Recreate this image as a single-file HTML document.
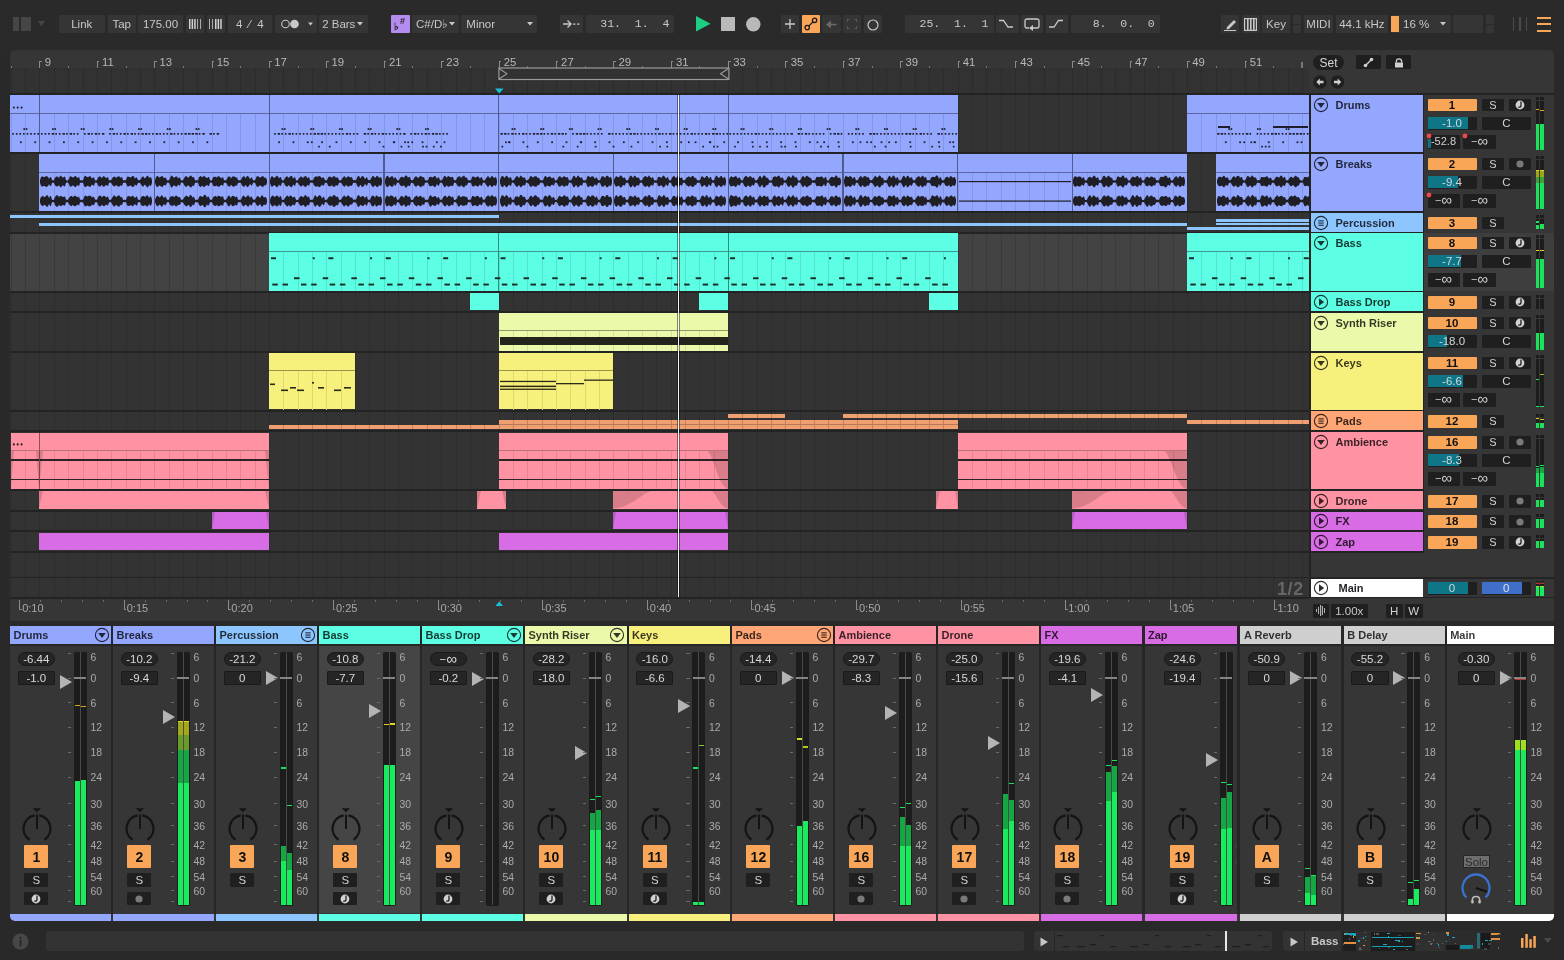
<!DOCTYPE html>
<html><head><meta charset="utf-8"><style>
html,body{margin:0;padding:0;}
body{width:1564px;height:960px;overflow:hidden;background:#292929;position:relative;font-family:"Liberation Sans", sans-serif;}
div,svg{position:absolute;box-sizing:border-box;}
.t{position:absolute;}
</style></head><body><div style="left:0;top:0;width:1564px;height:960px;overflow:hidden;will-change:transform;">
<div style="left:0px;top:0px;width:1564px;height:50px;background:#2a2a2a;"></div>
<div style="left:13px;top:17px;width:5.5px;height:14px;background:#464646;"></div>
<div style="left:20.8px;top:17px;width:10.5px;height:14px;background:#464646;"></div>
<svg style="left:38.2px;top:21.4px;" width="7" height="5.5" viewBox="0 0 7 5.5"><path d="M0 0 L6.8 0 L3.4 5.4 Z" fill="#464646"/></svg>
<div style="left:58.5px;top:15px;width:46.5px;height:18px;background:#353535;border-radius:1px;font-family:'Liberation Sans', sans-serif;font-size:11.5px;color:#c8c8c8;font-weight:normal;line-height:18px;text-align:center;white-space:nowrap;overflow:hidden;">Link</div>
<div style="left:107.7px;top:15px;width:28.1px;height:18px;background:#353535;border-radius:1px;font-family:'Liberation Sans', sans-serif;font-size:11.5px;color:#c8c8c8;font-weight:normal;line-height:18px;text-align:center;white-space:nowrap;overflow:hidden;">Tap</div>
<div style="left:138px;top:15px;width:45px;height:18px;background:#353535;border-radius:1px;font-family:'Liberation Sans', sans-serif;font-size:11.5px;color:#c8c8c8;font-weight:normal;line-height:18px;text-align:center;white-space:nowrap;overflow:hidden;">175.00</div>
<div style="left:186px;top:15px;width:18px;height:18px;background:#353535;border-radius:1px;font-family:'Liberation Sans', sans-serif;font-size:11.5px;color:#c8c8c8;font-weight:normal;line-height:18px;text-align:center;white-space:nowrap;overflow:hidden;"></div>
<svg style="left:189px;top:19px;" width="13" height="10" viewBox="0 0 13 10"><rect x="0" y="0" width="1.5" height="10" fill="#d0d0d0"/><rect x="2.6" y="0" width="1.5" height="10" fill="#d0d0d0"/><rect x="5.2" y="0" width="1.5" height="10" fill="#d0d0d0"/><rect x="8" y="0" width="1" height="10" fill="#aaa"/><rect x="11" y="0" width="1" height="10" fill="#aaa"/></svg>
<div style="left:206.5px;top:15px;width:18.3px;height:18px;background:#353535;border-radius:1px;font-family:'Liberation Sans', sans-serif;font-size:11.5px;color:#c8c8c8;font-weight:normal;line-height:18px;text-align:center;white-space:nowrap;overflow:hidden;"></div>
<svg style="left:209px;top:19px;" width="13" height="10" viewBox="0 0 13 10"><rect x="0" y="0" width="1" height="10" fill="#aaa"/><rect x="3" y="0" width="1" height="10" fill="#aaa"/><rect x="6" y="0" width="1.5" height="10" fill="#d0d0d0"/><rect x="8.6" y="0" width="1.5" height="10" fill="#d0d0d0"/><rect x="11.2" y="0" width="1.5" height="10" fill="#d0d0d0"/></svg>
<div style="left:227.6px;top:15px;width:44.4px;height:18px;background:#353535;border-radius:1px;font-family:'Liberation Sans', sans-serif;font-size:11.5px;color:#c8c8c8;font-weight:normal;line-height:18px;text-align:center;white-space:nowrap;overflow:hidden;">4&nbsp;&nbsp;&#8260;&nbsp;&nbsp;4</div>
<div style="left:275px;top:15px;width:41.7px;height:18px;background:#353535;border-radius:1px;font-family:'Liberation Sans', sans-serif;font-size:11.5px;color:#c8c8c8;font-weight:normal;line-height:18px;text-align:center;white-space:nowrap;overflow:hidden;"></div>
<svg style="left:281px;top:19px;" width="35" height="10" viewBox="0 0 35 10"><circle cx="4.5" cy="5" r="3.8" fill="none" stroke="#c8c8c8" stroke-width="1.1"/><circle cx="13.5" cy="5" r="4.3" fill="#c8c8c8"/><path d="M27 3.5 L32 3.5 L29.5 6.5 Z" fill="#c8c8c8"/></svg>
<div style="left:319.3px;top:15px;width:48.5px;height:18px;background:#353535;border-radius:1px;font-family:'Liberation Sans', sans-serif;font-size:11.5px;color:#c8c8c8;font-weight:normal;line-height:18px;text-align:center;white-space:nowrap;overflow:hidden;">2 Bars&nbsp;&nbsp;&nbsp;</div>
<svg style="left:357px;top:21.5px;" width="6" height="4" viewBox="0 0 6 4"><path d="M0 0 L6 0 L3 3.5 Z" fill="#c8c8c8"/></svg>
<div style="left:391px;top:15px;width:18.6px;height:18px;background:#b48cf0;border-radius:1px;font-family:'Liberation Sans', sans-serif;font-size:11.5px;color:#c8c8c8;font-weight:normal;line-height:18px;text-align:center;white-space:nowrap;overflow:hidden;"></div>
<div class="t" style="left:393.5px;top:22px;font-size:10px;color:#222;font-weight:bold;font-family:'Liberation Sans', sans-serif;line-height:1;white-space:nowrap;">&#9837;</div>
<div class="t" style="left:400px;top:16.5px;font-size:9px;color:#222;font-weight:bold;font-family:'Liberation Sans', sans-serif;line-height:1;white-space:nowrap;">#</div>
<div style="left:411.7px;top:15px;width:47.3px;height:18px;background:#353535;border-radius:1px;font-family:'Liberation Sans', sans-serif;font-size:11.5px;color:#c8c8c8;font-weight:normal;line-height:18px;text-align:center;white-space:nowrap;overflow:hidden;">C#/D&#9837;&nbsp;&nbsp;</div>
<svg style="left:449px;top:21.5px;" width="6" height="4" viewBox="0 0 6 4"><path d="M0 0 L6 0 L3 3.5 Z" fill="#c8c8c8"/></svg>
<div style="left:461.3px;top:15px;width:76.1px;height:18px;background:#353535;border-radius:1px;font-family:'Liberation Sans', sans-serif;font-size:11.5px;color:#c8c8c8;font-weight:normal;line-height:18px;text-align:left;white-space:nowrap;overflow:hidden;box-sizing:border-box;padding:0 5px;">Minor</div>
<svg style="left:527px;top:21.5px;" width="6" height="4" viewBox="0 0 6 4"><path d="M0 0 L6 0 L3 3.5 Z" fill="#c8c8c8"/></svg>
<div style="left:560.4px;top:15px;width:22.2px;height:18px;background:#353535;border-radius:1px;font-family:'Liberation Sans', sans-serif;font-size:11.5px;color:#c8c8c8;font-weight:normal;line-height:18px;text-align:center;white-space:nowrap;overflow:hidden;"></div>
<svg style="left:563px;top:19px;" width="17" height="10" viewBox="0 0 17 10"><path d="M0 5 L8 5 M4.5 1.5 L8 5 L4.5 8.5" stroke="#c8c8c8" stroke-width="1.4" fill="none"/><rect x="10" y="4.5" width="2.5" height="1.2" fill="#c8c8c8"/><rect x="14" y="4.5" width="2.5" height="1.2" fill="#c8c8c8"/></svg>
<div style="left:585.9px;top:15px;width:88.4px;height:18px;background:#353535;border-radius:1px;font-family:'Liberation Mono', monospace;font-size:11.5px;color:#c8c8c8;font-weight:normal;line-height:18px;text-align:right;white-space:nowrap;overflow:hidden;box-sizing:border-box;padding:0 5px;">31.&nbsp;&nbsp;1.&nbsp;&nbsp;4</div>
<svg style="left:696px;top:16.3px;" width="15" height="16" viewBox="0 0 15 16"><path d="M0 0 L14.5 7.8 L0 15.6 Z" fill="#1fcc84"/></svg>
<div style="left:721px;top:17px;width:14.2px;height:14.3px;background:#b9b9b9;"></div>
<svg style="left:746px;top:17px;" width="15" height="15" viewBox="0 0 15 15"><circle cx="7.3" cy="7.3" r="7.2" fill="#b9b9b9"/></svg>
<div style="left:781px;top:15px;width:18px;height:18px;background:#353535;border-radius:1px;font-family:'Liberation Sans', sans-serif;font-size:11.5px;color:#c8c8c8;font-weight:normal;line-height:18px;text-align:center;white-space:nowrap;overflow:hidden;"></div>
<svg style="left:785px;top:19px;" width="10" height="10" viewBox="0 0 10 10"><path d="M5 0 V10 M0 5 H10" stroke="#c8c8c8" stroke-width="1.3"/></svg>
<div style="left:801.5px;top:15px;width:18.5px;height:18px;background:#f9a658;border-radius:1px;font-family:'Liberation Sans', sans-serif;font-size:11.5px;color:#c8c8c8;font-weight:normal;line-height:18px;text-align:center;white-space:nowrap;overflow:hidden;"></div>
<svg style="left:804px;top:17px;" width="14" height="14" viewBox="0 0 14 14"><circle cx="3.2" cy="10.6" r="2.2" fill="none" stroke="#1a1a1a" stroke-width="1.3"/><circle cx="10.6" cy="3.3" r="2.2" fill="none" stroke="#1a1a1a" stroke-width="1.3"/><path d="M4.7 9.1 L9.1 4.8" stroke="#1a1a1a" stroke-width="1.3"/></svg>
<div style="left:822px;top:15px;width:18.6px;height:18px;background:#353535;border-radius:1px;font-family:'Liberation Sans', sans-serif;font-size:11.5px;color:#c8c8c8;font-weight:normal;line-height:18px;text-align:center;white-space:nowrap;overflow:hidden;"></div>
<svg style="left:826px;top:20px;" width="11" height="9" viewBox="0 0 11 9"><path d="M0 4.5 L5 0.5 V8.5 Z" fill="#6a6a6a"/><rect x="4" y="3.8" width="6.5" height="1.5" fill="#6a6a6a"/></svg>
<div style="left:842.8px;top:15px;width:18.1px;height:18px;background:#353535;border-radius:1px;font-family:'Liberation Sans', sans-serif;font-size:11.5px;color:#c8c8c8;font-weight:normal;line-height:18px;text-align:center;white-space:nowrap;overflow:hidden;"></div>
<svg style="left:847px;top:19px;" width="10" height="10" viewBox="0 0 10 10"><path d="M0 3 V0 H3 M7 0 H10 V3 M10 7 V10 H7 M3 10 H0 V7" stroke="#6a6a6a" stroke-width="1.2" fill="none"/></svg>
<div style="left:863.5px;top:15px;width:18.5px;height:18px;background:#353535;border-radius:1px;font-family:'Liberation Sans', sans-serif;font-size:11.5px;color:#c8c8c8;font-weight:normal;line-height:18px;text-align:center;white-space:nowrap;overflow:hidden;"></div>
<svg style="left:866.5px;top:18.5px;" width="12" height="12" viewBox="0 0 12 12"><circle cx="6" cy="6" r="5" fill="none" stroke="#c8c8c8" stroke-width="1.2"/></svg>
<div style="left:905px;top:15px;width:88.5px;height:18px;background:#353535;border-radius:1px;font-family:'Liberation Mono', monospace;font-size:11.5px;color:#c8c8c8;font-weight:normal;line-height:18px;text-align:right;white-space:nowrap;overflow:hidden;box-sizing:border-box;padding:0 5px;">25.&nbsp;&nbsp;1.&nbsp;&nbsp;1</div>
<div style="left:995.9px;top:15px;width:22.8px;height:18px;background:#353535;border-radius:1px;font-family:'Liberation Sans', sans-serif;font-size:11.5px;color:#c8c8c8;font-weight:normal;line-height:18px;text-align:center;white-space:nowrap;overflow:hidden;"></div>
<svg style="left:999px;top:19px;" width="16" height="10" viewBox="0 0 16 10"><path d="M0 1.5 H4.5 L9 8 H14" stroke="#c8c8c8" stroke-width="1.3" fill="none"/></svg>
<div style="left:1020.9px;top:15px;width:22.6px;height:18px;background:#353535;border-radius:1px;font-family:'Liberation Sans', sans-serif;font-size:11.5px;color:#c8c8c8;font-weight:normal;line-height:18px;text-align:center;white-space:nowrap;overflow:hidden;"></div>
<svg style="left:1024px;top:17.5px;" width="17" height="14" viewBox="0 0 17 14"><path d="M9 10 H13 Q15 10 15 8 V3 Q15 1 13 1 H3 Q1 1 1 3 V8 Q1 10 3 10 H5" stroke="#c8c8c8" stroke-width="1.3" fill="none"/><path d="M5 7 L9 10 L5 13 Z" fill="#c8c8c8" transform="translate(14 0) scale(-1 1)"/></svg>
<div style="left:1045.9px;top:15px;width:22.6px;height:18px;background:#353535;border-radius:1px;font-family:'Liberation Sans', sans-serif;font-size:11.5px;color:#c8c8c8;font-weight:normal;line-height:18px;text-align:center;white-space:nowrap;overflow:hidden;"></div>
<svg style="left:1049px;top:19px;" width="16" height="10" viewBox="0 0 16 10"><path d="M0 8 H5 L9.5 1.5 H14" stroke="#c8c8c8" stroke-width="1.3" fill="none"/></svg>
<div style="left:1070.9px;top:15px;width:88.9px;height:18px;background:#353535;border-radius:1px;font-family:'Liberation Mono', monospace;font-size:11.5px;color:#c8c8c8;font-weight:normal;line-height:18px;text-align:right;white-space:nowrap;overflow:hidden;box-sizing:border-box;padding:0 5px;">8.&nbsp;&nbsp;0.&nbsp;&nbsp;0</div>
<div style="left:1221.3px;top:15px;width:17.7px;height:18px;background:#353535;border-radius:1px;font-family:'Liberation Sans', sans-serif;font-size:11.5px;color:#c8c8c8;font-weight:normal;line-height:18px;text-align:center;white-space:nowrap;overflow:hidden;"></div>
<svg style="left:1223px;top:17px;" width="14" height="14" viewBox="0 0 14 14"><path d="M4 10 L11 3 L13 5 L6 12 L3.5 12.5 Z" fill="#c8c8c8"/><rect x="1" y="13" width="12" height="1.2" fill="#c8c8c8"/></svg>
<div style="left:1241.7px;top:15px;width:18.1px;height:18px;background:#353535;border-radius:1px;font-family:'Liberation Sans', sans-serif;font-size:11.5px;color:#c8c8c8;font-weight:normal;line-height:18px;text-align:center;white-space:nowrap;overflow:hidden;"></div>
<svg style="left:1244px;top:17.5px;" width="13" height="13" viewBox="0 0 13 13"><rect x="0.6" y="0.6" width="11.8" height="11.8" fill="none" stroke="#c8c8c8" stroke-width="1.2"/><rect x="3" y="1" width="1.6" height="11" fill="#c8c8c8"/><rect x="6" y="1" width="1.6" height="11" fill="#c8c8c8"/><rect x="9" y="1" width="1.6" height="11" fill="#c8c8c8"/></svg>
<div style="left:1262px;top:15px;width:28px;height:18px;background:#353535;border-radius:1px;font-family:'Liberation Sans', sans-serif;font-size:11.5px;color:#c8c8c8;font-weight:normal;line-height:18px;text-align:center;white-space:nowrap;overflow:hidden;">Key</div>
<div style="left:1292.6px;top:15px;width:8.4px;height:8.7px;background:#353535;border-radius:1px;font-family:'Liberation Sans', sans-serif;font-size:11.5px;color:#c8c8c8;font-weight:normal;line-height:8.7px;text-align:center;white-space:nowrap;overflow:hidden;"></div>
<div style="left:1292.6px;top:24.5px;width:8.4px;height:8.5px;background:#353535;border-radius:1px;font-family:'Liberation Sans', sans-serif;font-size:11.5px;color:#c8c8c8;font-weight:normal;line-height:8.5px;text-align:center;white-space:nowrap;overflow:hidden;"></div>
<div style="left:1303.5px;top:15px;width:29.9px;height:18px;background:#353535;border-radius:1px;font-family:'Liberation Sans', sans-serif;font-size:11.5px;color:#c8c8c8;font-weight:normal;line-height:18px;text-align:center;white-space:nowrap;overflow:hidden;">MIDI</div>
<div style="left:1336px;top:15px;width:51.7px;height:18px;background:#353535;border-radius:1px;font-family:'Liberation Sans', sans-serif;font-size:11.5px;color:#c8c8c8;font-weight:normal;line-height:18px;text-align:center;white-space:nowrap;overflow:hidden;">44.1 kHz</div>
<div style="left:1391px;top:15px;width:59.6px;height:18px;background:#353535;border-radius:1px;font-family:'Liberation Sans', sans-serif;font-size:11.5px;color:#c8c8c8;font-weight:normal;line-height:18px;text-align:left;white-space:nowrap;overflow:hidden;box-sizing:border-box;padding:0 12px;">16 %</div>
<div style="left:1391px;top:16px;width:8px;height:16.4px;background:#f9a658;"></div>
<svg style="left:1440px;top:21.5px;" width="6" height="4" viewBox="0 0 6 4"><path d="M0 0 L6 0 L3 3.5 Z" fill="#c8c8c8"/></svg>
<div style="left:1453.3px;top:15px;width:30.1px;height:18px;background:#353535;border-radius:1px;font-family:'Liberation Sans', sans-serif;font-size:11.5px;color:#c8c8c8;font-weight:normal;line-height:18px;text-align:center;white-space:nowrap;overflow:hidden;"></div>
<div style="left:1485.7px;top:15px;width:8.3px;height:8.7px;background:#353535;border-radius:1px;font-family:'Liberation Sans', sans-serif;font-size:11.5px;color:#c8c8c8;font-weight:normal;line-height:8.7px;text-align:center;white-space:nowrap;overflow:hidden;"></div>
<div style="left:1485.7px;top:24.5px;width:8.3px;height:8.5px;background:#353535;border-radius:1px;font-family:'Liberation Sans', sans-serif;font-size:11.5px;color:#c8c8c8;font-weight:normal;line-height:8.5px;text-align:center;white-space:nowrap;overflow:hidden;"></div>
<div style="left:1512.7px;top:17px;width:1.3px;height:14px;background:#4a4a4a;"></div>
<div style="left:1519.3px;top:17px;width:1.3px;height:14px;background:#4a4a4a;"></div>
<div style="left:1525.8px;top:17px;width:1.3px;height:14px;background:#4a4a4a;"></div>
<div style="left:1537px;top:16.8px;width:13.6px;height:2px;background:#f9a658;"></div>
<div style="left:1537px;top:23.3px;width:13.6px;height:2px;background:#f9a658;"></div>
<div style="left:1537px;top:29.8px;width:13.6px;height:2px;background:#f9a658;"></div>
<div style="left:10px;top:50px;width:1544px;height:571px;background:#363636;border-radius:5px 5px 0 0;"></div>
<div style="left:10px;top:68px;width:1299px;height:25px;background:#323232;"></div>
<div style="left:10px;top:95px;width:1299px;height:503px;background:#333333;"></div>
<div style="left:10px;top:93px;width:1544px;height:2px;background:#232323;"></div>
<div style="left:1309px;top:95px;width:2px;height:503px;background:#232323;"></div>
<div style="left:10.79px;top:68px;width:1px;height:25px;background:#2b2b2b;"></div>
<div style="left:10.79px;top:95px;width:1px;height:503px;background:#2d2d2d;"></div>
<div style="left:25.13px;top:68px;width:1px;height:25px;background:#2b2b2b;"></div>
<div style="left:25.13px;top:95px;width:1px;height:503px;background:#2d2d2d;"></div>
<div style="left:39.48px;top:68px;width:1px;height:25px;background:#2b2b2b;"></div>
<div style="left:39.48px;top:95px;width:1px;height:503px;background:#2d2d2d;"></div>
<div style="left:53.83px;top:68px;width:1px;height:25px;background:#2b2b2b;"></div>
<div style="left:53.83px;top:95px;width:1px;height:503px;background:#2d2d2d;"></div>
<div style="left:68.17px;top:68px;width:1px;height:25px;background:#2b2b2b;"></div>
<div style="left:68.17px;top:95px;width:1px;height:503px;background:#2d2d2d;"></div>
<div style="left:82.52px;top:68px;width:1px;height:25px;background:#2b2b2b;"></div>
<div style="left:82.52px;top:95px;width:1px;height:503px;background:#2d2d2d;"></div>
<div style="left:96.86px;top:68px;width:1px;height:25px;background:#2b2b2b;"></div>
<div style="left:96.86px;top:95px;width:1px;height:503px;background:#2d2d2d;"></div>
<div style="left:111.21px;top:68px;width:1px;height:25px;background:#2b2b2b;"></div>
<div style="left:111.21px;top:95px;width:1px;height:503px;background:#2d2d2d;"></div>
<div style="left:125.55px;top:68px;width:1px;height:25px;background:#2b2b2b;"></div>
<div style="left:125.55px;top:95px;width:1px;height:503px;background:#2d2d2d;"></div>
<div style="left:139.9px;top:68px;width:1px;height:25px;background:#2b2b2b;"></div>
<div style="left:139.9px;top:95px;width:1px;height:503px;background:#2d2d2d;"></div>
<div style="left:154.25px;top:68px;width:1px;height:25px;background:#2b2b2b;"></div>
<div style="left:154.25px;top:95px;width:1px;height:503px;background:#2d2d2d;"></div>
<div style="left:168.59px;top:68px;width:1px;height:25px;background:#2b2b2b;"></div>
<div style="left:168.59px;top:95px;width:1px;height:503px;background:#2d2d2d;"></div>
<div style="left:182.94px;top:68px;width:1px;height:25px;background:#2b2b2b;"></div>
<div style="left:182.94px;top:95px;width:1px;height:503px;background:#2d2d2d;"></div>
<div style="left:197.28px;top:68px;width:1px;height:25px;background:#2b2b2b;"></div>
<div style="left:197.28px;top:95px;width:1px;height:503px;background:#2d2d2d;"></div>
<div style="left:211.63px;top:68px;width:1px;height:25px;background:#2b2b2b;"></div>
<div style="left:211.63px;top:95px;width:1px;height:503px;background:#2d2d2d;"></div>
<div style="left:225.97px;top:68px;width:1px;height:25px;background:#2b2b2b;"></div>
<div style="left:225.97px;top:95px;width:1px;height:503px;background:#2d2d2d;"></div>
<div style="left:240.32px;top:68px;width:1px;height:25px;background:#2b2b2b;"></div>
<div style="left:240.32px;top:95px;width:1px;height:503px;background:#2d2d2d;"></div>
<div style="left:254.66px;top:68px;width:1px;height:25px;background:#2b2b2b;"></div>
<div style="left:254.66px;top:95px;width:1px;height:503px;background:#2d2d2d;"></div>
<div style="left:269.01px;top:68px;width:1px;height:25px;background:#2b2b2b;"></div>
<div style="left:269.01px;top:95px;width:1px;height:503px;background:#2d2d2d;"></div>
<div style="left:283.36px;top:68px;width:1px;height:25px;background:#2b2b2b;"></div>
<div style="left:283.36px;top:95px;width:1px;height:503px;background:#2d2d2d;"></div>
<div style="left:297.7px;top:68px;width:1px;height:25px;background:#2b2b2b;"></div>
<div style="left:297.7px;top:95px;width:1px;height:503px;background:#2d2d2d;"></div>
<div style="left:312.05px;top:68px;width:1px;height:25px;background:#2b2b2b;"></div>
<div style="left:312.05px;top:95px;width:1px;height:503px;background:#2d2d2d;"></div>
<div style="left:326.39px;top:68px;width:1px;height:25px;background:#2b2b2b;"></div>
<div style="left:326.39px;top:95px;width:1px;height:503px;background:#2d2d2d;"></div>
<div style="left:340.74px;top:68px;width:1px;height:25px;background:#2b2b2b;"></div>
<div style="left:340.74px;top:95px;width:1px;height:503px;background:#2d2d2d;"></div>
<div style="left:355.08px;top:68px;width:1px;height:25px;background:#2b2b2b;"></div>
<div style="left:355.08px;top:95px;width:1px;height:503px;background:#2d2d2d;"></div>
<div style="left:369.43px;top:68px;width:1px;height:25px;background:#2b2b2b;"></div>
<div style="left:369.43px;top:95px;width:1px;height:503px;background:#2d2d2d;"></div>
<div style="left:383.78px;top:68px;width:1px;height:25px;background:#2b2b2b;"></div>
<div style="left:383.78px;top:95px;width:1px;height:503px;background:#2d2d2d;"></div>
<div style="left:398.12px;top:68px;width:1px;height:25px;background:#2b2b2b;"></div>
<div style="left:398.12px;top:95px;width:1px;height:503px;background:#2d2d2d;"></div>
<div style="left:412.47px;top:68px;width:1px;height:25px;background:#2b2b2b;"></div>
<div style="left:412.47px;top:95px;width:1px;height:503px;background:#2d2d2d;"></div>
<div style="left:426.81px;top:68px;width:1px;height:25px;background:#2b2b2b;"></div>
<div style="left:426.81px;top:95px;width:1px;height:503px;background:#2d2d2d;"></div>
<div style="left:441.16px;top:68px;width:1px;height:25px;background:#2b2b2b;"></div>
<div style="left:441.16px;top:95px;width:1px;height:503px;background:#2d2d2d;"></div>
<div style="left:455.5px;top:68px;width:1px;height:25px;background:#2b2b2b;"></div>
<div style="left:455.5px;top:95px;width:1px;height:503px;background:#2d2d2d;"></div>
<div style="left:469.85px;top:68px;width:1px;height:25px;background:#2b2b2b;"></div>
<div style="left:469.85px;top:95px;width:1px;height:503px;background:#2d2d2d;"></div>
<div style="left:484.2px;top:68px;width:1px;height:25px;background:#2b2b2b;"></div>
<div style="left:484.2px;top:95px;width:1px;height:503px;background:#2d2d2d;"></div>
<div style="left:498.54px;top:68px;width:1px;height:25px;background:#2b2b2b;"></div>
<div style="left:498.54px;top:95px;width:1px;height:503px;background:#2d2d2d;"></div>
<div style="left:512.89px;top:68px;width:1px;height:25px;background:#2b2b2b;"></div>
<div style="left:512.89px;top:95px;width:1px;height:503px;background:#2d2d2d;"></div>
<div style="left:527.23px;top:68px;width:1px;height:25px;background:#2b2b2b;"></div>
<div style="left:527.23px;top:95px;width:1px;height:503px;background:#2d2d2d;"></div>
<div style="left:541.58px;top:68px;width:1px;height:25px;background:#2b2b2b;"></div>
<div style="left:541.58px;top:95px;width:1px;height:503px;background:#2d2d2d;"></div>
<div style="left:555.92px;top:68px;width:1px;height:25px;background:#2b2b2b;"></div>
<div style="left:555.92px;top:95px;width:1px;height:503px;background:#2d2d2d;"></div>
<div style="left:570.27px;top:68px;width:1px;height:25px;background:#2b2b2b;"></div>
<div style="left:570.27px;top:95px;width:1px;height:503px;background:#2d2d2d;"></div>
<div style="left:584.61px;top:68px;width:1px;height:25px;background:#2b2b2b;"></div>
<div style="left:584.61px;top:95px;width:1px;height:503px;background:#2d2d2d;"></div>
<div style="left:598.96px;top:68px;width:1px;height:25px;background:#2b2b2b;"></div>
<div style="left:598.96px;top:95px;width:1px;height:503px;background:#2d2d2d;"></div>
<div style="left:613.31px;top:68px;width:1px;height:25px;background:#2b2b2b;"></div>
<div style="left:613.31px;top:95px;width:1px;height:503px;background:#2d2d2d;"></div>
<div style="left:627.65px;top:68px;width:1px;height:25px;background:#2b2b2b;"></div>
<div style="left:627.65px;top:95px;width:1px;height:503px;background:#2d2d2d;"></div>
<div style="left:642px;top:68px;width:1px;height:25px;background:#2b2b2b;"></div>
<div style="left:642px;top:95px;width:1px;height:503px;background:#2d2d2d;"></div>
<div style="left:656.34px;top:68px;width:1px;height:25px;background:#2b2b2b;"></div>
<div style="left:656.34px;top:95px;width:1px;height:503px;background:#2d2d2d;"></div>
<div style="left:670.69px;top:68px;width:1px;height:25px;background:#2b2b2b;"></div>
<div style="left:670.69px;top:95px;width:1px;height:503px;background:#2d2d2d;"></div>
<div style="left:685.03px;top:68px;width:1px;height:25px;background:#2b2b2b;"></div>
<div style="left:685.03px;top:95px;width:1px;height:503px;background:#2d2d2d;"></div>
<div style="left:699.38px;top:68px;width:1px;height:25px;background:#2b2b2b;"></div>
<div style="left:699.38px;top:95px;width:1px;height:503px;background:#2d2d2d;"></div>
<div style="left:713.73px;top:68px;width:1px;height:25px;background:#2b2b2b;"></div>
<div style="left:713.73px;top:95px;width:1px;height:503px;background:#2d2d2d;"></div>
<div style="left:728.07px;top:68px;width:1px;height:25px;background:#2b2b2b;"></div>
<div style="left:728.07px;top:95px;width:1px;height:503px;background:#2d2d2d;"></div>
<div style="left:742.42px;top:68px;width:1px;height:25px;background:#2b2b2b;"></div>
<div style="left:742.42px;top:95px;width:1px;height:503px;background:#2d2d2d;"></div>
<div style="left:756.76px;top:68px;width:1px;height:25px;background:#2b2b2b;"></div>
<div style="left:756.76px;top:95px;width:1px;height:503px;background:#2d2d2d;"></div>
<div style="left:771.11px;top:68px;width:1px;height:25px;background:#2b2b2b;"></div>
<div style="left:771.11px;top:95px;width:1px;height:503px;background:#2d2d2d;"></div>
<div style="left:785.45px;top:68px;width:1px;height:25px;background:#2b2b2b;"></div>
<div style="left:785.45px;top:95px;width:1px;height:503px;background:#2d2d2d;"></div>
<div style="left:799.8px;top:68px;width:1px;height:25px;background:#2b2b2b;"></div>
<div style="left:799.8px;top:95px;width:1px;height:503px;background:#2d2d2d;"></div>
<div style="left:814.15px;top:68px;width:1px;height:25px;background:#2b2b2b;"></div>
<div style="left:814.15px;top:95px;width:1px;height:503px;background:#2d2d2d;"></div>
<div style="left:828.49px;top:68px;width:1px;height:25px;background:#2b2b2b;"></div>
<div style="left:828.49px;top:95px;width:1px;height:503px;background:#2d2d2d;"></div>
<div style="left:842.84px;top:68px;width:1px;height:25px;background:#2b2b2b;"></div>
<div style="left:842.84px;top:95px;width:1px;height:503px;background:#2d2d2d;"></div>
<div style="left:857.18px;top:68px;width:1px;height:25px;background:#2b2b2b;"></div>
<div style="left:857.18px;top:95px;width:1px;height:503px;background:#2d2d2d;"></div>
<div style="left:871.53px;top:68px;width:1px;height:25px;background:#2b2b2b;"></div>
<div style="left:871.53px;top:95px;width:1px;height:503px;background:#2d2d2d;"></div>
<div style="left:885.87px;top:68px;width:1px;height:25px;background:#2b2b2b;"></div>
<div style="left:885.87px;top:95px;width:1px;height:503px;background:#2d2d2d;"></div>
<div style="left:900.22px;top:68px;width:1px;height:25px;background:#2b2b2b;"></div>
<div style="left:900.22px;top:95px;width:1px;height:503px;background:#2d2d2d;"></div>
<div style="left:914.56px;top:68px;width:1px;height:25px;background:#2b2b2b;"></div>
<div style="left:914.56px;top:95px;width:1px;height:503px;background:#2d2d2d;"></div>
<div style="left:928.91px;top:68px;width:1px;height:25px;background:#2b2b2b;"></div>
<div style="left:928.91px;top:95px;width:1px;height:503px;background:#2d2d2d;"></div>
<div style="left:943.26px;top:68px;width:1px;height:25px;background:#2b2b2b;"></div>
<div style="left:943.26px;top:95px;width:1px;height:503px;background:#2d2d2d;"></div>
<div style="left:957.6px;top:68px;width:1px;height:25px;background:#2b2b2b;"></div>
<div style="left:957.6px;top:95px;width:1px;height:503px;background:#2d2d2d;"></div>
<div style="left:971.95px;top:68px;width:1px;height:25px;background:#2b2b2b;"></div>
<div style="left:971.95px;top:95px;width:1px;height:503px;background:#2d2d2d;"></div>
<div style="left:986.29px;top:68px;width:1px;height:25px;background:#2b2b2b;"></div>
<div style="left:986.29px;top:95px;width:1px;height:503px;background:#2d2d2d;"></div>
<div style="left:1000.64px;top:68px;width:1px;height:25px;background:#2b2b2b;"></div>
<div style="left:1000.64px;top:95px;width:1px;height:503px;background:#2d2d2d;"></div>
<div style="left:1014.98px;top:68px;width:1px;height:25px;background:#2b2b2b;"></div>
<div style="left:1014.98px;top:95px;width:1px;height:503px;background:#2d2d2d;"></div>
<div style="left:1029.33px;top:68px;width:1px;height:25px;background:#2b2b2b;"></div>
<div style="left:1029.33px;top:95px;width:1px;height:503px;background:#2d2d2d;"></div>
<div style="left:1043.68px;top:68px;width:1px;height:25px;background:#2b2b2b;"></div>
<div style="left:1043.68px;top:95px;width:1px;height:503px;background:#2d2d2d;"></div>
<div style="left:1058.02px;top:68px;width:1px;height:25px;background:#2b2b2b;"></div>
<div style="left:1058.02px;top:95px;width:1px;height:503px;background:#2d2d2d;"></div>
<div style="left:1072.37px;top:68px;width:1px;height:25px;background:#2b2b2b;"></div>
<div style="left:1072.37px;top:95px;width:1px;height:503px;background:#2d2d2d;"></div>
<div style="left:1086.71px;top:68px;width:1px;height:25px;background:#2b2b2b;"></div>
<div style="left:1086.71px;top:95px;width:1px;height:503px;background:#2d2d2d;"></div>
<div style="left:1101.06px;top:68px;width:1px;height:25px;background:#2b2b2b;"></div>
<div style="left:1101.06px;top:95px;width:1px;height:503px;background:#2d2d2d;"></div>
<div style="left:1115.4px;top:68px;width:1px;height:25px;background:#2b2b2b;"></div>
<div style="left:1115.4px;top:95px;width:1px;height:503px;background:#2d2d2d;"></div>
<div style="left:1129.75px;top:68px;width:1px;height:25px;background:#2b2b2b;"></div>
<div style="left:1129.75px;top:95px;width:1px;height:503px;background:#2d2d2d;"></div>
<div style="left:1144.1px;top:68px;width:1px;height:25px;background:#2b2b2b;"></div>
<div style="left:1144.1px;top:95px;width:1px;height:503px;background:#2d2d2d;"></div>
<div style="left:1158.44px;top:68px;width:1px;height:25px;background:#2b2b2b;"></div>
<div style="left:1158.44px;top:95px;width:1px;height:503px;background:#2d2d2d;"></div>
<div style="left:1172.79px;top:68px;width:1px;height:25px;background:#2b2b2b;"></div>
<div style="left:1172.79px;top:95px;width:1px;height:503px;background:#2d2d2d;"></div>
<div style="left:1187.13px;top:68px;width:1px;height:25px;background:#2b2b2b;"></div>
<div style="left:1187.13px;top:95px;width:1px;height:503px;background:#2d2d2d;"></div>
<div style="left:1201.48px;top:68px;width:1px;height:25px;background:#2b2b2b;"></div>
<div style="left:1201.48px;top:95px;width:1px;height:503px;background:#2d2d2d;"></div>
<div style="left:1215.82px;top:68px;width:1px;height:25px;background:#2b2b2b;"></div>
<div style="left:1215.82px;top:95px;width:1px;height:503px;background:#2d2d2d;"></div>
<div style="left:1230.17px;top:68px;width:1px;height:25px;background:#2b2b2b;"></div>
<div style="left:1230.17px;top:95px;width:1px;height:503px;background:#2d2d2d;"></div>
<div style="left:1244.51px;top:68px;width:1px;height:25px;background:#2b2b2b;"></div>
<div style="left:1244.51px;top:95px;width:1px;height:503px;background:#2d2d2d;"></div>
<div style="left:1258.86px;top:68px;width:1px;height:25px;background:#2b2b2b;"></div>
<div style="left:1258.86px;top:95px;width:1px;height:503px;background:#2d2d2d;"></div>
<div style="left:1273.21px;top:68px;width:1px;height:25px;background:#2b2b2b;"></div>
<div style="left:1273.21px;top:95px;width:1px;height:503px;background:#2d2d2d;"></div>
<div style="left:1287.55px;top:68px;width:1px;height:25px;background:#2b2b2b;"></div>
<div style="left:1287.55px;top:95px;width:1px;height:503px;background:#2d2d2d;"></div>
<div style="left:1301.9px;top:68px;width:1px;height:25px;background:#2b2b2b;"></div>
<div style="left:1301.9px;top:95px;width:1px;height:503px;background:#2d2d2d;"></div>
<div style="left:10px;top:233px;width:1299px;height:57.5px;background:#434343;"></div>
<div style="left:10.79px;top:233px;width:1px;height:57.5px;background:#3a3a3a;"></div>
<div style="left:25.13px;top:233px;width:1px;height:57.5px;background:#3a3a3a;"></div>
<div style="left:39.48px;top:233px;width:1px;height:57.5px;background:#3a3a3a;"></div>
<div style="left:53.83px;top:233px;width:1px;height:57.5px;background:#3a3a3a;"></div>
<div style="left:68.17px;top:233px;width:1px;height:57.5px;background:#3a3a3a;"></div>
<div style="left:82.52px;top:233px;width:1px;height:57.5px;background:#3a3a3a;"></div>
<div style="left:96.86px;top:233px;width:1px;height:57.5px;background:#3a3a3a;"></div>
<div style="left:111.21px;top:233px;width:1px;height:57.5px;background:#3a3a3a;"></div>
<div style="left:125.55px;top:233px;width:1px;height:57.5px;background:#3a3a3a;"></div>
<div style="left:139.9px;top:233px;width:1px;height:57.5px;background:#3a3a3a;"></div>
<div style="left:154.25px;top:233px;width:1px;height:57.5px;background:#3a3a3a;"></div>
<div style="left:168.59px;top:233px;width:1px;height:57.5px;background:#3a3a3a;"></div>
<div style="left:182.94px;top:233px;width:1px;height:57.5px;background:#3a3a3a;"></div>
<div style="left:197.28px;top:233px;width:1px;height:57.5px;background:#3a3a3a;"></div>
<div style="left:211.63px;top:233px;width:1px;height:57.5px;background:#3a3a3a;"></div>
<div style="left:225.97px;top:233px;width:1px;height:57.5px;background:#3a3a3a;"></div>
<div style="left:240.32px;top:233px;width:1px;height:57.5px;background:#3a3a3a;"></div>
<div style="left:254.66px;top:233px;width:1px;height:57.5px;background:#3a3a3a;"></div>
<div style="left:269.01px;top:233px;width:1px;height:57.5px;background:#3a3a3a;"></div>
<div style="left:283.36px;top:233px;width:1px;height:57.5px;background:#3a3a3a;"></div>
<div style="left:297.7px;top:233px;width:1px;height:57.5px;background:#3a3a3a;"></div>
<div style="left:312.05px;top:233px;width:1px;height:57.5px;background:#3a3a3a;"></div>
<div style="left:326.39px;top:233px;width:1px;height:57.5px;background:#3a3a3a;"></div>
<div style="left:340.74px;top:233px;width:1px;height:57.5px;background:#3a3a3a;"></div>
<div style="left:355.08px;top:233px;width:1px;height:57.5px;background:#3a3a3a;"></div>
<div style="left:369.43px;top:233px;width:1px;height:57.5px;background:#3a3a3a;"></div>
<div style="left:383.78px;top:233px;width:1px;height:57.5px;background:#3a3a3a;"></div>
<div style="left:398.12px;top:233px;width:1px;height:57.5px;background:#3a3a3a;"></div>
<div style="left:412.47px;top:233px;width:1px;height:57.5px;background:#3a3a3a;"></div>
<div style="left:426.81px;top:233px;width:1px;height:57.5px;background:#3a3a3a;"></div>
<div style="left:441.16px;top:233px;width:1px;height:57.5px;background:#3a3a3a;"></div>
<div style="left:455.5px;top:233px;width:1px;height:57.5px;background:#3a3a3a;"></div>
<div style="left:469.85px;top:233px;width:1px;height:57.5px;background:#3a3a3a;"></div>
<div style="left:484.2px;top:233px;width:1px;height:57.5px;background:#3a3a3a;"></div>
<div style="left:498.54px;top:233px;width:1px;height:57.5px;background:#3a3a3a;"></div>
<div style="left:512.89px;top:233px;width:1px;height:57.5px;background:#3a3a3a;"></div>
<div style="left:527.23px;top:233px;width:1px;height:57.5px;background:#3a3a3a;"></div>
<div style="left:541.58px;top:233px;width:1px;height:57.5px;background:#3a3a3a;"></div>
<div style="left:555.92px;top:233px;width:1px;height:57.5px;background:#3a3a3a;"></div>
<div style="left:570.27px;top:233px;width:1px;height:57.5px;background:#3a3a3a;"></div>
<div style="left:584.61px;top:233px;width:1px;height:57.5px;background:#3a3a3a;"></div>
<div style="left:598.96px;top:233px;width:1px;height:57.5px;background:#3a3a3a;"></div>
<div style="left:613.31px;top:233px;width:1px;height:57.5px;background:#3a3a3a;"></div>
<div style="left:627.65px;top:233px;width:1px;height:57.5px;background:#3a3a3a;"></div>
<div style="left:642px;top:233px;width:1px;height:57.5px;background:#3a3a3a;"></div>
<div style="left:656.34px;top:233px;width:1px;height:57.5px;background:#3a3a3a;"></div>
<div style="left:670.69px;top:233px;width:1px;height:57.5px;background:#3a3a3a;"></div>
<div style="left:685.03px;top:233px;width:1px;height:57.5px;background:#3a3a3a;"></div>
<div style="left:699.38px;top:233px;width:1px;height:57.5px;background:#3a3a3a;"></div>
<div style="left:713.73px;top:233px;width:1px;height:57.5px;background:#3a3a3a;"></div>
<div style="left:728.07px;top:233px;width:1px;height:57.5px;background:#3a3a3a;"></div>
<div style="left:742.42px;top:233px;width:1px;height:57.5px;background:#3a3a3a;"></div>
<div style="left:756.76px;top:233px;width:1px;height:57.5px;background:#3a3a3a;"></div>
<div style="left:771.11px;top:233px;width:1px;height:57.5px;background:#3a3a3a;"></div>
<div style="left:785.45px;top:233px;width:1px;height:57.5px;background:#3a3a3a;"></div>
<div style="left:799.8px;top:233px;width:1px;height:57.5px;background:#3a3a3a;"></div>
<div style="left:814.15px;top:233px;width:1px;height:57.5px;background:#3a3a3a;"></div>
<div style="left:828.49px;top:233px;width:1px;height:57.5px;background:#3a3a3a;"></div>
<div style="left:842.84px;top:233px;width:1px;height:57.5px;background:#3a3a3a;"></div>
<div style="left:857.18px;top:233px;width:1px;height:57.5px;background:#3a3a3a;"></div>
<div style="left:871.53px;top:233px;width:1px;height:57.5px;background:#3a3a3a;"></div>
<div style="left:885.87px;top:233px;width:1px;height:57.5px;background:#3a3a3a;"></div>
<div style="left:900.22px;top:233px;width:1px;height:57.5px;background:#3a3a3a;"></div>
<div style="left:914.56px;top:233px;width:1px;height:57.5px;background:#3a3a3a;"></div>
<div style="left:928.91px;top:233px;width:1px;height:57.5px;background:#3a3a3a;"></div>
<div style="left:943.26px;top:233px;width:1px;height:57.5px;background:#3a3a3a;"></div>
<div style="left:957.6px;top:233px;width:1px;height:57.5px;background:#3a3a3a;"></div>
<div style="left:971.95px;top:233px;width:1px;height:57.5px;background:#3a3a3a;"></div>
<div style="left:986.29px;top:233px;width:1px;height:57.5px;background:#3a3a3a;"></div>
<div style="left:1000.64px;top:233px;width:1px;height:57.5px;background:#3a3a3a;"></div>
<div style="left:1014.98px;top:233px;width:1px;height:57.5px;background:#3a3a3a;"></div>
<div style="left:1029.33px;top:233px;width:1px;height:57.5px;background:#3a3a3a;"></div>
<div style="left:1043.68px;top:233px;width:1px;height:57.5px;background:#3a3a3a;"></div>
<div style="left:1058.02px;top:233px;width:1px;height:57.5px;background:#3a3a3a;"></div>
<div style="left:1072.37px;top:233px;width:1px;height:57.5px;background:#3a3a3a;"></div>
<div style="left:1086.71px;top:233px;width:1px;height:57.5px;background:#3a3a3a;"></div>
<div style="left:1101.06px;top:233px;width:1px;height:57.5px;background:#3a3a3a;"></div>
<div style="left:1115.4px;top:233px;width:1px;height:57.5px;background:#3a3a3a;"></div>
<div style="left:1129.75px;top:233px;width:1px;height:57.5px;background:#3a3a3a;"></div>
<div style="left:1144.1px;top:233px;width:1px;height:57.5px;background:#3a3a3a;"></div>
<div style="left:1158.44px;top:233px;width:1px;height:57.5px;background:#3a3a3a;"></div>
<div style="left:1172.79px;top:233px;width:1px;height:57.5px;background:#3a3a3a;"></div>
<div style="left:1187.13px;top:233px;width:1px;height:57.5px;background:#3a3a3a;"></div>
<div style="left:1201.48px;top:233px;width:1px;height:57.5px;background:#3a3a3a;"></div>
<div style="left:1215.82px;top:233px;width:1px;height:57.5px;background:#3a3a3a;"></div>
<div style="left:1230.17px;top:233px;width:1px;height:57.5px;background:#3a3a3a;"></div>
<div style="left:1244.51px;top:233px;width:1px;height:57.5px;background:#3a3a3a;"></div>
<div style="left:1258.86px;top:233px;width:1px;height:57.5px;background:#3a3a3a;"></div>
<div style="left:1273.21px;top:233px;width:1px;height:57.5px;background:#3a3a3a;"></div>
<div style="left:1287.55px;top:233px;width:1px;height:57.5px;background:#3a3a3a;"></div>
<div style="left:1301.9px;top:233px;width:1px;height:57.5px;background:#3a3a3a;"></div>
<div style="left:10px;top:152px;width:1544px;height:2px;background:#232323;"></div>
<div style="left:10px;top:211px;width:1544px;height:2px;background:#232323;"></div>
<div style="left:10px;top:231.5px;width:1544px;height:2px;background:#232323;"></div>
<div style="left:10px;top:290.5px;width:1544px;height:2px;background:#232323;"></div>
<div style="left:10px;top:311.3px;width:1544px;height:2px;background:#232323;"></div>
<div style="left:10px;top:351px;width:1544px;height:2px;background:#232323;"></div>
<div style="left:10px;top:409.5px;width:1544px;height:2px;background:#232323;"></div>
<div style="left:10px;top:430.3px;width:1544px;height:2px;background:#232323;"></div>
<div style="left:10px;top:489px;width:1544px;height:2px;background:#232323;"></div>
<div style="left:10px;top:509.5px;width:1544px;height:2px;background:#232323;"></div>
<div style="left:10px;top:530px;width:1544px;height:2px;background:#232323;"></div>
<div style="left:10px;top:550.8px;width:1544px;height:2px;background:#232323;"></div>
<div style="left:10px;top:550.8px;width:1544px;height:2px;background:#232323;"></div>
<div style="left:10px;top:576.5px;width:1544px;height:1.8px;background:#232323;"></div>
<div style="left:10px;top:597px;width:1299px;height:1.5px;background:#232323;"></div>
<div style="left:10.79px;top:66px;width:1px;height:1.5px;background:#777;"></div>
<div style="left:39.48px;top:60.5px;width:1px;height:7px;background:#8a8a8a;"></div>
<div style="left:39.48px;top:60.5px;width:2.5px;height:1px;background:#8a8a8a;"></div>
<div class="t" style="left:44.68px;top:57px;font-size:11.3px;color:#b8b8b8;font-weight:normal;font-family:'Liberation Sans', sans-serif;line-height:1;white-space:nowrap;">9</div>
<div style="left:68.17px;top:66px;width:1px;height:1.5px;background:#777;"></div>
<div style="left:96.86px;top:60.5px;width:1px;height:7px;background:#8a8a8a;"></div>
<div style="left:96.86px;top:60.5px;width:2.5px;height:1px;background:#8a8a8a;"></div>
<div class="t" style="left:102.06px;top:57px;font-size:11.3px;color:#b8b8b8;font-weight:normal;font-family:'Liberation Sans', sans-serif;line-height:1;white-space:nowrap;">11</div>
<div style="left:125.55px;top:66px;width:1px;height:1.5px;background:#777;"></div>
<div style="left:154.25px;top:60.5px;width:1px;height:7px;background:#8a8a8a;"></div>
<div style="left:154.25px;top:60.5px;width:2.5px;height:1px;background:#8a8a8a;"></div>
<div class="t" style="left:159.45px;top:57px;font-size:11.3px;color:#b8b8b8;font-weight:normal;font-family:'Liberation Sans', sans-serif;line-height:1;white-space:nowrap;">13</div>
<div style="left:182.94px;top:66px;width:1px;height:1.5px;background:#777;"></div>
<div style="left:211.63px;top:60.5px;width:1px;height:7px;background:#8a8a8a;"></div>
<div style="left:211.63px;top:60.5px;width:2.5px;height:1px;background:#8a8a8a;"></div>
<div class="t" style="left:216.83px;top:57px;font-size:11.3px;color:#b8b8b8;font-weight:normal;font-family:'Liberation Sans', sans-serif;line-height:1;white-space:nowrap;">15</div>
<div style="left:240.32px;top:66px;width:1px;height:1.5px;background:#777;"></div>
<div style="left:269.01px;top:60.5px;width:1px;height:7px;background:#8a8a8a;"></div>
<div style="left:269.01px;top:60.5px;width:2.5px;height:1px;background:#8a8a8a;"></div>
<div class="t" style="left:274.21px;top:57px;font-size:11.3px;color:#b8b8b8;font-weight:normal;font-family:'Liberation Sans', sans-serif;line-height:1;white-space:nowrap;">17</div>
<div style="left:297.7px;top:66px;width:1px;height:1.5px;background:#777;"></div>
<div style="left:326.39px;top:60.5px;width:1px;height:7px;background:#8a8a8a;"></div>
<div style="left:326.39px;top:60.5px;width:2.5px;height:1px;background:#8a8a8a;"></div>
<div class="t" style="left:331.59px;top:57px;font-size:11.3px;color:#b8b8b8;font-weight:normal;font-family:'Liberation Sans', sans-serif;line-height:1;white-space:nowrap;">19</div>
<div style="left:355.08px;top:66px;width:1px;height:1.5px;background:#777;"></div>
<div style="left:383.78px;top:60.5px;width:1px;height:7px;background:#8a8a8a;"></div>
<div style="left:383.78px;top:60.5px;width:2.5px;height:1px;background:#8a8a8a;"></div>
<div class="t" style="left:388.98px;top:57px;font-size:11.3px;color:#b8b8b8;font-weight:normal;font-family:'Liberation Sans', sans-serif;line-height:1;white-space:nowrap;">21</div>
<div style="left:412.47px;top:66px;width:1px;height:1.5px;background:#777;"></div>
<div style="left:441.16px;top:60.5px;width:1px;height:7px;background:#8a8a8a;"></div>
<div style="left:441.16px;top:60.5px;width:2.5px;height:1px;background:#8a8a8a;"></div>
<div class="t" style="left:446.36px;top:57px;font-size:11.3px;color:#b8b8b8;font-weight:normal;font-family:'Liberation Sans', sans-serif;line-height:1;white-space:nowrap;">23</div>
<div style="left:469.85px;top:66px;width:1px;height:1.5px;background:#777;"></div>
<div style="left:498.54px;top:60.5px;width:1px;height:7px;background:#8a8a8a;"></div>
<div style="left:498.54px;top:60.5px;width:2.5px;height:1px;background:#8a8a8a;"></div>
<div class="t" style="left:503.74px;top:57px;font-size:11.3px;color:#b8b8b8;font-weight:normal;font-family:'Liberation Sans', sans-serif;line-height:1;white-space:nowrap;">25</div>
<div style="left:527.23px;top:66px;width:1px;height:1.5px;background:#777;"></div>
<div style="left:555.92px;top:60.5px;width:1px;height:7px;background:#8a8a8a;"></div>
<div style="left:555.92px;top:60.5px;width:2.5px;height:1px;background:#8a8a8a;"></div>
<div class="t" style="left:561.12px;top:57px;font-size:11.3px;color:#b8b8b8;font-weight:normal;font-family:'Liberation Sans', sans-serif;line-height:1;white-space:nowrap;">27</div>
<div style="left:584.61px;top:66px;width:1px;height:1.5px;background:#777;"></div>
<div style="left:613.31px;top:60.5px;width:1px;height:7px;background:#8a8a8a;"></div>
<div style="left:613.31px;top:60.5px;width:2.5px;height:1px;background:#8a8a8a;"></div>
<div class="t" style="left:618.51px;top:57px;font-size:11.3px;color:#b8b8b8;font-weight:normal;font-family:'Liberation Sans', sans-serif;line-height:1;white-space:nowrap;">29</div>
<div style="left:642px;top:66px;width:1px;height:1.5px;background:#777;"></div>
<div style="left:670.69px;top:60.5px;width:1px;height:7px;background:#8a8a8a;"></div>
<div style="left:670.69px;top:60.5px;width:2.5px;height:1px;background:#8a8a8a;"></div>
<div class="t" style="left:675.89px;top:57px;font-size:11.3px;color:#b8b8b8;font-weight:normal;font-family:'Liberation Sans', sans-serif;line-height:1;white-space:nowrap;">31</div>
<div style="left:699.38px;top:66px;width:1px;height:1.5px;background:#777;"></div>
<div style="left:728.07px;top:60.5px;width:1px;height:7px;background:#8a8a8a;"></div>
<div style="left:728.07px;top:60.5px;width:2.5px;height:1px;background:#8a8a8a;"></div>
<div class="t" style="left:733.27px;top:57px;font-size:11.3px;color:#b8b8b8;font-weight:normal;font-family:'Liberation Sans', sans-serif;line-height:1;white-space:nowrap;">33</div>
<div style="left:756.76px;top:66px;width:1px;height:1.5px;background:#777;"></div>
<div style="left:785.45px;top:60.5px;width:1px;height:7px;background:#8a8a8a;"></div>
<div style="left:785.45px;top:60.5px;width:2.5px;height:1px;background:#8a8a8a;"></div>
<div class="t" style="left:790.65px;top:57px;font-size:11.3px;color:#b8b8b8;font-weight:normal;font-family:'Liberation Sans', sans-serif;line-height:1;white-space:nowrap;">35</div>
<div style="left:814.15px;top:66px;width:1px;height:1.5px;background:#777;"></div>
<div style="left:842.84px;top:60.5px;width:1px;height:7px;background:#8a8a8a;"></div>
<div style="left:842.84px;top:60.5px;width:2.5px;height:1px;background:#8a8a8a;"></div>
<div class="t" style="left:848.04px;top:57px;font-size:11.3px;color:#b8b8b8;font-weight:normal;font-family:'Liberation Sans', sans-serif;line-height:1;white-space:nowrap;">37</div>
<div style="left:871.53px;top:66px;width:1px;height:1.5px;background:#777;"></div>
<div style="left:900.22px;top:60.5px;width:1px;height:7px;background:#8a8a8a;"></div>
<div style="left:900.22px;top:60.5px;width:2.5px;height:1px;background:#8a8a8a;"></div>
<div class="t" style="left:905.42px;top:57px;font-size:11.3px;color:#b8b8b8;font-weight:normal;font-family:'Liberation Sans', sans-serif;line-height:1;white-space:nowrap;">39</div>
<div style="left:928.91px;top:66px;width:1px;height:1.5px;background:#777;"></div>
<div style="left:957.6px;top:60.5px;width:1px;height:7px;background:#8a8a8a;"></div>
<div style="left:957.6px;top:60.5px;width:2.5px;height:1px;background:#8a8a8a;"></div>
<div class="t" style="left:962.8px;top:57px;font-size:11.3px;color:#b8b8b8;font-weight:normal;font-family:'Liberation Sans', sans-serif;line-height:1;white-space:nowrap;">41</div>
<div style="left:986.29px;top:66px;width:1px;height:1.5px;background:#777;"></div>
<div style="left:1014.98px;top:60.5px;width:1px;height:7px;background:#8a8a8a;"></div>
<div style="left:1014.98px;top:60.5px;width:2.5px;height:1px;background:#8a8a8a;"></div>
<div class="t" style="left:1020.18px;top:57px;font-size:11.3px;color:#b8b8b8;font-weight:normal;font-family:'Liberation Sans', sans-serif;line-height:1;white-space:nowrap;">43</div>
<div style="left:1043.68px;top:66px;width:1px;height:1.5px;background:#777;"></div>
<div style="left:1072.37px;top:60.5px;width:1px;height:7px;background:#8a8a8a;"></div>
<div style="left:1072.37px;top:60.5px;width:2.5px;height:1px;background:#8a8a8a;"></div>
<div class="t" style="left:1077.57px;top:57px;font-size:11.3px;color:#b8b8b8;font-weight:normal;font-family:'Liberation Sans', sans-serif;line-height:1;white-space:nowrap;">45</div>
<div style="left:1101.06px;top:66px;width:1px;height:1.5px;background:#777;"></div>
<div style="left:1129.75px;top:60.5px;width:1px;height:7px;background:#8a8a8a;"></div>
<div style="left:1129.75px;top:60.5px;width:2.5px;height:1px;background:#8a8a8a;"></div>
<div class="t" style="left:1134.95px;top:57px;font-size:11.3px;color:#b8b8b8;font-weight:normal;font-family:'Liberation Sans', sans-serif;line-height:1;white-space:nowrap;">47</div>
<div style="left:1158.44px;top:66px;width:1px;height:1.5px;background:#777;"></div>
<div style="left:1187.13px;top:60.5px;width:1px;height:7px;background:#8a8a8a;"></div>
<div style="left:1187.13px;top:60.5px;width:2.5px;height:1px;background:#8a8a8a;"></div>
<div class="t" style="left:1192.33px;top:57px;font-size:11.3px;color:#b8b8b8;font-weight:normal;font-family:'Liberation Sans', sans-serif;line-height:1;white-space:nowrap;">49</div>
<div style="left:1215.82px;top:66px;width:1px;height:1.5px;background:#777;"></div>
<div style="left:1244.51px;top:60.5px;width:1px;height:7px;background:#8a8a8a;"></div>
<div style="left:1244.51px;top:60.5px;width:2.5px;height:1px;background:#8a8a8a;"></div>
<div class="t" style="left:1249.71px;top:57px;font-size:11.3px;color:#b8b8b8;font-weight:normal;font-family:'Liberation Sans', sans-serif;line-height:1;white-space:nowrap;">51</div>
<div style="left:1273.21px;top:66px;width:1px;height:1.5px;background:#777;"></div>
<div style="left:1301.9px;top:62px;width:1px;height:6px;background:#777;"></div>
<svg style="left:497px;top:67px" width="234" height="14" viewBox="0 0 234 14"><rect x="1.9" y="1" width="230" height="11.5" fill="#323232" stroke="#9a9a9a" stroke-width="1.2"/><path d="M2 1.5 L10 6.8 L2 12" fill="none" stroke="#9a9a9a" stroke-width="1.1"/><path d="M231.5 1.5 L223.5 6.8 L231.5 12" fill="none" stroke="#9a9a9a" stroke-width="1.1"/></svg>
<svg style="left:494.5px;top:88px;" width="9" height="6" viewBox="0 0 9 6"><path d="M0 0.5 H8.5 L4.25 5.5 Z" fill="#19c0d6"/></svg>
<div style="left:10px;top:95px;width:947.6px;height:57px;background:#94a7ff;"></div>
<div style="left:10.79px;top:113px;width:1px;height:39px;background:#8596e5;"></div>
<div style="left:25.13px;top:113px;width:1px;height:39px;background:#8596e5;"></div>
<div style="left:39.48px;top:113px;width:1px;height:39px;background:#8596e5;"></div>
<div style="left:53.83px;top:113px;width:1px;height:39px;background:#8596e5;"></div>
<div style="left:68.17px;top:113px;width:1px;height:39px;background:#8596e5;"></div>
<div style="left:82.52px;top:113px;width:1px;height:39px;background:#8596e5;"></div>
<div style="left:96.86px;top:113px;width:1px;height:39px;background:#8596e5;"></div>
<div style="left:111.21px;top:113px;width:1px;height:39px;background:#8596e5;"></div>
<div style="left:125.55px;top:113px;width:1px;height:39px;background:#8596e5;"></div>
<div style="left:139.9px;top:113px;width:1px;height:39px;background:#8596e5;"></div>
<div style="left:154.25px;top:113px;width:1px;height:39px;background:#8596e5;"></div>
<div style="left:168.59px;top:113px;width:1px;height:39px;background:#8596e5;"></div>
<div style="left:182.94px;top:113px;width:1px;height:39px;background:#8596e5;"></div>
<div style="left:197.28px;top:113px;width:1px;height:39px;background:#8596e5;"></div>
<div style="left:211.63px;top:113px;width:1px;height:39px;background:#8596e5;"></div>
<div style="left:225.97px;top:113px;width:1px;height:39px;background:#8596e5;"></div>
<div style="left:240.32px;top:113px;width:1px;height:39px;background:#8596e5;"></div>
<div style="left:254.66px;top:113px;width:1px;height:39px;background:#8596e5;"></div>
<div style="left:269.01px;top:113px;width:1px;height:39px;background:#8596e5;"></div>
<div style="left:283.36px;top:113px;width:1px;height:39px;background:#8596e5;"></div>
<div style="left:297.7px;top:113px;width:1px;height:39px;background:#8596e5;"></div>
<div style="left:312.05px;top:113px;width:1px;height:39px;background:#8596e5;"></div>
<div style="left:326.39px;top:113px;width:1px;height:39px;background:#8596e5;"></div>
<div style="left:340.74px;top:113px;width:1px;height:39px;background:#8596e5;"></div>
<div style="left:355.08px;top:113px;width:1px;height:39px;background:#8596e5;"></div>
<div style="left:369.43px;top:113px;width:1px;height:39px;background:#8596e5;"></div>
<div style="left:383.78px;top:113px;width:1px;height:39px;background:#8596e5;"></div>
<div style="left:398.12px;top:113px;width:1px;height:39px;background:#8596e5;"></div>
<div style="left:412.47px;top:113px;width:1px;height:39px;background:#8596e5;"></div>
<div style="left:426.81px;top:113px;width:1px;height:39px;background:#8596e5;"></div>
<div style="left:441.16px;top:113px;width:1px;height:39px;background:#8596e5;"></div>
<div style="left:455.5px;top:113px;width:1px;height:39px;background:#8596e5;"></div>
<div style="left:469.85px;top:113px;width:1px;height:39px;background:#8596e5;"></div>
<div style="left:484.2px;top:113px;width:1px;height:39px;background:#8596e5;"></div>
<div style="left:498.54px;top:113px;width:1px;height:39px;background:#8596e5;"></div>
<div style="left:512.89px;top:113px;width:1px;height:39px;background:#8596e5;"></div>
<div style="left:527.23px;top:113px;width:1px;height:39px;background:#8596e5;"></div>
<div style="left:541.58px;top:113px;width:1px;height:39px;background:#8596e5;"></div>
<div style="left:555.92px;top:113px;width:1px;height:39px;background:#8596e5;"></div>
<div style="left:570.27px;top:113px;width:1px;height:39px;background:#8596e5;"></div>
<div style="left:584.61px;top:113px;width:1px;height:39px;background:#8596e5;"></div>
<div style="left:598.96px;top:113px;width:1px;height:39px;background:#8596e5;"></div>
<div style="left:613.31px;top:113px;width:1px;height:39px;background:#8596e5;"></div>
<div style="left:627.65px;top:113px;width:1px;height:39px;background:#8596e5;"></div>
<div style="left:642px;top:113px;width:1px;height:39px;background:#8596e5;"></div>
<div style="left:656.34px;top:113px;width:1px;height:39px;background:#8596e5;"></div>
<div style="left:670.69px;top:113px;width:1px;height:39px;background:#8596e5;"></div>
<div style="left:685.03px;top:113px;width:1px;height:39px;background:#8596e5;"></div>
<div style="left:699.38px;top:113px;width:1px;height:39px;background:#8596e5;"></div>
<div style="left:713.73px;top:113px;width:1px;height:39px;background:#8596e5;"></div>
<div style="left:728.07px;top:113px;width:1px;height:39px;background:#8596e5;"></div>
<div style="left:742.42px;top:113px;width:1px;height:39px;background:#8596e5;"></div>
<div style="left:756.76px;top:113px;width:1px;height:39px;background:#8596e5;"></div>
<div style="left:771.11px;top:113px;width:1px;height:39px;background:#8596e5;"></div>
<div style="left:785.45px;top:113px;width:1px;height:39px;background:#8596e5;"></div>
<div style="left:799.8px;top:113px;width:1px;height:39px;background:#8596e5;"></div>
<div style="left:814.15px;top:113px;width:1px;height:39px;background:#8596e5;"></div>
<div style="left:828.49px;top:113px;width:1px;height:39px;background:#8596e5;"></div>
<div style="left:842.84px;top:113px;width:1px;height:39px;background:#8596e5;"></div>
<div style="left:857.18px;top:113px;width:1px;height:39px;background:#8596e5;"></div>
<div style="left:871.53px;top:113px;width:1px;height:39px;background:#8596e5;"></div>
<div style="left:885.87px;top:113px;width:1px;height:39px;background:#8596e5;"></div>
<div style="left:900.22px;top:113px;width:1px;height:39px;background:#8596e5;"></div>
<div style="left:914.56px;top:113px;width:1px;height:39px;background:#8596e5;"></div>
<div style="left:928.91px;top:113px;width:1px;height:39px;background:#8596e5;"></div>
<div style="left:943.26px;top:113px;width:1px;height:39px;background:#8596e5;"></div>
<div style="left:10px;top:113px;width:947.6px;height:1px;background:#5b679e;"></div>
<div style="left:38.98px;top:95px;width:1.3px;height:57px;background:#515b8c;"></div>
<div style="left:268.51px;top:95px;width:1.3px;height:57px;background:#515b8c;"></div>
<div style="left:498.04px;top:95px;width:1.3px;height:57px;background:#515b8c;"></div>
<div style="left:727.57px;top:95px;width:1.3px;height:57px;background:#515b8c;"></div>
<div style="left:1187.13px;top:95px;width:121.87px;height:57px;background:#94a7ff;"></div>
<div style="left:1201.48px;top:113px;width:1px;height:39px;background:#8596e5;"></div>
<div style="left:1215.82px;top:113px;width:1px;height:39px;background:#8596e5;"></div>
<div style="left:1230.17px;top:113px;width:1px;height:39px;background:#8596e5;"></div>
<div style="left:1244.51px;top:113px;width:1px;height:39px;background:#8596e5;"></div>
<div style="left:1258.86px;top:113px;width:1px;height:39px;background:#8596e5;"></div>
<div style="left:1273.21px;top:113px;width:1px;height:39px;background:#8596e5;"></div>
<div style="left:1287.55px;top:113px;width:1px;height:39px;background:#8596e5;"></div>
<div style="left:1301.9px;top:113px;width:1px;height:39px;background:#8596e5;"></div>
<div style="left:1187.13px;top:113px;width:121.87px;height:1px;background:#5b679e;"></div>
<svg style="left:10px;top:104px;" width="16" height="7" viewBox="0 0 16 7"><g fill="#1e1e28"><circle cx="3.8" cy="3.6" r="1.05"/><circle cx="7.7" cy="3.6" r="1.05"/><circle cx="11.6" cy="3.6" r="1.05"/></g></svg>
<svg style="left:10px;top:0px;" width="210.24" height="155" viewBox="0 0 210.24 155"><g fill="#1e1e2a"><rect x="2.29" y="133" width="1.6" height="1.7"/><rect x="5.88" y="133" width="1.6" height="1.7"/><rect x="9.46" y="133" width="1.6" height="1.7"/><rect x="9.96" y="141.4" width="1.8" height="1.7"/><rect x="13.05" y="133" width="1.6" height="1.7"/><rect x="13.35" y="128.2" width="1.7" height="1.7"/><rect x="15.65" y="128.2" width="1.7" height="1.7"/><rect x="16.63" y="133" width="1.6" height="1.7"/><rect x="20.22" y="133" width="1.6" height="1.7"/><rect x="23.81" y="133" width="1.6" height="1.7"/><rect x="24.31" y="141.4" width="1.8" height="1.7"/><rect x="27.39" y="133" width="1.6" height="1.7"/><rect x="30.98" y="133" width="1.6" height="1.7"/><rect x="34.57" y="133" width="1.6" height="1.7"/><rect x="38.15" y="133" width="1.6" height="1.7"/><rect x="38.65" y="141.4" width="1.8" height="1.7"/><rect x="41.74" y="133" width="2.4" height="1.7"/><rect x="42.04" y="128.2" width="1.7" height="1.7"/><rect x="44.34" y="128.2" width="1.7" height="1.7"/><rect x="45.33" y="133" width="1.6" height="1.7"/><rect x="48.91" y="133" width="1.6" height="1.7"/><rect x="52.5" y="133" width="2.4" height="1.7"/><rect x="53" y="141.4" width="1.8" height="1.7"/><rect x="56.08" y="133" width="1.6" height="1.7"/><rect x="59.67" y="133" width="2.4" height="1.7"/><rect x="63.26" y="133" width="1.6" height="1.7"/><rect x="66.84" y="133" width="1.6" height="1.7"/><rect x="67.34" y="141.4" width="1.8" height="1.7"/><rect x="70.73" y="128.2" width="1.7" height="1.7"/><rect x="73.03" y="128.2" width="1.7" height="1.7"/><rect x="74.02" y="133" width="1.6" height="1.7"/><rect x="77.6" y="133" width="2.4" height="1.7"/><rect x="81.19" y="133" width="1.6" height="1.7"/><rect x="81.69" y="141.4" width="1.8" height="1.7"/><rect x="84.78" y="133" width="2.4" height="1.7"/><rect x="88.36" y="133" width="1.6" height="1.7"/><rect x="91.95" y="133" width="2.4" height="1.7"/><rect x="96.04" y="141.4" width="1.8" height="1.7"/><rect x="99.12" y="133" width="1.6" height="1.7"/><rect x="99.42" y="128.2" width="1.7" height="1.7"/><rect x="101.72" y="128.2" width="1.7" height="1.7"/><rect x="102.71" y="133" width="2.4" height="1.7"/><rect x="106.29" y="133" width="1.6" height="1.7"/><rect x="109.88" y="133" width="1.6" height="1.7"/><rect x="110.38" y="141.4" width="1.8" height="1.7"/><rect x="113.47" y="133" width="2.4" height="1.7"/><rect x="117.05" y="133" width="1.6" height="1.7"/><rect x="120.64" y="133" width="2.4" height="1.7"/><rect x="124.23" y="133" width="1.6" height="1.7"/><rect x="124.73" y="141.4" width="1.8" height="1.7"/><rect x="127.81" y="133" width="1.6" height="1.7"/><rect x="128.11" y="128.2" width="1.7" height="1.7"/><rect x="130.41" y="128.2" width="1.7" height="1.7"/><rect x="131.4" y="133" width="2.4" height="1.7"/><rect x="134.99" y="133" width="2.4" height="1.7"/><rect x="138.57" y="133" width="1.6" height="1.7"/><rect x="139.07" y="141.4" width="1.8" height="1.7"/><rect x="142.16" y="133" width="1.6" height="1.7"/><rect x="145.75" y="133" width="2.4" height="1.7"/><rect x="149.33" y="133" width="1.6" height="1.7"/><rect x="152.92" y="133" width="1.6" height="1.7"/><rect x="153.42" y="141.4" width="1.8" height="1.7"/><rect x="156.5" y="133" width="1.6" height="1.7"/><rect x="156.8" y="128.2" width="1.7" height="1.7"/><rect x="159.1" y="128.2" width="1.7" height="1.7"/><rect x="160.09" y="133" width="2.4" height="1.7"/><rect x="163.68" y="133" width="1.6" height="1.7"/><rect x="167.26" y="133" width="1.6" height="1.7"/><rect x="167.76" y="141.4" width="1.8" height="1.7"/><rect x="170.85" y="133" width="1.6" height="1.7"/><rect x="174.44" y="133" width="2.4" height="1.7"/><rect x="178.02" y="133" width="2.4" height="1.7"/><rect x="181.61" y="133" width="2.4" height="1.7"/><rect x="182.11" y="141.4" width="1.8" height="1.7"/><rect x="185.2" y="133" width="2.4" height="1.7"/><rect x="185.5" y="128.2" width="1.7" height="1.7"/><rect x="187.8" y="128.2" width="1.7" height="1.7"/><rect x="188.78" y="133" width="1.6" height="1.7"/><rect x="192.37" y="133" width="2.4" height="1.7"/><rect x="196.45" y="141.4" width="1.8" height="1.7"/><rect x="199.54" y="133" width="2.4" height="1.7"/><rect x="203.13" y="133" width="1.6" height="1.7"/><rect x="206.71" y="133" width="2.4" height="1.7"/></g></svg>
<svg style="left:269.01px;top:0px;" width="180.76" height="155" viewBox="0 0 180.76 155"><g fill="#1e1e2a"><rect x="5.09" y="133" width="1.6" height="1.7"/><rect x="8.67" y="133" width="2.4" height="1.7"/><rect x="9.17" y="141.4" width="1.8" height="1.7"/><rect x="12.26" y="133" width="1.6" height="1.7"/><rect x="12.56" y="128.2" width="1.7" height="1.7"/><rect x="14.86" y="128.2" width="1.7" height="1.7"/><rect x="15.85" y="133" width="1.6" height="1.7"/><rect x="19.43" y="133" width="2.4" height="1.7"/><rect x="23.02" y="133" width="1.6" height="1.7"/><rect x="23.52" y="141.4" width="1.8" height="1.7"/><rect x="26.6" y="133" width="1.6" height="1.7"/><rect x="30.19" y="133" width="1.6" height="1.7"/><rect x="33.78" y="133" width="1.6" height="1.7"/><rect x="37.36" y="133" width="1.6" height="1.7"/><rect x="37.86" y="141.4" width="1.8" height="1.7"/><rect x="40.95" y="133" width="1.6" height="1.7"/><rect x="41.25" y="128.2" width="1.7" height="1.7"/><rect x="43.55" y="128.2" width="1.7" height="1.7"/><rect x="41.95" y="141.4" width="1.7" height="1.7"/><rect x="44.54" y="133" width="2.4" height="1.7"/><rect x="48.12" y="133" width="2.4" height="1.7"/><rect x="49.12" y="145.8" width="1.7" height="1.7"/><rect x="51.71" y="133" width="2.4" height="1.7"/><rect x="52.21" y="141.4" width="1.8" height="1.7"/><rect x="55.3" y="133" width="1.6" height="1.7"/><rect x="58.88" y="133" width="1.6" height="1.7"/><rect x="59.88" y="145.8" width="1.7" height="1.7"/><rect x="62.47" y="133" width="1.6" height="1.7"/><rect x="66.06" y="133" width="1.6" height="1.7"/><rect x="66.56" y="141.4" width="1.8" height="1.7"/><rect x="69.64" y="133" width="1.6" height="1.7"/><rect x="69.94" y="128.2" width="1.7" height="1.7"/><rect x="72.24" y="128.2" width="1.7" height="1.7"/><rect x="73.23" y="133" width="1.6" height="1.7"/><rect x="76.81" y="133" width="2.4" height="1.7"/><rect x="80.4" y="133" width="1.6" height="1.7"/><rect x="80.9" y="141.4" width="1.8" height="1.7"/><rect x="83.99" y="133" width="1.6" height="1.7"/><rect x="87.57" y="133" width="1.6" height="1.7"/><rect x="94.75" y="133" width="2.4" height="1.7"/><rect x="95.25" y="141.4" width="1.8" height="1.7"/><rect x="98.33" y="133" width="1.6" height="1.7"/><rect x="98.63" y="128.2" width="1.7" height="1.7"/><rect x="100.93" y="128.2" width="1.7" height="1.7"/><rect x="101.92" y="133" width="2.4" height="1.7"/><rect x="105.51" y="133" width="1.6" height="1.7"/><rect x="109.09" y="133" width="1.6" height="1.7"/><rect x="109.59" y="141.4" width="1.8" height="1.7"/><rect x="112.68" y="133" width="2.4" height="1.7"/><rect x="113.68" y="145.8" width="1.7" height="1.7"/><rect x="116.27" y="133" width="1.6" height="1.7"/><rect x="119.85" y="133" width="1.6" height="1.7"/><rect x="123.44" y="133" width="1.6" height="1.7"/><rect x="123.94" y="141.4" width="1.8" height="1.7"/><rect x="124.44" y="141.4" width="1.7" height="1.7"/><rect x="127.02" y="133" width="1.6" height="1.7"/><rect x="127.32" y="128.2" width="1.7" height="1.7"/><rect x="129.62" y="128.2" width="1.7" height="1.7"/><rect x="130.61" y="133" width="1.6" height="1.7"/><rect x="131.61" y="145.8" width="1.7" height="1.7"/><rect x="134.2" y="133" width="2.4" height="1.7"/><rect x="135.2" y="141.4" width="1.7" height="1.7"/><rect x="138.28" y="141.4" width="1.8" height="1.7"/><rect x="138.78" y="145.8" width="1.7" height="1.7"/><rect x="141.37" y="133" width="1.6" height="1.7"/><rect x="142.37" y="141.4" width="1.7" height="1.7"/><rect x="144.96" y="133" width="2.4" height="1.7"/><rect x="148.54" y="133" width="1.6" height="1.7"/><rect x="152.13" y="133" width="1.6" height="1.7"/><rect x="152.63" y="141.4" width="1.8" height="1.7"/><rect x="153.13" y="145.8" width="1.7" height="1.7"/><rect x="155.72" y="133" width="2.4" height="1.7"/><rect x="156.02" y="128.2" width="1.7" height="1.7"/><rect x="158.32" y="128.2" width="1.7" height="1.7"/><rect x="156.72" y="145.8" width="1.7" height="1.7"/><rect x="159.3" y="133" width="1.6" height="1.7"/><rect x="162.89" y="133" width="2.4" height="1.7"/><rect x="163.89" y="145.8" width="1.7" height="1.7"/><rect x="166.47" y="133" width="2.4" height="1.7"/><rect x="166.97" y="141.4" width="1.8" height="1.7"/><rect x="170.06" y="133" width="1.6" height="1.7"/><rect x="171.06" y="145.8" width="1.7" height="1.7"/><rect x="173.65" y="133" width="1.6" height="1.7"/><rect x="174.65" y="141.4" width="1.7" height="1.7"/><rect x="177.23" y="133" width="1.6" height="1.7"/></g></svg>
<svg style="left:498.54px;top:0px;" width="229.53" height="155" viewBox="0 0 229.53 155"><g fill="#1e1e2a"><rect x="1.5" y="133" width="2.4" height="1.7"/><rect x="2.5" y="145.8" width="1.7" height="1.7"/><rect x="5.09" y="133" width="2.4" height="1.7"/><rect x="6.09" y="141.4" width="1.7" height="1.7"/><rect x="8.67" y="133" width="1.6" height="1.7"/><rect x="9.17" y="141.4" width="1.8" height="1.7"/><rect x="9.67" y="141.4" width="1.7" height="1.7"/><rect x="12.26" y="133" width="2.4" height="1.7"/><rect x="12.56" y="128.2" width="1.7" height="1.7"/><rect x="14.86" y="128.2" width="1.7" height="1.7"/><rect x="15.85" y="133" width="1.6" height="1.7"/><rect x="19.43" y="133" width="1.6" height="1.7"/><rect x="23.02" y="133" width="2.4" height="1.7"/><rect x="23.52" y="141.4" width="1.8" height="1.7"/><rect x="26.6" y="133" width="1.6" height="1.7"/><rect x="27.6" y="145.8" width="1.7" height="1.7"/><rect x="30.19" y="133" width="1.6" height="1.7"/><rect x="33.78" y="133" width="2.4" height="1.7"/><rect x="37.36" y="133" width="2.4" height="1.7"/><rect x="37.86" y="141.4" width="1.8" height="1.7"/><rect x="40.95" y="133" width="2.4" height="1.7"/><rect x="41.25" y="128.2" width="1.7" height="1.7"/><rect x="43.55" y="128.2" width="1.7" height="1.7"/><rect x="44.54" y="133" width="1.6" height="1.7"/><rect x="48.12" y="133" width="1.6" height="1.7"/><rect x="51.71" y="133" width="2.4" height="1.7"/><rect x="52.21" y="141.4" width="1.8" height="1.7"/><rect x="55.3" y="133" width="1.6" height="1.7"/><rect x="58.88" y="133" width="2.4" height="1.7"/><rect x="62.47" y="133" width="2.4" height="1.7"/><rect x="63.47" y="145.8" width="1.7" height="1.7"/><rect x="66.06" y="133" width="1.6" height="1.7"/><rect x="66.56" y="141.4" width="1.8" height="1.7"/><rect x="69.94" y="128.2" width="1.7" height="1.7"/><rect x="72.24" y="128.2" width="1.7" height="1.7"/><rect x="73.23" y="133" width="1.6" height="1.7"/><rect x="76.81" y="133" width="2.4" height="1.7"/><rect x="77.81" y="145.8" width="1.7" height="1.7"/><rect x="80.4" y="133" width="2.4" height="1.7"/><rect x="80.9" y="141.4" width="1.8" height="1.7"/><rect x="81.4" y="141.4" width="1.7" height="1.7"/><rect x="83.99" y="133" width="2.4" height="1.7"/><rect x="87.57" y="133" width="1.6" height="1.7"/><rect x="91.16" y="133" width="1.6" height="1.7"/><rect x="94.75" y="133" width="1.6" height="1.7"/><rect x="95.25" y="141.4" width="1.8" height="1.7"/><rect x="95.75" y="145.8" width="1.7" height="1.7"/><rect x="98.33" y="133" width="1.6" height="1.7"/><rect x="98.63" y="128.2" width="1.7" height="1.7"/><rect x="100.93" y="128.2" width="1.7" height="1.7"/><rect x="101.92" y="133" width="1.6" height="1.7"/><rect x="109.09" y="133" width="2.4" height="1.7"/><rect x="109.59" y="141.4" width="1.8" height="1.7"/><rect x="112.68" y="133" width="1.6" height="1.7"/><rect x="113.68" y="145.8" width="1.7" height="1.7"/><rect x="116.27" y="133" width="1.6" height="1.7"/><rect x="119.85" y="133" width="1.6" height="1.7"/><rect x="123.44" y="133" width="1.6" height="1.7"/><rect x="123.94" y="141.4" width="1.8" height="1.7"/><rect x="127.02" y="133" width="1.6" height="1.7"/><rect x="127.32" y="128.2" width="1.7" height="1.7"/><rect x="129.62" y="128.2" width="1.7" height="1.7"/><rect x="130.61" y="133" width="2.4" height="1.7"/><rect x="131.61" y="145.8" width="1.7" height="1.7"/><rect x="134.2" y="133" width="2.4" height="1.7"/><rect x="137.78" y="133" width="1.6" height="1.7"/><rect x="138.28" y="141.4" width="1.8" height="1.7"/><rect x="141.37" y="133" width="1.6" height="1.7"/><rect x="144.96" y="133" width="1.6" height="1.7"/><rect x="148.54" y="133" width="1.6" height="1.7"/><rect x="152.13" y="133" width="1.6" height="1.7"/><rect x="152.63" y="141.4" width="1.8" height="1.7"/><rect x="155.72" y="133" width="1.6" height="1.7"/><rect x="156.02" y="128.2" width="1.7" height="1.7"/><rect x="158.32" y="128.2" width="1.7" height="1.7"/><rect x="159.3" y="133" width="2.4" height="1.7"/><rect x="160.3" y="145.8" width="1.7" height="1.7"/><rect x="162.89" y="133" width="1.6" height="1.7"/><rect x="166.47" y="133" width="1.6" height="1.7"/><rect x="166.97" y="141.4" width="1.8" height="1.7"/><rect x="167.47" y="145.8" width="1.7" height="1.7"/><rect x="170.06" y="133" width="2.4" height="1.7"/><rect x="173.65" y="133" width="1.6" height="1.7"/><rect x="177.23" y="133" width="1.6" height="1.7"/><rect x="180.82" y="133" width="1.6" height="1.7"/><rect x="181.32" y="141.4" width="1.8" height="1.7"/><rect x="184.41" y="133" width="1.6" height="1.7"/><rect x="184.71" y="128.2" width="1.7" height="1.7"/><rect x="187.01" y="128.2" width="1.7" height="1.7"/><rect x="187.99" y="133" width="1.6" height="1.7"/><rect x="188.99" y="141.4" width="1.7" height="1.7"/><rect x="191.58" y="133" width="2.4" height="1.7"/><rect x="195.17" y="133" width="1.6" height="1.7"/><rect x="195.67" y="141.4" width="1.8" height="1.7"/><rect x="198.75" y="133" width="1.6" height="1.7"/><rect x="202.34" y="133" width="1.6" height="1.7"/><rect x="203.34" y="145.8" width="1.7" height="1.7"/><rect x="205.93" y="133" width="2.4" height="1.7"/><rect x="209.51" y="133" width="1.6" height="1.7"/><rect x="210.01" y="141.4" width="1.8" height="1.7"/><rect x="210.51" y="141.4" width="1.7" height="1.7"/><rect x="213.1" y="133" width="2.4" height="1.7"/><rect x="213.4" y="128.2" width="1.7" height="1.7"/><rect x="215.7" y="128.2" width="1.7" height="1.7"/><rect x="214.1" y="145.8" width="1.7" height="1.7"/><rect x="216.68" y="133" width="2.4" height="1.7"/><rect x="217.68" y="145.8" width="1.7" height="1.7"/><rect x="220.27" y="133" width="1.6" height="1.7"/><rect x="223.86" y="133" width="1.6" height="1.7"/><rect x="224.36" y="141.4" width="1.8" height="1.7"/><rect x="227.44" y="133" width="1.6" height="1.7"/></g></svg>
<svg style="left:728.07px;top:0px;" width="229.53" height="155" viewBox="0 0 229.53 155"><g fill="#1e1e2a"><rect x="1.5" y="133" width="1.6" height="1.7"/><rect x="5.09" y="133" width="1.6" height="1.7"/><rect x="6.09" y="145.8" width="1.7" height="1.7"/><rect x="8.67" y="133" width="1.6" height="1.7"/><rect x="9.17" y="141.4" width="1.8" height="1.7"/><rect x="12.26" y="133" width="1.6" height="1.7"/><rect x="12.56" y="128.2" width="1.7" height="1.7"/><rect x="14.86" y="128.2" width="1.7" height="1.7"/><rect x="15.85" y="133" width="1.6" height="1.7"/><rect x="19.43" y="133" width="1.6" height="1.7"/><rect x="23.02" y="133" width="1.6" height="1.7"/><rect x="23.52" y="141.4" width="1.8" height="1.7"/><rect x="24.02" y="145.8" width="1.7" height="1.7"/><rect x="26.6" y="133" width="2.4" height="1.7"/><rect x="30.19" y="133" width="1.6" height="1.7"/><rect x="31.19" y="145.8" width="1.7" height="1.7"/><rect x="33.78" y="133" width="1.6" height="1.7"/><rect x="37.36" y="133" width="1.6" height="1.7"/><rect x="37.86" y="141.4" width="1.8" height="1.7"/><rect x="38.36" y="145.8" width="1.7" height="1.7"/><rect x="40.95" y="133" width="1.6" height="1.7"/><rect x="41.25" y="128.2" width="1.7" height="1.7"/><rect x="43.55" y="128.2" width="1.7" height="1.7"/><rect x="44.54" y="133" width="1.6" height="1.7"/><rect x="48.12" y="133" width="1.6" height="1.7"/><rect x="51.71" y="133" width="1.6" height="1.7"/><rect x="52.21" y="141.4" width="1.8" height="1.7"/><rect x="52.71" y="145.8" width="1.7" height="1.7"/><rect x="55.3" y="133" width="1.6" height="1.7"/><rect x="56.3" y="145.8" width="1.7" height="1.7"/><rect x="58.88" y="133" width="1.6" height="1.7"/><rect x="62.47" y="133" width="2.4" height="1.7"/><rect x="66.56" y="141.4" width="1.8" height="1.7"/><rect x="67.06" y="145.8" width="1.7" height="1.7"/><rect x="69.64" y="133" width="2.4" height="1.7"/><rect x="69.94" y="128.2" width="1.7" height="1.7"/><rect x="72.24" y="128.2" width="1.7" height="1.7"/><rect x="73.23" y="133" width="1.6" height="1.7"/><rect x="76.81" y="133" width="2.4" height="1.7"/><rect x="80.4" y="133" width="1.6" height="1.7"/><rect x="80.9" y="141.4" width="1.8" height="1.7"/><rect x="83.99" y="133" width="1.6" height="1.7"/><rect x="87.57" y="133" width="1.6" height="1.7"/><rect x="88.57" y="141.4" width="1.7" height="1.7"/><rect x="91.16" y="133" width="1.6" height="1.7"/><rect x="92.16" y="145.8" width="1.7" height="1.7"/><rect x="94.75" y="133" width="1.6" height="1.7"/><rect x="95.25" y="141.4" width="1.8" height="1.7"/><rect x="98.63" y="128.2" width="1.7" height="1.7"/><rect x="100.93" y="128.2" width="1.7" height="1.7"/><rect x="99.33" y="145.8" width="1.7" height="1.7"/><rect x="101.92" y="133" width="1.6" height="1.7"/><rect x="105.51" y="133" width="2.4" height="1.7"/><rect x="109.09" y="133" width="2.4" height="1.7"/><rect x="109.59" y="141.4" width="1.8" height="1.7"/><rect x="110.09" y="145.8" width="1.7" height="1.7"/><rect x="112.68" y="133" width="1.6" height="1.7"/><rect x="119.85" y="133" width="1.6" height="1.7"/><rect x="123.44" y="133" width="1.6" height="1.7"/><rect x="123.94" y="141.4" width="1.8" height="1.7"/><rect x="127.02" y="133" width="1.6" height="1.7"/><rect x="127.32" y="128.2" width="1.7" height="1.7"/><rect x="129.62" y="128.2" width="1.7" height="1.7"/><rect x="130.61" y="133" width="1.6" height="1.7"/><rect x="131.61" y="141.4" width="1.7" height="1.7"/><rect x="134.2" y="133" width="1.6" height="1.7"/><rect x="138.28" y="141.4" width="1.8" height="1.7"/><rect x="141.37" y="133" width="2.4" height="1.7"/><rect x="142.37" y="141.4" width="1.7" height="1.7"/><rect x="144.96" y="133" width="2.4" height="1.7"/><rect x="145.96" y="145.8" width="1.7" height="1.7"/><rect x="148.54" y="133" width="1.6" height="1.7"/><rect x="152.13" y="133" width="1.6" height="1.7"/><rect x="152.63" y="141.4" width="1.8" height="1.7"/><rect x="155.72" y="133" width="1.6" height="1.7"/><rect x="156.02" y="128.2" width="1.7" height="1.7"/><rect x="158.32" y="128.2" width="1.7" height="1.7"/><rect x="156.72" y="145.8" width="1.7" height="1.7"/><rect x="159.3" y="133" width="1.6" height="1.7"/><rect x="160.3" y="141.4" width="1.7" height="1.7"/><rect x="162.89" y="133" width="1.6" height="1.7"/><rect x="166.47" y="133" width="1.6" height="1.7"/><rect x="166.97" y="141.4" width="1.8" height="1.7"/><rect x="170.06" y="133" width="1.6" height="1.7"/><rect x="173.65" y="133" width="1.6" height="1.7"/><rect x="177.23" y="133" width="2.4" height="1.7"/><rect x="180.82" y="133" width="2.4" height="1.7"/><rect x="181.32" y="141.4" width="1.8" height="1.7"/><rect x="181.82" y="145.8" width="1.7" height="1.7"/><rect x="184.41" y="133" width="1.6" height="1.7"/><rect x="184.71" y="128.2" width="1.7" height="1.7"/><rect x="187.01" y="128.2" width="1.7" height="1.7"/><rect x="187.99" y="133" width="1.6" height="1.7"/><rect x="191.58" y="133" width="2.4" height="1.7"/><rect x="195.17" y="133" width="1.6" height="1.7"/><rect x="195.67" y="141.4" width="1.8" height="1.7"/><rect x="198.75" y="133" width="1.6" height="1.7"/><rect x="202.34" y="133" width="1.6" height="1.7"/><rect x="203.34" y="145.8" width="1.7" height="1.7"/><rect x="209.51" y="133" width="2.4" height="1.7"/><rect x="210.01" y="141.4" width="1.8" height="1.7"/><rect x="210.51" y="145.8" width="1.7" height="1.7"/><rect x="213.1" y="133" width="1.6" height="1.7"/><rect x="213.4" y="128.2" width="1.7" height="1.7"/><rect x="215.7" y="128.2" width="1.7" height="1.7"/><rect x="216.68" y="133" width="1.6" height="1.7"/><rect x="220.27" y="133" width="1.6" height="1.7"/><rect x="221.27" y="141.4" width="1.7" height="1.7"/><rect x="223.86" y="133" width="1.6" height="1.7"/><rect x="224.36" y="141.4" width="1.8" height="1.7"/><rect x="224.86" y="145.8" width="1.7" height="1.7"/><rect x="227.44" y="133" width="1.6" height="1.7"/></g></svg>
<svg style="left:1215.13px;top:0px;" width="93.87" height="155" viewBox="0 0 93.87 155"><g fill="#1e1e2a"><rect x="2.19" y="133" width="2.4" height="1.7"/><rect x="5.78" y="133" width="2.4" height="1.7"/><rect x="9.36" y="133" width="1.6" height="1.7"/><rect x="9.86" y="141.4" width="1.8" height="1.7"/><rect x="12.95" y="133" width="1.6" height="1.7"/><rect x="13.25" y="128.2" width="1.7" height="1.7"/><rect x="15.55" y="128.2" width="1.7" height="1.7"/><rect x="16.54" y="133" width="1.6" height="1.7"/><rect x="20.12" y="133" width="1.6" height="1.7"/><rect x="23.71" y="133" width="1.6" height="1.7"/><rect x="24.21" y="141.4" width="1.8" height="1.7"/><rect x="27.3" y="133" width="1.6" height="1.7"/><rect x="28.3" y="141.4" width="1.7" height="1.7"/><rect x="30.88" y="133" width="2.4" height="1.7"/><rect x="34.47" y="133" width="1.6" height="1.7"/><rect x="35.47" y="141.4" width="1.7" height="1.7"/><rect x="38.56" y="141.4" width="1.8" height="1.7"/><rect x="39.06" y="141.4" width="1.7" height="1.7"/><rect x="41.64" y="133" width="1.6" height="1.7"/><rect x="41.94" y="128.2" width="1.7" height="1.7"/><rect x="44.24" y="128.2" width="1.7" height="1.7"/><rect x="45.23" y="133" width="1.6" height="1.7"/><rect x="46.23" y="145.8" width="1.7" height="1.7"/><rect x="48.81" y="133" width="1.6" height="1.7"/><rect x="49.81" y="145.8" width="1.7" height="1.7"/><rect x="52.4" y="133" width="1.6" height="1.7"/><rect x="52.9" y="141.4" width="1.8" height="1.7"/><rect x="53.4" y="145.8" width="1.7" height="1.7"/><rect x="55.99" y="133" width="2.4" height="1.7"/><rect x="59.57" y="133" width="2.4" height="1.7"/><rect x="63.16" y="133" width="1.6" height="1.7"/><rect x="66.75" y="133" width="1.6" height="1.7"/><rect x="67.25" y="141.4" width="1.8" height="1.7"/><rect x="70.33" y="133" width="1.6" height="1.7"/><rect x="70.63" y="128.2" width="1.7" height="1.7"/><rect x="72.93" y="128.2" width="1.7" height="1.7"/><rect x="73.92" y="133" width="2.4" height="1.7"/><rect x="77.51" y="133" width="2.4" height="1.7"/><rect x="81.09" y="133" width="2.4" height="1.7"/><rect x="81.59" y="141.4" width="1.8" height="1.7"/><rect x="84.68" y="133" width="2.4" height="1.7"/><rect x="85.68" y="141.4" width="1.7" height="1.7"/><rect x="88.27" y="133" width="1.6" height="1.7"/><rect x="91.85" y="133" width="1.6" height="1.7"/></g></svg>
<div style="left:1218px;top:126px;width:12px;height:1.8px;background:#1e1e2a;"></div>
<div style="left:1273px;top:126px;width:35px;height:1.8px;background:#1e1e2a;"></div>
<div style="left:39.48px;top:154px;width:1147.65px;height:57px;background:#94a7ff;"></div>
<div style="left:53.83px;top:172px;width:1px;height:39px;background:#8596e5;"></div>
<div style="left:68.17px;top:172px;width:1px;height:39px;background:#8596e5;"></div>
<div style="left:82.52px;top:172px;width:1px;height:39px;background:#8596e5;"></div>
<div style="left:96.86px;top:172px;width:1px;height:39px;background:#8596e5;"></div>
<div style="left:111.21px;top:172px;width:1px;height:39px;background:#8596e5;"></div>
<div style="left:125.55px;top:172px;width:1px;height:39px;background:#8596e5;"></div>
<div style="left:139.9px;top:172px;width:1px;height:39px;background:#8596e5;"></div>
<div style="left:154.25px;top:172px;width:1px;height:39px;background:#8596e5;"></div>
<div style="left:168.59px;top:172px;width:1px;height:39px;background:#8596e5;"></div>
<div style="left:182.94px;top:172px;width:1px;height:39px;background:#8596e5;"></div>
<div style="left:197.28px;top:172px;width:1px;height:39px;background:#8596e5;"></div>
<div style="left:211.63px;top:172px;width:1px;height:39px;background:#8596e5;"></div>
<div style="left:225.97px;top:172px;width:1px;height:39px;background:#8596e5;"></div>
<div style="left:240.32px;top:172px;width:1px;height:39px;background:#8596e5;"></div>
<div style="left:254.66px;top:172px;width:1px;height:39px;background:#8596e5;"></div>
<div style="left:269.01px;top:172px;width:1px;height:39px;background:#8596e5;"></div>
<div style="left:283.36px;top:172px;width:1px;height:39px;background:#8596e5;"></div>
<div style="left:297.7px;top:172px;width:1px;height:39px;background:#8596e5;"></div>
<div style="left:312.05px;top:172px;width:1px;height:39px;background:#8596e5;"></div>
<div style="left:326.39px;top:172px;width:1px;height:39px;background:#8596e5;"></div>
<div style="left:340.74px;top:172px;width:1px;height:39px;background:#8596e5;"></div>
<div style="left:355.08px;top:172px;width:1px;height:39px;background:#8596e5;"></div>
<div style="left:369.43px;top:172px;width:1px;height:39px;background:#8596e5;"></div>
<div style="left:383.78px;top:172px;width:1px;height:39px;background:#8596e5;"></div>
<div style="left:398.12px;top:172px;width:1px;height:39px;background:#8596e5;"></div>
<div style="left:412.47px;top:172px;width:1px;height:39px;background:#8596e5;"></div>
<div style="left:426.81px;top:172px;width:1px;height:39px;background:#8596e5;"></div>
<div style="left:441.16px;top:172px;width:1px;height:39px;background:#8596e5;"></div>
<div style="left:455.5px;top:172px;width:1px;height:39px;background:#8596e5;"></div>
<div style="left:469.85px;top:172px;width:1px;height:39px;background:#8596e5;"></div>
<div style="left:484.2px;top:172px;width:1px;height:39px;background:#8596e5;"></div>
<div style="left:498.54px;top:172px;width:1px;height:39px;background:#8596e5;"></div>
<div style="left:512.89px;top:172px;width:1px;height:39px;background:#8596e5;"></div>
<div style="left:527.23px;top:172px;width:1px;height:39px;background:#8596e5;"></div>
<div style="left:541.58px;top:172px;width:1px;height:39px;background:#8596e5;"></div>
<div style="left:555.92px;top:172px;width:1px;height:39px;background:#8596e5;"></div>
<div style="left:570.27px;top:172px;width:1px;height:39px;background:#8596e5;"></div>
<div style="left:584.61px;top:172px;width:1px;height:39px;background:#8596e5;"></div>
<div style="left:598.96px;top:172px;width:1px;height:39px;background:#8596e5;"></div>
<div style="left:613.31px;top:172px;width:1px;height:39px;background:#8596e5;"></div>
<div style="left:627.65px;top:172px;width:1px;height:39px;background:#8596e5;"></div>
<div style="left:642px;top:172px;width:1px;height:39px;background:#8596e5;"></div>
<div style="left:656.34px;top:172px;width:1px;height:39px;background:#8596e5;"></div>
<div style="left:670.69px;top:172px;width:1px;height:39px;background:#8596e5;"></div>
<div style="left:685.03px;top:172px;width:1px;height:39px;background:#8596e5;"></div>
<div style="left:699.38px;top:172px;width:1px;height:39px;background:#8596e5;"></div>
<div style="left:713.73px;top:172px;width:1px;height:39px;background:#8596e5;"></div>
<div style="left:728.07px;top:172px;width:1px;height:39px;background:#8596e5;"></div>
<div style="left:742.42px;top:172px;width:1px;height:39px;background:#8596e5;"></div>
<div style="left:756.76px;top:172px;width:1px;height:39px;background:#8596e5;"></div>
<div style="left:771.11px;top:172px;width:1px;height:39px;background:#8596e5;"></div>
<div style="left:785.45px;top:172px;width:1px;height:39px;background:#8596e5;"></div>
<div style="left:799.8px;top:172px;width:1px;height:39px;background:#8596e5;"></div>
<div style="left:814.15px;top:172px;width:1px;height:39px;background:#8596e5;"></div>
<div style="left:828.49px;top:172px;width:1px;height:39px;background:#8596e5;"></div>
<div style="left:842.84px;top:172px;width:1px;height:39px;background:#8596e5;"></div>
<div style="left:857.18px;top:172px;width:1px;height:39px;background:#8596e5;"></div>
<div style="left:871.53px;top:172px;width:1px;height:39px;background:#8596e5;"></div>
<div style="left:885.87px;top:172px;width:1px;height:39px;background:#8596e5;"></div>
<div style="left:900.22px;top:172px;width:1px;height:39px;background:#8596e5;"></div>
<div style="left:914.56px;top:172px;width:1px;height:39px;background:#8596e5;"></div>
<div style="left:928.91px;top:172px;width:1px;height:39px;background:#8596e5;"></div>
<div style="left:943.26px;top:172px;width:1px;height:39px;background:#8596e5;"></div>
<div style="left:957.6px;top:172px;width:1px;height:39px;background:#8596e5;"></div>
<div style="left:971.95px;top:172px;width:1px;height:39px;background:#8596e5;"></div>
<div style="left:986.29px;top:172px;width:1px;height:39px;background:#8596e5;"></div>
<div style="left:1000.64px;top:172px;width:1px;height:39px;background:#8596e5;"></div>
<div style="left:1014.98px;top:172px;width:1px;height:39px;background:#8596e5;"></div>
<div style="left:1029.33px;top:172px;width:1px;height:39px;background:#8596e5;"></div>
<div style="left:1043.68px;top:172px;width:1px;height:39px;background:#8596e5;"></div>
<div style="left:1058.02px;top:172px;width:1px;height:39px;background:#8596e5;"></div>
<div style="left:1072.37px;top:172px;width:1px;height:39px;background:#8596e5;"></div>
<div style="left:1086.71px;top:172px;width:1px;height:39px;background:#8596e5;"></div>
<div style="left:1101.06px;top:172px;width:1px;height:39px;background:#8596e5;"></div>
<div style="left:1115.4px;top:172px;width:1px;height:39px;background:#8596e5;"></div>
<div style="left:1129.75px;top:172px;width:1px;height:39px;background:#8596e5;"></div>
<div style="left:1144.1px;top:172px;width:1px;height:39px;background:#8596e5;"></div>
<div style="left:1158.44px;top:172px;width:1px;height:39px;background:#8596e5;"></div>
<div style="left:1172.79px;top:172px;width:1px;height:39px;background:#8596e5;"></div>
<div style="left:39.48px;top:172px;width:1147.65px;height:1px;background:#5b679e;"></div>
<div style="left:153.75px;top:154px;width:1.3px;height:57px;background:#515b8c;"></div>
<div style="left:268.51px;top:154px;width:1.3px;height:57px;background:#515b8c;"></div>
<div style="left:383.28px;top:154px;width:1.3px;height:57px;background:#515b8c;"></div>
<div style="left:498.04px;top:154px;width:1.3px;height:57px;background:#515b8c;"></div>
<div style="left:612.81px;top:154px;width:1.3px;height:57px;background:#515b8c;"></div>
<div style="left:727.57px;top:154px;width:1.3px;height:57px;background:#515b8c;"></div>
<div style="left:842.34px;top:154px;width:1.3px;height:57px;background:#515b8c;"></div>
<div style="left:957.1px;top:154px;width:1.3px;height:57px;background:#515b8c;"></div>
<div style="left:1071.87px;top:154px;width:1.3px;height:57px;background:#515b8c;"></div>
<div style="left:1215.82px;top:154px;width:93.18px;height:57px;background:#94a7ff;"></div>
<div style="left:1230.17px;top:172px;width:1px;height:39px;background:#8596e5;"></div>
<div style="left:1244.51px;top:172px;width:1px;height:39px;background:#8596e5;"></div>
<div style="left:1258.86px;top:172px;width:1px;height:39px;background:#8596e5;"></div>
<div style="left:1273.21px;top:172px;width:1px;height:39px;background:#8596e5;"></div>
<div style="left:1287.55px;top:172px;width:1px;height:39px;background:#8596e5;"></div>
<div style="left:1301.9px;top:172px;width:1px;height:39px;background:#8596e5;"></div>
<div style="left:1215.82px;top:172px;width:93.18px;height:1px;background:#5b679e;"></div>
<svg style="left:40.48px;top:170px;" width="112.77" height="40" viewBox="0 0 112.77 40"><path d="M0,9.9 L1,7.36 L2,6.16 L3,6.74 L4,7.05 L5,6.88 L6,5.83 L7,6.46 L8,6.75 L9,8.74 L10,7.45 L11,6.79 L12,10.07 L13,10.41 L14,10.12 L15,7.73 L16,6.68 L17,6.5 L18,6.67 L19,8.04 L20,6.08 L21,5.59 L22,6.91 L23,7.65 L24,6.87 L25,6.44 L26,10.21 L27,10.41 L28,10.43 L29,8.87 L30,6.27 L31,6.47 L32,6.72 L33,7.68 L34,7.02 L35,5.83 L36,6.18 L37,7.79 L38,7.81 L39,6.57 L40,10.37 L41,10.35 L42,10.28 L43,10.41 L44,7.32 L45,5.82 L46,6.05 L47,7.33 L48,6.9 L49,6.63 L50,5.8 L51,6.92 L52,8.62 L53,7.64 L54,6.96 L55,10.39 L56,10.37 L57,10.14 L58,7.43 L59,6.63 L60,6.3 L61,7.2 L62,8.29 L63,6.21 L64,6.37 L65,6.91 L66,7.91 L67,7.85 L68,6.84 L69,10.13 L70,10.15 L71,10.26 L72,8.76 L73,6.97 L74,6.93 L75,6.2 L76,8.17 L77,7.05 L78,6.59 L79,6.14 L80,7.12 L81,8.06 L82,6.55 L83,10.19 L84,10.34 L85,10.24 L86,10.1 L87,7.33 L88,6.16 L89,6.93 L90,7.33 L91,7.42 L92,6.26 L93,6.02 L94,6.59 L95,8.77 L96,7.19 L97,7.66 L98,10.27 L99,10.08 L100,10.28 L101,8.42 L102,7.26 L103,6.11 L104,7.43 L105,8.54 L106,6.98 L107,5.92 L108,5.59 L109,7.82 L110,7.54 L111,7.1 L112,10.25 L112,12.75 L111,15.9 L110,15.46 L109,15.18 L108,17.41 L107,17.08 L106,16.02 L105,14.46 L104,15.57 L103,16.89 L102,15.74 L101,14.58 L100,12.72 L99,12.92 L98,12.73 L97,15.34 L96,15.81 L95,14.23 L94,16.41 L93,16.98 L92,16.74 L91,15.58 L90,15.67 L89,16.07 L88,16.84 L87,15.67 L86,12.9 L85,12.76 L84,12.66 L83,12.81 L82,16.45 L81,14.94 L80,15.88 L79,16.86 L78,16.41 L77,15.95 L76,14.83 L75,16.8 L74,16.07 L73,16.03 L72,14.24 L71,12.74 L70,12.85 L69,12.87 L68,16.16 L67,15.15 L66,15.09 L65,16.09 L64,16.63 L63,16.79 L62,14.71 L61,15.8 L60,16.7 L59,16.37 L58,15.57 L57,12.86 L56,12.63 L55,12.61 L54,16.04 L53,15.36 L52,14.38 L51,16.08 L50,17.2 L49,16.37 L48,16.1 L47,15.67 L46,16.95 L45,17.18 L44,15.68 L43,12.59 L42,12.72 L41,12.65 L40,12.63 L39,16.43 L38,15.19 L37,15.21 L36,16.82 L35,17.17 L34,15.98 L33,15.32 L32,16.28 L31,16.53 L30,16.73 L29,14.13 L28,12.57 L27,12.59 L26,12.79 L25,16.56 L24,16.13 L23,15.35 L22,16.09 L21,17.41 L20,16.92 L19,14.96 L18,16.33 L17,16.5 L16,16.32 L15,15.27 L14,12.88 L13,12.59 L12,12.93 L11,16.21 L10,15.55 L9,14.26 L8,16.25 L7,16.54 L6,17.17 L5,16.12 L4,15.95 L3,16.26 L2,16.84 L1,15.64 L0,13.1 Z" fill="#1e1e24"/><path d="M0,29.42 L1,27.03 L2,26.48 L3,25.57 L4,27.25 L5,27.07 L6,25.73 L7,25.19 L8,25.62 L9,28.13 L10,26.03 L11,26.24 L12,29.84 L13,29.9 L14,29.87 L15,26.98 L16,25.87 L17,25.04 L18,25.78 L19,27.34 L20,25.81 L21,26.05 L22,26.57 L23,27.12 L24,26.74 L25,26.2 L26,29.73 L27,29.69 L28,29.7 L29,27.73 L30,26.87 L31,25.68 L32,26.3 L33,27.25 L34,25.76 L35,25.8 L36,26.23 L37,27.07 L38,27.59 L39,26.17 L40,29.78 L41,29.66 L42,29.82 L43,29.74 L44,27.19 L45,25.58 L46,25.77 L47,26.44 L48,26.29 L49,25.55 L50,26.09 L51,25.65 L52,27.85 L53,26.69 L54,26.8 L55,29.59 L56,29.84 L57,29.84 L58,27.19 L59,25.78 L60,25.39 L61,25.93 L62,27.56 L63,26 L64,25.79 L65,26.27 L66,27.5 L67,27.04 L68,26.22 L69,29.71 L70,29.74 L71,29.79 L72,28.03 L73,26.54 L74,25.23 L75,25.8 L76,27.31 L77,26.48 L78,25.39 L79,25.22 L80,26.16 L81,27.42 L82,26.75 L83,29.68 L84,29.88 L85,29.81 L86,29.92 L87,26.79 L88,26.17 L89,25.93 L90,26.48 L91,26.71 L92,26.32 L93,25.49 L94,26.88 L95,28.05 L96,26.68 L97,26.33 L98,29.83 L99,29.63 L100,29.88 L101,27.07 L102,26.21 L103,26.32 L104,25.78 L105,27.33 L106,26.36 L107,25.22 L108,25.85 L109,27.68 L110,27.08 L111,25.92 L112,29.79 L112,32.21 L111,36.08 L110,34.92 L109,34.32 L108,36.15 L107,36.78 L106,35.64 L105,34.67 L104,36.22 L103,35.68 L102,35.79 L101,34.93 L100,32.12 L99,32.37 L98,32.17 L97,35.67 L96,35.32 L95,33.95 L94,35.12 L93,36.51 L92,35.68 L91,35.29 L90,35.52 L89,36.07 L88,35.83 L87,35.21 L86,32.08 L85,32.19 L84,32.12 L83,32.32 L82,35.25 L81,34.58 L80,35.84 L79,36.78 L78,36.61 L77,35.52 L76,34.69 L75,36.2 L74,36.77 L73,35.46 L72,33.97 L71,32.21 L70,32.26 L69,32.29 L68,35.78 L67,34.96 L66,34.5 L65,35.73 L64,36.21 L63,36 L62,34.44 L61,36.07 L60,36.61 L59,36.22 L58,34.81 L57,32.16 L56,32.16 L55,32.41 L54,35.2 L53,35.31 L52,34.15 L51,36.35 L50,35.91 L49,36.45 L48,35.71 L47,35.56 L46,36.23 L45,36.42 L44,34.81 L43,32.26 L42,32.18 L41,32.34 L40,32.22 L39,35.83 L38,34.41 L37,34.93 L36,35.77 L35,36.2 L34,36.24 L33,34.75 L32,35.7 L31,36.32 L30,35.13 L29,34.27 L28,32.3 L27,32.31 L26,32.27 L25,35.8 L24,35.26 L23,34.88 L22,35.43 L21,35.95 L20,36.19 L19,34.66 L18,36.22 L17,36.96 L16,36.13 L15,35.02 L14,32.13 L13,32.1 L12,32.16 L11,35.76 L10,35.97 L9,33.87 L8,36.38 L7,36.81 L6,36.27 L5,34.93 L4,34.75 L3,36.43 L2,35.52 L1,34.97 L0,32.58 Z" fill="#1e1e24"/></svg>
<svg style="left:155.25px;top:170px;" width="112.77" height="40" viewBox="0 0 112.77 40"><path d="M0,9.96 L1,7.2 L2,5.65 L3,6.35 L4,7.4 L5,7.17 L6,6.56 L7,5.89 L8,6.61 L9,8.35 L10,7.65 L11,7.56 L12,10.4 L13,10.14 L14,10.18 L15,8.32 L16,5.82 L17,5.47 L18,6.7 L19,7.88 L20,6.86 L21,6.63 L22,6.33 L23,8.38 L24,7.79 L25,7.37 L26,10.42 L27,10.26 L28,10.27 L29,8.28 L30,6.83 L31,5.96 L32,6.53 L33,7.91 L34,6.83 L35,6.26 L36,5.31 L37,6.66 L38,7.55 L39,6.75 L40,10.31 L41,10.35 L42,10.32 L43,10.4 L44,6.99 L45,6.44 L46,5.77 L47,7.5 L48,6.78 L49,5.55 L50,6.7 L51,7.14 L52,8.37 L53,7.2 L54,6.71 L55,10.29 L56,10.4 L57,10.2 L58,7.61 L59,6.86 L60,6.8 L61,7.09 L62,7.62 L63,6.01 L64,6.47 L65,6.72 L66,8.28 L67,7.97 L68,6.65 L69,10.36 L70,10.23 L71,10.27 L72,8.89 L73,6.58 L74,6.74 L75,6.3 L76,8.39 L77,6.92 L78,6.37 L79,6.42 L80,6.64 L81,7.64 L82,7.27 L83,10.11 L84,10.35 L85,10.29 L86,10.12 L87,7.19 L88,6.9 L89,5.54 L90,7.66 L91,7.66 L92,5.68 L93,6.17 L94,6.99 L95,9.13 L96,7.69 L97,7.15 L98,10.34 L99,10.21 L100,10.29 L101,7.99 L102,5.91 L103,6.19 L104,6.73 L105,7.8 L106,6.88 L107,6.41 L108,5.71 L109,7.47 L110,7.78 L111,7.42 L112,10.16 L112,12.84 L111,15.58 L110,15.22 L109,15.53 L108,17.29 L107,16.59 L106,16.12 L105,15.2 L104,16.27 L103,16.81 L102,17.09 L101,15.01 L100,12.71 L99,12.79 L98,12.66 L97,15.85 L96,15.31 L95,13.87 L94,16.01 L93,16.83 L92,17.32 L91,15.34 L90,15.34 L89,17.46 L88,16.1 L87,15.81 L86,12.88 L85,12.71 L84,12.65 L83,12.89 L82,15.73 L81,15.36 L80,16.36 L79,16.58 L78,16.63 L77,16.08 L76,14.61 L75,16.7 L74,16.26 L73,16.42 L72,14.11 L71,12.73 L70,12.77 L69,12.64 L68,16.35 L67,15.03 L66,14.72 L65,16.28 L64,16.53 L63,16.99 L62,15.38 L61,15.91 L60,16.2 L59,16.14 L58,15.39 L57,12.8 L56,12.6 L55,12.71 L54,16.29 L53,15.8 L52,14.63 L51,15.86 L50,16.3 L49,17.45 L48,16.22 L47,15.5 L46,17.23 L45,16.56 L44,16.01 L43,12.6 L42,12.68 L41,12.65 L40,12.69 L39,16.25 L38,15.45 L37,16.34 L36,17.69 L35,16.74 L34,16.17 L33,15.09 L32,16.47 L31,17.04 L30,16.17 L29,14.72 L28,12.73 L27,12.74 L26,12.58 L25,15.63 L24,15.21 L23,14.62 L22,16.67 L21,16.37 L20,16.14 L19,15.12 L18,16.3 L17,17.53 L16,17.18 L15,14.68 L14,12.82 L13,12.86 L12,12.6 L11,15.44 L10,15.35 L9,14.65 L8,16.39 L7,17.11 L6,16.44 L5,15.83 L4,15.6 L3,16.65 L2,17.35 L1,15.8 L0,13.04 Z" fill="#1e1e24"/><path d="M0,29.65 L1,27.24 L2,25.94 L3,25.53 L4,27.33 L5,27.24 L6,25.98 L7,25 L8,26.76 L9,27.9 L10,26.44 L11,27.26 L12,29.74 L13,29.77 L14,29.78 L15,26.82 L16,26.59 L17,26.41 L18,25.82 L19,27.6 L20,26.3 L21,25.62 L22,26.07 L23,26.96 L24,27.27 L25,26.9 L26,29.72 L27,29.73 L28,29.59 L29,27.78 L30,26.55 L31,26.12 L32,25.55 L33,27.09 L34,26.91 L35,25.03 L36,25.01 L37,26.58 L38,27.69 L39,26.13 L40,29.67 L41,29.86 L42,29.7 L43,29.85 L44,27.36 L45,26.04 L46,26.03 L47,26.99 L48,26.65 L49,25.06 L50,24.67 L51,25.6 L52,27.81 L53,26.3 L54,27.02 L55,29.86 L56,29.7 L57,29.73 L58,27.21 L59,26.61 L60,26.14 L61,25.81 L62,27.47 L63,25.6 L64,26 L65,25.99 L66,26.94 L67,26.79 L68,25.9 L69,29.86 L70,29.76 L71,29.64 L72,28.18 L73,26.01 L74,25.58 L75,26.55 L76,27.9 L77,25.66 L78,26.02 L79,26.04 L80,26.92 L81,27.23 L82,26.07 L83,29.76 L84,29.75 L85,29.65 L86,29.83 L87,27.01 L88,25.64 L89,25.57 L90,27.37 L91,27.33 L92,26.16 L93,25.03 L94,25.94 L95,27.93 L96,26.35 L97,27.05 L98,29.65 L99,29.58 L100,29.8 L101,27.94 L102,26.23 L103,26 L104,26.76 L105,28.08 L106,26.46 L107,24.76 L108,26.48 L109,27.19 L110,27.33 L111,26.91 L112,29.63 L112,32.37 L111,35.09 L110,34.67 L109,34.81 L108,35.52 L107,37.24 L106,35.54 L105,33.92 L104,35.24 L103,36 L102,35.77 L101,34.06 L100,32.2 L99,32.42 L98,32.35 L97,34.95 L96,35.65 L95,34.07 L94,36.06 L93,36.97 L92,35.84 L91,34.67 L90,34.63 L89,36.43 L88,36.36 L87,34.99 L86,32.17 L85,32.35 L84,32.25 L83,32.24 L82,35.93 L81,34.77 L80,35.08 L79,35.96 L78,35.98 L77,36.34 L76,34.1 L75,35.45 L74,36.42 L73,35.99 L72,33.82 L71,32.36 L70,32.24 L69,32.14 L68,36.1 L67,35.21 L66,35.06 L65,36.01 L64,36 L63,36.4 L62,34.53 L61,36.19 L60,35.86 L59,35.39 L58,34.79 L57,32.27 L56,32.3 L55,32.14 L54,34.98 L53,35.7 L52,34.19 L51,36.4 L50,37.33 L49,36.94 L48,35.35 L47,35.01 L46,35.97 L45,35.96 L44,34.64 L43,32.15 L42,32.3 L41,32.14 L40,32.33 L39,35.87 L38,34.31 L37,35.42 L36,36.99 L35,36.97 L34,35.09 L33,34.91 L32,36.45 L31,35.88 L30,35.45 L29,34.22 L28,32.41 L27,32.27 L26,32.28 L25,35.1 L24,34.73 L23,35.04 L22,35.93 L21,36.38 L20,35.7 L19,34.4 L18,36.18 L17,35.59 L16,35.41 L15,35.18 L14,32.22 L13,32.23 L12,32.26 L11,34.74 L10,35.56 L9,34.1 L8,35.24 L7,37 L6,36.02 L5,34.76 L4,34.67 L3,36.47 L2,36.06 L1,34.76 L0,32.35 Z" fill="#1e1e24"/></svg>
<svg style="left:270.01px;top:170px;" width="112.77" height="40" viewBox="0 0 112.77 40"><path d="M0,9.95 L1,7.08 L2,6.03 L3,6.83 L4,7.98 L5,7.42 L6,6.42 L7,5.42 L8,6.53 L9,8.51 L10,7.07 L11,7.13 L12,10.38 L13,10.27 L14,10.37 L15,7.42 L16,7.14 L17,5.69 L18,7.46 L19,7.81 L20,6.6 L21,6 L22,5.87 L23,8.42 L24,7.95 L25,6.51 L26,10.25 L27,10.39 L28,10.07 L29,8.19 L30,7.37 L31,6.29 L32,7.05 L33,8.26 L34,6.61 L35,6.44 L36,5.77 L37,7.81 L38,8.24 L39,6.61 L40,10.28 L41,10.28 L42,10.21 L43,10.26 L44,7.45 L45,6.99 L46,5.95 L47,6.81 L48,6.75 L49,5.83 L50,6.13 L51,6.93 L52,8.55 L53,6.95 L54,7.75 L55,10.34 L56,10.3 L57,10.24 L58,7.57 L59,6.53 L60,6.89 L61,6.44 L62,8.14 L63,6.36 L64,6.3 L65,6.45 L66,7.98 L67,7.15 L68,7.54 L69,10.23 L70,10.36 L71,10.18 L72,9.01 L73,7.18 L74,6.42 L75,6.31 L76,8.45 L77,6.87 L78,6.38 L79,6.4 L80,7.25 L81,7.48 L82,7.04 L83,10.09 L84,10.37 L85,10.1 L86,10.3 L87,7.72 L88,5.94 L89,5.66 L90,7.91 L91,7.65 L92,5.69 L93,6.15 L94,7.06 L95,9.18 L96,7.75 L97,7.11 L98,10.08 L99,10.07 L100,10.25 L101,8.43 L102,6.81 L103,5.73 L104,6.39 L105,8.02 L106,6.81 L107,5.81 L108,6.35 L109,7.67 L110,7.77 L111,6.45 L112,10.11 L112,12.89 L111,16.55 L110,15.23 L109,15.33 L108,16.65 L107,17.19 L106,16.19 L105,14.98 L104,16.61 L103,17.27 L102,16.19 L101,14.57 L100,12.75 L99,12.93 L98,12.92 L97,15.89 L96,15.25 L95,13.82 L94,15.94 L93,16.85 L92,17.31 L91,15.35 L90,15.09 L89,17.34 L88,17.06 L87,15.28 L86,12.7 L85,12.9 L84,12.63 L83,12.91 L82,15.96 L81,15.52 L80,15.75 L79,16.6 L78,16.62 L77,16.13 L76,14.55 L75,16.69 L74,16.58 L73,15.82 L72,13.99 L71,12.82 L70,12.64 L69,12.77 L68,15.46 L67,15.85 L66,15.02 L65,16.55 L64,16.7 L63,16.64 L62,14.86 L61,16.56 L60,16.11 L59,16.47 L58,15.43 L57,12.76 L56,12.7 L55,12.66 L54,15.25 L53,16.05 L52,14.45 L51,16.07 L50,16.87 L49,17.17 L48,16.25 L47,16.19 L46,17.05 L45,16.01 L44,15.55 L43,12.74 L42,12.79 L41,12.72 L40,12.72 L39,16.39 L38,14.76 L37,15.19 L36,17.23 L35,16.56 L34,16.39 L33,14.74 L32,15.95 L31,16.71 L30,15.63 L29,14.81 L28,12.93 L27,12.61 L26,12.75 L25,16.49 L24,15.05 L23,14.58 L22,17.13 L21,17 L20,16.4 L19,15.19 L18,15.54 L17,17.31 L16,15.86 L15,15.58 L14,12.63 L13,12.73 L12,12.62 L11,15.87 L10,15.93 L9,14.49 L8,16.47 L7,17.58 L6,16.58 L5,15.58 L4,15.02 L3,16.17 L2,16.97 L1,15.92 L0,13.05 Z" fill="#1e1e24"/><path d="M0,29.62 L1,27.12 L2,26.07 L3,25.21 L4,26.92 L5,26.51 L6,26.19 L7,25.4 L8,25.82 L9,28.08 L10,26.09 L11,26.37 L12,29.79 L13,29.93 L14,29.66 L15,27.73 L16,26.71 L17,25.32 L18,25.95 L19,27.16 L20,25.19 L21,25.83 L22,26.49 L23,27.81 L24,26.38 L25,27.03 L26,29.87 L27,29.92 L28,29.91 L29,28.45 L30,26.55 L31,26.19 L32,26.3 L33,27.15 L34,26.72 L35,24.9 L36,25.21 L37,26.68 L38,27.32 L39,26.17 L40,29.72 L41,29.85 L42,29.81 L43,29.84 L44,26.93 L45,25.07 L46,25.9 L47,27.37 L48,26.85 L49,25.1 L50,25.49 L51,25.97 L52,28.53 L53,27.2 L54,26.59 L55,29.91 L56,29.82 L57,29.79 L58,27.71 L59,26.69 L60,26.42 L61,25.77 L62,27.39 L63,25.23 L64,25.36 L65,25.18 L66,26.99 L67,26.83 L68,26.5 L69,29.75 L70,29.85 L71,29.79 L72,27.95 L73,26.79 L74,25.15 L75,25.99 L76,27.4 L77,25.88 L78,25.18 L79,26.12 L80,27.03 L81,27.95 L82,27.12 L83,29.59 L84,29.72 L85,29.58 L86,29.65 L87,27.07 L88,25.11 L89,25.14 L90,26.87 L91,27.36 L92,25.88 L93,25.93 L94,26.39 L95,28.62 L96,26.42 L97,26.17 L98,29.85 L99,29.65 L100,29.72 L101,27.46 L102,25.48 L103,25.85 L104,25.9 L105,28.09 L106,25.24 L107,25.86 L108,26.55 L109,26.91 L110,26.74 L111,26.3 L112,29.65 L112,32.35 L111,35.7 L110,35.26 L109,35.09 L108,35.45 L107,36.14 L106,36.76 L105,33.91 L104,36.1 L103,36.15 L102,36.52 L101,34.54 L100,32.28 L99,32.35 L98,32.15 L97,35.83 L96,35.58 L95,33.38 L94,35.61 L93,36.07 L92,36.12 L91,34.64 L90,35.13 L89,36.86 L88,36.89 L87,34.93 L86,32.35 L85,32.42 L84,32.28 L83,32.41 L82,34.88 L81,34.05 L80,34.97 L79,35.88 L78,36.82 L77,36.12 L76,34.6 L75,36.01 L74,36.85 L73,35.21 L72,34.05 L71,32.21 L70,32.15 L69,32.25 L68,35.5 L67,35.17 L66,35.01 L65,36.82 L64,36.64 L63,36.77 L62,34.61 L61,36.23 L60,35.58 L59,35.31 L58,34.29 L57,32.21 L56,32.18 L55,32.09 L54,35.41 L53,34.8 L52,33.47 L51,36.03 L50,36.51 L49,36.9 L48,35.15 L47,34.63 L46,36.1 L45,36.93 L44,35.07 L43,32.16 L42,32.19 L41,32.15 L40,32.28 L39,35.83 L38,34.68 L37,35.32 L36,36.79 L35,37.1 L34,35.28 L33,34.85 L32,35.7 L31,35.81 L30,35.45 L29,33.55 L28,32.09 L27,32.08 L26,32.13 L25,34.97 L24,35.62 L23,34.19 L22,35.51 L21,36.17 L20,36.81 L19,34.84 L18,36.05 L17,36.68 L16,35.29 L15,34.27 L14,32.34 L13,32.07 L12,32.21 L11,35.63 L10,35.91 L9,33.92 L8,36.18 L7,36.6 L6,35.81 L5,35.49 L4,35.08 L3,36.79 L2,35.93 L1,34.88 L0,32.38 Z" fill="#1e1e24"/></svg>
<svg style="left:384.78px;top:170px;" width="112.77" height="40" viewBox="0 0 112.77 40"><path d="M0,10.04 L1,7.05 L2,6 L3,5.78 L4,7.78 L5,7.6 L6,6.61 L7,6.35 L8,6.47 L9,8.9 L10,7.1 L11,7.67 L12,10.32 L13,10.27 L14,10.13 L15,7.73 L16,7.2 L17,6.52 L18,7.36 L19,7.63 L20,5.9 L21,5.35 L22,5.89 L23,7.68 L24,6.91 L25,6.66 L26,10.34 L27,10.12 L28,10.25 L29,8.35 L30,6.77 L31,6.28 L32,6.72 L33,8.14 L34,7.02 L35,6.52 L36,5.58 L37,6.9 L38,7.4 L39,6.77 L40,10.23 L41,10.16 L42,10.38 L43,10.19 L44,7.38 L45,6.77 L46,6.73 L47,7.34 L48,7.62 L49,6.15 L50,5.74 L51,6.89 L52,9 L53,7.17 L54,7.61 L55,10.34 L56,10.36 L57,10.3 L58,8.33 L59,6.32 L60,5.48 L61,7.01 L62,7.86 L63,5.75 L64,6.59 L65,6.87 L66,7.55 L67,7.08 L68,6.85 L69,10.37 L70,10.28 L71,10.12 L72,8.32 L73,6.49 L74,6.63 L75,6 L76,8.13 L77,6.52 L78,6.49 L79,5.33 L80,7.09 L81,7.72 L82,7.39 L83,10.21 L84,10.22 L85,10.22 L86,10.3 L87,7.09 L88,6.54 L89,6.58 L90,7.72 L91,7.16 L92,6.7 L93,6.33 L94,7.3 L95,8.68 L96,7.11 L97,7.2 L98,10.41 L99,10.27 L100,10.3 L101,8.36 L102,7.26 L103,5.41 L104,7.33 L105,8.34 L106,6.75 L107,5.69 L108,6.94 L109,7.84 L110,7.65 L111,6.59 L112,10.43 L112,12.57 L111,16.41 L110,15.35 L109,15.16 L108,16.06 L107,17.31 L106,16.25 L105,14.66 L104,15.67 L103,17.59 L102,15.74 L101,14.64 L100,12.7 L99,12.73 L98,12.59 L97,15.8 L96,15.89 L95,14.32 L94,15.7 L93,16.67 L92,16.3 L91,15.84 L90,15.28 L89,16.42 L88,16.46 L87,15.91 L86,12.7 L85,12.78 L84,12.78 L83,12.79 L82,15.61 L81,15.28 L80,15.91 L79,17.67 L78,16.51 L77,16.48 L76,14.87 L75,17 L74,16.37 L73,16.51 L72,14.68 L71,12.88 L70,12.72 L69,12.63 L68,16.15 L67,15.92 L66,15.45 L65,16.13 L64,16.41 L63,17.25 L62,15.14 L61,15.99 L60,17.52 L59,16.68 L58,14.67 L57,12.7 L56,12.64 L55,12.66 L54,15.39 L53,15.83 L52,14 L51,16.11 L50,17.26 L49,16.85 L48,15.38 L47,15.66 L46,16.27 L45,16.23 L44,15.62 L43,12.81 L42,12.62 L41,12.84 L40,12.77 L39,16.23 L38,15.6 L37,16.1 L36,17.42 L35,16.48 L34,15.98 L33,14.86 L32,16.28 L31,16.72 L30,16.23 L29,14.65 L28,12.75 L27,12.88 L26,12.66 L25,16.34 L24,16.09 L23,15.32 L22,17.11 L21,17.65 L20,17.1 L19,15.37 L18,15.64 L17,16.48 L16,15.8 L15,15.27 L14,12.87 L13,12.73 L12,12.68 L11,15.33 L10,15.9 L9,14.1 L8,16.53 L7,16.65 L6,16.39 L5,15.4 L4,15.22 L3,17.22 L2,17 L1,15.95 L0,12.96 Z" fill="#1e1e24"/><path d="M0,29.4 L1,26.61 L2,25.31 L3,26.13 L4,26.73 L5,26.3 L6,24.93 L7,25.91 L8,26.08 L9,28 L10,26.64 L11,26.27 L12,29.74 L13,29.77 L14,29.59 L15,27.2 L16,26.29 L17,25.97 L18,26.4 L19,27.95 L20,25.7 L21,24.97 L22,25.98 L23,27.07 L24,26.44 L25,26.47 L26,29.68 L27,29.89 L28,29.91 L29,27.66 L30,26.64 L31,26.11 L32,25.46 L33,27.33 L34,26.78 L35,25.69 L36,25.98 L37,27.04 L38,27.91 L39,26.48 L40,29.82 L41,29.79 L42,29.86 L43,29.89 L44,27.37 L45,25.24 L46,25.42 L47,26.79 L48,27.27 L49,26.13 L50,26.01 L51,26.49 L52,28.55 L53,26.94 L54,27.14 L55,29.86 L56,29.69 L57,29.76 L58,27.42 L59,26.23 L60,25.61 L61,25.99 L62,27.76 L63,26.51 L64,25.38 L65,26.02 L66,27.08 L67,27.41 L68,26.05 L69,29.92 L70,29.73 L71,29.77 L72,28.28 L73,25.87 L74,25.37 L75,26.48 L76,27.51 L77,26.16 L78,26.16 L79,26.2 L80,26.59 L81,27.21 L82,26.57 L83,29.78 L84,29.75 L85,29.83 L86,29.61 L87,26.31 L88,25.83 L89,26.49 L90,26.94 L91,26.52 L92,25.87 L93,26.03 L94,26.64 L95,28.13 L96,26.53 L97,27.01 L98,29.7 L99,29.66 L100,29.58 L101,27.11 L102,26.15 L103,25.2 L104,25.76 L105,27.3 L106,25.55 L107,25.21 L108,25.8 L109,26.94 L110,26.85 L111,26.24 L112,29.85 L112,32.15 L111,35.76 L110,35.15 L109,35.06 L108,36.2 L107,36.79 L106,36.45 L105,34.7 L104,36.24 L103,36.8 L102,35.85 L101,34.89 L100,32.42 L99,32.34 L98,32.3 L97,34.99 L96,35.47 L95,33.87 L94,35.36 L93,35.97 L92,36.13 L91,35.48 L90,35.06 L89,35.51 L88,36.17 L87,35.69 L86,32.39 L85,32.17 L84,32.25 L83,32.22 L82,35.43 L81,34.79 L80,35.41 L79,35.8 L78,35.84 L77,35.84 L76,34.49 L75,35.52 L74,36.63 L73,36.13 L72,33.72 L71,32.23 L70,32.27 L69,32.08 L68,35.95 L67,34.59 L66,34.92 L65,35.98 L64,36.62 L63,35.49 L62,34.24 L61,36.01 L60,36.39 L59,35.77 L58,34.58 L57,32.24 L56,32.31 L55,32.14 L54,34.86 L53,35.06 L52,33.45 L51,35.51 L50,35.99 L49,35.87 L48,34.73 L47,35.21 L46,36.58 L45,36.76 L44,34.63 L43,32.11 L42,32.14 L41,32.21 L40,32.18 L39,35.52 L38,34.09 L37,34.96 L36,36.02 L35,36.31 L34,35.22 L33,34.67 L32,36.54 L31,35.89 L30,35.36 L29,34.34 L28,32.09 L27,32.11 L26,32.32 L25,35.53 L24,35.56 L23,34.93 L22,36.02 L21,37.03 L20,36.3 L19,34.05 L18,35.6 L17,36.03 L16,35.71 L15,34.8 L14,32.41 L13,32.23 L12,32.26 L11,35.73 L10,35.36 L9,34 L8,35.92 L7,36.09 L6,37.07 L5,35.7 L4,35.27 L3,35.87 L2,36.69 L1,35.39 L0,32.6 Z" fill="#1e1e24"/></svg>
<svg style="left:499.54px;top:170px;" width="112.77" height="40" viewBox="0 0 112.77 40"><path d="M0,10.11 L1,7.03 L2,6.05 L3,5.65 L4,7.68 L5,7.57 L6,5.7 L7,5.66 L8,7.05 L9,8.44 L10,7.27 L11,7 L12,10.39 L13,10.35 L14,10.11 L15,7.99 L16,6.85 L17,5.71 L18,6.73 L19,8.35 L20,6.28 L21,5.58 L22,6.86 L23,7.77 L24,7.87 L25,7.25 L26,10.4 L27,10.35 L28,10.08 L29,8.64 L30,6.2 L31,6.27 L32,6.38 L33,7.71 L34,6.52 L35,6.53 L36,5.94 L37,7.1 L38,8.23 L39,7.53 L40,10.11 L41,10.24 L42,10.36 L43,10.27 L44,7.65 L45,5.85 L46,6.29 L47,7.83 L48,6.94 L49,6.72 L50,6.25 L51,7.39 L52,8.51 L53,7.64 L54,7.26 L55,10.39 L56,10.26 L57,10.18 L58,7.86 L59,6.6 L60,6.19 L61,6.95 L62,7.98 L63,6.98 L64,5.89 L65,6.73 L66,7.49 L67,6.96 L68,7.58 L69,10.38 L70,10.18 L71,10.22 L72,9.03 L73,6.62 L74,5.5 L75,6.61 L76,8.16 L77,6.72 L78,5.21 L79,6.43 L80,7.46 L81,8.26 L82,6.85 L83,10.26 L84,10.34 L85,10.29 L86,10.42 L87,7.58 L88,5.59 L89,6.14 L90,7.58 L91,6.86 L92,6.32 L93,6.29 L94,7.35 L95,9.07 L96,7.55 L97,7.58 L98,10.12 L99,10.33 L100,10.34 L101,7.84 L102,5.97 L103,6.48 L104,6.48 L105,8.27 L106,6.33 L107,5.69 L108,5.66 L109,7.54 L110,7.49 L111,6.58 L112,10.3 L112,12.7 L111,16.42 L110,15.51 L109,15.46 L108,17.34 L107,17.31 L106,16.67 L105,14.73 L104,16.52 L103,16.52 L102,17.03 L101,15.16 L100,12.66 L99,12.67 L98,12.88 L97,15.42 L96,15.45 L95,13.93 L94,15.65 L93,16.71 L92,16.68 L91,16.14 L90,15.42 L89,16.86 L88,17.41 L87,15.42 L86,12.58 L85,12.71 L84,12.66 L83,12.74 L82,16.15 L81,14.74 L80,15.54 L79,16.57 L78,17.79 L77,16.28 L76,14.84 L75,16.39 L74,17.5 L73,16.38 L72,13.97 L71,12.78 L70,12.82 L69,12.62 L68,15.42 L67,16.04 L66,15.51 L65,16.27 L64,17.11 L63,16.02 L62,15.02 L61,16.05 L60,16.81 L59,16.4 L58,15.14 L57,12.82 L56,12.74 L55,12.61 L54,15.74 L53,15.36 L52,14.49 L51,15.61 L50,16.75 L49,16.28 L48,16.06 L47,15.17 L46,16.71 L45,17.15 L44,15.35 L43,12.73 L42,12.64 L41,12.76 L40,12.89 L39,15.47 L38,14.77 L37,15.9 L36,17.06 L35,16.47 L34,16.48 L33,15.29 L32,16.62 L31,16.73 L30,16.8 L29,14.36 L28,12.92 L27,12.65 L26,12.6 L25,15.75 L24,15.13 L23,15.23 L22,16.14 L21,17.42 L20,16.72 L19,14.65 L18,16.27 L17,17.29 L16,16.15 L15,15.01 L14,12.89 L13,12.65 L12,12.61 L11,16 L10,15.73 L9,14.56 L8,15.95 L7,17.34 L6,17.3 L5,15.43 L4,15.32 L3,17.35 L2,16.95 L1,15.97 L0,12.89 Z" fill="#1e1e24"/><path d="M0,29.42 L1,26.67 L2,25.27 L3,25.21 L4,26.47 L5,26.94 L6,24.87 L7,25.53 L8,26.54 L9,28.43 L10,26.63 L11,27.24 L12,29.83 L13,29.71 L14,29.65 L15,27.08 L16,26.6 L17,26.34 L18,26.72 L19,27.45 L20,25.36 L21,24.86 L22,25.24 L23,27.34 L24,26.78 L25,26.8 L26,29.82 L27,29.85 L28,29.74 L29,27.97 L30,26.26 L31,25.84 L32,26.14 L33,27.82 L34,25.85 L35,25.28 L36,25.19 L37,26.39 L38,27.62 L39,27 L40,29.83 L41,29.6 L42,29.64 L43,29.78 L44,26.48 L45,26.03 L46,25.24 L47,27.35 L48,26.53 L49,24.84 L50,25.53 L51,26.3 L52,28.5 L53,26.94 L54,27.11 L55,29.82 L56,29.9 L57,29.82 L58,27.8 L59,26 L60,25.81 L61,26.72 L62,27.14 L63,26.16 L64,25.3 L65,25.26 L66,27.1 L67,26.43 L68,26.39 L69,29.62 L70,29.9 L71,29.67 L72,28.27 L73,26.62 L74,25.27 L75,25.66 L76,27.66 L77,26.49 L78,25.77 L79,24.89 L80,26.58 L81,27.69 L82,26.48 L83,29.91 L84,29.83 L85,29.75 L86,29.58 L87,26.43 L88,25.74 L89,25.38 L90,27.12 L91,26.64 L92,24.84 L93,25.95 L94,25.62 L95,27.92 L96,26.84 L97,26.37 L98,29.57 L99,29.87 L100,29.76 L101,27.35 L102,25.64 L103,26.02 L104,25.99 L105,27.45 L106,25.4 L107,24.97 L108,25.28 L109,27.2 L110,26.95 L111,26.57 L112,29.78 L112,32.22 L111,35.43 L110,35.05 L109,34.8 L108,36.72 L107,37.03 L106,36.6 L105,34.55 L104,36.01 L103,35.98 L102,36.36 L101,34.65 L100,32.24 L99,32.13 L98,32.43 L97,35.63 L96,35.16 L95,34.08 L94,36.38 L93,36.05 L92,37.16 L91,35.36 L90,34.88 L89,36.62 L88,36.26 L87,35.57 L86,32.42 L85,32.25 L84,32.17 L83,32.09 L82,35.52 L81,34.31 L80,35.42 L79,37.11 L78,36.23 L77,35.51 L76,34.34 L75,36.34 L74,36.73 L73,35.38 L72,33.73 L71,32.33 L70,32.1 L69,32.38 L68,35.61 L67,35.57 L66,34.9 L65,36.74 L64,36.7 L63,35.84 L62,34.86 L61,35.28 L60,36.19 L59,36 L58,34.2 L57,32.18 L56,32.1 L55,32.18 L54,34.89 L53,35.06 L52,33.5 L51,35.7 L50,36.47 L49,37.16 L48,35.47 L47,34.65 L46,36.76 L45,35.97 L44,35.52 L43,32.22 L42,32.36 L41,32.4 L40,32.17 L39,35 L38,34.38 L37,35.61 L36,36.81 L35,36.72 L34,36.15 L33,34.18 L32,35.86 L31,36.16 L30,35.74 L29,34.03 L28,32.26 L27,32.15 L26,32.18 L25,35.2 L24,35.22 L23,34.66 L22,36.76 L21,37.14 L20,36.64 L19,34.55 L18,35.28 L17,35.66 L16,35.4 L15,34.92 L14,32.35 L13,32.29 L12,32.17 L11,34.76 L10,35.37 L9,33.57 L8,35.46 L7,36.47 L6,37.13 L5,35.06 L4,35.53 L3,36.79 L2,36.73 L1,35.33 L0,32.58 Z" fill="#1e1e24"/></svg>
<svg style="left:614.31px;top:170px;" width="112.77" height="40" viewBox="0 0 112.77 40"><path d="M0,9.73 L1,7.86 L2,5.93 L3,6.81 L4,6.84 L5,7.86 L6,5.48 L7,5.62 L8,6.3 L9,8.18 L10,7.47 L11,7.52 L12,10.17 L13,10.33 L14,10.33 L15,8.13 L16,6 L17,5.61 L18,6.51 L19,8.28 L20,5.73 L21,5.83 L22,6.77 L23,7.97 L24,7.53 L25,7.58 L26,10.23 L27,10.3 L28,10.22 L29,8.2 L30,6.66 L31,6.32 L32,6.01 L33,7.59 L34,6.79 L35,5.19 L36,6.82 L37,7.7 L38,8.24 L39,6.45 L40,10.18 L41,10.17 L42,10.33 L43,10.25 L44,6.85 L45,6.89 L46,6.86 L47,7.9 L48,7.36 L49,5.56 L50,5.82 L51,6.88 L52,8.7 L53,7.56 L54,6.75 L55,10.3 L56,10.34 L57,10.32 L58,7.56 L59,6.79 L60,5.55 L61,7.08 L62,8.13 L63,7.01 L64,5.19 L65,5.91 L66,7.89 L67,7.91 L68,7.04 L69,10.29 L70,10.13 L71,10.1 L72,8.43 L73,7.17 L74,6.88 L75,5.94 L76,7.56 L77,7.27 L78,5.92 L79,6.09 L80,6.63 L81,8.41 L82,7.58 L83,10.13 L84,10.22 L85,10.26 L86,10.15 L87,7.24 L88,6.02 L89,6.64 L90,7.81 L91,7.95 L92,6.36 L93,5.66 L94,6.87 L95,8.91 L96,7.03 L97,7 L98,10.21 L99,10.32 L100,10.13 L101,7.64 L102,6 L103,5.57 L104,7.48 L105,7.99 L106,6.64 L107,6.03 L108,6.29 L109,8.18 L110,7.78 L111,6.4 L112,10.31 L112,12.69 L111,16.6 L110,15.22 L109,14.82 L108,16.71 L107,16.97 L106,16.36 L105,15.01 L104,15.52 L103,17.43 L102,17 L101,15.36 L100,12.87 L99,12.68 L98,12.79 L97,16 L96,15.97 L95,14.09 L94,16.13 L93,17.34 L92,16.64 L91,15.05 L90,15.19 L89,16.36 L88,16.98 L87,15.76 L86,12.85 L85,12.74 L84,12.78 L83,12.87 L82,15.42 L81,14.59 L80,16.37 L79,16.91 L78,17.08 L77,15.73 L76,15.44 L75,17.06 L74,16.12 L73,15.83 L72,14.57 L71,12.9 L70,12.87 L69,12.71 L68,15.96 L67,15.09 L66,15.11 L65,17.09 L64,17.81 L63,15.99 L62,14.87 L61,15.92 L60,17.45 L59,16.21 L58,15.44 L57,12.68 L56,12.66 L55,12.7 L54,16.25 L53,15.44 L52,14.3 L51,16.12 L50,17.18 L49,17.44 L48,15.64 L47,15.1 L46,16.14 L45,16.11 L44,16.15 L43,12.75 L42,12.67 L41,12.83 L40,12.82 L39,16.55 L38,14.76 L37,15.3 L36,16.18 L35,17.81 L34,16.21 L33,15.41 L32,16.99 L31,16.68 L30,16.34 L29,14.8 L28,12.78 L27,12.7 L26,12.77 L25,15.42 L24,15.47 L23,15.03 L22,16.23 L21,17.17 L20,17.27 L19,14.72 L18,16.49 L17,17.39 L16,17 L15,14.87 L14,12.67 L13,12.67 L12,12.83 L11,15.48 L10,15.53 L9,14.82 L8,16.7 L7,17.38 L6,17.52 L5,15.14 L4,16.16 L3,16.19 L2,17.07 L1,15.14 L0,13.27 Z" fill="#1e1e24"/><path d="M0,29.41 L1,26.47 L2,25.41 L3,25.26 L4,27.16 L5,26.21 L6,25.46 L7,25.02 L8,25.94 L9,27.74 L10,26.92 L11,26.99 L12,29.67 L13,29.72 L14,29.66 L15,27.48 L16,25.36 L17,26.42 L18,26.11 L19,27.62 L20,26.55 L21,25.07 L22,26.53 L23,27.7 L24,27.14 L25,26.98 L26,29.87 L27,29.9 L28,29.63 L29,28.41 L30,26.8 L31,26.32 L32,25.45 L33,27.53 L34,25.84 L35,24.65 L36,25.59 L37,26.89 L38,27.51 L39,26.81 L40,29.71 L41,29.58 L42,29.75 L43,29.66 L44,26.35 L45,25.3 L46,25.53 L47,26.81 L48,27.3 L49,25.77 L50,24.84 L51,26.32 L52,28.06 L53,26.96 L54,26.69 L55,29.85 L56,29.65 L57,29.64 L58,27.89 L59,25.8 L60,26.29 L61,25.77 L62,27.89 L63,26.43 L64,24.71 L65,25.68 L66,27.87 L67,27 L68,26.11 L69,29.87 L70,29.66 L71,29.82 L72,28.18 L73,26.52 L74,26.36 L75,26.16 L76,27.48 L77,26.15 L78,25.35 L79,26.07 L80,26.59 L81,27.66 L82,26.01 L83,29.89 L84,29.65 L85,29.9 L86,29.73 L87,27.03 L88,25.87 L89,25.49 L90,26.46 L91,27.46 L92,25.01 L93,25.15 L94,26.75 L95,28.14 L96,26.3 L97,26.91 L98,29.61 L99,29.87 L100,29.76 L101,27.71 L102,25.6 L103,25.96 L104,26.66 L105,27.17 L106,26.04 L107,25.41 L108,25.52 L109,27.65 L110,26.64 L111,26.28 L112,29.75 L112,32.25 L111,35.72 L110,35.36 L109,34.35 L108,36.48 L107,36.59 L106,35.96 L105,34.83 L104,35.34 L103,36.04 L102,36.4 L101,34.29 L100,32.24 L99,32.13 L98,32.39 L97,35.09 L96,35.7 L95,33.86 L94,35.25 L93,36.85 L92,36.99 L91,34.54 L90,35.54 L89,36.51 L88,36.13 L87,34.97 L86,32.27 L85,32.1 L84,32.35 L83,32.11 L82,35.99 L81,34.34 L80,35.41 L79,35.93 L78,36.65 L77,35.85 L76,34.52 L75,35.84 L74,35.64 L73,35.48 L72,33.82 L71,32.18 L70,32.34 L69,32.13 L68,35.89 L67,35 L66,34.13 L65,36.32 L64,37.29 L63,35.57 L62,34.11 L61,36.23 L60,35.71 L59,36.2 L58,34.11 L57,32.36 L56,32.35 L55,32.15 L54,35.31 L53,35.04 L52,33.94 L51,35.68 L50,37.16 L49,36.23 L48,34.7 L47,35.19 L46,36.47 L45,36.7 L44,35.65 L43,32.34 L42,32.25 L41,32.42 L40,32.29 L39,35.19 L38,34.49 L37,35.11 L36,36.41 L35,37.35 L34,36.16 L33,34.47 L32,36.55 L31,35.68 L30,35.2 L29,33.59 L28,32.37 L27,32.1 L26,32.13 L25,35.02 L24,34.86 L23,34.3 L22,35.47 L21,36.93 L20,35.45 L19,34.38 L18,35.89 L17,35.58 L16,36.64 L15,34.52 L14,32.34 L13,32.28 L12,32.33 L11,35.01 L10,35.08 L9,34.26 L8,36.06 L7,36.98 L6,36.54 L5,35.79 L4,34.84 L3,36.74 L2,36.59 L1,35.53 L0,32.59 Z" fill="#1e1e24"/></svg>
<svg style="left:729.07px;top:170px;" width="112.77" height="40" viewBox="0 0 112.77 40"><path d="M0,10 L1,7.3 L2,6.4 L3,6.38 L4,7.52 L5,7.08 L6,6.44 L7,5.7 L8,7.44 L9,8.76 L10,7.35 L11,7.75 L12,10.16 L13,10.32 L14,10.15 L15,7.36 L16,6.86 L17,5.58 L18,6.49 L19,7.83 L20,7.05 L21,5.92 L22,6.19 L23,8.14 L24,7.76 L25,7.28 L26,10.34 L27,10.15 L28,10.3 L29,8.63 L30,6.66 L31,5.49 L32,6.82 L33,8.52 L34,6.13 L35,5.37 L36,5.63 L37,7.24 L38,8.17 L39,7.46 L40,10.32 L41,10.26 L42,10.4 L43,10.18 L44,7.04 L45,7.02 L46,5.78 L47,7.37 L48,6.82 L49,6.12 L50,5.43 L51,6.81 L52,8.61 L53,7.16 L54,7.86 L55,10.38 L56,10.34 L57,10.28 L58,8.03 L59,6.48 L60,5.93 L61,7 L62,8.25 L63,6.37 L64,5.12 L65,5.93 L66,7.71 L67,7.1 L68,7.38 L69,10.39 L70,10.39 L71,10.38 L72,9.03 L73,6.72 L74,5.54 L75,7.06 L76,7.82 L77,6.22 L78,5.49 L79,6.6 L80,7.05 L81,8.19 L82,7.43 L83,10.42 L84,10.24 L85,10.1 L86,10.39 L87,7.77 L88,6.47 L89,6.96 L90,7.36 L91,7.1 L92,6.16 L93,6.63 L94,7.35 L95,9.03 L96,6.97 L97,6.74 L98,10.25 L99,10.39 L100,10.35 L101,8.03 L102,7.11 L103,6.75 L104,6.92 L105,7.82 L106,6.8 L107,5.23 L108,5.76 L109,7.88 L110,7.81 L111,7.42 L112,10.19 L112,12.81 L111,15.58 L110,15.19 L109,15.12 L108,17.24 L107,17.77 L106,16.2 L105,15.18 L104,16.08 L103,16.25 L102,15.89 L101,14.97 L100,12.65 L99,12.61 L98,12.75 L97,16.26 L96,16.03 L95,13.97 L94,15.65 L93,16.37 L92,16.84 L91,15.9 L90,15.64 L89,16.04 L88,16.53 L87,15.23 L86,12.61 L85,12.9 L84,12.76 L83,12.58 L82,15.57 L81,14.81 L80,15.95 L79,16.4 L78,17.51 L77,16.78 L76,15.18 L75,15.94 L74,17.46 L73,16.28 L72,13.97 L71,12.62 L70,12.61 L69,12.61 L68,15.62 L67,15.9 L66,15.29 L65,17.07 L64,17.88 L63,16.63 L62,14.75 L61,16 L60,17.07 L59,16.52 L58,14.97 L57,12.72 L56,12.66 L55,12.62 L54,15.14 L53,15.84 L52,14.39 L51,16.19 L50,17.57 L49,16.88 L48,16.18 L47,15.63 L46,17.22 L45,15.98 L44,15.96 L43,12.82 L42,12.6 L41,12.74 L40,12.68 L39,15.54 L38,14.83 L37,15.76 L36,17.37 L35,17.63 L34,16.87 L33,14.48 L32,16.18 L31,17.51 L30,16.34 L29,14.37 L28,12.7 L27,12.85 L26,12.66 L25,15.72 L24,15.24 L23,14.86 L22,16.81 L21,17.08 L20,15.95 L19,15.17 L18,16.51 L17,17.42 L16,16.14 L15,15.64 L14,12.85 L13,12.68 L12,12.84 L11,15.25 L10,15.65 L9,14.24 L8,15.56 L7,17.3 L6,16.56 L5,15.92 L4,15.48 L3,16.62 L2,16.6 L1,15.7 L0,13 Z" fill="#1e1e24"/><path d="M0,29.51 L1,26.19 L2,25.09 L3,25.18 L4,26.57 L5,26.32 L6,26.34 L7,25.21 L8,26.62 L9,27.91 L10,26.73 L11,26.76 L12,29.73 L13,29.72 L14,29.63 L15,26.84 L16,26.23 L17,25.21 L18,25.89 L19,27.61 L20,26.41 L21,25.35 L22,25.49 L23,27.4 L24,27.3 L25,26.28 L26,29.81 L27,29.61 L28,29.87 L29,27.98 L30,26.51 L31,24.94 L32,26.54 L33,27.2 L34,26.38 L35,25.61 L36,26.03 L37,26.77 L38,26.96 L39,25.87 L40,29.59 L41,29.71 L42,29.84 L43,29.75 L44,26.63 L45,26.1 L46,25.06 L47,27.36 L48,27.14 L49,26.04 L50,25.94 L51,26.84 L52,28.41 L53,26.82 L54,26.26 L55,29.73 L56,29.7 L57,29.8 L58,27.73 L59,25.94 L60,25.32 L61,26.91 L62,27.43 L63,26.31 L64,25.04 L65,26.06 L66,27.73 L67,27.38 L68,26.16 L69,29.73 L70,29.9 L71,29.6 L72,28.31 L73,26.68 L74,26.43 L75,26.29 L76,27.44 L77,25.78 L78,25.74 L79,25.56 L80,27.23 L81,27.26 L82,26.77 L83,29.79 L84,29.83 L85,29.63 L86,29.58 L87,27.28 L88,25.88 L89,26.36 L90,26.52 L91,26.39 L92,26.18 L93,25.1 L94,26.48 L95,28.33 L96,26.59 L97,26.89 L98,29.69 L99,29.81 L100,29.75 L101,27.59 L102,26.16 L103,26.21 L104,26.52 L105,28.02 L106,25.74 L107,25.48 L108,25.94 L109,26.89 L110,27.39 L111,26.48 L112,29.71 L112,32.29 L111,35.52 L110,34.61 L109,35.11 L108,36.06 L107,36.52 L106,36.26 L105,33.98 L104,35.48 L103,35.79 L102,35.84 L101,34.41 L100,32.25 L99,32.19 L98,32.31 L97,35.11 L96,35.41 L95,33.67 L94,35.52 L93,36.9 L92,35.82 L91,35.61 L90,35.48 L89,35.64 L88,36.12 L87,34.72 L86,32.42 L85,32.37 L84,32.17 L83,32.21 L82,35.23 L81,34.74 L80,34.77 L79,36.44 L78,36.26 L77,36.22 L76,34.56 L75,35.71 L74,35.57 L73,35.32 L72,33.69 L71,32.4 L70,32.1 L69,32.27 L68,35.84 L67,34.62 L66,34.27 L65,35.94 L64,36.96 L63,35.69 L62,34.57 L61,35.09 L60,36.68 L59,36.06 L58,34.27 L57,32.2 L56,32.3 L55,32.27 L54,35.74 L53,35.18 L52,33.59 L51,35.16 L50,36.06 L49,35.96 L48,34.86 L47,34.64 L46,36.94 L45,35.9 L44,35.37 L43,32.25 L42,32.16 L41,32.29 L40,32.41 L39,36.13 L38,35.04 L37,35.23 L36,35.97 L35,36.39 L34,35.62 L33,34.8 L32,35.46 L31,37.06 L30,35.49 L29,34.02 L28,32.13 L27,32.39 L26,32.19 L25,35.72 L24,34.7 L23,34.6 L22,36.51 L21,36.65 L20,35.59 L19,34.39 L18,36.11 L17,36.79 L16,35.77 L15,35.16 L14,32.37 L13,32.28 L12,32.27 L11,35.24 L10,35.27 L9,34.09 L8,35.38 L7,36.79 L6,35.66 L5,35.68 L4,35.43 L3,36.82 L2,36.91 L1,35.81 L0,32.49 Z" fill="#1e1e24"/></svg>
<svg style="left:843.84px;top:170px;" width="112.77" height="40" viewBox="0 0 112.77 40"><path d="M0,9.93 L1,6.9 L2,5.59 L3,6.61 L4,7.1 L5,7.03 L6,5.82 L7,6.54 L8,7.42 L9,8.69 L10,6.84 L11,7.62 L12,10.25 L13,10.31 L14,10.12 L15,7.38 L16,6.65 L17,5.42 L18,7.47 L19,7.69 L20,5.81 L21,6.41 L22,6.07 L23,7.87 L24,6.91 L25,7.41 L26,10.23 L27,10.11 L28,10.2 L29,8.72 L30,7.41 L31,5.5 L32,6.57 L33,7.59 L34,7.26 L35,5.41 L36,5.59 L37,6.76 L38,8.39 L39,7.18 L40,10.41 L41,10.16 L42,10.3 L43,10.08 L44,7.46 L45,5.88 L46,5.74 L47,7.67 L48,7.25 L49,5.38 L50,5.86 L51,6.94 L52,8.89 L53,6.81 L54,7.66 L55,10.21 L56,10.23 L57,10.23 L58,8.27 L59,6.31 L60,5.54 L61,7.1 L62,8.24 L63,5.79 L64,5.72 L65,6.68 L66,8.38 L67,7.17 L68,7.22 L69,10.26 L70,10.33 L71,10.2 L72,8.44 L73,7.14 L74,6.82 L75,5.81 L76,7.59 L77,7.45 L78,5.81 L79,5.77 L80,7.34 L81,7.71 L82,6.43 L83,10.22 L84,10.29 L85,10.36 L86,10.34 L87,7.77 L88,6.89 L89,6.7 L90,6.91 L91,7.33 L92,5.63 L93,5.22 L94,6.28 L95,9.14 L96,6.65 L97,7.75 L98,10.15 L99,10.13 L100,10.19 L101,8.04 L102,7.16 L103,6.8 L104,6.65 L105,8.4 L106,6.37 L107,6.23 L108,6.82 L109,8.02 L110,7.24 L111,7.04 L112,10.29 L112,12.71 L111,15.96 L110,15.76 L109,14.98 L108,16.18 L107,16.77 L106,16.63 L105,14.6 L104,16.35 L103,16.2 L102,15.84 L101,14.96 L100,12.81 L99,12.87 L98,12.85 L97,15.25 L96,16.35 L95,13.86 L94,16.72 L93,17.78 L92,17.37 L91,15.67 L90,16.09 L89,16.3 L88,16.11 L87,15.23 L86,12.66 L85,12.64 L84,12.71 L83,12.78 L82,16.57 L81,15.29 L80,15.66 L79,17.23 L78,17.19 L77,15.55 L76,15.41 L75,17.19 L74,16.18 L73,15.86 L72,14.56 L71,12.8 L70,12.67 L69,12.74 L68,15.78 L67,15.83 L66,14.62 L65,16.32 L64,17.28 L63,17.21 L62,14.76 L61,15.9 L60,17.46 L59,16.69 L58,14.73 L57,12.77 L56,12.77 L55,12.79 L54,15.34 L53,16.19 L52,14.11 L51,16.06 L50,17.14 L49,17.62 L48,15.75 L47,15.33 L46,17.26 L45,17.12 L44,15.54 L43,12.92 L42,12.7 L41,12.84 L40,12.59 L39,15.82 L38,14.61 L37,16.24 L36,17.41 L35,17.59 L34,15.74 L33,15.41 L32,16.43 L31,17.5 L30,15.59 L29,14.28 L28,12.8 L27,12.89 L26,12.77 L25,15.59 L24,16.09 L23,15.13 L22,16.93 L21,16.59 L20,17.19 L19,15.31 L18,15.53 L17,17.58 L16,16.35 L15,15.62 L14,12.88 L13,12.69 L12,12.75 L11,15.38 L10,16.16 L9,14.31 L8,15.58 L7,16.46 L6,17.18 L5,15.97 L4,15.9 L3,16.39 L2,17.41 L1,16.1 L0,13.07 Z" fill="#1e1e24"/><path d="M0,29.35 L1,27.27 L2,25.6 L3,25.29 L4,26.52 L5,26.75 L6,25.36 L7,25.62 L8,26.24 L9,28.42 L10,26.42 L11,26.71 L12,29.83 L13,29.79 L14,29.66 L15,27.4 L16,25.35 L17,24.96 L18,25.95 L19,27.91 L20,26.48 L21,25.69 L22,26.08 L23,27.22 L24,26.56 L25,26.46 L26,29.7 L27,29.72 L28,29.92 L29,28.04 L30,26.73 L31,25.8 L32,26.73 L33,27.42 L34,25.72 L35,26.1 L36,25.46 L37,27.34 L38,27.55 L39,26.95 L40,29.62 L41,29.67 L42,29.61 L43,29.85 L44,26.55 L45,25.5 L46,25.77 L47,26.37 L48,26.67 L49,25.92 L50,25.06 L51,26.27 L52,28.43 L53,26.51 L54,27.33 L55,29.77 L56,29.73 L57,29.93 L58,27.24 L59,26.62 L60,25.44 L61,26.57 L62,28.03 L63,25.16 L64,26.05 L65,26.35 L66,27.36 L67,27.26 L68,26.49 L69,29.76 L70,29.72 L71,29.73 L72,28.3 L73,26.77 L74,25.38 L75,26.11 L76,27.48 L77,25.75 L78,26.2 L79,25.91 L80,26.64 L81,27.9 L82,26.19 L83,29.78 L84,29.81 L85,29.86 L86,29.58 L87,27.39 L88,25.33 L89,25.47 L90,26.34 L91,26.64 L92,25.84 L93,25.31 L94,25.63 L95,28.65 L96,26.25 L97,26.54 L98,29.86 L99,29.58 L100,29.82 L101,27.95 L102,26.38 L103,25.64 L104,26.96 L105,27.56 L106,26 L107,25.62 L108,25.44 L109,27.18 L110,26.46 L111,26.05 L112,29.62 L112,32.38 L111,35.95 L110,35.54 L109,34.82 L108,36.56 L107,36.38 L106,36 L105,34.44 L104,35.04 L103,36.36 L102,35.62 L101,34.05 L100,32.18 L99,32.42 L98,32.14 L97,35.46 L96,35.75 L95,33.35 L94,36.37 L93,36.69 L92,36.16 L91,35.36 L90,35.66 L89,36.53 L88,36.67 L87,34.61 L86,32.42 L85,32.14 L84,32.19 L83,32.22 L82,35.81 L81,34.1 L80,35.36 L79,36.09 L78,35.8 L77,36.25 L76,34.52 L75,35.89 L74,36.62 L73,35.23 L72,33.7 L71,32.27 L70,32.28 L69,32.24 L68,35.51 L67,34.74 L66,34.64 L65,35.65 L64,35.95 L63,36.84 L62,33.97 L61,35.43 L60,36.56 L59,35.38 L58,34.76 L57,32.07 L56,32.27 L55,32.23 L54,34.67 L53,35.49 L52,33.57 L51,35.73 L50,36.94 L49,36.08 L48,35.33 L47,35.63 L46,36.23 L45,36.5 L44,35.45 L43,32.15 L42,32.39 L41,32.33 L40,32.38 L39,35.05 L38,34.45 L37,34.66 L36,36.54 L35,35.9 L34,36.28 L33,34.58 L32,35.27 L31,36.2 L30,35.27 L29,33.96 L28,32.08 L27,32.28 L26,32.3 L25,35.54 L24,35.44 L23,34.78 L22,35.92 L21,36.31 L20,35.52 L19,34.09 L18,36.05 L17,37.04 L16,36.65 L15,34.6 L14,32.34 L13,32.21 L12,32.17 L11,35.29 L10,35.58 L9,33.58 L8,35.76 L7,36.38 L6,36.64 L5,35.25 L4,35.48 L3,36.71 L2,36.4 L1,34.73 L0,32.65 Z" fill="#1e1e24"/></svg>
<svg style="left:958.6px;top:170px;" width="112.77" height="40" viewBox="0 0 112.77 40"><rect x="0" y="11" width="112.77" height="1.2" fill="#1e1e24"/><rect x="0" y="30.5" width="112.77" height="1.2" fill="#1e1e24"/></svg>
<svg style="left:1073.37px;top:170px;" width="112.77" height="40" viewBox="0 0 112.77 40"><path d="M0,9.86 L1,6.93 L2,6.25 L3,6.28 L4,7.54 L5,6.67 L6,6.39 L7,6.47 L8,7.1 L9,8.8 L10,7.36 L11,7.6 L12,10.39 L13,10.31 L14,10.32 L15,7.77 L16,6.93 L17,6.83 L18,7.29 L19,7.96 L20,6.52 L21,5.47 L22,5.93 L23,8.01 L24,7.9 L25,6.75 L26,10.16 L27,10.29 L28,10.19 L29,8.73 L30,6.3 L31,5.67 L32,6.11 L33,7.63 L34,7.13 L35,5.83 L36,5.72 L37,6.9 L38,8.01 L39,7.48 L40,10.2 L41,10.39 L42,10.18 L43,10.43 L44,7.37 L45,6.32 L46,6.85 L47,7.39 L48,7.32 L49,6.29 L50,5.27 L51,6.25 L52,8.39 L53,7.48 L54,7.86 L55,10.29 L56,10.39 L57,10.18 L58,8.14 L59,7.06 L60,6.5 L61,6.99 L62,7.84 L63,6.44 L64,6.17 L65,6.08 L66,8.34 L67,7.8 L68,6.79 L69,10.16 L70,10.39 L71,10.4 L72,8.63 L73,6.68 L74,6.91 L75,6.59 L76,8.23 L77,7.37 L78,6.44 L79,6.39 L80,7.26 L81,8.34 L82,6.86 L83,10.11 L84,10.18 L85,10.4 L86,10.2 L87,7.2 L88,7.04 L89,6.45 L90,7.14 L91,6.84 L92,5.44 L93,5.78 L94,6.59 L95,8.44 L96,7.54 L97,7.24 L98,10.41 L99,10.15 L100,10.19 L101,8.24 L102,6.98 L103,6.13 L104,6.49 L105,8.5 L106,6.67 L107,5.83 L108,6.67 L109,7.4 L110,7.24 L111,6.44 L112,10.2 L112,12.8 L111,16.56 L110,15.76 L109,15.6 L108,16.33 L107,17.17 L106,16.33 L105,14.5 L104,16.51 L103,16.87 L102,16.02 L101,14.76 L100,12.81 L99,12.85 L98,12.59 L97,15.76 L96,15.46 L95,14.56 L94,16.41 L93,17.22 L92,17.56 L91,16.16 L90,15.86 L89,16.55 L88,15.96 L87,15.8 L86,12.8 L85,12.6 L84,12.82 L83,12.89 L82,16.14 L81,14.66 L80,15.74 L79,16.61 L78,16.56 L77,15.63 L76,14.77 L75,16.41 L74,16.09 L73,16.32 L72,14.37 L71,12.6 L70,12.61 L69,12.84 L68,16.21 L67,15.2 L66,14.66 L65,16.92 L64,16.83 L63,16.56 L62,15.16 L61,16.01 L60,16.5 L59,15.94 L58,14.86 L57,12.82 L56,12.61 L55,12.71 L54,15.14 L53,15.52 L52,14.61 L51,16.75 L50,17.73 L49,16.71 L48,15.68 L47,15.61 L46,16.15 L45,16.68 L44,15.63 L43,12.57 L42,12.82 L41,12.61 L40,12.8 L39,15.52 L38,14.99 L37,16.1 L36,17.28 L35,17.17 L34,15.87 L33,15.37 L32,16.89 L31,17.33 L30,16.7 L29,14.27 L28,12.81 L27,12.71 L26,12.84 L25,16.25 L24,15.1 L23,14.99 L22,17.07 L21,17.53 L20,16.48 L19,15.04 L18,15.71 L17,16.17 L16,16.07 L15,15.23 L14,12.68 L13,12.69 L12,12.61 L11,15.4 L10,15.64 L9,14.2 L8,15.9 L7,16.53 L6,16.61 L5,16.33 L4,15.46 L3,16.72 L2,16.75 L1,16.07 L0,13.14 Z" fill="#1e1e24"/><path d="M0,29.57 L1,26.91 L2,26.23 L3,25.96 L4,26.84 L5,26.6 L6,25.95 L7,25.64 L8,26.72 L9,27.84 L10,26.9 L11,26.37 L12,29.9 L13,29.92 L14,29.78 L15,27.42 L16,25.65 L17,25.12 L18,26.38 L19,27.7 L20,25.54 L21,25.41 L22,26.23 L23,27.61 L24,27.52 L25,26.27 L26,29.91 L27,29.86 L28,29.71 L29,27.96 L30,26.2 L31,25.47 L32,25.6 L33,27.14 L34,25.64 L35,25.59 L36,25.81 L37,27.2 L38,27.47 L39,26.93 L40,29.59 L41,29.66 L42,29.84 L43,29.68 L44,26.58 L45,26.39 L46,25.33 L47,26.59 L48,26.85 L49,24.9 L50,26.06 L51,26.88 L52,28.02 L53,26.46 L54,27.38 L55,29.71 L56,29.72 L57,29.79 L58,27.78 L59,25.58 L60,25.07 L61,26.29 L62,27.84 L63,25.82 L64,25.11 L65,25.82 L66,27.05 L67,27.28 L68,26.04 L69,29.67 L70,29.88 L71,29.9 L72,27.9 L73,26.61 L74,25.07 L75,25.39 L76,27.72 L77,25.99 L78,25.87 L79,25.56 L80,27.1 L81,27.14 L82,26.98 L83,29.6 L84,29.8 L85,29.83 L86,29.91 L87,27.2 L88,26.46 L89,26.19 L90,26.25 L91,26.69 L92,26.2 L93,26.02 L94,26.26 L95,28 L96,26.74 L97,26.93 L98,29.69 L99,29.88 L100,29.86 L101,27.41 L102,25.58 L103,25.72 L104,26.61 L105,27.61 L106,25.48 L107,25.82 L108,26.34 L109,27.31 L110,27.18 L111,26.97 L112,29.85 L112,32.15 L111,35.03 L110,34.82 L109,34.69 L108,35.66 L107,36.18 L106,36.52 L105,34.39 L104,35.39 L103,36.28 L102,36.42 L101,34.59 L100,32.14 L99,32.12 L98,32.31 L97,35.07 L96,35.26 L95,34 L94,35.74 L93,35.98 L92,35.8 L91,35.31 L90,35.75 L89,35.81 L88,35.54 L87,34.8 L86,32.09 L85,32.17 L84,32.2 L83,32.4 L82,35.02 L81,34.86 L80,34.9 L79,36.44 L78,36.13 L77,36.01 L76,34.28 L75,36.61 L74,36.93 L73,35.39 L72,34.1 L71,32.1 L70,32.12 L69,32.33 L68,35.96 L67,34.72 L66,34.95 L65,36.18 L64,36.89 L63,36.18 L62,34.16 L61,35.71 L60,36.93 L59,36.42 L58,34.22 L57,32.21 L56,32.28 L55,32.29 L54,34.62 L53,35.54 L52,33.98 L51,35.12 L50,35.94 L49,37.1 L48,35.15 L47,35.41 L46,36.67 L45,35.61 L44,35.42 L43,32.32 L42,32.16 L41,32.34 L40,32.41 L39,35.07 L38,34.53 L37,34.8 L36,36.19 L35,36.41 L34,36.36 L33,34.86 L32,36.4 L31,36.53 L30,35.8 L29,34.04 L28,32.29 L27,32.14 L26,32.09 L25,35.73 L24,34.48 L23,34.39 L22,35.77 L21,36.59 L20,36.46 L19,34.3 L18,35.62 L17,36.88 L16,36.35 L15,34.58 L14,32.22 L13,32.08 L12,32.1 L11,35.63 L10,35.1 L9,34.16 L8,35.28 L7,36.36 L6,36.05 L5,35.4 L4,35.16 L3,36.04 L2,35.77 L1,35.09 L0,32.43 Z" fill="#1e1e24"/></svg>
<svg style="left:1216.82px;top:170px;" width="92.18" height="40" viewBox="0 0 92.18 40"><path d="M0,9.98 L1,7.63 L2,6.76 L3,6.68 L4,7.11 L5,7.57 L6,6.25 L7,5.62 L8,6.73 L9,8.23 L10,7.16 L11,7.42 L12,10.21 L13,10.35 L14,10.11 L15,7.97 L16,6.67 L17,5.9 L18,7.36 L19,7.84 L20,5.84 L21,6.11 L22,5.72 L23,7.9 L24,7.12 L25,7.08 L26,10.28 L27,10.33 L28,10.42 L29,8.81 L30,6.2 L31,6.12 L32,6.58 L33,7.68 L34,6.63 L35,5.14 L36,6.3 L37,7.61 L38,7.47 L39,7.45 L40,10.14 L41,10.21 L42,10.08 L43,10.09 L44,7.12 L45,6.98 L46,7 L47,7.4 L48,6.94 L49,6.73 L50,6.02 L51,7.31 L52,8.85 L53,7.77 L54,7.49 L55,10.24 L56,10.36 L57,10.15 L58,8.35 L59,6.94 L60,6.54 L61,6.99 L62,7.81 L63,6.6 L64,5.53 L65,5.72 L66,8.25 L67,7.05 L68,6.9 L69,10.16 L70,10.21 L71,10.28 L72,8.96 L73,7.36 L74,6.67 L75,6.96 L76,8.36 L77,7.2 L78,5.82 L79,5.64 L80,6.85 L81,7.59 L82,7.51 L83,10.13 L84,10.36 L85,10.4 L86,10.32 L87,7.25 L88,6.98 L89,6.7 L90,7.44 L91,6.99 L92,6.26 L92,16.74 L91,16.01 L90,15.56 L89,16.3 L88,16.02 L87,15.75 L86,12.68 L85,12.6 L84,12.64 L83,12.87 L82,15.49 L81,15.41 L80,16.15 L79,17.36 L78,17.18 L77,15.8 L76,14.64 L75,16.04 L74,16.33 L73,15.64 L72,14.04 L71,12.72 L70,12.79 L69,12.84 L68,16.1 L67,15.95 L66,14.75 L65,17.28 L64,17.47 L63,16.4 L62,15.19 L61,16.01 L60,16.46 L59,16.06 L58,14.65 L57,12.85 L56,12.64 L55,12.76 L54,15.51 L53,15.23 L52,14.15 L51,15.69 L50,16.98 L49,16.27 L48,16.06 L47,15.6 L46,16 L45,16.02 L44,15.88 L43,12.91 L42,12.92 L41,12.79 L40,12.86 L39,15.55 L38,15.53 L37,15.39 L36,16.7 L35,17.86 L34,16.37 L33,15.32 L32,16.42 L31,16.88 L30,16.8 L29,14.19 L28,12.58 L27,12.67 L26,12.72 L25,15.92 L24,15.88 L23,15.1 L22,17.28 L21,16.89 L20,17.16 L19,15.16 L18,15.64 L17,17.1 L16,16.33 L15,15.03 L14,12.89 L13,12.65 L12,12.79 L11,15.58 L10,15.84 L9,14.77 L8,16.27 L7,17.38 L6,16.75 L5,15.43 L4,15.89 L3,16.32 L2,16.24 L1,15.37 L0,13.02 Z" fill="#1e1e24"/><path d="M0,29.5 L1,26.37 L2,26 L3,26.46 L4,26.94 L5,26.5 L6,25.29 L7,26.11 L8,26.29 L9,28.35 L10,27.22 L11,26.26 L12,29.68 L13,29.8 L14,29.65 L15,27.04 L16,26.71 L17,25.85 L18,26.66 L19,27.95 L20,25.5 L21,24.76 L22,25.89 L23,27.09 L24,26.89 L25,26.66 L26,29.72 L27,29.64 L28,29.83 L29,28.05 L30,26.85 L31,25.61 L32,25.76 L33,27.66 L34,26.81 L35,24.8 L36,25.16 L37,26.37 L38,27.75 L39,25.87 L40,29.75 L41,29.86 L42,29.82 L43,29.9 L44,26.45 L45,25.13 L46,25.18 L47,26.61 L48,26.79 L49,25.78 L50,25.14 L51,26.91 L52,28.55 L53,26.62 L54,26.99 L55,29.57 L56,29.68 L57,29.91 L58,27.28 L59,26.69 L60,24.97 L61,26.11 L62,27.3 L63,26.09 L64,26.1 L65,25.5 L66,27.18 L67,27.15 L68,26.91 L69,29.62 L70,29.81 L71,29.68 L72,27.81 L73,26.17 L74,26.25 L75,25.49 L76,27.03 L77,25.82 L78,25.13 L79,26.19 L80,27.22 L81,27.17 L82,27.01 L83,29.62 L84,29.85 L85,29.76 L86,29.85 L87,26.66 L88,25.56 L89,26.09 L90,26.84 L91,26.9 L92,25.39 L92,36.61 L91,35.1 L90,35.16 L89,35.91 L88,36.44 L87,35.34 L86,32.15 L85,32.24 L84,32.15 L83,32.38 L82,34.99 L81,34.83 L80,34.78 L79,35.81 L78,36.87 L77,36.18 L76,34.97 L75,36.51 L74,35.75 L73,35.83 L72,34.19 L71,32.32 L70,32.19 L69,32.38 L68,35.09 L67,34.85 L66,34.82 L65,36.5 L64,35.9 L63,35.91 L62,34.7 L61,35.89 L60,37.03 L59,35.31 L58,34.72 L57,32.09 L56,32.32 L55,32.43 L54,35.01 L53,35.38 L52,33.45 L51,35.09 L50,36.86 L49,36.22 L48,35.21 L47,35.39 L46,36.82 L45,36.87 L44,35.55 L43,32.1 L42,32.18 L41,32.14 L40,32.25 L39,36.13 L38,34.25 L37,35.63 L36,36.84 L35,37.2 L34,35.19 L33,34.34 L32,36.24 L31,36.39 L30,35.15 L29,33.95 L28,32.17 L27,32.36 L26,32.28 L25,35.34 L24,35.11 L23,34.91 L22,36.11 L21,37.24 L20,36.5 L19,34.05 L18,35.34 L17,36.15 L16,35.29 L15,34.96 L14,32.35 L13,32.2 L12,32.32 L11,35.74 L10,34.78 L9,33.65 L8,35.71 L7,35.89 L6,36.71 L5,35.5 L4,35.06 L3,35.54 L2,36 L1,35.63 L0,32.5 Z" fill="#1e1e24"/></svg>
<div style="left:10px;top:215px;width:488.54px;height:3.3px;background:#8dc5ff;"></div>
<div style="left:39.48px;top:223.3px;width:1147.65px;height:2.6px;background:#8dc5ff;"></div>
<div style="left:1215.82px;top:219px;width:93.18px;height:2.5px;background:#8dc5ff;"></div>
<div style="left:1215.82px;top:223px;width:93.18px;height:2.2px;background:#8dc5ff;"></div>
<div style="left:1187.13px;top:227px;width:121.87px;height:2.5px;background:#8dc5ff;"></div>
<div style="left:269.01px;top:233px;width:688.59px;height:57.5px;background:#5cffe4;"></div>
<div style="left:283.36px;top:251px;width:1px;height:39.5px;background:#52e5cd;"></div>
<div style="left:297.7px;top:251px;width:1px;height:39.5px;background:#52e5cd;"></div>
<div style="left:312.05px;top:251px;width:1px;height:39.5px;background:#52e5cd;"></div>
<div style="left:326.39px;top:251px;width:1px;height:39.5px;background:#52e5cd;"></div>
<div style="left:340.74px;top:251px;width:1px;height:39.5px;background:#52e5cd;"></div>
<div style="left:355.08px;top:251px;width:1px;height:39.5px;background:#52e5cd;"></div>
<div style="left:369.43px;top:251px;width:1px;height:39.5px;background:#52e5cd;"></div>
<div style="left:383.78px;top:251px;width:1px;height:39.5px;background:#52e5cd;"></div>
<div style="left:398.12px;top:251px;width:1px;height:39.5px;background:#52e5cd;"></div>
<div style="left:412.47px;top:251px;width:1px;height:39.5px;background:#52e5cd;"></div>
<div style="left:426.81px;top:251px;width:1px;height:39.5px;background:#52e5cd;"></div>
<div style="left:441.16px;top:251px;width:1px;height:39.5px;background:#52e5cd;"></div>
<div style="left:455.5px;top:251px;width:1px;height:39.5px;background:#52e5cd;"></div>
<div style="left:469.85px;top:251px;width:1px;height:39.5px;background:#52e5cd;"></div>
<div style="left:484.2px;top:251px;width:1px;height:39.5px;background:#52e5cd;"></div>
<div style="left:498.54px;top:251px;width:1px;height:39.5px;background:#52e5cd;"></div>
<div style="left:512.89px;top:251px;width:1px;height:39.5px;background:#52e5cd;"></div>
<div style="left:527.23px;top:251px;width:1px;height:39.5px;background:#52e5cd;"></div>
<div style="left:541.58px;top:251px;width:1px;height:39.5px;background:#52e5cd;"></div>
<div style="left:555.92px;top:251px;width:1px;height:39.5px;background:#52e5cd;"></div>
<div style="left:570.27px;top:251px;width:1px;height:39.5px;background:#52e5cd;"></div>
<div style="left:584.61px;top:251px;width:1px;height:39.5px;background:#52e5cd;"></div>
<div style="left:598.96px;top:251px;width:1px;height:39.5px;background:#52e5cd;"></div>
<div style="left:613.31px;top:251px;width:1px;height:39.5px;background:#52e5cd;"></div>
<div style="left:627.65px;top:251px;width:1px;height:39.5px;background:#52e5cd;"></div>
<div style="left:642px;top:251px;width:1px;height:39.5px;background:#52e5cd;"></div>
<div style="left:656.34px;top:251px;width:1px;height:39.5px;background:#52e5cd;"></div>
<div style="left:670.69px;top:251px;width:1px;height:39.5px;background:#52e5cd;"></div>
<div style="left:685.03px;top:251px;width:1px;height:39.5px;background:#52e5cd;"></div>
<div style="left:699.38px;top:251px;width:1px;height:39.5px;background:#52e5cd;"></div>
<div style="left:713.73px;top:251px;width:1px;height:39.5px;background:#52e5cd;"></div>
<div style="left:728.07px;top:251px;width:1px;height:39.5px;background:#52e5cd;"></div>
<div style="left:742.42px;top:251px;width:1px;height:39.5px;background:#52e5cd;"></div>
<div style="left:756.76px;top:251px;width:1px;height:39.5px;background:#52e5cd;"></div>
<div style="left:771.11px;top:251px;width:1px;height:39.5px;background:#52e5cd;"></div>
<div style="left:785.45px;top:251px;width:1px;height:39.5px;background:#52e5cd;"></div>
<div style="left:799.8px;top:251px;width:1px;height:39.5px;background:#52e5cd;"></div>
<div style="left:814.15px;top:251px;width:1px;height:39.5px;background:#52e5cd;"></div>
<div style="left:828.49px;top:251px;width:1px;height:39.5px;background:#52e5cd;"></div>
<div style="left:842.84px;top:251px;width:1px;height:39.5px;background:#52e5cd;"></div>
<div style="left:857.18px;top:251px;width:1px;height:39.5px;background:#52e5cd;"></div>
<div style="left:871.53px;top:251px;width:1px;height:39.5px;background:#52e5cd;"></div>
<div style="left:885.87px;top:251px;width:1px;height:39.5px;background:#52e5cd;"></div>
<div style="left:900.22px;top:251px;width:1px;height:39.5px;background:#52e5cd;"></div>
<div style="left:914.56px;top:251px;width:1px;height:39.5px;background:#52e5cd;"></div>
<div style="left:928.91px;top:251px;width:1px;height:39.5px;background:#52e5cd;"></div>
<div style="left:943.26px;top:251px;width:1px;height:39.5px;background:#52e5cd;"></div>
<div style="left:269.01px;top:251px;width:688.59px;height:1px;background:#399e8d;"></div>
<div style="left:498.04px;top:233px;width:1.3px;height:57.5px;background:#328c7d;"></div>
<div style="left:727.57px;top:233px;width:1.3px;height:57.5px;background:#328c7d;"></div>
<div style="left:1187.13px;top:233px;width:121.87px;height:57.5px;background:#5cffe4;"></div>
<div style="left:1201.48px;top:251px;width:1px;height:39.5px;background:#52e5cd;"></div>
<div style="left:1215.82px;top:251px;width:1px;height:39.5px;background:#52e5cd;"></div>
<div style="left:1230.17px;top:251px;width:1px;height:39.5px;background:#52e5cd;"></div>
<div style="left:1244.51px;top:251px;width:1px;height:39.5px;background:#52e5cd;"></div>
<div style="left:1258.86px;top:251px;width:1px;height:39.5px;background:#52e5cd;"></div>
<div style="left:1273.21px;top:251px;width:1px;height:39.5px;background:#52e5cd;"></div>
<div style="left:1287.55px;top:251px;width:1px;height:39.5px;background:#52e5cd;"></div>
<div style="left:1301.9px;top:251px;width:1px;height:39.5px;background:#52e5cd;"></div>
<div style="left:1187.13px;top:251px;width:121.87px;height:1px;background:#399e8d;"></div>
<svg style="left:269.01px;top:0px;" width="688.59" height="292" viewBox="0 0 688.59 292"><g fill="#1a2a28"><rect x="3.3" y="283.6" width="5.5" height="1.9"/><rect x="13.5" y="283.6" width="5.5" height="1.9"/><rect x="25" y="277.3" width="5.5" height="1.9"/><rect x="2" y="257.3" width="5" height="1.9"/><rect x="31.99" y="283.6" width="5.5" height="1.9"/><rect x="42.19" y="283.6" width="5.5" height="1.9"/><rect x="53.69" y="277.3" width="5.5" height="1.9"/><rect x="43.69" y="257.3" width="2" height="1.9"/><rect x="60.68" y="283.6" width="5.5" height="1.9"/><rect x="70.88" y="283.6" width="5.5" height="1.9"/><rect x="82.38" y="277.3" width="5.5" height="1.9"/><rect x="59.38" y="257.3" width="5" height="1.9"/><rect x="89.37" y="283.6" width="5.5" height="1.9"/><rect x="99.57" y="283.6" width="5.5" height="1.9"/><rect x="111.07" y="277.3" width="5.5" height="1.9"/><rect x="101.07" y="257.3" width="2" height="1.9"/><rect x="118.07" y="283.6" width="5.5" height="1.9"/><rect x="128.27" y="283.6" width="5.5" height="1.9"/><rect x="139.77" y="277.3" width="5.5" height="1.9"/><rect x="116.77" y="257.3" width="5" height="1.9"/><rect x="146.76" y="283.6" width="5.5" height="1.9"/><rect x="156.96" y="283.6" width="5.5" height="1.9"/><rect x="168.46" y="277.3" width="5.5" height="1.9"/><rect x="158.46" y="257.3" width="2" height="1.9"/><rect x="175.45" y="283.6" width="5.5" height="1.9"/><rect x="185.65" y="283.6" width="5.5" height="1.9"/><rect x="197.15" y="277.3" width="5.5" height="1.9"/><rect x="174.15" y="257.3" width="5" height="1.9"/><rect x="204.14" y="283.6" width="5.5" height="1.9"/><rect x="214.34" y="283.6" width="5.5" height="1.9"/><rect x="225.84" y="277.3" width="5.5" height="1.9"/><rect x="215.84" y="257.3" width="2" height="1.9"/><rect x="232.83" y="283.6" width="5.5" height="1.9"/><rect x="243.03" y="283.6" width="5.5" height="1.9"/><rect x="254.53" y="277.3" width="5.5" height="1.9"/><rect x="231.53" y="257.3" width="5" height="1.9"/><rect x="261.52" y="283.6" width="5.5" height="1.9"/><rect x="271.72" y="283.6" width="5.5" height="1.9"/><rect x="283.22" y="277.3" width="5.5" height="1.9"/><rect x="273.22" y="257.3" width="2" height="1.9"/><rect x="290.21" y="283.6" width="5.5" height="1.9"/><rect x="300.41" y="283.6" width="5.5" height="1.9"/><rect x="311.91" y="277.3" width="5.5" height="1.9"/><rect x="288.91" y="257.3" width="5" height="1.9"/><rect x="318.9" y="283.6" width="5.5" height="1.9"/><rect x="329.1" y="283.6" width="5.5" height="1.9"/><rect x="340.6" y="277.3" width="5.5" height="1.9"/><rect x="330.6" y="257.3" width="2" height="1.9"/><rect x="347.6" y="283.6" width="5.5" height="1.9"/><rect x="357.8" y="283.6" width="5.5" height="1.9"/><rect x="369.3" y="277.3" width="5.5" height="1.9"/><rect x="346.3" y="257.3" width="5" height="1.9"/><rect x="376.29" y="283.6" width="5.5" height="1.9"/><rect x="386.49" y="283.6" width="5.5" height="1.9"/><rect x="397.99" y="277.3" width="5.5" height="1.9"/><rect x="387.99" y="257.3" width="2" height="1.9"/><rect x="404.98" y="283.6" width="5.5" height="1.9"/><rect x="415.18" y="283.6" width="5.5" height="1.9"/><rect x="426.68" y="277.3" width="5.5" height="1.9"/><rect x="403.68" y="257.3" width="5" height="1.9"/><rect x="433.67" y="283.6" width="5.5" height="1.9"/><rect x="443.87" y="283.6" width="5.5" height="1.9"/><rect x="455.37" y="277.3" width="5.5" height="1.9"/><rect x="445.37" y="257.3" width="2" height="1.9"/><rect x="462.36" y="283.6" width="5.5" height="1.9"/><rect x="472.56" y="283.6" width="5.5" height="1.9"/><rect x="484.06" y="277.3" width="5.5" height="1.9"/><rect x="461.06" y="257.3" width="5" height="1.9"/><rect x="491.05" y="283.6" width="5.5" height="1.9"/><rect x="501.25" y="283.6" width="5.5" height="1.9"/><rect x="512.75" y="277.3" width="5.5" height="1.9"/><rect x="502.75" y="257.3" width="2" height="1.9"/><rect x="519.74" y="283.6" width="5.5" height="1.9"/><rect x="529.94" y="283.6" width="5.5" height="1.9"/><rect x="541.44" y="277.3" width="5.5" height="1.9"/><rect x="518.44" y="257.3" width="5" height="1.9"/><rect x="548.43" y="283.6" width="5.5" height="1.9"/><rect x="558.63" y="283.6" width="5.5" height="1.9"/><rect x="570.13" y="277.3" width="5.5" height="1.9"/><rect x="560.13" y="257.3" width="2" height="1.9"/><rect x="577.13" y="283.6" width="5.5" height="1.9"/><rect x="587.33" y="283.6" width="5.5" height="1.9"/><rect x="598.83" y="277.3" width="5.5" height="1.9"/><rect x="575.83" y="257.3" width="5" height="1.9"/><rect x="605.82" y="283.6" width="5.5" height="1.9"/><rect x="616.02" y="283.6" width="5.5" height="1.9"/><rect x="627.52" y="277.3" width="5.5" height="1.9"/><rect x="617.52" y="257.3" width="2" height="1.9"/><rect x="634.51" y="283.6" width="5.5" height="1.9"/><rect x="644.71" y="283.6" width="5.5" height="1.9"/><rect x="656.21" y="277.3" width="5.5" height="1.9"/><rect x="633.21" y="257.3" width="5" height="1.9"/><rect x="663.2" y="283.6" width="5.5" height="1.9"/><rect x="673.4" y="283.6" width="5.5" height="1.9"/><rect x="674.9" y="257.3" width="2" height="1.9"/></g></svg>
<svg style="left:1187.13px;top:0px;" width="121.87" height="292" viewBox="0 0 121.87 292"><g fill="#1a2a28"><rect x="3.3" y="283.6" width="5.5" height="1.9"/><rect x="13.5" y="283.6" width="5.5" height="1.9"/><rect x="25" y="277.3" width="5.5" height="1.9"/><rect x="2" y="257.3" width="5" height="1.9"/><rect x="31.99" y="283.6" width="5.5" height="1.9"/><rect x="42.19" y="283.6" width="5.5" height="1.9"/><rect x="53.69" y="277.3" width="5.5" height="1.9"/><rect x="43.69" y="257.3" width="2" height="1.9"/><rect x="60.68" y="283.6" width="5.5" height="1.9"/><rect x="70.88" y="283.6" width="5.5" height="1.9"/><rect x="82.38" y="277.3" width="5.5" height="1.9"/><rect x="59.38" y="257.3" width="5" height="1.9"/><rect x="89.37" y="283.6" width="5.5" height="1.9"/><rect x="99.57" y="283.6" width="5.5" height="1.9"/><rect x="111.07" y="277.3" width="5.5" height="1.9"/><rect x="101.07" y="257.3" width="2" height="1.9"/><rect x="116.77" y="257.3" width="5" height="1.9"/></g></svg>
<div style="left:469.85px;top:292.8px;width:28.69px;height:17.2px;background:#5cffe4;"></div>
<div style="left:699.38px;top:292.8px;width:28.69px;height:17.2px;background:#5cffe4;"></div>
<div style="left:928.91px;top:292.8px;width:28.69px;height:17.2px;background:#5cffe4;"></div>
<div style="left:498.54px;top:313px;width:229.53px;height:37.5px;background:#eaf9aa;"></div>
<div style="left:512.89px;top:331px;width:1px;height:19.5px;background:#d2e099;"></div>
<div style="left:527.23px;top:331px;width:1px;height:19.5px;background:#d2e099;"></div>
<div style="left:541.58px;top:331px;width:1px;height:19.5px;background:#d2e099;"></div>
<div style="left:555.92px;top:331px;width:1px;height:19.5px;background:#d2e099;"></div>
<div style="left:570.27px;top:331px;width:1px;height:19.5px;background:#d2e099;"></div>
<div style="left:584.61px;top:331px;width:1px;height:19.5px;background:#d2e099;"></div>
<div style="left:598.96px;top:331px;width:1px;height:19.5px;background:#d2e099;"></div>
<div style="left:613.31px;top:331px;width:1px;height:19.5px;background:#d2e099;"></div>
<div style="left:627.65px;top:331px;width:1px;height:19.5px;background:#d2e099;"></div>
<div style="left:642px;top:331px;width:1px;height:19.5px;background:#d2e099;"></div>
<div style="left:656.34px;top:331px;width:1px;height:19.5px;background:#d2e099;"></div>
<div style="left:670.69px;top:331px;width:1px;height:19.5px;background:#d2e099;"></div>
<div style="left:685.03px;top:331px;width:1px;height:19.5px;background:#d2e099;"></div>
<div style="left:699.38px;top:331px;width:1px;height:19.5px;background:#d2e099;"></div>
<div style="left:713.73px;top:331px;width:1px;height:19.5px;background:#d2e099;"></div>
<div style="left:498.54px;top:329.8px;width:229.53px;height:1px;background:#919a69;"></div>
<div style="left:499.54px;top:337px;width:228.53px;height:7.8px;background:#23241c;"></div>
<div style="left:269.01px;top:353.3px;width:86.07px;height:56.2px;background:#f8f07c;"></div>
<div style="left:283.36px;top:370.5px;width:1px;height:39px;background:#dfd86f;"></div>
<div style="left:297.7px;top:370.5px;width:1px;height:39px;background:#dfd86f;"></div>
<div style="left:312.05px;top:370.5px;width:1px;height:39px;background:#dfd86f;"></div>
<div style="left:326.39px;top:370.5px;width:1px;height:39px;background:#dfd86f;"></div>
<div style="left:340.74px;top:370.5px;width:1px;height:39px;background:#dfd86f;"></div>
<div style="left:269.01px;top:370px;width:86.07px;height:1px;background:#99944c;"></div>
<div style="left:498.54px;top:353.3px;width:114.77px;height:56.2px;background:#f8f07c;"></div>
<div style="left:512.89px;top:370.5px;width:1px;height:39px;background:#dfd86f;"></div>
<div style="left:527.23px;top:370.5px;width:1px;height:39px;background:#dfd86f;"></div>
<div style="left:541.58px;top:370.5px;width:1px;height:39px;background:#dfd86f;"></div>
<div style="left:555.92px;top:370.5px;width:1px;height:39px;background:#dfd86f;"></div>
<div style="left:570.27px;top:370.5px;width:1px;height:39px;background:#dfd86f;"></div>
<div style="left:584.61px;top:370.5px;width:1px;height:39px;background:#dfd86f;"></div>
<div style="left:598.96px;top:370.5px;width:1px;height:39px;background:#dfd86f;"></div>
<div style="left:498.54px;top:370px;width:114.77px;height:1px;background:#99944c;"></div>
<svg style="left:269.01px;top:380px;" width="90" height="15" viewBox="0 0 90 15"><g fill="#2a2a1a"><rect x="1" y="3.5" width="5" height="1.6"/><rect x="12" y="9.5" width="7" height="1.6"/><rect x="21" y="7" width="6" height="1.6"/><rect x="28" y="9.5" width="7" height="1.6"/><rect x="43" y="2" width="2" height="1.6"/><rect x="49" y="7" width="6" height="1.6"/><rect x="65" y="9.5" width="7" height="1.6"/><rect x="75" y="7" width="7" height="1.6"/></g></svg>
<svg style="left:498.54px;top:378px;" width="115" height="20" viewBox="0 0 115 20"><g fill="#2a2a1a"><rect x="1" y="2.8" width="56" height="1.3"/><rect x="1" y="7.6" width="56" height="1.5"/><rect x="1" y="10.6" width="56" height="1.3"/><rect x="57" y="5" width="28" height="1.3"/><rect x="85" y="1.5" width="29" height="1.3"/></g></svg>
<div style="left:728.07px;top:413.8px;width:57.38px;height:4.1px;background:#f0a070;"></div>
<div style="left:842.84px;top:413.8px;width:344.3px;height:4.1px;background:#f0a070;"></div>
<div style="left:498.54px;top:419.5px;width:459.06px;height:4px;background:#f0a070;"></div>
<div style="left:1187.13px;top:419.5px;width:121.87px;height:4px;background:#f0a070;"></div>
<div style="left:269.01px;top:424.6px;width:688.59px;height:4.5px;background:#f0a070;"></div>
<div style="left:498.54px;top:423.6px;width:459.06px;height:1px;background:#b8785a;"></div>
<div style="left:742.42px;top:413.8px;width:1px;height:4.1px;background:#c9815d;"></div>
<div style="left:756.76px;top:413.8px;width:1px;height:4.1px;background:#c9815d;"></div>
<div style="left:771.11px;top:413.8px;width:1px;height:4.1px;background:#c9815d;"></div>
<div style="left:857.18px;top:413.8px;width:1px;height:4.1px;background:#c9815d;"></div>
<div style="left:871.53px;top:413.8px;width:1px;height:4.1px;background:#c9815d;"></div>
<div style="left:885.87px;top:413.8px;width:1px;height:4.1px;background:#c9815d;"></div>
<div style="left:900.22px;top:413.8px;width:1px;height:4.1px;background:#c9815d;"></div>
<div style="left:914.56px;top:413.8px;width:1px;height:4.1px;background:#c9815d;"></div>
<div style="left:928.91px;top:413.8px;width:1px;height:4.1px;background:#c9815d;"></div>
<div style="left:943.26px;top:413.8px;width:1px;height:4.1px;background:#c9815d;"></div>
<div style="left:957.6px;top:413.8px;width:1px;height:4.1px;background:#c9815d;"></div>
<div style="left:971.95px;top:413.8px;width:1px;height:4.1px;background:#c9815d;"></div>
<div style="left:986.29px;top:413.8px;width:1px;height:4.1px;background:#c9815d;"></div>
<div style="left:1000.64px;top:413.8px;width:1px;height:4.1px;background:#c9815d;"></div>
<div style="left:1014.98px;top:413.8px;width:1px;height:4.1px;background:#c9815d;"></div>
<div style="left:1029.33px;top:413.8px;width:1px;height:4.1px;background:#c9815d;"></div>
<div style="left:1043.68px;top:413.8px;width:1px;height:4.1px;background:#c9815d;"></div>
<div style="left:1058.02px;top:413.8px;width:1px;height:4.1px;background:#c9815d;"></div>
<div style="left:1072.37px;top:413.8px;width:1px;height:4.1px;background:#c9815d;"></div>
<div style="left:1086.71px;top:413.8px;width:1px;height:4.1px;background:#c9815d;"></div>
<div style="left:1101.06px;top:413.8px;width:1px;height:4.1px;background:#c9815d;"></div>
<div style="left:1115.4px;top:413.8px;width:1px;height:4.1px;background:#c9815d;"></div>
<div style="left:1129.75px;top:413.8px;width:1px;height:4.1px;background:#c9815d;"></div>
<div style="left:1144.1px;top:413.8px;width:1px;height:4.1px;background:#c9815d;"></div>
<div style="left:1158.44px;top:413.8px;width:1px;height:4.1px;background:#c9815d;"></div>
<div style="left:1172.79px;top:413.8px;width:1px;height:4.1px;background:#c9815d;"></div>
<div style="left:512.89px;top:419.5px;width:1px;height:4px;background:#c9815d;"></div>
<div style="left:527.23px;top:419.5px;width:1px;height:4px;background:#c9815d;"></div>
<div style="left:541.58px;top:419.5px;width:1px;height:4px;background:#c9815d;"></div>
<div style="left:555.92px;top:419.5px;width:1px;height:4px;background:#c9815d;"></div>
<div style="left:570.27px;top:419.5px;width:1px;height:4px;background:#c9815d;"></div>
<div style="left:584.61px;top:419.5px;width:1px;height:4px;background:#c9815d;"></div>
<div style="left:598.96px;top:419.5px;width:1px;height:4px;background:#c9815d;"></div>
<div style="left:613.31px;top:419.5px;width:1px;height:4px;background:#c9815d;"></div>
<div style="left:627.65px;top:419.5px;width:1px;height:4px;background:#c9815d;"></div>
<div style="left:642px;top:419.5px;width:1px;height:4px;background:#c9815d;"></div>
<div style="left:656.34px;top:419.5px;width:1px;height:4px;background:#c9815d;"></div>
<div style="left:670.69px;top:419.5px;width:1px;height:4px;background:#c9815d;"></div>
<div style="left:685.03px;top:419.5px;width:1px;height:4px;background:#c9815d;"></div>
<div style="left:699.38px;top:419.5px;width:1px;height:4px;background:#c9815d;"></div>
<div style="left:713.73px;top:419.5px;width:1px;height:4px;background:#c9815d;"></div>
<div style="left:728.07px;top:419.5px;width:1px;height:4px;background:#c9815d;"></div>
<div style="left:742.42px;top:419.5px;width:1px;height:4px;background:#c9815d;"></div>
<div style="left:756.76px;top:419.5px;width:1px;height:4px;background:#c9815d;"></div>
<div style="left:771.11px;top:419.5px;width:1px;height:4px;background:#c9815d;"></div>
<div style="left:785.45px;top:419.5px;width:1px;height:4px;background:#c9815d;"></div>
<div style="left:799.8px;top:419.5px;width:1px;height:4px;background:#c9815d;"></div>
<div style="left:814.15px;top:419.5px;width:1px;height:4px;background:#c9815d;"></div>
<div style="left:828.49px;top:419.5px;width:1px;height:4px;background:#c9815d;"></div>
<div style="left:842.84px;top:419.5px;width:1px;height:4px;background:#c9815d;"></div>
<div style="left:857.18px;top:419.5px;width:1px;height:4px;background:#c9815d;"></div>
<div style="left:871.53px;top:419.5px;width:1px;height:4px;background:#c9815d;"></div>
<div style="left:885.87px;top:419.5px;width:1px;height:4px;background:#c9815d;"></div>
<div style="left:900.22px;top:419.5px;width:1px;height:4px;background:#c9815d;"></div>
<div style="left:914.56px;top:419.5px;width:1px;height:4px;background:#c9815d;"></div>
<div style="left:928.91px;top:419.5px;width:1px;height:4px;background:#c9815d;"></div>
<div style="left:943.26px;top:419.5px;width:1px;height:4px;background:#c9815d;"></div>
<div style="left:1201.48px;top:419.5px;width:1px;height:4px;background:#c9815d;"></div>
<div style="left:1215.82px;top:419.5px;width:1px;height:4px;background:#c9815d;"></div>
<div style="left:1230.17px;top:419.5px;width:1px;height:4px;background:#c9815d;"></div>
<div style="left:1244.51px;top:419.5px;width:1px;height:4px;background:#c9815d;"></div>
<div style="left:1258.86px;top:419.5px;width:1px;height:4px;background:#c9815d;"></div>
<div style="left:1273.21px;top:419.5px;width:1px;height:4px;background:#c9815d;"></div>
<div style="left:1287.55px;top:419.5px;width:1px;height:4px;background:#c9815d;"></div>
<div style="left:1301.9px;top:419.5px;width:1px;height:4px;background:#c9815d;"></div>
<div style="left:283.36px;top:424.6px;width:1px;height:4.5px;background:#c9815d;"></div>
<div style="left:297.7px;top:424.6px;width:1px;height:4.5px;background:#c9815d;"></div>
<div style="left:312.05px;top:424.6px;width:1px;height:4.5px;background:#c9815d;"></div>
<div style="left:326.39px;top:424.6px;width:1px;height:4.5px;background:#c9815d;"></div>
<div style="left:340.74px;top:424.6px;width:1px;height:4.5px;background:#c9815d;"></div>
<div style="left:355.08px;top:424.6px;width:1px;height:4.5px;background:#c9815d;"></div>
<div style="left:369.43px;top:424.6px;width:1px;height:4.5px;background:#c9815d;"></div>
<div style="left:383.78px;top:424.6px;width:1px;height:4.5px;background:#c9815d;"></div>
<div style="left:398.12px;top:424.6px;width:1px;height:4.5px;background:#c9815d;"></div>
<div style="left:412.47px;top:424.6px;width:1px;height:4.5px;background:#c9815d;"></div>
<div style="left:426.81px;top:424.6px;width:1px;height:4.5px;background:#c9815d;"></div>
<div style="left:441.16px;top:424.6px;width:1px;height:4.5px;background:#c9815d;"></div>
<div style="left:455.5px;top:424.6px;width:1px;height:4.5px;background:#c9815d;"></div>
<div style="left:469.85px;top:424.6px;width:1px;height:4.5px;background:#c9815d;"></div>
<div style="left:484.2px;top:424.6px;width:1px;height:4.5px;background:#c9815d;"></div>
<div style="left:498.54px;top:424.6px;width:1px;height:4.5px;background:#c9815d;"></div>
<div style="left:512.89px;top:424.6px;width:1px;height:4.5px;background:#c9815d;"></div>
<div style="left:527.23px;top:424.6px;width:1px;height:4.5px;background:#c9815d;"></div>
<div style="left:541.58px;top:424.6px;width:1px;height:4.5px;background:#c9815d;"></div>
<div style="left:555.92px;top:424.6px;width:1px;height:4.5px;background:#c9815d;"></div>
<div style="left:570.27px;top:424.6px;width:1px;height:4.5px;background:#c9815d;"></div>
<div style="left:584.61px;top:424.6px;width:1px;height:4.5px;background:#c9815d;"></div>
<div style="left:598.96px;top:424.6px;width:1px;height:4.5px;background:#c9815d;"></div>
<div style="left:613.31px;top:424.6px;width:1px;height:4.5px;background:#c9815d;"></div>
<div style="left:627.65px;top:424.6px;width:1px;height:4.5px;background:#c9815d;"></div>
<div style="left:642px;top:424.6px;width:1px;height:4.5px;background:#c9815d;"></div>
<div style="left:656.34px;top:424.6px;width:1px;height:4.5px;background:#c9815d;"></div>
<div style="left:670.69px;top:424.6px;width:1px;height:4.5px;background:#c9815d;"></div>
<div style="left:685.03px;top:424.6px;width:1px;height:4.5px;background:#c9815d;"></div>
<div style="left:699.38px;top:424.6px;width:1px;height:4.5px;background:#c9815d;"></div>
<div style="left:713.73px;top:424.6px;width:1px;height:4.5px;background:#c9815d;"></div>
<div style="left:728.07px;top:424.6px;width:1px;height:4.5px;background:#c9815d;"></div>
<div style="left:742.42px;top:424.6px;width:1px;height:4.5px;background:#c9815d;"></div>
<div style="left:756.76px;top:424.6px;width:1px;height:4.5px;background:#c9815d;"></div>
<div style="left:771.11px;top:424.6px;width:1px;height:4.5px;background:#c9815d;"></div>
<div style="left:785.45px;top:424.6px;width:1px;height:4.5px;background:#c9815d;"></div>
<div style="left:799.8px;top:424.6px;width:1px;height:4.5px;background:#c9815d;"></div>
<div style="left:814.15px;top:424.6px;width:1px;height:4.5px;background:#c9815d;"></div>
<div style="left:828.49px;top:424.6px;width:1px;height:4.5px;background:#c9815d;"></div>
<div style="left:842.84px;top:424.6px;width:1px;height:4.5px;background:#c9815d;"></div>
<div style="left:857.18px;top:424.6px;width:1px;height:4.5px;background:#c9815d;"></div>
<div style="left:871.53px;top:424.6px;width:1px;height:4.5px;background:#c9815d;"></div>
<div style="left:885.87px;top:424.6px;width:1px;height:4.5px;background:#c9815d;"></div>
<div style="left:900.22px;top:424.6px;width:1px;height:4.5px;background:#c9815d;"></div>
<div style="left:914.56px;top:424.6px;width:1px;height:4.5px;background:#c9815d;"></div>
<div style="left:928.91px;top:424.6px;width:1px;height:4.5px;background:#c9815d;"></div>
<div style="left:943.26px;top:424.6px;width:1px;height:4.5px;background:#c9815d;"></div>
<div style="left:10.79px;top:432.6px;width:258.22px;height:56.4px;background:#ff93a4;"></div>
<div style="left:25.13px;top:450.5px;width:1px;height:38.5px;background:#e58493;"></div>
<div style="left:39.48px;top:450.5px;width:1px;height:38.5px;background:#e58493;"></div>
<div style="left:53.83px;top:450.5px;width:1px;height:38.5px;background:#e58493;"></div>
<div style="left:68.17px;top:450.5px;width:1px;height:38.5px;background:#e58493;"></div>
<div style="left:82.52px;top:450.5px;width:1px;height:38.5px;background:#e58493;"></div>
<div style="left:96.86px;top:450.5px;width:1px;height:38.5px;background:#e58493;"></div>
<div style="left:111.21px;top:450.5px;width:1px;height:38.5px;background:#e58493;"></div>
<div style="left:125.55px;top:450.5px;width:1px;height:38.5px;background:#e58493;"></div>
<div style="left:139.9px;top:450.5px;width:1px;height:38.5px;background:#e58493;"></div>
<div style="left:154.25px;top:450.5px;width:1px;height:38.5px;background:#e58493;"></div>
<div style="left:168.59px;top:450.5px;width:1px;height:38.5px;background:#e58493;"></div>
<div style="left:182.94px;top:450.5px;width:1px;height:38.5px;background:#e58493;"></div>
<div style="left:197.28px;top:450.5px;width:1px;height:38.5px;background:#e58493;"></div>
<div style="left:211.63px;top:450.5px;width:1px;height:38.5px;background:#e58493;"></div>
<div style="left:225.97px;top:450.5px;width:1px;height:38.5px;background:#e58493;"></div>
<div style="left:240.32px;top:450.5px;width:1px;height:38.5px;background:#e58493;"></div>
<div style="left:254.66px;top:450.5px;width:1px;height:38.5px;background:#e58493;"></div>
<div style="left:10.79px;top:450px;width:258.22px;height:1px;background:#bf6e7b;"></div>
<div style="left:10.79px;top:459.2px;width:258.22px;height:1.4px;background:#2e2224;"></div>
<div style="left:10.79px;top:478.5px;width:258.22px;height:1.4px;background:#2e2224;"></div>
<div style="left:498.54px;top:432.6px;width:229.53px;height:56.4px;background:#ff93a4;"></div>
<div style="left:512.89px;top:450.5px;width:1px;height:38.5px;background:#e58493;"></div>
<div style="left:527.23px;top:450.5px;width:1px;height:38.5px;background:#e58493;"></div>
<div style="left:541.58px;top:450.5px;width:1px;height:38.5px;background:#e58493;"></div>
<div style="left:555.92px;top:450.5px;width:1px;height:38.5px;background:#e58493;"></div>
<div style="left:570.27px;top:450.5px;width:1px;height:38.5px;background:#e58493;"></div>
<div style="left:584.61px;top:450.5px;width:1px;height:38.5px;background:#e58493;"></div>
<div style="left:598.96px;top:450.5px;width:1px;height:38.5px;background:#e58493;"></div>
<div style="left:613.31px;top:450.5px;width:1px;height:38.5px;background:#e58493;"></div>
<div style="left:627.65px;top:450.5px;width:1px;height:38.5px;background:#e58493;"></div>
<div style="left:642px;top:450.5px;width:1px;height:38.5px;background:#e58493;"></div>
<div style="left:656.34px;top:450.5px;width:1px;height:38.5px;background:#e58493;"></div>
<div style="left:670.69px;top:450.5px;width:1px;height:38.5px;background:#e58493;"></div>
<div style="left:685.03px;top:450.5px;width:1px;height:38.5px;background:#e58493;"></div>
<div style="left:699.38px;top:450.5px;width:1px;height:38.5px;background:#e58493;"></div>
<div style="left:713.73px;top:450.5px;width:1px;height:38.5px;background:#e58493;"></div>
<div style="left:498.54px;top:450px;width:229.53px;height:1px;background:#bf6e7b;"></div>
<div style="left:498.54px;top:459.2px;width:229.53px;height:1.4px;background:#2e2224;"></div>
<div style="left:498.54px;top:478.5px;width:229.53px;height:1.4px;background:#2e2224;"></div>
<div style="left:957.6px;top:432.6px;width:229.53px;height:56.4px;background:#ff93a4;"></div>
<div style="left:971.95px;top:450.5px;width:1px;height:38.5px;background:#e58493;"></div>
<div style="left:986.29px;top:450.5px;width:1px;height:38.5px;background:#e58493;"></div>
<div style="left:1000.64px;top:450.5px;width:1px;height:38.5px;background:#e58493;"></div>
<div style="left:1014.98px;top:450.5px;width:1px;height:38.5px;background:#e58493;"></div>
<div style="left:1029.33px;top:450.5px;width:1px;height:38.5px;background:#e58493;"></div>
<div style="left:1043.68px;top:450.5px;width:1px;height:38.5px;background:#e58493;"></div>
<div style="left:1058.02px;top:450.5px;width:1px;height:38.5px;background:#e58493;"></div>
<div style="left:1072.37px;top:450.5px;width:1px;height:38.5px;background:#e58493;"></div>
<div style="left:1086.71px;top:450.5px;width:1px;height:38.5px;background:#e58493;"></div>
<div style="left:1101.06px;top:450.5px;width:1px;height:38.5px;background:#e58493;"></div>
<div style="left:1115.4px;top:450.5px;width:1px;height:38.5px;background:#e58493;"></div>
<div style="left:1129.75px;top:450.5px;width:1px;height:38.5px;background:#e58493;"></div>
<div style="left:1144.1px;top:450.5px;width:1px;height:38.5px;background:#e58493;"></div>
<div style="left:1158.44px;top:450.5px;width:1px;height:38.5px;background:#e58493;"></div>
<div style="left:1172.79px;top:450.5px;width:1px;height:38.5px;background:#e58493;"></div>
<div style="left:957.6px;top:450px;width:229.53px;height:1px;background:#bf6e7b;"></div>
<div style="left:957.6px;top:459.2px;width:229.53px;height:1.4px;background:#2e2224;"></div>
<div style="left:957.6px;top:478.5px;width:229.53px;height:1.4px;background:#2e2224;"></div>
<div style="left:38.98px;top:432.6px;width:1.3px;height:56.4px;background:#8c505a;"></div>
<svg style="left:10px;top:441px;" width="16" height="7" viewBox="0 0 16 7"><g fill="#2a1e20"><circle cx="3.8" cy="3.4" r="1.05"/><circle cx="7.7" cy="3.4" r="1.05"/><circle cx="11.6" cy="3.4" r="1.05"/></g></svg>
<div style="left:39.48px;top:491.3px;width:229.53px;height:17.6px;background:#ff93a4;"></div>
<div style="left:477.02px;top:491.3px;width:28.69px;height:17.6px;background:#ff93a4;"></div>
<div style="left:613.31px;top:491.3px;width:114.77px;height:17.6px;background:#ff93a4;"></div>
<div style="left:936.08px;top:491.3px;width:21.52px;height:17.6px;background:#ff93a4;"></div>
<div style="left:1072.37px;top:491.3px;width:114.77px;height:17.6px;background:#ff93a4;"></div>
<div style="left:211.63px;top:512px;width:57.38px;height:17.4px;background:#d86ce4;"></div>
<div style="left:613.31px;top:512px;width:114.77px;height:17.4px;background:#d86ce4;"></div>
<div style="left:1072.37px;top:512px;width:114.77px;height:17.4px;background:#d86ce4;"></div>
<div style="left:39.48px;top:532.6px;width:229.53px;height:17.6px;background:#d86ce4;"></div>
<div style="left:498.54px;top:532.6px;width:229.53px;height:17.6px;background:#d86ce4;"></div>
<svg style="left:706.55px;top:451px;" width="21.52" height="38" viewBox="0 0 21.52 38"><path d="M0 0 C 5.38 0 11.84 38 21.52 38 L 21.52 0 Z" fill="rgba(0,0,0,0.15)"/></svg>
<svg style="left:1164.18px;top:451px;" width="22.95" height="38" viewBox="0 0 22.95 38"><path d="M0 0 C 5.74 0 12.62 38 22.95 38 L 22.95 0 Z" fill="rgba(0,0,0,0.15)"/></svg>
<svg style="left:39.48px;top:451px;" width="4" height="38" viewBox="0 0 4 38"><path d="M0 0 L4 0 L0 38 Z" fill="rgba(0,0,0,0.15)"/></svg>
<svg style="left:265.01px;top:451px;" width="4" height="38" viewBox="0 0 4 38"><path d="M0 0 L4 0 L4 38 Z" fill="rgba(0,0,0,0.15)"/></svg>
<svg style="left:11.29px;top:451px;" width="3" height="38" viewBox="0 0 3 38"><path d="M0 0 L3 0 L0 38 Z" fill="rgba(0,0,0,0.15)"/></svg>
<svg style="left:36.48px;top:451px;" width="3" height="38" viewBox="0 0 3 38"><path d="M0 0 L3 0 L3 38 Z" fill="rgba(0,0,0,0.15)"/></svg>
<svg style="left:39.48px;top:491.3px;" width="4" height="17.6" viewBox="0 0 4 17.6"><path d="M0 0 L4 0 L0 17.6 Z" fill="rgba(0,0,0,0.15)"/></svg>
<svg style="left:265.01px;top:491.3px;" width="4" height="17.6" viewBox="0 0 4 17.6"><path d="M0 0 L4 0 L4 17.6 Z" fill="rgba(0,0,0,0.15)"/></svg>
<svg style="left:477.02px;top:491.3px;" width="4" height="17.6" viewBox="0 0 4 17.6"><path d="M0 0 L4 0 L0 17.6 Z" fill="rgba(0,0,0,0.15)"/></svg>
<svg style="left:501.71px;top:491.3px;" width="4" height="17.6" viewBox="0 0 4 17.6"><path d="M0 0 L4 0 L4 17.6 Z" fill="rgba(0,0,0,0.15)"/></svg>
<svg style="left:613.31px;top:491.3px;" width="40.17" height="17.6" viewBox="0 0 40.17 17.6"><path d="M0 17.6 C 18.08 17.6 30.13 0 40.17 0 L 0 0 Z" fill="rgba(0,0,0,0.15)"/></svg>
<svg style="left:710.86px;top:491.3px;" width="17.21" height="17.6" viewBox="0 0 17.21 17.6"><path d="M0 0 C 4.3 0 9.47 17.6 17.21 17.6 L 17.21 0 Z" fill="rgba(0,0,0,0.15)"/></svg>
<svg style="left:936.08px;top:491.3px;" width="4" height="17.6" viewBox="0 0 4 17.6"><path d="M0 0 L4 0 L0 17.6 Z" fill="rgba(0,0,0,0.15)"/></svg>
<svg style="left:954.6px;top:491.3px;" width="3" height="17.6" viewBox="0 0 3 17.6"><path d="M0 0 L3 0 L3 17.6 Z" fill="rgba(0,0,0,0.15)"/></svg>
<svg style="left:1072.37px;top:491.3px;" width="40.17" height="17.6" viewBox="0 0 40.17 17.6"><path d="M0 17.6 C 18.08 17.6 30.13 0 40.17 0 L 0 0 Z" fill="rgba(0,0,0,0.15)"/></svg>
<svg style="left:1169.92px;top:491.3px;" width="17.21" height="17.6" viewBox="0 0 17.21 17.6"><path d="M0 0 C 4.3 0 9.47 17.6 17.21 17.6 L 17.21 0 Z" fill="rgba(0,0,0,0.15)"/></svg>
<svg style="left:211.63px;top:512px;" width="3" height="17.4" viewBox="0 0 3 17.4"><path d="M0 0 L3 0 L0 17.4 Z" fill="rgba(0,0,0,0.15)"/></svg>
<svg style="left:266.01px;top:512px;" width="3" height="17.4" viewBox="0 0 3 17.4"><path d="M0 0 L3 0 L3 17.4 Z" fill="rgba(0,0,0,0.15)"/></svg>
<svg style="left:613.31px;top:512px;" width="3" height="17.4" viewBox="0 0 3 17.4"><path d="M0 0 L3 0 L0 17.4 Z" fill="rgba(0,0,0,0.15)"/></svg>
<svg style="left:725.07px;top:512px;" width="3" height="17.4" viewBox="0 0 3 17.4"><path d="M0 0 L3 0 L3 17.4 Z" fill="rgba(0,0,0,0.15)"/></svg>
<svg style="left:1072.37px;top:512px;" width="3" height="17.4" viewBox="0 0 3 17.4"><path d="M0 0 L3 0 L0 17.4 Z" fill="rgba(0,0,0,0.15)"/></svg>
<svg style="left:1184.13px;top:512px;" width="3" height="17.4" viewBox="0 0 3 17.4"><path d="M0 0 L3 0 L3 17.4 Z" fill="rgba(0,0,0,0.15)"/></svg>
<div class="t" style="left:1277px;top:579.5px;font-size:18px;color:#666666;font-weight:bold;font-family:'Liberation Sans', sans-serif;line-height:1;white-space:nowrap;letter-spacing:0.6px;">1/2</div>
<div style="left:677.3px;top:95px;width:2.4px;height:502px;background:rgba(0,0,0,0.45);"></div>
<div style="left:677.9px;top:95px;width:1.2px;height:502px;background:#f6f6f6;"></div>
<div style="left:10px;top:598.5px;width:1299px;height:22px;background:#363636;"></div>
<div style="left:19.16px;top:600px;width:1px;height:9px;background:#8a8a8a;"></div>
<div style="left:19.16px;top:608.5px;width:2.5px;height:1px;background:#8a8a8a;"></div>
<div class="t" style="left:22.16px;top:602.5px;font-size:11px;color:#a8a8a8;font-weight:normal;font-family:'Liberation Sans', sans-serif;line-height:1;white-space:nowrap;">0:10</div>
<div style="left:40.08px;top:600px;width:1px;height:2px;background:#6a6a6a;"></div>
<div style="left:61px;top:600px;width:1px;height:2px;background:#6a6a6a;"></div>
<div style="left:81.92px;top:600px;width:1px;height:2px;background:#6a6a6a;"></div>
<div style="left:102.84px;top:600px;width:1px;height:2px;background:#6a6a6a;"></div>
<div style="left:123.76px;top:600px;width:1px;height:9px;background:#8a8a8a;"></div>
<div style="left:123.76px;top:608.5px;width:2.5px;height:1px;background:#8a8a8a;"></div>
<div class="t" style="left:126.76px;top:602.5px;font-size:11px;color:#a8a8a8;font-weight:normal;font-family:'Liberation Sans', sans-serif;line-height:1;white-space:nowrap;">0:15</div>
<div style="left:144.68px;top:600px;width:1px;height:2px;background:#6a6a6a;"></div>
<div style="left:165.6px;top:600px;width:1px;height:2px;background:#6a6a6a;"></div>
<div style="left:186.52px;top:600px;width:1px;height:2px;background:#6a6a6a;"></div>
<div style="left:207.44px;top:600px;width:1px;height:2px;background:#6a6a6a;"></div>
<div style="left:228.36px;top:600px;width:1px;height:9px;background:#8a8a8a;"></div>
<div style="left:228.36px;top:608.5px;width:2.5px;height:1px;background:#8a8a8a;"></div>
<div class="t" style="left:231.36px;top:602.5px;font-size:11px;color:#a8a8a8;font-weight:normal;font-family:'Liberation Sans', sans-serif;line-height:1;white-space:nowrap;">0:20</div>
<div style="left:249.29px;top:600px;width:1px;height:2px;background:#6a6a6a;"></div>
<div style="left:270.21px;top:600px;width:1px;height:2px;background:#6a6a6a;"></div>
<div style="left:291.13px;top:600px;width:1px;height:2px;background:#6a6a6a;"></div>
<div style="left:312.05px;top:600px;width:1px;height:2px;background:#6a6a6a;"></div>
<div style="left:332.97px;top:600px;width:1px;height:9px;background:#8a8a8a;"></div>
<div style="left:332.97px;top:608.5px;width:2.5px;height:1px;background:#8a8a8a;"></div>
<div class="t" style="left:335.97px;top:602.5px;font-size:11px;color:#a8a8a8;font-weight:normal;font-family:'Liberation Sans', sans-serif;line-height:1;white-space:nowrap;">0:25</div>
<div style="left:353.89px;top:600px;width:1px;height:2px;background:#6a6a6a;"></div>
<div style="left:374.81px;top:600px;width:1px;height:2px;background:#6a6a6a;"></div>
<div style="left:395.73px;top:600px;width:1px;height:2px;background:#6a6a6a;"></div>
<div style="left:416.65px;top:600px;width:1px;height:2px;background:#6a6a6a;"></div>
<div style="left:437.57px;top:600px;width:1px;height:9px;background:#8a8a8a;"></div>
<div style="left:437.57px;top:608.5px;width:2.5px;height:1px;background:#8a8a8a;"></div>
<div class="t" style="left:440.57px;top:602.5px;font-size:11px;color:#a8a8a8;font-weight:normal;font-family:'Liberation Sans', sans-serif;line-height:1;white-space:nowrap;">0:30</div>
<div style="left:458.49px;top:600px;width:1px;height:2px;background:#6a6a6a;"></div>
<div style="left:479.41px;top:600px;width:1px;height:2px;background:#6a6a6a;"></div>
<div style="left:500.33px;top:600px;width:1px;height:2px;background:#6a6a6a;"></div>
<div style="left:521.25px;top:600px;width:1px;height:2px;background:#6a6a6a;"></div>
<div style="left:542.18px;top:600px;width:1px;height:9px;background:#8a8a8a;"></div>
<div style="left:542.18px;top:608.5px;width:2.5px;height:1px;background:#8a8a8a;"></div>
<div class="t" style="left:545.18px;top:602.5px;font-size:11px;color:#a8a8a8;font-weight:normal;font-family:'Liberation Sans', sans-serif;line-height:1;white-space:nowrap;">0:35</div>
<div style="left:563.1px;top:600px;width:1px;height:2px;background:#6a6a6a;"></div>
<div style="left:584.02px;top:600px;width:1px;height:2px;background:#6a6a6a;"></div>
<div style="left:604.94px;top:600px;width:1px;height:2px;background:#6a6a6a;"></div>
<div style="left:625.86px;top:600px;width:1px;height:2px;background:#6a6a6a;"></div>
<div style="left:646.78px;top:600px;width:1px;height:9px;background:#8a8a8a;"></div>
<div style="left:646.78px;top:608.5px;width:2.5px;height:1px;background:#8a8a8a;"></div>
<div class="t" style="left:649.78px;top:602.5px;font-size:11px;color:#a8a8a8;font-weight:normal;font-family:'Liberation Sans', sans-serif;line-height:1;white-space:nowrap;">0:40</div>
<div style="left:667.7px;top:600px;width:1px;height:2px;background:#6a6a6a;"></div>
<div style="left:688.62px;top:600px;width:1px;height:2px;background:#6a6a6a;"></div>
<div style="left:709.54px;top:600px;width:1px;height:2px;background:#6a6a6a;"></div>
<div style="left:730.46px;top:600px;width:1px;height:2px;background:#6a6a6a;"></div>
<div style="left:751.38px;top:600px;width:1px;height:9px;background:#8a8a8a;"></div>
<div style="left:751.38px;top:608.5px;width:2.5px;height:1px;background:#8a8a8a;"></div>
<div class="t" style="left:754.38px;top:602.5px;font-size:11px;color:#a8a8a8;font-weight:normal;font-family:'Liberation Sans', sans-serif;line-height:1;white-space:nowrap;">0:45</div>
<div style="left:772.3px;top:600px;width:1px;height:2px;background:#6a6a6a;"></div>
<div style="left:793.22px;top:600px;width:1px;height:2px;background:#6a6a6a;"></div>
<div style="left:814.15px;top:600px;width:1px;height:2px;background:#6a6a6a;"></div>
<div style="left:835.07px;top:600px;width:1px;height:2px;background:#6a6a6a;"></div>
<div style="left:855.99px;top:600px;width:1px;height:9px;background:#8a8a8a;"></div>
<div style="left:855.99px;top:608.5px;width:2.5px;height:1px;background:#8a8a8a;"></div>
<div class="t" style="left:858.99px;top:602.5px;font-size:11px;color:#a8a8a8;font-weight:normal;font-family:'Liberation Sans', sans-serif;line-height:1;white-space:nowrap;">0:50</div>
<div style="left:876.91px;top:600px;width:1px;height:2px;background:#6a6a6a;"></div>
<div style="left:897.83px;top:600px;width:1px;height:2px;background:#6a6a6a;"></div>
<div style="left:918.75px;top:600px;width:1px;height:2px;background:#6a6a6a;"></div>
<div style="left:939.67px;top:600px;width:1px;height:2px;background:#6a6a6a;"></div>
<div style="left:960.59px;top:600px;width:1px;height:9px;background:#8a8a8a;"></div>
<div style="left:960.59px;top:608.5px;width:2.5px;height:1px;background:#8a8a8a;"></div>
<div class="t" style="left:963.59px;top:602.5px;font-size:11px;color:#a8a8a8;font-weight:normal;font-family:'Liberation Sans', sans-serif;line-height:1;white-space:nowrap;">0:55</div>
<div style="left:981.51px;top:600px;width:1px;height:2px;background:#6a6a6a;"></div>
<div style="left:1002.43px;top:600px;width:1px;height:2px;background:#6a6a6a;"></div>
<div style="left:1023.35px;top:600px;width:1px;height:2px;background:#6a6a6a;"></div>
<div style="left:1044.27px;top:600px;width:1px;height:2px;background:#6a6a6a;"></div>
<div style="left:1065.19px;top:600px;width:1px;height:9px;background:#8a8a8a;"></div>
<div style="left:1065.19px;top:608.5px;width:2.5px;height:1px;background:#8a8a8a;"></div>
<div class="t" style="left:1068.19px;top:602.5px;font-size:11px;color:#a8a8a8;font-weight:normal;font-family:'Liberation Sans', sans-serif;line-height:1;white-space:nowrap;">1:00</div>
<div style="left:1086.11px;top:600px;width:1px;height:2px;background:#6a6a6a;"></div>
<div style="left:1107.04px;top:600px;width:1px;height:2px;background:#6a6a6a;"></div>
<div style="left:1127.96px;top:600px;width:1px;height:2px;background:#6a6a6a;"></div>
<div style="left:1148.88px;top:600px;width:1px;height:2px;background:#6a6a6a;"></div>
<div style="left:1169.8px;top:600px;width:1px;height:9px;background:#8a8a8a;"></div>
<div style="left:1169.8px;top:608.5px;width:2.5px;height:1px;background:#8a8a8a;"></div>
<div class="t" style="left:1172.8px;top:602.5px;font-size:11px;color:#a8a8a8;font-weight:normal;font-family:'Liberation Sans', sans-serif;line-height:1;white-space:nowrap;">1:05</div>
<div style="left:1190.72px;top:600px;width:1px;height:2px;background:#6a6a6a;"></div>
<div style="left:1211.64px;top:600px;width:1px;height:2px;background:#6a6a6a;"></div>
<div style="left:1232.56px;top:600px;width:1px;height:2px;background:#6a6a6a;"></div>
<div style="left:1253.48px;top:600px;width:1px;height:2px;background:#6a6a6a;"></div>
<div style="left:1274.4px;top:600px;width:1px;height:9px;background:#8a8a8a;"></div>
<div style="left:1274.4px;top:608.5px;width:2.5px;height:1px;background:#8a8a8a;"></div>
<div class="t" style="left:1277.4px;top:602.5px;font-size:11px;color:#a8a8a8;font-weight:normal;font-family:'Liberation Sans', sans-serif;line-height:1;white-space:nowrap;">1:10</div>
<svg style="left:495px;top:600.5px;" width="9" height="5.5" viewBox="0 0 9 5.5"><path d="M0 5.5 H8.5 L4.25 0.5 Z" fill="#19c0d6"/></svg>
<div style="left:1424px;top:95px;width:130px;height:482px;background:#363636;"></div>
<div style="left:1311px;top:552.5px;width:112px;height:24px;background:#363636;"></div>
<div style="left:1423px;top:95px;width:1.2px;height:457px;background:#232323;"></div>
<div style="left:1313px;top:55px;width:31px;height:14.5px;background:#1f1f1f;border-radius:7.5px;font-family:'Liberation Sans', sans-serif;font-size:12px;color:#d8d8d8;font-weight:normal;line-height:14.5px;text-align:center;white-space:nowrap;overflow:hidden;padding-top:1.2px;">Set</div>
<div style="left:1356px;top:55.3px;width:25px;height:14.1px;background:#1f1f1f;border-radius:1px;font-family:'Liberation Sans', sans-serif;font-size:11.5px;color:#c8c8c8;font-weight:normal;line-height:14.1px;text-align:center;white-space:nowrap;overflow:hidden;"></div>
<svg style="left:1363px;top:57px;" width="11" height="11" viewBox="0 0 11 11"><circle cx="2.5" cy="8.5" r="1.8" fill="#d0d0d0"/><circle cx="8.5" cy="2.5" r="1.8" fill="#d0d0d0"/><path d="M2.5 8.5 L8.5 2.5" stroke="#d0d0d0" stroke-width="1.4"/></svg>
<div style="left:1386px;top:55.3px;width:24.6px;height:14.1px;background:#1f1f1f;border-radius:1px;font-family:'Liberation Sans', sans-serif;font-size:11.5px;color:#c8c8c8;font-weight:normal;line-height:14.1px;text-align:center;white-space:nowrap;overflow:hidden;"></div>
<svg style="left:1393.5px;top:57.5px;" width="10" height="10" viewBox="0 0 10 10"><path d="M2.4 4.5 V3.2 Q2.4 0.8 5 0.8 Q7.6 0.8 7.6 3.2 V4.5" fill="none" stroke="#d0d0d0" stroke-width="1.3"/><rect x="1" y="4.5" width="8" height="5" fill="#d0d0d0"/></svg>
<svg style="left:1313px;top:75px;" width="32" height="14" viewBox="0 0 32 14"><circle cx="7" cy="7" r="6.8" fill="#1f1f1f"/><circle cx="24.5" cy="7" r="6.8" fill="#1f1f1f"/><path d="M3.3 7 L6.8 3.6 V5.8 H10.5 V8.2 H6.8 V10.4 Z" fill="#d0d0d0"/><path d="M28.2 7 L24.7 3.6 V5.8 H21 V8.2 H24.7 V10.4 Z" fill="#d0d0d0"/></svg>
<div style="left:1301.2px;top:62px;width:1px;height:6px;background:#777;"></div>
<div style="left:1424px;top:233px;width:130px;height:57.5px;background:#3e3e3e;"></div>
<div style="left:1311px;top:95px;width:112px;height:57px;background:#94a7ff;"></div>
<svg style="left:1313px;top:96.5px;" width="16" height="16" viewBox="0 0 16 16"><circle cx="8" cy="8" r="6.6" fill="none" stroke="rgba(0,0,0,0.78)" stroke-width="1.1"/><path d="M4.2 6 H11.8 L8 11 Z" fill="rgba(0,0,0,0.78)"/></svg>
<div class="t" style="left:1335.5px;top:99.5px;font-size:11px;color:rgba(0,0,0,0.78);font-weight:bold;font-family:'Liberation Sans', sans-serif;line-height:1;white-space:nowrap;">Drums</div>
<div style="left:1427.5px;top:98.6px;width:49px;height:12.8px;background:#f9a658;border-radius:1px;font-family:'Liberation Sans', sans-serif;font-size:11.5px;color:#111;font-weight:bold;line-height:12.8px;text-align:center;white-space:nowrap;overflow:hidden;">1</div>
<div style="left:1481.7px;top:98.6px;width:22.3px;height:12.8px;background:#1f1f1f;border-radius:1px;font-family:'Liberation Sans', sans-serif;font-size:11px;color:#d2d2d2;font-weight:normal;line-height:12.8px;text-align:center;white-space:nowrap;overflow:hidden;">S</div>
<div style="left:1509px;top:98.6px;width:22px;height:12.8px;background:#1f1f1f;border-radius:1px;font-family:'Liberation Sans', sans-serif;font-size:11.5px;color:#c8c8c8;font-weight:normal;line-height:12.8px;text-align:center;white-space:nowrap;overflow:hidden;"></div>
<svg style="left:1515px;top:100px;" width="10" height="10" viewBox="0 0 10 10"><circle cx="5" cy="5" r="4.4" fill="#d2d2d2"/><path d="M6 1.6 V5.6 Q6 7.2 4.4 7.2 H3.2" stroke="#1f1f1f" stroke-width="1.3" fill="none"/></svg>
<div style="left:1427.5px;top:116.5px;width:49px;height:13px;background:#1f1f1f;border-radius:1px;font-family:'Liberation Sans', sans-serif;font-size:11.5px;color:#c8c8c8;font-weight:normal;line-height:13px;text-align:center;white-space:nowrap;overflow:hidden;"></div>
<div style="left:1428px;top:117px;width:40px;height:12px;background:#0e7686;"></div>
<div class="t" style="left:1427.5px;top:118px;font-size:11.5px;color:#cfd8da;font-weight:normal;font-family:'Liberation Sans', sans-serif;line-height:1;white-space:nowrap;width:49px;text-align:center;">-1.0</div>
<div style="left:1481.7px;top:116.5px;width:49.3px;height:13px;background:#1f1f1f;border-radius:1px;font-family:'Liberation Sans', sans-serif;font-size:11.5px;color:#d2d2d2;font-weight:normal;line-height:13px;text-align:center;white-space:nowrap;overflow:hidden;">C</div>
<div style="left:1427.5px;top:135px;width:32px;height:13.5px;background:#1f1f1f;border-radius:1px;font-family:'Liberation Sans', sans-serif;font-size:11px;color:#cfcfcf;font-weight:normal;line-height:13.5px;text-align:center;white-space:nowrap;overflow:hidden;">-52.8</div>
<div style="left:1463px;top:135px;width:33px;height:13.5px;background:#1f1f1f;border-radius:1px;font-family:'Liberation Sans', sans-serif;font-size:11px;color:#cfcfcf;font-weight:normal;line-height:13.5px;text-align:center;white-space:nowrap;overflow:hidden;">&#8722;<span style="font-size:15px;line-height:0;position:relative;top:0.5px">&#8734;</span></div>
<div style="left:1428px;top:139px;width:3px;height:9px;background:#0e7686;"></div>
<svg style="left:1426px;top:133px;" width="6" height="6" viewBox="0 0 6 6"><circle cx="3" cy="3" r="2.4" fill="#f04848"/></svg>
<svg style="left:1461.5px;top:133px;" width="6" height="6" viewBox="0 0 6 6"><circle cx="3" cy="3" r="2.4" fill="#f04848"/></svg>
<div style="left:1535.8px;top:97.3px;width:3.4px;height:52.2px;background:#1c1c1c;"></div>
<div style="left:1540.2px;top:97.3px;width:3.5px;height:52.2px;background:#1c1c1c;"></div>
<div style="left:1535.8px;top:123.5px;width:3.4px;height:26.5px;background:#19e35a;"></div>
<div style="left:1540.2px;top:123.5px;width:3.5px;height:26.5px;background:#19e35a;"></div>
<div style="left:1535.8px;top:108.5px;width:3.4px;height:1.2px;background:#e0a020;"></div>
<div style="left:1540.2px;top:109.5px;width:3.5px;height:1.2px;background:#e0a020;"></div>
<div style="left:1535.5px;top:100.3px;width:8.5px;height:1px;background:#363636;"></div>
<div style="left:1311px;top:154px;width:112px;height:57px;background:#94a7ff;"></div>
<svg style="left:1313px;top:155.5px;" width="16" height="16" viewBox="0 0 16 16"><circle cx="8" cy="8" r="6.6" fill="none" stroke="rgba(0,0,0,0.78)" stroke-width="1.1"/><path d="M4.2 6 H11.8 L8 11 Z" fill="rgba(0,0,0,0.78)"/></svg>
<div class="t" style="left:1335.5px;top:158.5px;font-size:11px;color:rgba(0,0,0,0.78);font-weight:bold;font-family:'Liberation Sans', sans-serif;line-height:1;white-space:nowrap;">Breaks</div>
<div style="left:1427.5px;top:157.6px;width:49px;height:12.8px;background:#f9a658;border-radius:1px;font-family:'Liberation Sans', sans-serif;font-size:11.5px;color:#111;font-weight:bold;line-height:12.8px;text-align:center;white-space:nowrap;overflow:hidden;">2</div>
<div style="left:1481.7px;top:157.6px;width:22.3px;height:12.8px;background:#1f1f1f;border-radius:1px;font-family:'Liberation Sans', sans-serif;font-size:11px;color:#d2d2d2;font-weight:normal;line-height:12.8px;text-align:center;white-space:nowrap;overflow:hidden;">S</div>
<div style="left:1509px;top:157.6px;width:22px;height:12.8px;background:#1f1f1f;border-radius:1px;font-family:'Liberation Sans', sans-serif;font-size:11.5px;color:#c8c8c8;font-weight:normal;line-height:12.8px;text-align:center;white-space:nowrap;overflow:hidden;"></div>
<svg style="left:1515px;top:159px;" width="10" height="10" viewBox="0 0 10 10"><circle cx="5" cy="5" r="3.6" fill="#7a7a7a"/></svg>
<div style="left:1427.5px;top:175.5px;width:49px;height:13px;background:#1f1f1f;border-radius:1px;font-family:'Liberation Sans', sans-serif;font-size:11.5px;color:#c8c8c8;font-weight:normal;line-height:13px;text-align:center;white-space:nowrap;overflow:hidden;"></div>
<div style="left:1428px;top:176px;width:30px;height:12px;background:#0e7686;"></div>
<div class="t" style="left:1427.5px;top:177px;font-size:11.5px;color:#cfd8da;font-weight:normal;font-family:'Liberation Sans', sans-serif;line-height:1;white-space:nowrap;width:49px;text-align:center;">-9.4</div>
<div style="left:1481.7px;top:175.5px;width:49.3px;height:13px;background:#1f1f1f;border-radius:1px;font-family:'Liberation Sans', sans-serif;font-size:11.5px;color:#d2d2d2;font-weight:normal;line-height:13px;text-align:center;white-space:nowrap;overflow:hidden;">C</div>
<div style="left:1427.5px;top:194px;width:32px;height:13.5px;background:#1f1f1f;border-radius:1px;font-family:'Liberation Sans', sans-serif;font-size:11px;color:#cfcfcf;font-weight:normal;line-height:13.5px;text-align:center;white-space:nowrap;overflow:hidden;">&#8722;<span style="font-size:15px;line-height:0;position:relative;top:0.5px">&#8734;</span></div>
<div style="left:1463px;top:194px;width:33px;height:13.5px;background:#1f1f1f;border-radius:1px;font-family:'Liberation Sans', sans-serif;font-size:11px;color:#cfcfcf;font-weight:normal;line-height:13.5px;text-align:center;white-space:nowrap;overflow:hidden;">&#8722;<span style="font-size:15px;line-height:0;position:relative;top:0.5px">&#8734;</span></div>
<svg style="left:1426px;top:192px;" width="6" height="6" viewBox="0 0 6 6"><circle cx="3" cy="3" r="2.4" fill="#f04848"/></svg>
<div style="left:1535.8px;top:156.3px;width:3.4px;height:52.2px;background:#1c1c1c;"></div>
<div style="left:1540.2px;top:156.3px;width:3.5px;height:52.2px;background:#1c1c1c;"></div>
<div style="left:1535.8px;top:170.3px;width:3.4px;height:6.7px;background:#9aa814;"></div>
<div style="left:1535.8px;top:177px;width:3.4px;height:6px;background:#3da03a;"></div>
<div style="left:1535.8px;top:183px;width:3.4px;height:25.5px;background:#19e35a;"></div>
<div style="left:1540.2px;top:170.3px;width:3.5px;height:6.7px;background:#9aa814;"></div>
<div style="left:1540.2px;top:177px;width:3.5px;height:6px;background:#3da03a;"></div>
<div style="left:1540.2px;top:183px;width:3.5px;height:25.5px;background:#19e35a;"></div>
<div style="left:1535.8px;top:170.3px;width:3.4px;height:1.2px;background:#e6d020;"></div>
<div style="left:1540.2px;top:170.3px;width:3.5px;height:1.2px;background:#e6d020;"></div>
<div style="left:1535.5px;top:159.3px;width:8.5px;height:1px;background:#363636;"></div>
<div style="left:1311px;top:213px;width:112px;height:18.5px;background:#8dc5ff;"></div>
<svg style="left:1313px;top:214.5px;" width="16" height="16" viewBox="0 0 16 16"><circle cx="8" cy="8" r="6.6" fill="none" stroke="rgba(0,0,0,0.78)" stroke-width="1.1"/><rect x="5.3" y="5.3" width="5.4" height="1.1" fill="rgba(0,0,0,0.78)"/><rect x="5.3" y="7.5" width="5.4" height="1.1" fill="rgba(0,0,0,0.78)"/><rect x="5.3" y="9.7" width="5.4" height="1.1" fill="rgba(0,0,0,0.78)"/></svg>
<div class="t" style="left:1335.5px;top:217.5px;font-size:11px;color:rgba(0,0,0,0.78);font-weight:bold;font-family:'Liberation Sans', sans-serif;line-height:1;white-space:nowrap;">Percussion</div>
<div style="left:1427.5px;top:216.6px;width:49px;height:12.8px;background:#f9a658;border-radius:1px;font-family:'Liberation Sans', sans-serif;font-size:11.5px;color:#111;font-weight:bold;line-height:12.8px;text-align:center;white-space:nowrap;overflow:hidden;">3</div>
<div style="left:1481.7px;top:216.6px;width:22.3px;height:12.8px;background:#1f1f1f;border-radius:1px;font-family:'Liberation Sans', sans-serif;font-size:11px;color:#d2d2d2;font-weight:normal;line-height:12.8px;text-align:center;white-space:nowrap;overflow:hidden;">S</div>
<div style="left:1535.8px;top:215.3px;width:3.4px;height:13.7px;background:#1c1c1c;"></div>
<div style="left:1540.2px;top:215.3px;width:3.5px;height:13.7px;background:#1c1c1c;"></div>
<div style="left:1535.8px;top:225px;width:3.4px;height:3.8px;background:#19e35a;"></div>
<div style="left:1540.2px;top:225px;width:3.5px;height:3.8px;background:#19e35a;"></div>
<div style="left:1535.8px;top:221.4px;width:3.4px;height:1.2px;background:#19e35a;"></div>
<div style="left:1540.2px;top:223.5px;width:3.5px;height:1.2px;background:#19e35a;"></div>
<div style="left:1535.5px;top:218.3px;width:8.5px;height:1px;background:#363636;"></div>
<div style="left:1311px;top:233px;width:112px;height:57.5px;background:#5cffe4;"></div>
<svg style="left:1313px;top:234.5px;" width="16" height="16" viewBox="0 0 16 16"><circle cx="8" cy="8" r="6.6" fill="none" stroke="rgba(0,0,0,0.78)" stroke-width="1.1"/><path d="M4.2 6 H11.8 L8 11 Z" fill="rgba(0,0,0,0.78)"/></svg>
<div class="t" style="left:1335.5px;top:237.5px;font-size:11px;color:rgba(0,0,0,0.78);font-weight:bold;font-family:'Liberation Sans', sans-serif;line-height:1;white-space:nowrap;">Bass</div>
<div style="left:1427.5px;top:236.6px;width:49px;height:12.8px;background:#f9a658;border-radius:1px;font-family:'Liberation Sans', sans-serif;font-size:11.5px;color:#111;font-weight:bold;line-height:12.8px;text-align:center;white-space:nowrap;overflow:hidden;">8</div>
<div style="left:1481.7px;top:236.6px;width:22.3px;height:12.8px;background:#1f1f1f;border-radius:1px;font-family:'Liberation Sans', sans-serif;font-size:11px;color:#d2d2d2;font-weight:normal;line-height:12.8px;text-align:center;white-space:nowrap;overflow:hidden;">S</div>
<div style="left:1509px;top:236.6px;width:22px;height:12.8px;background:#1f1f1f;border-radius:1px;font-family:'Liberation Sans', sans-serif;font-size:11.5px;color:#c8c8c8;font-weight:normal;line-height:12.8px;text-align:center;white-space:nowrap;overflow:hidden;"></div>
<svg style="left:1515px;top:238px;" width="10" height="10" viewBox="0 0 10 10"><circle cx="5" cy="5" r="4.4" fill="#d2d2d2"/><path d="M6 1.6 V5.6 Q6 7.2 4.4 7.2 H3.2" stroke="#1f1f1f" stroke-width="1.3" fill="none"/></svg>
<div style="left:1427.5px;top:254.5px;width:49px;height:13px;background:#1f1f1f;border-radius:1px;font-family:'Liberation Sans', sans-serif;font-size:11.5px;color:#c8c8c8;font-weight:normal;line-height:13px;text-align:center;white-space:nowrap;overflow:hidden;"></div>
<div style="left:1428px;top:255px;width:33px;height:12px;background:#0e7686;"></div>
<div class="t" style="left:1427.5px;top:256px;font-size:11.5px;color:#cfd8da;font-weight:normal;font-family:'Liberation Sans', sans-serif;line-height:1;white-space:nowrap;width:49px;text-align:center;">-7.7</div>
<div style="left:1481.7px;top:254.5px;width:49.3px;height:13px;background:#1f1f1f;border-radius:1px;font-family:'Liberation Sans', sans-serif;font-size:11.5px;color:#d2d2d2;font-weight:normal;line-height:13px;text-align:center;white-space:nowrap;overflow:hidden;">C</div>
<div style="left:1427.5px;top:273px;width:32px;height:13.5px;background:#1f1f1f;border-radius:1px;font-family:'Liberation Sans', sans-serif;font-size:11px;color:#cfcfcf;font-weight:normal;line-height:13.5px;text-align:center;white-space:nowrap;overflow:hidden;">&#8722;<span style="font-size:15px;line-height:0;position:relative;top:0.5px">&#8734;</span></div>
<div style="left:1463px;top:273px;width:33px;height:13.5px;background:#1f1f1f;border-radius:1px;font-family:'Liberation Sans', sans-serif;font-size:11px;color:#cfcfcf;font-weight:normal;line-height:13.5px;text-align:center;white-space:nowrap;overflow:hidden;">&#8722;<span style="font-size:15px;line-height:0;position:relative;top:0.5px">&#8734;</span></div>
<div style="left:1535.8px;top:235.3px;width:3.4px;height:52.7px;background:#1c1c1c;"></div>
<div style="left:1540.2px;top:235.3px;width:3.5px;height:52.7px;background:#1c1c1c;"></div>
<div style="left:1535.8px;top:258.5px;width:3.4px;height:29.5px;background:#19e35a;"></div>
<div style="left:1540.2px;top:258.5px;width:3.5px;height:29.5px;background:#19e35a;"></div>
<div style="left:1535.8px;top:250px;width:3.4px;height:1.2px;background:#e6d020;"></div>
<div style="left:1540.2px;top:250px;width:3.5px;height:1.2px;background:#e6d020;"></div>
<div style="left:1535.5px;top:238.3px;width:8.5px;height:1px;background:#363636;"></div>
<div style="left:1311px;top:292.3px;width:112px;height:19px;background:#5cffe4;"></div>
<svg style="left:1313px;top:293.8px;" width="16" height="16" viewBox="0 0 16 16"><circle cx="8" cy="8" r="6.6" fill="none" stroke="rgba(0,0,0,0.78)" stroke-width="1.1"/><path d="M6 4.2 L11.2 8 L6 11.8 Z" fill="rgba(0,0,0,0.78)"/></svg>
<div class="t" style="left:1335.5px;top:296.8px;font-size:11px;color:rgba(0,0,0,0.78);font-weight:bold;font-family:'Liberation Sans', sans-serif;line-height:1;white-space:nowrap;">Bass Drop</div>
<div style="left:1427.5px;top:295.9px;width:49px;height:12.8px;background:#f9a658;border-radius:1px;font-family:'Liberation Sans', sans-serif;font-size:11.5px;color:#111;font-weight:bold;line-height:12.8px;text-align:center;white-space:nowrap;overflow:hidden;">9</div>
<div style="left:1481.7px;top:295.9px;width:22.3px;height:12.8px;background:#1f1f1f;border-radius:1px;font-family:'Liberation Sans', sans-serif;font-size:11px;color:#d2d2d2;font-weight:normal;line-height:12.8px;text-align:center;white-space:nowrap;overflow:hidden;">S</div>
<div style="left:1509px;top:295.9px;width:22px;height:12.8px;background:#1f1f1f;border-radius:1px;font-family:'Liberation Sans', sans-serif;font-size:11.5px;color:#c8c8c8;font-weight:normal;line-height:12.8px;text-align:center;white-space:nowrap;overflow:hidden;"></div>
<svg style="left:1515px;top:297.3px;" width="10" height="10" viewBox="0 0 10 10"><circle cx="5" cy="5" r="4.4" fill="#d2d2d2"/><path d="M6 1.6 V5.6 Q6 7.2 4.4 7.2 H3.2" stroke="#1f1f1f" stroke-width="1.3" fill="none"/></svg>
<div style="left:1535.8px;top:294.6px;width:3.4px;height:14.2px;background:#1c1c1c;"></div>
<div style="left:1540.2px;top:294.6px;width:3.5px;height:14.2px;background:#1c1c1c;"></div>
<div style="left:1535.5px;top:297.6px;width:8.5px;height:1px;background:#363636;"></div>
<div style="left:1311px;top:313px;width:112px;height:38px;background:#eaf9aa;"></div>
<svg style="left:1313px;top:314.5px;" width="16" height="16" viewBox="0 0 16 16"><circle cx="8" cy="8" r="6.6" fill="none" stroke="rgba(0,0,0,0.78)" stroke-width="1.1"/><path d="M4.2 6 H11.8 L8 11 Z" fill="rgba(0,0,0,0.78)"/></svg>
<div class="t" style="left:1335.5px;top:317.5px;font-size:11px;color:rgba(0,0,0,0.78);font-weight:bold;font-family:'Liberation Sans', sans-serif;line-height:1;white-space:nowrap;">Synth Riser</div>
<div style="left:1427.5px;top:316.6px;width:49px;height:12.8px;background:#f9a658;border-radius:1px;font-family:'Liberation Sans', sans-serif;font-size:11.5px;color:#111;font-weight:bold;line-height:12.8px;text-align:center;white-space:nowrap;overflow:hidden;">10</div>
<div style="left:1481.7px;top:316.6px;width:22.3px;height:12.8px;background:#1f1f1f;border-radius:1px;font-family:'Liberation Sans', sans-serif;font-size:11px;color:#d2d2d2;font-weight:normal;line-height:12.8px;text-align:center;white-space:nowrap;overflow:hidden;">S</div>
<div style="left:1509px;top:316.6px;width:22px;height:12.8px;background:#1f1f1f;border-radius:1px;font-family:'Liberation Sans', sans-serif;font-size:11.5px;color:#c8c8c8;font-weight:normal;line-height:12.8px;text-align:center;white-space:nowrap;overflow:hidden;"></div>
<svg style="left:1515px;top:318px;" width="10" height="10" viewBox="0 0 10 10"><circle cx="5" cy="5" r="4.4" fill="#d2d2d2"/><path d="M6 1.6 V5.6 Q6 7.2 4.4 7.2 H3.2" stroke="#1f1f1f" stroke-width="1.3" fill="none"/></svg>
<div style="left:1427.5px;top:334.5px;width:49px;height:13px;background:#1f1f1f;border-radius:1px;font-family:'Liberation Sans', sans-serif;font-size:11.5px;color:#c8c8c8;font-weight:normal;line-height:13px;text-align:center;white-space:nowrap;overflow:hidden;"></div>
<div style="left:1428px;top:335px;width:19px;height:12px;background:#0e7686;"></div>
<div class="t" style="left:1427.5px;top:336px;font-size:11.5px;color:#cfd8da;font-weight:normal;font-family:'Liberation Sans', sans-serif;line-height:1;white-space:nowrap;width:49px;text-align:center;">-18.0</div>
<div style="left:1481.7px;top:334.5px;width:49.3px;height:13px;background:#1f1f1f;border-radius:1px;font-family:'Liberation Sans', sans-serif;font-size:11.5px;color:#d2d2d2;font-weight:normal;line-height:13px;text-align:center;white-space:nowrap;overflow:hidden;">C</div>
<div style="left:1535.8px;top:315.3px;width:3.4px;height:33.2px;background:#1c1c1c;"></div>
<div style="left:1540.2px;top:315.3px;width:3.5px;height:33.2px;background:#1c1c1c;"></div>
<div style="left:1535.8px;top:333.5px;width:3.4px;height:16px;background:#19e35a;"></div>
<div style="left:1540.2px;top:333px;width:3.5px;height:16.5px;background:#19e35a;"></div>
<div style="left:1535.8px;top:333px;width:3.4px;height:1.2px;background:#19e35a;"></div>
<div style="left:1540.2px;top:333px;width:3.5px;height:1.2px;background:#19e35a;"></div>
<div style="left:1535.5px;top:318.3px;width:8.5px;height:1px;background:#363636;"></div>
<div style="left:1311px;top:353px;width:112px;height:56.5px;background:#f8f07c;"></div>
<svg style="left:1313px;top:354.5px;" width="16" height="16" viewBox="0 0 16 16"><circle cx="8" cy="8" r="6.6" fill="none" stroke="rgba(0,0,0,0.78)" stroke-width="1.1"/><path d="M4.2 6 H11.8 L8 11 Z" fill="rgba(0,0,0,0.78)"/></svg>
<div class="t" style="left:1335.5px;top:357.5px;font-size:11px;color:rgba(0,0,0,0.78);font-weight:bold;font-family:'Liberation Sans', sans-serif;line-height:1;white-space:nowrap;">Keys</div>
<div style="left:1427.5px;top:356.6px;width:49px;height:12.8px;background:#f9a658;border-radius:1px;font-family:'Liberation Sans', sans-serif;font-size:11.5px;color:#111;font-weight:bold;line-height:12.8px;text-align:center;white-space:nowrap;overflow:hidden;">11</div>
<div style="left:1481.7px;top:356.6px;width:22.3px;height:12.8px;background:#1f1f1f;border-radius:1px;font-family:'Liberation Sans', sans-serif;font-size:11px;color:#d2d2d2;font-weight:normal;line-height:12.8px;text-align:center;white-space:nowrap;overflow:hidden;">S</div>
<div style="left:1509px;top:356.6px;width:22px;height:12.8px;background:#1f1f1f;border-radius:1px;font-family:'Liberation Sans', sans-serif;font-size:11.5px;color:#c8c8c8;font-weight:normal;line-height:12.8px;text-align:center;white-space:nowrap;overflow:hidden;"></div>
<svg style="left:1515px;top:358px;" width="10" height="10" viewBox="0 0 10 10"><circle cx="5" cy="5" r="4.4" fill="#d2d2d2"/><path d="M6 1.6 V5.6 Q6 7.2 4.4 7.2 H3.2" stroke="#1f1f1f" stroke-width="1.3" fill="none"/></svg>
<div style="left:1427.5px;top:374.5px;width:49px;height:13px;background:#1f1f1f;border-radius:1px;font-family:'Liberation Sans', sans-serif;font-size:11.5px;color:#c8c8c8;font-weight:normal;line-height:13px;text-align:center;white-space:nowrap;overflow:hidden;"></div>
<div style="left:1428px;top:375px;width:35px;height:12px;background:#0e7686;"></div>
<div class="t" style="left:1427.5px;top:376px;font-size:11.5px;color:#cfd8da;font-weight:normal;font-family:'Liberation Sans', sans-serif;line-height:1;white-space:nowrap;width:49px;text-align:center;">-6.6</div>
<div style="left:1481.7px;top:374.5px;width:49.3px;height:13px;background:#1f1f1f;border-radius:1px;font-family:'Liberation Sans', sans-serif;font-size:11.5px;color:#d2d2d2;font-weight:normal;line-height:13px;text-align:center;white-space:nowrap;overflow:hidden;">C</div>
<div style="left:1427.5px;top:393px;width:32px;height:13.5px;background:#1f1f1f;border-radius:1px;font-family:'Liberation Sans', sans-serif;font-size:11px;color:#cfcfcf;font-weight:normal;line-height:13.5px;text-align:center;white-space:nowrap;overflow:hidden;">&#8722;<span style="font-size:15px;line-height:0;position:relative;top:0.5px">&#8734;</span></div>
<div style="left:1463px;top:393px;width:33px;height:13.5px;background:#1f1f1f;border-radius:1px;font-family:'Liberation Sans', sans-serif;font-size:11px;color:#cfcfcf;font-weight:normal;line-height:13.5px;text-align:center;white-space:nowrap;overflow:hidden;">&#8722;<span style="font-size:15px;line-height:0;position:relative;top:0.5px">&#8734;</span></div>
<div style="left:1535.8px;top:355.3px;width:3.4px;height:51.7px;background:#1c1c1c;"></div>
<div style="left:1540.2px;top:355.3px;width:3.5px;height:51.7px;background:#1c1c1c;"></div>
<div style="left:1535.8px;top:405.5px;width:3.4px;height:1.5px;background:#19e35a;"></div>
<div style="left:1540.2px;top:405.5px;width:3.5px;height:1.5px;background:#19e35a;"></div>
<div style="left:1535.8px;top:378.5px;width:3.4px;height:1.2px;background:#19e35a;"></div>
<div style="left:1540.2px;top:373.5px;width:3.5px;height:1.2px;background:#8cc820;"></div>
<div style="left:1535.5px;top:358.3px;width:8.5px;height:1px;background:#363636;"></div>
<div style="left:1311px;top:411.3px;width:112px;height:19px;background:#ffa676;"></div>
<svg style="left:1313px;top:412.8px;" width="16" height="16" viewBox="0 0 16 16"><circle cx="8" cy="8" r="6.6" fill="none" stroke="rgba(0,0,0,0.78)" stroke-width="1.1"/><rect x="5.3" y="5.3" width="5.4" height="1.1" fill="rgba(0,0,0,0.78)"/><rect x="5.3" y="7.5" width="5.4" height="1.1" fill="rgba(0,0,0,0.78)"/><rect x="5.3" y="9.7" width="5.4" height="1.1" fill="rgba(0,0,0,0.78)"/></svg>
<div class="t" style="left:1335.5px;top:415.8px;font-size:11px;color:rgba(0,0,0,0.78);font-weight:bold;font-family:'Liberation Sans', sans-serif;line-height:1;white-space:nowrap;">Pads</div>
<div style="left:1427.5px;top:414.9px;width:49px;height:12.8px;background:#f9a658;border-radius:1px;font-family:'Liberation Sans', sans-serif;font-size:11.5px;color:#111;font-weight:bold;line-height:12.8px;text-align:center;white-space:nowrap;overflow:hidden;">12</div>
<div style="left:1481.7px;top:414.9px;width:22.3px;height:12.8px;background:#1f1f1f;border-radius:1px;font-family:'Liberation Sans', sans-serif;font-size:11px;color:#d2d2d2;font-weight:normal;line-height:12.8px;text-align:center;white-space:nowrap;overflow:hidden;">S</div>
<div style="left:1535.8px;top:413.6px;width:3.4px;height:14.2px;background:#1c1c1c;"></div>
<div style="left:1540.2px;top:413.6px;width:3.5px;height:14.2px;background:#1c1c1c;"></div>
<div style="left:1535.8px;top:422.5px;width:3.4px;height:5.5px;background:#19e35a;"></div>
<div style="left:1540.2px;top:422.5px;width:3.5px;height:5.5px;background:#19e35a;"></div>
<div style="left:1535.8px;top:418.3px;width:3.4px;height:1.2px;background:#e6d020;"></div>
<div style="left:1540.2px;top:419px;width:3.5px;height:1.2px;background:#c8d020;"></div>
<div style="left:1535.5px;top:416.6px;width:8.5px;height:1px;background:#363636;"></div>
<div style="left:1311px;top:432.3px;width:112px;height:56.7px;background:#ff93a4;"></div>
<svg style="left:1313px;top:433.8px;" width="16" height="16" viewBox="0 0 16 16"><circle cx="8" cy="8" r="6.6" fill="none" stroke="rgba(0,0,0,0.78)" stroke-width="1.1"/><path d="M4.2 6 H11.8 L8 11 Z" fill="rgba(0,0,0,0.78)"/></svg>
<div class="t" style="left:1335.5px;top:436.8px;font-size:11px;color:rgba(0,0,0,0.78);font-weight:bold;font-family:'Liberation Sans', sans-serif;line-height:1;white-space:nowrap;">Ambience</div>
<div style="left:1427.5px;top:435.9px;width:49px;height:12.8px;background:#f9a658;border-radius:1px;font-family:'Liberation Sans', sans-serif;font-size:11.5px;color:#111;font-weight:bold;line-height:12.8px;text-align:center;white-space:nowrap;overflow:hidden;">16</div>
<div style="left:1481.7px;top:435.9px;width:22.3px;height:12.8px;background:#1f1f1f;border-radius:1px;font-family:'Liberation Sans', sans-serif;font-size:11px;color:#d2d2d2;font-weight:normal;line-height:12.8px;text-align:center;white-space:nowrap;overflow:hidden;">S</div>
<div style="left:1509px;top:435.9px;width:22px;height:12.8px;background:#1f1f1f;border-radius:1px;font-family:'Liberation Sans', sans-serif;font-size:11.5px;color:#c8c8c8;font-weight:normal;line-height:12.8px;text-align:center;white-space:nowrap;overflow:hidden;"></div>
<svg style="left:1515px;top:437.3px;" width="10" height="10" viewBox="0 0 10 10"><circle cx="5" cy="5" r="3.6" fill="#7a7a7a"/></svg>
<div style="left:1427.5px;top:453.8px;width:49px;height:13px;background:#1f1f1f;border-radius:1px;font-family:'Liberation Sans', sans-serif;font-size:11.5px;color:#c8c8c8;font-weight:normal;line-height:13px;text-align:center;white-space:nowrap;overflow:hidden;"></div>
<div style="left:1428px;top:454.3px;width:31px;height:12px;background:#0e7686;"></div>
<div class="t" style="left:1427.5px;top:455.3px;font-size:11.5px;color:#cfd8da;font-weight:normal;font-family:'Liberation Sans', sans-serif;line-height:1;white-space:nowrap;width:49px;text-align:center;">-8.3</div>
<div style="left:1481.7px;top:453.8px;width:49.3px;height:13px;background:#1f1f1f;border-radius:1px;font-family:'Liberation Sans', sans-serif;font-size:11.5px;color:#d2d2d2;font-weight:normal;line-height:13px;text-align:center;white-space:nowrap;overflow:hidden;">C</div>
<div style="left:1427.5px;top:472.3px;width:32px;height:13.5px;background:#1f1f1f;border-radius:1px;font-family:'Liberation Sans', sans-serif;font-size:11px;color:#cfcfcf;font-weight:normal;line-height:13.5px;text-align:center;white-space:nowrap;overflow:hidden;">&#8722;<span style="font-size:15px;line-height:0;position:relative;top:0.5px">&#8734;</span></div>
<div style="left:1463px;top:472.3px;width:33px;height:13.5px;background:#1f1f1f;border-radius:1px;font-family:'Liberation Sans', sans-serif;font-size:11px;color:#cfcfcf;font-weight:normal;line-height:13.5px;text-align:center;white-space:nowrap;overflow:hidden;">&#8722;<span style="font-size:15px;line-height:0;position:relative;top:0.5px">&#8734;</span></div>
<div style="left:1535.8px;top:434.6px;width:3.4px;height:51.9px;background:#1c1c1c;"></div>
<div style="left:1540.2px;top:434.6px;width:3.5px;height:51.9px;background:#1c1c1c;"></div>
<div style="left:1535.8px;top:467.5px;width:3.4px;height:5.5px;background:#13a844;"></div>
<div style="left:1535.8px;top:473px;width:3.4px;height:13.7px;background:#19e35a;"></div>
<div style="left:1540.2px;top:467px;width:3.5px;height:6px;background:#13a844;"></div>
<div style="left:1540.2px;top:473px;width:3.5px;height:13.7px;background:#19e35a;"></div>
<div style="left:1535.8px;top:466.3px;width:3.4px;height:1.2px;background:#19e35a;"></div>
<div style="left:1540.2px;top:465px;width:3.5px;height:1.2px;background:#19e35a;"></div>
<div style="left:1535.5px;top:437.6px;width:8.5px;height:1px;background:#363636;"></div>
<div style="left:1311px;top:491.2px;width:112px;height:18.3px;background:#ff93a4;"></div>
<svg style="left:1313px;top:492.7px;" width="16" height="16" viewBox="0 0 16 16"><circle cx="8" cy="8" r="6.6" fill="none" stroke="rgba(0,0,0,0.78)" stroke-width="1.1"/><path d="M6 4.2 L11.2 8 L6 11.8 Z" fill="rgba(0,0,0,0.78)"/></svg>
<div class="t" style="left:1335.5px;top:495.7px;font-size:11px;color:rgba(0,0,0,0.78);font-weight:bold;font-family:'Liberation Sans', sans-serif;line-height:1;white-space:nowrap;">Drone</div>
<div style="left:1427.5px;top:494.8px;width:49px;height:12.8px;background:#f9a658;border-radius:1px;font-family:'Liberation Sans', sans-serif;font-size:11.5px;color:#111;font-weight:bold;line-height:12.8px;text-align:center;white-space:nowrap;overflow:hidden;">17</div>
<div style="left:1481.7px;top:494.8px;width:22.3px;height:12.8px;background:#1f1f1f;border-radius:1px;font-family:'Liberation Sans', sans-serif;font-size:11px;color:#d2d2d2;font-weight:normal;line-height:12.8px;text-align:center;white-space:nowrap;overflow:hidden;">S</div>
<div style="left:1509px;top:494.8px;width:22px;height:12.8px;background:#1f1f1f;border-radius:1px;font-family:'Liberation Sans', sans-serif;font-size:11.5px;color:#c8c8c8;font-weight:normal;line-height:12.8px;text-align:center;white-space:nowrap;overflow:hidden;"></div>
<svg style="left:1515px;top:496.2px;" width="10" height="10" viewBox="0 0 10 10"><circle cx="5" cy="5" r="3.6" fill="#7a7a7a"/></svg>
<div style="left:1535.8px;top:493.5px;width:3.4px;height:13.5px;background:#1c1c1c;"></div>
<div style="left:1540.2px;top:493.5px;width:3.5px;height:13.5px;background:#1c1c1c;"></div>
<div style="left:1535.8px;top:500px;width:3.4px;height:7px;background:#19e35a;"></div>
<div style="left:1540.2px;top:499.8px;width:3.5px;height:7.2px;background:#19e35a;"></div>
<div style="left:1540.2px;top:499.5px;width:3.5px;height:1.2px;background:#19e35a;"></div>
<div style="left:1535.5px;top:496.5px;width:8.5px;height:1px;background:#363636;"></div>
<div style="left:1311px;top:511.7px;width:112px;height:18.3px;background:#d86ce4;"></div>
<svg style="left:1313px;top:513.2px;" width="16" height="16" viewBox="0 0 16 16"><circle cx="8" cy="8" r="6.6" fill="none" stroke="rgba(0,0,0,0.78)" stroke-width="1.1"/><path d="M6 4.2 L11.2 8 L6 11.8 Z" fill="rgba(0,0,0,0.78)"/></svg>
<div class="t" style="left:1335.5px;top:516.2px;font-size:11px;color:rgba(0,0,0,0.78);font-weight:bold;font-family:'Liberation Sans', sans-serif;line-height:1;white-space:nowrap;">FX</div>
<div style="left:1427.5px;top:515.3px;width:49px;height:12.8px;background:#f9a658;border-radius:1px;font-family:'Liberation Sans', sans-serif;font-size:11.5px;color:#111;font-weight:bold;line-height:12.8px;text-align:center;white-space:nowrap;overflow:hidden;">18</div>
<div style="left:1481.7px;top:515.3px;width:22.3px;height:12.8px;background:#1f1f1f;border-radius:1px;font-family:'Liberation Sans', sans-serif;font-size:11px;color:#d2d2d2;font-weight:normal;line-height:12.8px;text-align:center;white-space:nowrap;overflow:hidden;">S</div>
<div style="left:1509px;top:515.3px;width:22px;height:12.8px;background:#1f1f1f;border-radius:1px;font-family:'Liberation Sans', sans-serif;font-size:11.5px;color:#c8c8c8;font-weight:normal;line-height:12.8px;text-align:center;white-space:nowrap;overflow:hidden;"></div>
<svg style="left:1515px;top:516.7px;" width="10" height="10" viewBox="0 0 10 10"><circle cx="5" cy="5" r="3.6" fill="#7a7a7a"/></svg>
<div style="left:1535.8px;top:514px;width:3.4px;height:13.5px;background:#1c1c1c;"></div>
<div style="left:1540.2px;top:514px;width:3.5px;height:13.5px;background:#1c1c1c;"></div>
<div style="left:1535.8px;top:519px;width:3.4px;height:9px;background:#19e35a;"></div>
<div style="left:1540.2px;top:519px;width:3.5px;height:9px;background:#19e35a;"></div>
<div style="left:1535.5px;top:517px;width:8.5px;height:1px;background:#363636;"></div>
<div style="left:1311px;top:532.3px;width:112px;height:18.5px;background:#d86ce4;"></div>
<svg style="left:1313px;top:533.8px;" width="16" height="16" viewBox="0 0 16 16"><circle cx="8" cy="8" r="6.6" fill="none" stroke="rgba(0,0,0,0.78)" stroke-width="1.1"/><path d="M6 4.2 L11.2 8 L6 11.8 Z" fill="rgba(0,0,0,0.78)"/></svg>
<div class="t" style="left:1335.5px;top:536.8px;font-size:11px;color:rgba(0,0,0,0.78);font-weight:bold;font-family:'Liberation Sans', sans-serif;line-height:1;white-space:nowrap;">Zap</div>
<div style="left:1427.5px;top:535.9px;width:49px;height:12.8px;background:#f9a658;border-radius:1px;font-family:'Liberation Sans', sans-serif;font-size:11.5px;color:#111;font-weight:bold;line-height:12.8px;text-align:center;white-space:nowrap;overflow:hidden;">19</div>
<div style="left:1481.7px;top:535.9px;width:22.3px;height:12.8px;background:#1f1f1f;border-radius:1px;font-family:'Liberation Sans', sans-serif;font-size:11px;color:#d2d2d2;font-weight:normal;line-height:12.8px;text-align:center;white-space:nowrap;overflow:hidden;">S</div>
<div style="left:1509px;top:535.9px;width:22px;height:12.8px;background:#1f1f1f;border-radius:1px;font-family:'Liberation Sans', sans-serif;font-size:11.5px;color:#c8c8c8;font-weight:normal;line-height:12.8px;text-align:center;white-space:nowrap;overflow:hidden;"></div>
<svg style="left:1515px;top:537.3px;" width="10" height="10" viewBox="0 0 10 10"><circle cx="5" cy="5" r="4.4" fill="#d2d2d2"/><path d="M6 1.6 V5.6 Q6 7.2 4.4 7.2 H3.2" stroke="#1f1f1f" stroke-width="1.3" fill="none"/></svg>
<div style="left:1535.8px;top:534.6px;width:3.4px;height:13.7px;background:#1c1c1c;"></div>
<div style="left:1540.2px;top:534.6px;width:3.5px;height:13.7px;background:#1c1c1c;"></div>
<div style="left:1535.8px;top:540.8px;width:3.4px;height:7.5px;background:#19e35a;"></div>
<div style="left:1540.2px;top:540.8px;width:3.5px;height:7.5px;background:#19e35a;"></div>
<div style="left:1535.5px;top:537.6px;width:8.5px;height:1px;background:#363636;"></div>
<div style="left:1311px;top:579px;width:112px;height:18.5px;background:#ffffff;"></div>
<svg style="left:1313px;top:580px;" width="16" height="16" viewBox="0 0 16 16"><circle cx="8" cy="8" r="6.6" fill="none" stroke="#2c2c2c" stroke-width="1.1"/><path d="M6 4.2 L11.2 8 L6 11.8 Z" fill="#2c2c2c"/></svg>
<div class="t" style="left:1338.5px;top:582.5px;font-size:11px;color:#26262a;font-weight:bold;font-family:'Liberation Sans', sans-serif;line-height:1;white-space:nowrap;">Main</div>
<div style="left:1424px;top:578px;width:130px;height:19.5px;background:#363636;"></div>
<div style="left:1427.5px;top:581.5px;width:49px;height:13px;background:#1f1f1f;border-radius:1px;font-family:'Liberation Sans', sans-serif;font-size:11.5px;color:#c8c8c8;font-weight:normal;line-height:13px;text-align:center;white-space:nowrap;overflow:hidden;"></div>
<div style="left:1428px;top:582px;width:40px;height:12px;background:#0e7686;"></div>
<div class="t" style="left:1427.5px;top:583px;font-size:11.5px;color:#cfd8da;font-weight:normal;font-family:'Liberation Sans', sans-serif;line-height:1;white-space:nowrap;width:49px;text-align:center;">0</div>
<div style="left:1481.7px;top:581.5px;width:49.3px;height:13px;background:#1f1f1f;border-radius:1px;font-family:'Liberation Sans', sans-serif;font-size:11.5px;color:#c8c8c8;font-weight:normal;line-height:13px;text-align:center;white-space:nowrap;overflow:hidden;"></div>
<div style="left:1482.2px;top:582px;width:40px;height:12px;background:#3f6fc8;"></div>
<div class="t" style="left:1481.7px;top:583px;font-size:11.5px;color:#d8e0f0;font-weight:normal;font-family:'Liberation Sans', sans-serif;line-height:1;white-space:nowrap;width:49px;text-align:center;">0</div>
<div style="left:1535.7px;top:580.8px;width:3.8px;height:15px;background:#1c1c1c;"></div>
<div style="left:1540px;top:580.8px;width:3.8px;height:15px;background:#1c1c1c;"></div>
<div style="left:1535.5px;top:582.2px;width:8.5px;height:0.6px;background:#363636;"></div>
<div style="left:1535.9px;top:582.7px;width:3.4px;height:1.6px;background:#d02828;"></div>
<div style="left:1540.2px;top:582.7px;width:3.4px;height:1.6px;background:#d02828;"></div>
<div style="left:1535.9px;top:585.5px;width:3.4px;height:1.6px;background:#a8e030;"></div>
<div style="left:1540.2px;top:585.5px;width:3.4px;height:1.6px;background:#a8e030;"></div>
<div style="left:1535.9px;top:587px;width:3.4px;height:8.5px;background:#19ec5c;"></div>
<div style="left:1540.2px;top:587px;width:3.4px;height:8.5px;background:#19ec5c;"></div>
<div style="left:1311px;top:576.5px;width:243px;height:2px;background:#232323;"></div>
<div style="left:1311px;top:597.3px;width:243px;height:1.5px;background:#232323;"></div>
<div style="left:1311px;top:598px;width:243px;height:22.5px;background:#363636;"></div>
<div style="left:1313px;top:603.5px;width:15.5px;height:14px;background:#1f1f1f;border-radius:1px;font-family:'Liberation Sans', sans-serif;font-size:11.5px;color:#c8c8c8;font-weight:normal;line-height:14px;text-align:center;white-space:nowrap;overflow:hidden;"></div>
<svg style="left:1314px;top:604px;" width="14" height="13" viewBox="0 0 14 13"><g fill="#b0b0b0"><rect x="2" y="5" width="1" height="3"/><rect x="4" y="3" width="1" height="7"/><rect x="6" y="1" width="1.2" height="11"/><rect x="8" y="2" width="1" height="9"/><rect x="10" y="4" width="1" height="5"/></g></svg>
<div style="left:1331px;top:603.5px;width:36.5px;height:14px;background:#1f1f1f;border-radius:1px;font-family:'Liberation Sans', sans-serif;font-size:11.5px;color:#c8c8c8;font-weight:normal;line-height:14px;text-align:center;white-space:nowrap;overflow:hidden;">1.00x</div>
<div style="left:1386px;top:603.5px;width:16.5px;height:14px;background:#1f1f1f;border-radius:1px;font-family:'Liberation Sans', sans-serif;font-size:11.5px;color:#d0d0d0;font-weight:normal;line-height:14px;text-align:center;white-space:nowrap;overflow:hidden;">H</div>
<div style="left:1405px;top:603.5px;width:17.5px;height:14px;background:#1f1f1f;border-radius:1px;font-family:'Liberation Sans', sans-serif;font-size:11.5px;color:#d0d0d0;font-weight:normal;line-height:14px;text-align:center;white-space:nowrap;overflow:hidden;">W</div>
<div style="left:10px;top:625.5px;width:1544px;height:295.5px;background:#363636;border-radius:0 0 5px 5px;"></div>
<div style="left:111px;top:625.5px;width:2px;height:288.5px;background:#262626;"></div>
<div style="left:214px;top:625.5px;width:2px;height:288.5px;background:#262626;"></div>
<div style="left:317px;top:625.5px;width:2px;height:288.5px;background:#262626;"></div>
<div style="left:420px;top:625.5px;width:2px;height:288.5px;background:#262626;"></div>
<div style="left:523px;top:625.5px;width:2px;height:288.5px;background:#262626;"></div>
<div style="left:626.5px;top:625.5px;width:2px;height:288.5px;background:#262626;"></div>
<div style="left:730px;top:625.5px;width:2px;height:288.5px;background:#262626;"></div>
<div style="left:833px;top:625.5px;width:2px;height:288.5px;background:#262626;"></div>
<div style="left:936px;top:625.5px;width:2px;height:288.5px;background:#262626;"></div>
<div style="left:1039px;top:625.5px;width:2px;height:288.5px;background:#262626;"></div>
<div style="left:1142px;top:625.5px;width:2.5px;height:288.5px;background:#262626;"></div>
<div style="left:1237px;top:625.5px;width:3.4px;height:288.5px;background:#262626;"></div>
<div style="left:1341px;top:625.5px;width:2.7px;height:288.5px;background:#262626;"></div>
<div style="left:1444.6px;top:625.5px;width:2.1px;height:288.5px;background:#262626;"></div>
<div style="left:10px;top:625.8px;width:101px;height:18.3px;background:#94a7ff;"></div>
<div class="t" style="left:13.5px;top:629.8px;font-size:11px;color:rgba(0,0,0,0.78);font-weight:bold;font-family:'Liberation Sans', sans-serif;line-height:1;white-space:nowrap;">Drums</div>
<svg style="left:93.5px;top:627px;" width="16" height="16" viewBox="0 0 16 16"><circle cx="8" cy="8" r="6.6" fill="none" stroke="rgba(0,0,0,0.78)" stroke-width="1.1"/><path d="M4.2 6 H11.8 L8 11 Z" fill="rgba(0,0,0,0.78)"/></svg>
<div style="left:10px;top:644px;width:101px;height:1.5px;background:#262626;"></div>
<div style="left:10px;top:914px;width:101px;height:6.5px;background:#94a7ff;border-radius:0 0 0 5px;"></div>
<div style="left:10px;top:645px;width:101px;height:268px;overflow:hidden;">
<div style="left:7.6px;top:7px;width:37.4px;height:13.6px;background:#252525;border-radius:7px;border:1px solid #1a1a1a;"></div>
<div class="t" style="left:7.6px;top:9px;font-size:11.5px;color:#d8d8d8;font-weight:normal;font-family:'Liberation Sans', sans-serif;line-height:1;white-space:nowrap;width:37.4px;text-align:center;">-6.44</div>
<div style="left:7.6px;top:26.3px;width:37.4px;height:13.5px;background:#252525;border-radius:1px;border:1px solid #1a1a1a;"></div>
<div class="t" style="left:7.6px;top:28.1px;font-size:11.5px;color:#d8d8d8;font-weight:normal;font-family:'Liberation Sans', sans-serif;line-height:1;white-space:nowrap;width:37.4px;text-align:center;">-1.0</div>
<svg style="left:49.8px;top:30px;" width="12.5" height="14" viewBox="0 0 12.5 14"><path d="M0 0 L12.2 7 L0 14 Z" fill="#b4b4b4"/></svg>
<div style="left:63.5px;top:6.5px;width:13.3px;height:254px;background:#1c1c1c;border-radius:2px;"></div>
<div style="left:64.5px;top:135.5px;width:5px;height:124.5px;background:#19ec5c;"></div>
<div style="left:70.8px;top:134.5px;width:5px;height:125.5px;background:#19ec5c;"></div>
<div style="left:64.5px;top:60px;width:5px;height:1.3px;background:#e0a020;"></div>
<div style="left:70.8px;top:60.5px;width:5px;height:1.3px;background:#e0a020;"></div>
<div style="left:69.7px;top:7px;width:0.9px;height:253px;background:#4a4a4a;"></div>
<div style="left:64px;top:32.3px;width:12.3px;height:1.6px;background:#858585;"></div>
<div style="left:57.5px;top:7.8px;width:3.5px;height:1px;background:#6a6a6a;"></div>
<div class="t" style="left:80.6px;top:8.2px;font-size:10.4px;color:#ababab;font-weight:normal;font-family:'Liberation Sans', sans-serif;line-height:1;white-space:nowrap;">6</div>
<div style="left:57.5px;top:32.5px;width:3.5px;height:1px;background:#6a6a6a;"></div>
<div class="t" style="left:80.6px;top:29.2px;font-size:10.4px;color:#ababab;font-weight:normal;font-family:'Liberation Sans', sans-serif;line-height:1;white-space:nowrap;">0</div>
<div style="left:57.5px;top:56.9px;width:3.5px;height:1px;background:#6a6a6a;"></div>
<div class="t" style="left:80.6px;top:53.6px;font-size:10.4px;color:#ababab;font-weight:normal;font-family:'Liberation Sans', sans-serif;line-height:1;white-space:nowrap;">6</div>
<div style="left:57.5px;top:81.5px;width:3.5px;height:1px;background:#6a6a6a;"></div>
<div class="t" style="left:80.6px;top:78.2px;font-size:10.4px;color:#ababab;font-weight:normal;font-family:'Liberation Sans', sans-serif;line-height:1;white-space:nowrap;">12</div>
<div style="left:57.5px;top:106.5px;width:3.5px;height:1px;background:#6a6a6a;"></div>
<div class="t" style="left:80.6px;top:103.2px;font-size:10.4px;color:#ababab;font-weight:normal;font-family:'Liberation Sans', sans-serif;line-height:1;white-space:nowrap;">18</div>
<div style="left:57.5px;top:131.5px;width:3.5px;height:1px;background:#6a6a6a;"></div>
<div class="t" style="left:80.6px;top:128.2px;font-size:10.4px;color:#ababab;font-weight:normal;font-family:'Liberation Sans', sans-serif;line-height:1;white-space:nowrap;">24</div>
<div style="left:57.5px;top:157.9px;width:3.5px;height:1px;background:#6a6a6a;"></div>
<div class="t" style="left:80.6px;top:154.6px;font-size:10.4px;color:#ababab;font-weight:normal;font-family:'Liberation Sans', sans-serif;line-height:1;white-space:nowrap;">30</div>
<div style="left:57.5px;top:179.9px;width:3.5px;height:1px;background:#6a6a6a;"></div>
<div class="t" style="left:80.6px;top:176.6px;font-size:10.4px;color:#ababab;font-weight:normal;font-family:'Liberation Sans', sans-serif;line-height:1;white-space:nowrap;">36</div>
<div style="left:57.5px;top:199.2px;width:3.5px;height:1px;background:#6a6a6a;"></div>
<div class="t" style="left:80.6px;top:195.9px;font-size:10.4px;color:#ababab;font-weight:normal;font-family:'Liberation Sans', sans-serif;line-height:1;white-space:nowrap;">42</div>
<div style="left:57.5px;top:215.5px;width:3.5px;height:1px;background:#6a6a6a;"></div>
<div class="t" style="left:80.6px;top:212.2px;font-size:10.4px;color:#ababab;font-weight:normal;font-family:'Liberation Sans', sans-serif;line-height:1;white-space:nowrap;">48</div>
<div style="left:57.5px;top:231.1px;width:3.5px;height:1px;background:#6a6a6a;"></div>
<div class="t" style="left:80.6px;top:227.8px;font-size:10.4px;color:#ababab;font-weight:normal;font-family:'Liberation Sans', sans-serif;line-height:1;white-space:nowrap;">54</div>
<div style="left:57.5px;top:245.1px;width:3.5px;height:1px;background:#6a6a6a;"></div>
<div class="t" style="left:80.6px;top:241.8px;font-size:10.4px;color:#ababab;font-weight:normal;font-family:'Liberation Sans', sans-serif;line-height:1;white-space:nowrap;">60</div>
<div style="left:57.5px;top:256px;width:3.5px;height:1px;background:#6a6a6a;"></div>
<svg style="left:11px;top:161.7px;" width="32" height="36" viewBox="0 0 32 36"><path d="M11.8 1.3 H20 L15.9 5.3 Z" fill="#141414"/><path d="M8.5 32.8 A13.5 13.5 0 0 1 13.66 8.3 M18.34 8.3 A13.5 13.5 0 0 1 23.5 32.8" fill="none" stroke="#141414" stroke-width="2.3"/><path d="M16 7.5 V22" stroke="#141414" stroke-width="2"/></svg>
<div style="left:14.4px;top:199.7px;width:24px;height:23.3px;background:#f9a658;border-radius:1px;"></div>
<div class="t" style="left:14.4px;top:205.2px;font-size:14px;color:#111;font-weight:bold;font-family:'Liberation Sans', sans-serif;line-height:1;white-space:nowrap;width:24px;text-align:center;">1</div>
<div style="left:14.4px;top:228.2px;width:24px;height:13.7px;background:#1f1f1f;border-radius:1px;"></div>
<div class="t" style="left:14.4px;top:230px;font-size:11.5px;color:#d2d2d2;font-weight:normal;font-family:'Liberation Sans', sans-serif;line-height:1;white-space:nowrap;width:24px;text-align:center;">S</div>
<div style="left:14.4px;top:247px;width:24px;height:13.3px;background:#1f1f1f;border-radius:1px;"></div>
<svg style="left:21.4px;top:248.6px;" width="10" height="10" viewBox="0 0 10 10"><circle cx="5" cy="5" r="4.4" fill="#d2d2d2"/><path d="M6 1.6 V5.6 Q6 7.2 4.4 7.2 H3.2" stroke="#1f1f1f" stroke-width="1.3" fill="none"/></svg>
</div>
<div style="left:113px;top:625.8px;width:101px;height:18.3px;background:#94a7ff;"></div>
<div class="t" style="left:116.5px;top:629.8px;font-size:11px;color:rgba(0,0,0,0.78);font-weight:bold;font-family:'Liberation Sans', sans-serif;line-height:1;white-space:nowrap;">Breaks</div>
<div style="left:113px;top:644px;width:101px;height:1.5px;background:#262626;"></div>
<div style="left:113px;top:914px;width:101px;height:6.5px;background:#94a7ff;border-radius:0;"></div>
<div style="left:113px;top:645px;width:101px;height:268px;overflow:hidden;">
<div style="left:7.6px;top:7px;width:37.4px;height:13.6px;background:#252525;border-radius:7px;border:1px solid #1a1a1a;"></div>
<div class="t" style="left:7.6px;top:9px;font-size:11.5px;color:#d8d8d8;font-weight:normal;font-family:'Liberation Sans', sans-serif;line-height:1;white-space:nowrap;width:37.4px;text-align:center;">-10.2</div>
<div style="left:7.6px;top:26.3px;width:37.4px;height:13.5px;background:#252525;border-radius:1px;border:1px solid #1a1a1a;"></div>
<div class="t" style="left:7.6px;top:28.1px;font-size:11.5px;color:#d8d8d8;font-weight:normal;font-family:'Liberation Sans', sans-serif;line-height:1;white-space:nowrap;width:37.4px;text-align:center;">-9.4</div>
<svg style="left:49.8px;top:64.5px;" width="12.5" height="14" viewBox="0 0 12.5 14"><path d="M0 0 L12.2 7 L0 14 Z" fill="#b4b4b4"/></svg>
<div style="left:63.5px;top:6.5px;width:13.3px;height:254px;background:#1c1c1c;border-radius:2px;"></div>
<div style="left:64.5px;top:76px;width:5px;height:14px;background:#a2a818;"></div>
<div style="left:64.5px;top:90px;width:5px;height:15px;background:#6a9a28;"></div>
<div style="left:64.5px;top:105px;width:5px;height:32.7px;background:#13a844;"></div>
<div style="left:64.5px;top:137.7px;width:5px;height:122.3px;background:#19ec5c;"></div>
<div style="left:70.8px;top:76px;width:5px;height:14px;background:#a2a818;"></div>
<div style="left:70.8px;top:90px;width:5px;height:15px;background:#6a9a28;"></div>
<div style="left:70.8px;top:105px;width:5px;height:32.7px;background:#13a844;"></div>
<div style="left:70.8px;top:137.7px;width:5px;height:122.3px;background:#19ec5c;"></div>
<div style="left:64.5px;top:76px;width:5px;height:1.3px;background:#e6d020;"></div>
<div style="left:70.8px;top:76px;width:5px;height:1.3px;background:#e6d020;"></div>
<div style="left:69.7px;top:7px;width:0.9px;height:253px;background:#4a4a4a;"></div>
<div style="left:64px;top:32.3px;width:12.3px;height:1.6px;background:#858585;"></div>
<div style="left:57.5px;top:7.8px;width:3.5px;height:1px;background:#6a6a6a;"></div>
<div class="t" style="left:80.6px;top:8.2px;font-size:10.4px;color:#ababab;font-weight:normal;font-family:'Liberation Sans', sans-serif;line-height:1;white-space:nowrap;">6</div>
<div style="left:57.5px;top:32.5px;width:3.5px;height:1px;background:#6a6a6a;"></div>
<div class="t" style="left:80.6px;top:29.2px;font-size:10.4px;color:#ababab;font-weight:normal;font-family:'Liberation Sans', sans-serif;line-height:1;white-space:nowrap;">0</div>
<div style="left:57.5px;top:56.9px;width:3.5px;height:1px;background:#6a6a6a;"></div>
<div class="t" style="left:80.6px;top:53.6px;font-size:10.4px;color:#ababab;font-weight:normal;font-family:'Liberation Sans', sans-serif;line-height:1;white-space:nowrap;">6</div>
<div style="left:57.5px;top:81.5px;width:3.5px;height:1px;background:#6a6a6a;"></div>
<div class="t" style="left:80.6px;top:78.2px;font-size:10.4px;color:#ababab;font-weight:normal;font-family:'Liberation Sans', sans-serif;line-height:1;white-space:nowrap;">12</div>
<div style="left:57.5px;top:106.5px;width:3.5px;height:1px;background:#6a6a6a;"></div>
<div class="t" style="left:80.6px;top:103.2px;font-size:10.4px;color:#ababab;font-weight:normal;font-family:'Liberation Sans', sans-serif;line-height:1;white-space:nowrap;">18</div>
<div style="left:57.5px;top:131.5px;width:3.5px;height:1px;background:#6a6a6a;"></div>
<div class="t" style="left:80.6px;top:128.2px;font-size:10.4px;color:#ababab;font-weight:normal;font-family:'Liberation Sans', sans-serif;line-height:1;white-space:nowrap;">24</div>
<div style="left:57.5px;top:157.9px;width:3.5px;height:1px;background:#6a6a6a;"></div>
<div class="t" style="left:80.6px;top:154.6px;font-size:10.4px;color:#ababab;font-weight:normal;font-family:'Liberation Sans', sans-serif;line-height:1;white-space:nowrap;">30</div>
<div style="left:57.5px;top:179.9px;width:3.5px;height:1px;background:#6a6a6a;"></div>
<div class="t" style="left:80.6px;top:176.6px;font-size:10.4px;color:#ababab;font-weight:normal;font-family:'Liberation Sans', sans-serif;line-height:1;white-space:nowrap;">36</div>
<div style="left:57.5px;top:199.2px;width:3.5px;height:1px;background:#6a6a6a;"></div>
<div class="t" style="left:80.6px;top:195.9px;font-size:10.4px;color:#ababab;font-weight:normal;font-family:'Liberation Sans', sans-serif;line-height:1;white-space:nowrap;">42</div>
<div style="left:57.5px;top:215.5px;width:3.5px;height:1px;background:#6a6a6a;"></div>
<div class="t" style="left:80.6px;top:212.2px;font-size:10.4px;color:#ababab;font-weight:normal;font-family:'Liberation Sans', sans-serif;line-height:1;white-space:nowrap;">48</div>
<div style="left:57.5px;top:231.1px;width:3.5px;height:1px;background:#6a6a6a;"></div>
<div class="t" style="left:80.6px;top:227.8px;font-size:10.4px;color:#ababab;font-weight:normal;font-family:'Liberation Sans', sans-serif;line-height:1;white-space:nowrap;">54</div>
<div style="left:57.5px;top:245.1px;width:3.5px;height:1px;background:#6a6a6a;"></div>
<div class="t" style="left:80.6px;top:241.8px;font-size:10.4px;color:#ababab;font-weight:normal;font-family:'Liberation Sans', sans-serif;line-height:1;white-space:nowrap;">60</div>
<div style="left:57.5px;top:256px;width:3.5px;height:1px;background:#6a6a6a;"></div>
<svg style="left:11px;top:161.7px;" width="32" height="36" viewBox="0 0 32 36"><path d="M11.8 1.3 H20 L15.9 5.3 Z" fill="#141414"/><path d="M8.5 32.8 A13.5 13.5 0 0 1 13.66 8.3 M18.34 8.3 A13.5 13.5 0 0 1 23.5 32.8" fill="none" stroke="#141414" stroke-width="2.3"/><path d="M16 7.5 V22" stroke="#141414" stroke-width="2"/></svg>
<div style="left:14.4px;top:199.7px;width:24px;height:23.3px;background:#f9a658;border-radius:1px;"></div>
<div class="t" style="left:14.4px;top:205.2px;font-size:14px;color:#111;font-weight:bold;font-family:'Liberation Sans', sans-serif;line-height:1;white-space:nowrap;width:24px;text-align:center;">2</div>
<div style="left:14.4px;top:228.2px;width:24px;height:13.7px;background:#1f1f1f;border-radius:1px;"></div>
<div class="t" style="left:14.4px;top:230px;font-size:11.5px;color:#d2d2d2;font-weight:normal;font-family:'Liberation Sans', sans-serif;line-height:1;white-space:nowrap;width:24px;text-align:center;">S</div>
<div style="left:14.4px;top:247px;width:24px;height:13.3px;background:#1f1f1f;border-radius:1px;"></div>
<svg style="left:21.4px;top:248.6px;" width="10" height="10" viewBox="0 0 10 10"><circle cx="5" cy="5" r="3.6" fill="#7a7a7a"/></svg>
</div>
<div style="left:216px;top:625.8px;width:101px;height:18.3px;background:#8dc5ff;"></div>
<div class="t" style="left:219.5px;top:629.8px;font-size:11px;color:rgba(0,0,0,0.78);font-weight:bold;font-family:'Liberation Sans', sans-serif;line-height:1;white-space:nowrap;">Percussion</div>
<svg style="left:299.5px;top:627px;" width="16" height="16" viewBox="0 0 16 16"><circle cx="8" cy="8" r="6.6" fill="none" stroke="rgba(0,0,0,0.78)" stroke-width="1.1"/><rect x="5.3" y="5.3" width="5.4" height="1.1" fill="rgba(0,0,0,0.78)"/><rect x="5.3" y="7.5" width="5.4" height="1.1" fill="rgba(0,0,0,0.78)"/><rect x="5.3" y="9.7" width="5.4" height="1.1" fill="rgba(0,0,0,0.78)"/></svg>
<div style="left:216px;top:644px;width:101px;height:1.5px;background:#262626;"></div>
<div style="left:216px;top:914px;width:101px;height:6.5px;background:#8dc5ff;border-radius:0;"></div>
<div style="left:216px;top:645px;width:101px;height:268px;overflow:hidden;">
<div style="left:7.6px;top:7px;width:37.4px;height:13.6px;background:#252525;border-radius:7px;border:1px solid #1a1a1a;"></div>
<div class="t" style="left:7.6px;top:9px;font-size:11.5px;color:#d8d8d8;font-weight:normal;font-family:'Liberation Sans', sans-serif;line-height:1;white-space:nowrap;width:37.4px;text-align:center;">-21.2</div>
<div style="left:7.6px;top:26.3px;width:37.4px;height:13.5px;background:#252525;border-radius:1px;border:1px solid #1a1a1a;"></div>
<div class="t" style="left:7.6px;top:28.1px;font-size:11.5px;color:#d8d8d8;font-weight:normal;font-family:'Liberation Sans', sans-serif;line-height:1;white-space:nowrap;width:37.4px;text-align:center;">0</div>
<svg style="left:49.8px;top:26px;" width="12.5" height="14" viewBox="0 0 12.5 14"><path d="M0 0 L12.2 7 L0 14 Z" fill="#b4b4b4"/></svg>
<div style="left:63.5px;top:6.5px;width:13.3px;height:254px;background:#1c1c1c;border-radius:2px;"></div>
<div style="left:64.5px;top:201px;width:5px;height:15px;background:#13a844;"></div>
<div style="left:64.5px;top:216px;width:5px;height:44px;background:#19ec5c;"></div>
<div style="left:70.8px;top:208px;width:5px;height:17px;background:#13a844;"></div>
<div style="left:70.8px;top:225px;width:5px;height:35px;background:#19ec5c;"></div>
<div style="left:64.5px;top:122.4px;width:5px;height:1.3px;background:#19e35a;"></div>
<div style="left:70.8px;top:159.5px;width:5px;height:1.3px;background:#19e35a;"></div>
<div style="left:69.7px;top:7px;width:0.9px;height:253px;background:#4a4a4a;"></div>
<div style="left:64px;top:32.3px;width:12.3px;height:1.6px;background:#858585;"></div>
<div style="left:57.5px;top:7.8px;width:3.5px;height:1px;background:#6a6a6a;"></div>
<div class="t" style="left:80.6px;top:8.2px;font-size:10.4px;color:#ababab;font-weight:normal;font-family:'Liberation Sans', sans-serif;line-height:1;white-space:nowrap;">6</div>
<div style="left:57.5px;top:32.5px;width:3.5px;height:1px;background:#6a6a6a;"></div>
<div class="t" style="left:80.6px;top:29.2px;font-size:10.4px;color:#ababab;font-weight:normal;font-family:'Liberation Sans', sans-serif;line-height:1;white-space:nowrap;">0</div>
<div style="left:57.5px;top:56.9px;width:3.5px;height:1px;background:#6a6a6a;"></div>
<div class="t" style="left:80.6px;top:53.6px;font-size:10.4px;color:#ababab;font-weight:normal;font-family:'Liberation Sans', sans-serif;line-height:1;white-space:nowrap;">6</div>
<div style="left:57.5px;top:81.5px;width:3.5px;height:1px;background:#6a6a6a;"></div>
<div class="t" style="left:80.6px;top:78.2px;font-size:10.4px;color:#ababab;font-weight:normal;font-family:'Liberation Sans', sans-serif;line-height:1;white-space:nowrap;">12</div>
<div style="left:57.5px;top:106.5px;width:3.5px;height:1px;background:#6a6a6a;"></div>
<div class="t" style="left:80.6px;top:103.2px;font-size:10.4px;color:#ababab;font-weight:normal;font-family:'Liberation Sans', sans-serif;line-height:1;white-space:nowrap;">18</div>
<div style="left:57.5px;top:131.5px;width:3.5px;height:1px;background:#6a6a6a;"></div>
<div class="t" style="left:80.6px;top:128.2px;font-size:10.4px;color:#ababab;font-weight:normal;font-family:'Liberation Sans', sans-serif;line-height:1;white-space:nowrap;">24</div>
<div style="left:57.5px;top:157.9px;width:3.5px;height:1px;background:#6a6a6a;"></div>
<div class="t" style="left:80.6px;top:154.6px;font-size:10.4px;color:#ababab;font-weight:normal;font-family:'Liberation Sans', sans-serif;line-height:1;white-space:nowrap;">30</div>
<div style="left:57.5px;top:179.9px;width:3.5px;height:1px;background:#6a6a6a;"></div>
<div class="t" style="left:80.6px;top:176.6px;font-size:10.4px;color:#ababab;font-weight:normal;font-family:'Liberation Sans', sans-serif;line-height:1;white-space:nowrap;">36</div>
<div style="left:57.5px;top:199.2px;width:3.5px;height:1px;background:#6a6a6a;"></div>
<div class="t" style="left:80.6px;top:195.9px;font-size:10.4px;color:#ababab;font-weight:normal;font-family:'Liberation Sans', sans-serif;line-height:1;white-space:nowrap;">42</div>
<div style="left:57.5px;top:215.5px;width:3.5px;height:1px;background:#6a6a6a;"></div>
<div class="t" style="left:80.6px;top:212.2px;font-size:10.4px;color:#ababab;font-weight:normal;font-family:'Liberation Sans', sans-serif;line-height:1;white-space:nowrap;">48</div>
<div style="left:57.5px;top:231.1px;width:3.5px;height:1px;background:#6a6a6a;"></div>
<div class="t" style="left:80.6px;top:227.8px;font-size:10.4px;color:#ababab;font-weight:normal;font-family:'Liberation Sans', sans-serif;line-height:1;white-space:nowrap;">54</div>
<div style="left:57.5px;top:245.1px;width:3.5px;height:1px;background:#6a6a6a;"></div>
<div class="t" style="left:80.6px;top:241.8px;font-size:10.4px;color:#ababab;font-weight:normal;font-family:'Liberation Sans', sans-serif;line-height:1;white-space:nowrap;">60</div>
<div style="left:57.5px;top:256px;width:3.5px;height:1px;background:#6a6a6a;"></div>
<svg style="left:11px;top:161.7px;" width="32" height="36" viewBox="0 0 32 36"><path d="M11.8 1.3 H20 L15.9 5.3 Z" fill="#141414"/><path d="M8.5 32.8 A13.5 13.5 0 0 1 13.66 8.3 M18.34 8.3 A13.5 13.5 0 0 1 23.5 32.8" fill="none" stroke="#141414" stroke-width="2.3"/><path d="M16 7.5 V22" stroke="#141414" stroke-width="2"/></svg>
<div style="left:14.4px;top:199.7px;width:24px;height:23.3px;background:#f9a658;border-radius:1px;"></div>
<div class="t" style="left:14.4px;top:205.2px;font-size:14px;color:#111;font-weight:bold;font-family:'Liberation Sans', sans-serif;line-height:1;white-space:nowrap;width:24px;text-align:center;">3</div>
<div style="left:14.4px;top:228.2px;width:24px;height:13.7px;background:#1f1f1f;border-radius:1px;"></div>
<div class="t" style="left:14.4px;top:230px;font-size:11.5px;color:#d2d2d2;font-weight:normal;font-family:'Liberation Sans', sans-serif;line-height:1;white-space:nowrap;width:24px;text-align:center;">S</div>
</div>
<div style="left:319px;top:645px;width:101px;height:268px;background:#454545;"></div>
<div style="left:319px;top:625.8px;width:101px;height:18.3px;background:#5cffe4;"></div>
<div class="t" style="left:322.5px;top:629.8px;font-size:11px;color:rgba(0,0,0,0.78);font-weight:bold;font-family:'Liberation Sans', sans-serif;line-height:1;white-space:nowrap;">Bass</div>
<div style="left:319px;top:644px;width:101px;height:1.5px;background:#262626;"></div>
<div style="left:319px;top:914px;width:101px;height:6.5px;background:#5cffe4;border-radius:0;"></div>
<div style="left:319px;top:645px;width:101px;height:268px;overflow:hidden;">
<div style="left:7.6px;top:7px;width:37.4px;height:13.6px;background:#252525;border-radius:7px;border:1px solid #1a1a1a;"></div>
<div class="t" style="left:7.6px;top:9px;font-size:11.5px;color:#d8d8d8;font-weight:normal;font-family:'Liberation Sans', sans-serif;line-height:1;white-space:nowrap;width:37.4px;text-align:center;">-10.8</div>
<div style="left:7.6px;top:26.3px;width:37.4px;height:13.5px;background:#252525;border-radius:1px;border:1px solid #1a1a1a;"></div>
<div class="t" style="left:7.6px;top:28.1px;font-size:11.5px;color:#d8d8d8;font-weight:normal;font-family:'Liberation Sans', sans-serif;line-height:1;white-space:nowrap;width:37.4px;text-align:center;">-7.7</div>
<svg style="left:49.8px;top:59px;" width="12.5" height="14" viewBox="0 0 12.5 14"><path d="M0 0 L12.2 7 L0 14 Z" fill="#b4b4b4"/></svg>
<div style="left:63.5px;top:6.5px;width:13.3px;height:254px;background:#1c1c1c;border-radius:2px;"></div>
<div style="left:64.5px;top:120.4px;width:5px;height:139.6px;background:#19ec5c;"></div>
<div style="left:70.8px;top:120.4px;width:5px;height:139.6px;background:#19ec5c;"></div>
<div style="left:64.5px;top:78.8px;width:5px;height:1.3px;background:#e6d020;"></div>
<div style="left:70.8px;top:78.3px;width:5px;height:1.3px;background:#e6d020;"></div>
<div style="left:69.7px;top:7px;width:0.9px;height:253px;background:#4a4a4a;"></div>
<div style="left:64px;top:32.3px;width:12.3px;height:1.6px;background:#858585;"></div>
<div style="left:57.5px;top:7.8px;width:3.5px;height:1px;background:#6a6a6a;"></div>
<div class="t" style="left:80.6px;top:8.2px;font-size:10.4px;color:#ababab;font-weight:normal;font-family:'Liberation Sans', sans-serif;line-height:1;white-space:nowrap;">6</div>
<div style="left:57.5px;top:32.5px;width:3.5px;height:1px;background:#6a6a6a;"></div>
<div class="t" style="left:80.6px;top:29.2px;font-size:10.4px;color:#ababab;font-weight:normal;font-family:'Liberation Sans', sans-serif;line-height:1;white-space:nowrap;">0</div>
<div style="left:57.5px;top:56.9px;width:3.5px;height:1px;background:#6a6a6a;"></div>
<div class="t" style="left:80.6px;top:53.6px;font-size:10.4px;color:#ababab;font-weight:normal;font-family:'Liberation Sans', sans-serif;line-height:1;white-space:nowrap;">6</div>
<div style="left:57.5px;top:81.5px;width:3.5px;height:1px;background:#6a6a6a;"></div>
<div class="t" style="left:80.6px;top:78.2px;font-size:10.4px;color:#ababab;font-weight:normal;font-family:'Liberation Sans', sans-serif;line-height:1;white-space:nowrap;">12</div>
<div style="left:57.5px;top:106.5px;width:3.5px;height:1px;background:#6a6a6a;"></div>
<div class="t" style="left:80.6px;top:103.2px;font-size:10.4px;color:#ababab;font-weight:normal;font-family:'Liberation Sans', sans-serif;line-height:1;white-space:nowrap;">18</div>
<div style="left:57.5px;top:131.5px;width:3.5px;height:1px;background:#6a6a6a;"></div>
<div class="t" style="left:80.6px;top:128.2px;font-size:10.4px;color:#ababab;font-weight:normal;font-family:'Liberation Sans', sans-serif;line-height:1;white-space:nowrap;">24</div>
<div style="left:57.5px;top:157.9px;width:3.5px;height:1px;background:#6a6a6a;"></div>
<div class="t" style="left:80.6px;top:154.6px;font-size:10.4px;color:#ababab;font-weight:normal;font-family:'Liberation Sans', sans-serif;line-height:1;white-space:nowrap;">30</div>
<div style="left:57.5px;top:179.9px;width:3.5px;height:1px;background:#6a6a6a;"></div>
<div class="t" style="left:80.6px;top:176.6px;font-size:10.4px;color:#ababab;font-weight:normal;font-family:'Liberation Sans', sans-serif;line-height:1;white-space:nowrap;">36</div>
<div style="left:57.5px;top:199.2px;width:3.5px;height:1px;background:#6a6a6a;"></div>
<div class="t" style="left:80.6px;top:195.9px;font-size:10.4px;color:#ababab;font-weight:normal;font-family:'Liberation Sans', sans-serif;line-height:1;white-space:nowrap;">42</div>
<div style="left:57.5px;top:215.5px;width:3.5px;height:1px;background:#6a6a6a;"></div>
<div class="t" style="left:80.6px;top:212.2px;font-size:10.4px;color:#ababab;font-weight:normal;font-family:'Liberation Sans', sans-serif;line-height:1;white-space:nowrap;">48</div>
<div style="left:57.5px;top:231.1px;width:3.5px;height:1px;background:#6a6a6a;"></div>
<div class="t" style="left:80.6px;top:227.8px;font-size:10.4px;color:#ababab;font-weight:normal;font-family:'Liberation Sans', sans-serif;line-height:1;white-space:nowrap;">54</div>
<div style="left:57.5px;top:245.1px;width:3.5px;height:1px;background:#6a6a6a;"></div>
<div class="t" style="left:80.6px;top:241.8px;font-size:10.4px;color:#ababab;font-weight:normal;font-family:'Liberation Sans', sans-serif;line-height:1;white-space:nowrap;">60</div>
<div style="left:57.5px;top:256px;width:3.5px;height:1px;background:#6a6a6a;"></div>
<svg style="left:11px;top:161.7px;" width="32" height="36" viewBox="0 0 32 36"><path d="M11.8 1.3 H20 L15.9 5.3 Z" fill="#141414"/><path d="M8.5 32.8 A13.5 13.5 0 0 1 13.66 8.3 M18.34 8.3 A13.5 13.5 0 0 1 23.5 32.8" fill="none" stroke="#141414" stroke-width="2.3"/><path d="M16 7.5 V22" stroke="#141414" stroke-width="2"/></svg>
<div style="left:14.4px;top:199.7px;width:24px;height:23.3px;background:#f9a658;border-radius:1px;"></div>
<div class="t" style="left:14.4px;top:205.2px;font-size:14px;color:#111;font-weight:bold;font-family:'Liberation Sans', sans-serif;line-height:1;white-space:nowrap;width:24px;text-align:center;">8</div>
<div style="left:14.4px;top:228.2px;width:24px;height:13.7px;background:#1f1f1f;border-radius:1px;"></div>
<div class="t" style="left:14.4px;top:230px;font-size:11.5px;color:#d2d2d2;font-weight:normal;font-family:'Liberation Sans', sans-serif;line-height:1;white-space:nowrap;width:24px;text-align:center;">S</div>
<div style="left:14.4px;top:247px;width:24px;height:13.3px;background:#1f1f1f;border-radius:1px;"></div>
<svg style="left:21.4px;top:248.6px;" width="10" height="10" viewBox="0 0 10 10"><circle cx="5" cy="5" r="4.4" fill="#d2d2d2"/><path d="M6 1.6 V5.6 Q6 7.2 4.4 7.2 H3.2" stroke="#1f1f1f" stroke-width="1.3" fill="none"/></svg>
</div>
<div style="left:422px;top:625.8px;width:101px;height:18.3px;background:#5cffe4;"></div>
<div class="t" style="left:425.5px;top:629.8px;font-size:11px;color:rgba(0,0,0,0.78);font-weight:bold;font-family:'Liberation Sans', sans-serif;line-height:1;white-space:nowrap;">Bass Drop</div>
<svg style="left:505.5px;top:627px;" width="16" height="16" viewBox="0 0 16 16"><circle cx="8" cy="8" r="6.6" fill="none" stroke="rgba(0,0,0,0.78)" stroke-width="1.1"/><path d="M4.2 6 H11.8 L8 11 Z" fill="rgba(0,0,0,0.78)"/></svg>
<div style="left:422px;top:644px;width:101px;height:1.5px;background:#262626;"></div>
<div style="left:422px;top:914px;width:101px;height:6.5px;background:#5cffe4;border-radius:0;"></div>
<div style="left:422px;top:645px;width:101px;height:268px;overflow:hidden;">
<div style="left:7.6px;top:7px;width:37.4px;height:13.6px;background:#252525;border-radius:7px;border:1px solid #1a1a1a;"></div>
<div class="t" style="left:7.6px;top:9px;font-size:11.5px;color:#d8d8d8;font-weight:normal;font-family:'Liberation Sans', sans-serif;line-height:1;white-space:nowrap;width:37.4px;text-align:center;">&#8722;<span style="font-size:15px;line-height:0;position:relative;top:0.5px">&#8734;</span></div>
<div style="left:7.6px;top:26.3px;width:37.4px;height:13.5px;background:#252525;border-radius:1px;border:1px solid #1a1a1a;"></div>
<div class="t" style="left:7.6px;top:28.1px;font-size:11.5px;color:#d8d8d8;font-weight:normal;font-family:'Liberation Sans', sans-serif;line-height:1;white-space:nowrap;width:37.4px;text-align:center;">-0.2</div>
<svg style="left:49.8px;top:26.5px;" width="12.5" height="14" viewBox="0 0 12.5 14"><path d="M0 0 L12.2 7 L0 14 Z" fill="#b4b4b4"/></svg>
<div style="left:63.5px;top:6.5px;width:13.3px;height:254px;background:#1c1c1c;border-radius:2px;"></div>
<div style="left:69.7px;top:7px;width:0.9px;height:253px;background:#4a4a4a;"></div>
<div style="left:64px;top:32.3px;width:12.3px;height:1.6px;background:#858585;"></div>
<div style="left:57.5px;top:7.8px;width:3.5px;height:1px;background:#6a6a6a;"></div>
<div class="t" style="left:80.6px;top:8.2px;font-size:10.4px;color:#ababab;font-weight:normal;font-family:'Liberation Sans', sans-serif;line-height:1;white-space:nowrap;">6</div>
<div style="left:57.5px;top:32.5px;width:3.5px;height:1px;background:#6a6a6a;"></div>
<div class="t" style="left:80.6px;top:29.2px;font-size:10.4px;color:#ababab;font-weight:normal;font-family:'Liberation Sans', sans-serif;line-height:1;white-space:nowrap;">0</div>
<div style="left:57.5px;top:56.9px;width:3.5px;height:1px;background:#6a6a6a;"></div>
<div class="t" style="left:80.6px;top:53.6px;font-size:10.4px;color:#ababab;font-weight:normal;font-family:'Liberation Sans', sans-serif;line-height:1;white-space:nowrap;">6</div>
<div style="left:57.5px;top:81.5px;width:3.5px;height:1px;background:#6a6a6a;"></div>
<div class="t" style="left:80.6px;top:78.2px;font-size:10.4px;color:#ababab;font-weight:normal;font-family:'Liberation Sans', sans-serif;line-height:1;white-space:nowrap;">12</div>
<div style="left:57.5px;top:106.5px;width:3.5px;height:1px;background:#6a6a6a;"></div>
<div class="t" style="left:80.6px;top:103.2px;font-size:10.4px;color:#ababab;font-weight:normal;font-family:'Liberation Sans', sans-serif;line-height:1;white-space:nowrap;">18</div>
<div style="left:57.5px;top:131.5px;width:3.5px;height:1px;background:#6a6a6a;"></div>
<div class="t" style="left:80.6px;top:128.2px;font-size:10.4px;color:#ababab;font-weight:normal;font-family:'Liberation Sans', sans-serif;line-height:1;white-space:nowrap;">24</div>
<div style="left:57.5px;top:157.9px;width:3.5px;height:1px;background:#6a6a6a;"></div>
<div class="t" style="left:80.6px;top:154.6px;font-size:10.4px;color:#ababab;font-weight:normal;font-family:'Liberation Sans', sans-serif;line-height:1;white-space:nowrap;">30</div>
<div style="left:57.5px;top:179.9px;width:3.5px;height:1px;background:#6a6a6a;"></div>
<div class="t" style="left:80.6px;top:176.6px;font-size:10.4px;color:#ababab;font-weight:normal;font-family:'Liberation Sans', sans-serif;line-height:1;white-space:nowrap;">36</div>
<div style="left:57.5px;top:199.2px;width:3.5px;height:1px;background:#6a6a6a;"></div>
<div class="t" style="left:80.6px;top:195.9px;font-size:10.4px;color:#ababab;font-weight:normal;font-family:'Liberation Sans', sans-serif;line-height:1;white-space:nowrap;">42</div>
<div style="left:57.5px;top:215.5px;width:3.5px;height:1px;background:#6a6a6a;"></div>
<div class="t" style="left:80.6px;top:212.2px;font-size:10.4px;color:#ababab;font-weight:normal;font-family:'Liberation Sans', sans-serif;line-height:1;white-space:nowrap;">48</div>
<div style="left:57.5px;top:231.1px;width:3.5px;height:1px;background:#6a6a6a;"></div>
<div class="t" style="left:80.6px;top:227.8px;font-size:10.4px;color:#ababab;font-weight:normal;font-family:'Liberation Sans', sans-serif;line-height:1;white-space:nowrap;">54</div>
<div style="left:57.5px;top:245.1px;width:3.5px;height:1px;background:#6a6a6a;"></div>
<div class="t" style="left:80.6px;top:241.8px;font-size:10.4px;color:#ababab;font-weight:normal;font-family:'Liberation Sans', sans-serif;line-height:1;white-space:nowrap;">60</div>
<div style="left:57.5px;top:256px;width:3.5px;height:1px;background:#6a6a6a;"></div>
<svg style="left:11px;top:161.7px;" width="32" height="36" viewBox="0 0 32 36"><path d="M11.8 1.3 H20 L15.9 5.3 Z" fill="#141414"/><path d="M8.5 32.8 A13.5 13.5 0 0 1 13.66 8.3 M18.34 8.3 A13.5 13.5 0 0 1 23.5 32.8" fill="none" stroke="#141414" stroke-width="2.3"/><path d="M16 7.5 V22" stroke="#141414" stroke-width="2"/></svg>
<div style="left:14.4px;top:199.7px;width:24px;height:23.3px;background:#f9a658;border-radius:1px;"></div>
<div class="t" style="left:14.4px;top:205.2px;font-size:14px;color:#111;font-weight:bold;font-family:'Liberation Sans', sans-serif;line-height:1;white-space:nowrap;width:24px;text-align:center;">9</div>
<div style="left:14.4px;top:228.2px;width:24px;height:13.7px;background:#1f1f1f;border-radius:1px;"></div>
<div class="t" style="left:14.4px;top:230px;font-size:11.5px;color:#d2d2d2;font-weight:normal;font-family:'Liberation Sans', sans-serif;line-height:1;white-space:nowrap;width:24px;text-align:center;">S</div>
<div style="left:14.4px;top:247px;width:24px;height:13.3px;background:#1f1f1f;border-radius:1px;"></div>
<svg style="left:21.4px;top:248.6px;" width="10" height="10" viewBox="0 0 10 10"><circle cx="5" cy="5" r="4.4" fill="#d2d2d2"/><path d="M6 1.6 V5.6 Q6 7.2 4.4 7.2 H3.2" stroke="#1f1f1f" stroke-width="1.3" fill="none"/></svg>
</div>
<div style="left:525px;top:625.8px;width:101.5px;height:18.3px;background:#eaf9aa;"></div>
<div class="t" style="left:528.5px;top:629.8px;font-size:11px;color:rgba(0,0,0,0.78);font-weight:bold;font-family:'Liberation Sans', sans-serif;line-height:1;white-space:nowrap;">Synth Riser</div>
<svg style="left:609px;top:627px;" width="16" height="16" viewBox="0 0 16 16"><circle cx="8" cy="8" r="6.6" fill="none" stroke="rgba(0,0,0,0.78)" stroke-width="1.1"/><path d="M4.2 6 H11.8 L8 11 Z" fill="rgba(0,0,0,0.78)"/></svg>
<div style="left:525px;top:644px;width:101.5px;height:1.5px;background:#262626;"></div>
<div style="left:525px;top:914px;width:101.5px;height:6.5px;background:#eaf9aa;border-radius:0;"></div>
<div style="left:525px;top:645px;width:101.5px;height:268px;overflow:hidden;">
<div style="left:7.6px;top:7px;width:37.4px;height:13.6px;background:#252525;border-radius:7px;border:1px solid #1a1a1a;"></div>
<div class="t" style="left:7.6px;top:9px;font-size:11.5px;color:#d8d8d8;font-weight:normal;font-family:'Liberation Sans', sans-serif;line-height:1;white-space:nowrap;width:37.4px;text-align:center;">-28.2</div>
<div style="left:7.6px;top:26.3px;width:37.4px;height:13.5px;background:#252525;border-radius:1px;border:1px solid #1a1a1a;"></div>
<div class="t" style="left:7.6px;top:28.1px;font-size:11.5px;color:#d8d8d8;font-weight:normal;font-family:'Liberation Sans', sans-serif;line-height:1;white-space:nowrap;width:37.4px;text-align:center;">-18.0</div>
<svg style="left:49.8px;top:101.3px;" width="12.5" height="14" viewBox="0 0 12.5 14"><path d="M0 0 L12.2 7 L0 14 Z" fill="#b4b4b4"/></svg>
<div style="left:63.5px;top:6.5px;width:13.3px;height:254px;background:#1c1c1c;border-radius:2px;"></div>
<div style="left:64.5px;top:168px;width:5px;height:17px;background:#13a844;"></div>
<div style="left:64.5px;top:185px;width:5px;height:75px;background:#19ec5c;"></div>
<div style="left:70.8px;top:164.5px;width:5px;height:20.5px;background:#13a844;"></div>
<div style="left:70.8px;top:185px;width:5px;height:75px;background:#19ec5c;"></div>
<div style="left:64.5px;top:154px;width:5px;height:1.3px;background:#19e35a;"></div>
<div style="left:70.8px;top:151px;width:5px;height:1.3px;background:#19e35a;"></div>
<div style="left:69.7px;top:7px;width:0.9px;height:253px;background:#4a4a4a;"></div>
<div style="left:64px;top:32.3px;width:12.3px;height:1.6px;background:#858585;"></div>
<div style="left:57.5px;top:7.8px;width:3.5px;height:1px;background:#6a6a6a;"></div>
<div class="t" style="left:80.6px;top:8.2px;font-size:10.4px;color:#ababab;font-weight:normal;font-family:'Liberation Sans', sans-serif;line-height:1;white-space:nowrap;">6</div>
<div style="left:57.5px;top:32.5px;width:3.5px;height:1px;background:#6a6a6a;"></div>
<div class="t" style="left:80.6px;top:29.2px;font-size:10.4px;color:#ababab;font-weight:normal;font-family:'Liberation Sans', sans-serif;line-height:1;white-space:nowrap;">0</div>
<div style="left:57.5px;top:56.9px;width:3.5px;height:1px;background:#6a6a6a;"></div>
<div class="t" style="left:80.6px;top:53.6px;font-size:10.4px;color:#ababab;font-weight:normal;font-family:'Liberation Sans', sans-serif;line-height:1;white-space:nowrap;">6</div>
<div style="left:57.5px;top:81.5px;width:3.5px;height:1px;background:#6a6a6a;"></div>
<div class="t" style="left:80.6px;top:78.2px;font-size:10.4px;color:#ababab;font-weight:normal;font-family:'Liberation Sans', sans-serif;line-height:1;white-space:nowrap;">12</div>
<div style="left:57.5px;top:106.5px;width:3.5px;height:1px;background:#6a6a6a;"></div>
<div class="t" style="left:80.6px;top:103.2px;font-size:10.4px;color:#ababab;font-weight:normal;font-family:'Liberation Sans', sans-serif;line-height:1;white-space:nowrap;">18</div>
<div style="left:57.5px;top:131.5px;width:3.5px;height:1px;background:#6a6a6a;"></div>
<div class="t" style="left:80.6px;top:128.2px;font-size:10.4px;color:#ababab;font-weight:normal;font-family:'Liberation Sans', sans-serif;line-height:1;white-space:nowrap;">24</div>
<div style="left:57.5px;top:157.9px;width:3.5px;height:1px;background:#6a6a6a;"></div>
<div class="t" style="left:80.6px;top:154.6px;font-size:10.4px;color:#ababab;font-weight:normal;font-family:'Liberation Sans', sans-serif;line-height:1;white-space:nowrap;">30</div>
<div style="left:57.5px;top:179.9px;width:3.5px;height:1px;background:#6a6a6a;"></div>
<div class="t" style="left:80.6px;top:176.6px;font-size:10.4px;color:#ababab;font-weight:normal;font-family:'Liberation Sans', sans-serif;line-height:1;white-space:nowrap;">36</div>
<div style="left:57.5px;top:199.2px;width:3.5px;height:1px;background:#6a6a6a;"></div>
<div class="t" style="left:80.6px;top:195.9px;font-size:10.4px;color:#ababab;font-weight:normal;font-family:'Liberation Sans', sans-serif;line-height:1;white-space:nowrap;">42</div>
<div style="left:57.5px;top:215.5px;width:3.5px;height:1px;background:#6a6a6a;"></div>
<div class="t" style="left:80.6px;top:212.2px;font-size:10.4px;color:#ababab;font-weight:normal;font-family:'Liberation Sans', sans-serif;line-height:1;white-space:nowrap;">48</div>
<div style="left:57.5px;top:231.1px;width:3.5px;height:1px;background:#6a6a6a;"></div>
<div class="t" style="left:80.6px;top:227.8px;font-size:10.4px;color:#ababab;font-weight:normal;font-family:'Liberation Sans', sans-serif;line-height:1;white-space:nowrap;">54</div>
<div style="left:57.5px;top:245.1px;width:3.5px;height:1px;background:#6a6a6a;"></div>
<div class="t" style="left:80.6px;top:241.8px;font-size:10.4px;color:#ababab;font-weight:normal;font-family:'Liberation Sans', sans-serif;line-height:1;white-space:nowrap;">60</div>
<div style="left:57.5px;top:256px;width:3.5px;height:1px;background:#6a6a6a;"></div>
<svg style="left:11px;top:161.7px;" width="32" height="36" viewBox="0 0 32 36"><path d="M11.8 1.3 H20 L15.9 5.3 Z" fill="#141414"/><path d="M8.5 32.8 A13.5 13.5 0 0 1 13.66 8.3 M18.34 8.3 A13.5 13.5 0 0 1 23.5 32.8" fill="none" stroke="#141414" stroke-width="2.3"/><path d="M16 7.5 V22" stroke="#141414" stroke-width="2"/></svg>
<div style="left:14.4px;top:199.7px;width:24px;height:23.3px;background:#f9a658;border-radius:1px;"></div>
<div class="t" style="left:14.4px;top:205.2px;font-size:14px;color:#111;font-weight:bold;font-family:'Liberation Sans', sans-serif;line-height:1;white-space:nowrap;width:24px;text-align:center;">10</div>
<div style="left:14.4px;top:228.2px;width:24px;height:13.7px;background:#1f1f1f;border-radius:1px;"></div>
<div class="t" style="left:14.4px;top:230px;font-size:11.5px;color:#d2d2d2;font-weight:normal;font-family:'Liberation Sans', sans-serif;line-height:1;white-space:nowrap;width:24px;text-align:center;">S</div>
<div style="left:14.4px;top:247px;width:24px;height:13.3px;background:#1f1f1f;border-radius:1px;"></div>
<svg style="left:21.4px;top:248.6px;" width="10" height="10" viewBox="0 0 10 10"><circle cx="5" cy="5" r="4.4" fill="#d2d2d2"/><path d="M6 1.6 V5.6 Q6 7.2 4.4 7.2 H3.2" stroke="#1f1f1f" stroke-width="1.3" fill="none"/></svg>
</div>
<div style="left:628.5px;top:625.8px;width:101.5px;height:18.3px;background:#f8f07c;"></div>
<div class="t" style="left:632px;top:629.8px;font-size:11px;color:rgba(0,0,0,0.78);font-weight:bold;font-family:'Liberation Sans', sans-serif;line-height:1;white-space:nowrap;">Keys</div>
<div style="left:628.5px;top:644px;width:101.5px;height:1.5px;background:#262626;"></div>
<div style="left:628.5px;top:914px;width:101.5px;height:6.5px;background:#f8f07c;border-radius:0;"></div>
<div style="left:628.5px;top:645px;width:101.5px;height:268px;overflow:hidden;">
<div style="left:7.6px;top:7px;width:37.4px;height:13.6px;background:#252525;border-radius:7px;border:1px solid #1a1a1a;"></div>
<div class="t" style="left:7.6px;top:9px;font-size:11.5px;color:#d8d8d8;font-weight:normal;font-family:'Liberation Sans', sans-serif;line-height:1;white-space:nowrap;width:37.4px;text-align:center;">-16.0</div>
<div style="left:7.6px;top:26.3px;width:37.4px;height:13.5px;background:#252525;border-radius:1px;border:1px solid #1a1a1a;"></div>
<div class="t" style="left:7.6px;top:28.1px;font-size:11.5px;color:#d8d8d8;font-weight:normal;font-family:'Liberation Sans', sans-serif;line-height:1;white-space:nowrap;width:37.4px;text-align:center;">-6.6</div>
<svg style="left:49.8px;top:54.3px;" width="12.5" height="14" viewBox="0 0 12.5 14"><path d="M0 0 L12.2 7 L0 14 Z" fill="#b4b4b4"/></svg>
<div style="left:63.5px;top:6.5px;width:13.3px;height:254px;background:#1c1c1c;border-radius:2px;"></div>
<div style="left:64.5px;top:256.5px;width:5px;height:3.5px;background:#19ec5c;"></div>
<div style="left:70.8px;top:256.5px;width:5px;height:3.5px;background:#19ec5c;"></div>
<div style="left:64.5px;top:122.4px;width:5px;height:1.3px;background:#19e35a;"></div>
<div style="left:70.8px;top:99.9px;width:5px;height:1.3px;background:#8cc820;"></div>
<div style="left:69.7px;top:7px;width:0.9px;height:253px;background:#4a4a4a;"></div>
<div style="left:64px;top:32.3px;width:12.3px;height:1.6px;background:#858585;"></div>
<div style="left:57.5px;top:7.8px;width:3.5px;height:1px;background:#6a6a6a;"></div>
<div class="t" style="left:80.6px;top:8.2px;font-size:10.4px;color:#ababab;font-weight:normal;font-family:'Liberation Sans', sans-serif;line-height:1;white-space:nowrap;">6</div>
<div style="left:57.5px;top:32.5px;width:3.5px;height:1px;background:#6a6a6a;"></div>
<div class="t" style="left:80.6px;top:29.2px;font-size:10.4px;color:#ababab;font-weight:normal;font-family:'Liberation Sans', sans-serif;line-height:1;white-space:nowrap;">0</div>
<div style="left:57.5px;top:56.9px;width:3.5px;height:1px;background:#6a6a6a;"></div>
<div class="t" style="left:80.6px;top:53.6px;font-size:10.4px;color:#ababab;font-weight:normal;font-family:'Liberation Sans', sans-serif;line-height:1;white-space:nowrap;">6</div>
<div style="left:57.5px;top:81.5px;width:3.5px;height:1px;background:#6a6a6a;"></div>
<div class="t" style="left:80.6px;top:78.2px;font-size:10.4px;color:#ababab;font-weight:normal;font-family:'Liberation Sans', sans-serif;line-height:1;white-space:nowrap;">12</div>
<div style="left:57.5px;top:106.5px;width:3.5px;height:1px;background:#6a6a6a;"></div>
<div class="t" style="left:80.6px;top:103.2px;font-size:10.4px;color:#ababab;font-weight:normal;font-family:'Liberation Sans', sans-serif;line-height:1;white-space:nowrap;">18</div>
<div style="left:57.5px;top:131.5px;width:3.5px;height:1px;background:#6a6a6a;"></div>
<div class="t" style="left:80.6px;top:128.2px;font-size:10.4px;color:#ababab;font-weight:normal;font-family:'Liberation Sans', sans-serif;line-height:1;white-space:nowrap;">24</div>
<div style="left:57.5px;top:157.9px;width:3.5px;height:1px;background:#6a6a6a;"></div>
<div class="t" style="left:80.6px;top:154.6px;font-size:10.4px;color:#ababab;font-weight:normal;font-family:'Liberation Sans', sans-serif;line-height:1;white-space:nowrap;">30</div>
<div style="left:57.5px;top:179.9px;width:3.5px;height:1px;background:#6a6a6a;"></div>
<div class="t" style="left:80.6px;top:176.6px;font-size:10.4px;color:#ababab;font-weight:normal;font-family:'Liberation Sans', sans-serif;line-height:1;white-space:nowrap;">36</div>
<div style="left:57.5px;top:199.2px;width:3.5px;height:1px;background:#6a6a6a;"></div>
<div class="t" style="left:80.6px;top:195.9px;font-size:10.4px;color:#ababab;font-weight:normal;font-family:'Liberation Sans', sans-serif;line-height:1;white-space:nowrap;">42</div>
<div style="left:57.5px;top:215.5px;width:3.5px;height:1px;background:#6a6a6a;"></div>
<div class="t" style="left:80.6px;top:212.2px;font-size:10.4px;color:#ababab;font-weight:normal;font-family:'Liberation Sans', sans-serif;line-height:1;white-space:nowrap;">48</div>
<div style="left:57.5px;top:231.1px;width:3.5px;height:1px;background:#6a6a6a;"></div>
<div class="t" style="left:80.6px;top:227.8px;font-size:10.4px;color:#ababab;font-weight:normal;font-family:'Liberation Sans', sans-serif;line-height:1;white-space:nowrap;">54</div>
<div style="left:57.5px;top:245.1px;width:3.5px;height:1px;background:#6a6a6a;"></div>
<div class="t" style="left:80.6px;top:241.8px;font-size:10.4px;color:#ababab;font-weight:normal;font-family:'Liberation Sans', sans-serif;line-height:1;white-space:nowrap;">60</div>
<div style="left:57.5px;top:256px;width:3.5px;height:1px;background:#6a6a6a;"></div>
<svg style="left:11px;top:161.7px;" width="32" height="36" viewBox="0 0 32 36"><path d="M11.8 1.3 H20 L15.9 5.3 Z" fill="#141414"/><path d="M8.5 32.8 A13.5 13.5 0 0 1 13.66 8.3 M18.34 8.3 A13.5 13.5 0 0 1 23.5 32.8" fill="none" stroke="#141414" stroke-width="2.3"/><path d="M16 7.5 V22" stroke="#141414" stroke-width="2"/></svg>
<div style="left:14.4px;top:199.7px;width:24px;height:23.3px;background:#f9a658;border-radius:1px;"></div>
<div class="t" style="left:14.4px;top:205.2px;font-size:14px;color:#111;font-weight:bold;font-family:'Liberation Sans', sans-serif;line-height:1;white-space:nowrap;width:24px;text-align:center;">11</div>
<div style="left:14.4px;top:228.2px;width:24px;height:13.7px;background:#1f1f1f;border-radius:1px;"></div>
<div class="t" style="left:14.4px;top:230px;font-size:11.5px;color:#d2d2d2;font-weight:normal;font-family:'Liberation Sans', sans-serif;line-height:1;white-space:nowrap;width:24px;text-align:center;">S</div>
<div style="left:14.4px;top:247px;width:24px;height:13.3px;background:#1f1f1f;border-radius:1px;"></div>
<svg style="left:21.4px;top:248.6px;" width="10" height="10" viewBox="0 0 10 10"><circle cx="5" cy="5" r="4.4" fill="#d2d2d2"/><path d="M6 1.6 V5.6 Q6 7.2 4.4 7.2 H3.2" stroke="#1f1f1f" stroke-width="1.3" fill="none"/></svg>
</div>
<div style="left:732px;top:625.8px;width:101px;height:18.3px;background:#ffa676;"></div>
<div class="t" style="left:735.5px;top:629.8px;font-size:11px;color:rgba(0,0,0,0.78);font-weight:bold;font-family:'Liberation Sans', sans-serif;line-height:1;white-space:nowrap;">Pads</div>
<svg style="left:815.5px;top:627px;" width="16" height="16" viewBox="0 0 16 16"><circle cx="8" cy="8" r="6.6" fill="none" stroke="rgba(0,0,0,0.78)" stroke-width="1.1"/><rect x="5.3" y="5.3" width="5.4" height="1.1" fill="rgba(0,0,0,0.78)"/><rect x="5.3" y="7.5" width="5.4" height="1.1" fill="rgba(0,0,0,0.78)"/><rect x="5.3" y="9.7" width="5.4" height="1.1" fill="rgba(0,0,0,0.78)"/></svg>
<div style="left:732px;top:644px;width:101px;height:1.5px;background:#262626;"></div>
<div style="left:732px;top:914px;width:101px;height:6.5px;background:#ffa676;border-radius:0;"></div>
<div style="left:732px;top:645px;width:101px;height:268px;overflow:hidden;">
<div style="left:7.6px;top:7px;width:37.4px;height:13.6px;background:#252525;border-radius:7px;border:1px solid #1a1a1a;"></div>
<div class="t" style="left:7.6px;top:9px;font-size:11.5px;color:#d8d8d8;font-weight:normal;font-family:'Liberation Sans', sans-serif;line-height:1;white-space:nowrap;width:37.4px;text-align:center;">-14.4</div>
<div style="left:7.6px;top:26.3px;width:37.4px;height:13.5px;background:#252525;border-radius:1px;border:1px solid #1a1a1a;"></div>
<div class="t" style="left:7.6px;top:28.1px;font-size:11.5px;color:#d8d8d8;font-weight:normal;font-family:'Liberation Sans', sans-serif;line-height:1;white-space:nowrap;width:37.4px;text-align:center;">0</div>
<svg style="left:49.8px;top:26px;" width="12.5" height="14" viewBox="0 0 12.5 14"><path d="M0 0 L12.2 7 L0 14 Z" fill="#b4b4b4"/></svg>
<div style="left:63.5px;top:6.5px;width:13.3px;height:254px;background:#1c1c1c;border-radius:2px;"></div>
<div style="left:64.5px;top:181px;width:5px;height:79px;background:#19ec5c;"></div>
<div style="left:70.8px;top:176px;width:5px;height:84px;background:#19ec5c;"></div>
<div style="left:64.5px;top:93.4px;width:5px;height:1.3px;background:#d8e020;"></div>
<div style="left:70.8px;top:101.3px;width:5px;height:1.3px;background:#a8d020;"></div>
<div style="left:69.7px;top:7px;width:0.9px;height:253px;background:#4a4a4a;"></div>
<div style="left:64px;top:32.3px;width:12.3px;height:1.6px;background:#858585;"></div>
<div style="left:57.5px;top:7.8px;width:3.5px;height:1px;background:#6a6a6a;"></div>
<div class="t" style="left:80.6px;top:8.2px;font-size:10.4px;color:#ababab;font-weight:normal;font-family:'Liberation Sans', sans-serif;line-height:1;white-space:nowrap;">6</div>
<div style="left:57.5px;top:32.5px;width:3.5px;height:1px;background:#6a6a6a;"></div>
<div class="t" style="left:80.6px;top:29.2px;font-size:10.4px;color:#ababab;font-weight:normal;font-family:'Liberation Sans', sans-serif;line-height:1;white-space:nowrap;">0</div>
<div style="left:57.5px;top:56.9px;width:3.5px;height:1px;background:#6a6a6a;"></div>
<div class="t" style="left:80.6px;top:53.6px;font-size:10.4px;color:#ababab;font-weight:normal;font-family:'Liberation Sans', sans-serif;line-height:1;white-space:nowrap;">6</div>
<div style="left:57.5px;top:81.5px;width:3.5px;height:1px;background:#6a6a6a;"></div>
<div class="t" style="left:80.6px;top:78.2px;font-size:10.4px;color:#ababab;font-weight:normal;font-family:'Liberation Sans', sans-serif;line-height:1;white-space:nowrap;">12</div>
<div style="left:57.5px;top:106.5px;width:3.5px;height:1px;background:#6a6a6a;"></div>
<div class="t" style="left:80.6px;top:103.2px;font-size:10.4px;color:#ababab;font-weight:normal;font-family:'Liberation Sans', sans-serif;line-height:1;white-space:nowrap;">18</div>
<div style="left:57.5px;top:131.5px;width:3.5px;height:1px;background:#6a6a6a;"></div>
<div class="t" style="left:80.6px;top:128.2px;font-size:10.4px;color:#ababab;font-weight:normal;font-family:'Liberation Sans', sans-serif;line-height:1;white-space:nowrap;">24</div>
<div style="left:57.5px;top:157.9px;width:3.5px;height:1px;background:#6a6a6a;"></div>
<div class="t" style="left:80.6px;top:154.6px;font-size:10.4px;color:#ababab;font-weight:normal;font-family:'Liberation Sans', sans-serif;line-height:1;white-space:nowrap;">30</div>
<div style="left:57.5px;top:179.9px;width:3.5px;height:1px;background:#6a6a6a;"></div>
<div class="t" style="left:80.6px;top:176.6px;font-size:10.4px;color:#ababab;font-weight:normal;font-family:'Liberation Sans', sans-serif;line-height:1;white-space:nowrap;">36</div>
<div style="left:57.5px;top:199.2px;width:3.5px;height:1px;background:#6a6a6a;"></div>
<div class="t" style="left:80.6px;top:195.9px;font-size:10.4px;color:#ababab;font-weight:normal;font-family:'Liberation Sans', sans-serif;line-height:1;white-space:nowrap;">42</div>
<div style="left:57.5px;top:215.5px;width:3.5px;height:1px;background:#6a6a6a;"></div>
<div class="t" style="left:80.6px;top:212.2px;font-size:10.4px;color:#ababab;font-weight:normal;font-family:'Liberation Sans', sans-serif;line-height:1;white-space:nowrap;">48</div>
<div style="left:57.5px;top:231.1px;width:3.5px;height:1px;background:#6a6a6a;"></div>
<div class="t" style="left:80.6px;top:227.8px;font-size:10.4px;color:#ababab;font-weight:normal;font-family:'Liberation Sans', sans-serif;line-height:1;white-space:nowrap;">54</div>
<div style="left:57.5px;top:245.1px;width:3.5px;height:1px;background:#6a6a6a;"></div>
<div class="t" style="left:80.6px;top:241.8px;font-size:10.4px;color:#ababab;font-weight:normal;font-family:'Liberation Sans', sans-serif;line-height:1;white-space:nowrap;">60</div>
<div style="left:57.5px;top:256px;width:3.5px;height:1px;background:#6a6a6a;"></div>
<svg style="left:11px;top:161.7px;" width="32" height="36" viewBox="0 0 32 36"><path d="M11.8 1.3 H20 L15.9 5.3 Z" fill="#141414"/><path d="M8.5 32.8 A13.5 13.5 0 0 1 13.66 8.3 M18.34 8.3 A13.5 13.5 0 0 1 23.5 32.8" fill="none" stroke="#141414" stroke-width="2.3"/><path d="M16 7.5 V22" stroke="#141414" stroke-width="2"/></svg>
<div style="left:14.4px;top:199.7px;width:24px;height:23.3px;background:#f9a658;border-radius:1px;"></div>
<div class="t" style="left:14.4px;top:205.2px;font-size:14px;color:#111;font-weight:bold;font-family:'Liberation Sans', sans-serif;line-height:1;white-space:nowrap;width:24px;text-align:center;">12</div>
<div style="left:14.4px;top:228.2px;width:24px;height:13.7px;background:#1f1f1f;border-radius:1px;"></div>
<div class="t" style="left:14.4px;top:230px;font-size:11.5px;color:#d2d2d2;font-weight:normal;font-family:'Liberation Sans', sans-serif;line-height:1;white-space:nowrap;width:24px;text-align:center;">S</div>
</div>
<div style="left:835px;top:625.8px;width:101px;height:18.3px;background:#ff93a4;"></div>
<div class="t" style="left:838.5px;top:629.8px;font-size:11px;color:rgba(0,0,0,0.78);font-weight:bold;font-family:'Liberation Sans', sans-serif;line-height:1;white-space:nowrap;">Ambience</div>
<div style="left:835px;top:644px;width:101px;height:1.5px;background:#262626;"></div>
<div style="left:835px;top:914px;width:101px;height:6.5px;background:#ff93a4;border-radius:0;"></div>
<div style="left:835px;top:645px;width:101px;height:268px;overflow:hidden;">
<div style="left:7.6px;top:7px;width:37.4px;height:13.6px;background:#252525;border-radius:7px;border:1px solid #1a1a1a;"></div>
<div class="t" style="left:7.6px;top:9px;font-size:11.5px;color:#d8d8d8;font-weight:normal;font-family:'Liberation Sans', sans-serif;line-height:1;white-space:nowrap;width:37.4px;text-align:center;">-29.7</div>
<div style="left:7.6px;top:26.3px;width:37.4px;height:13.5px;background:#252525;border-radius:1px;border:1px solid #1a1a1a;"></div>
<div class="t" style="left:7.6px;top:28.1px;font-size:11.5px;color:#d8d8d8;font-weight:normal;font-family:'Liberation Sans', sans-serif;line-height:1;white-space:nowrap;width:37.4px;text-align:center;">-8.3</div>
<svg style="left:49.8px;top:60.5px;" width="12.5" height="14" viewBox="0 0 12.5 14"><path d="M0 0 L12.2 7 L0 14 Z" fill="#b4b4b4"/></svg>
<div style="left:63.5px;top:6.5px;width:13.3px;height:254px;background:#1c1c1c;border-radius:2px;"></div>
<div style="left:64.5px;top:171.6px;width:5px;height:29.4px;background:#13a844;"></div>
<div style="left:64.5px;top:201px;width:5px;height:59px;background:#19ec5c;"></div>
<div style="left:70.8px;top:180px;width:5px;height:21px;background:#13a844;"></div>
<div style="left:70.8px;top:201px;width:5px;height:59px;background:#19ec5c;"></div>
<div style="left:64.5px;top:161.7px;width:5px;height:1.3px;background:#19e35a;"></div>
<div style="left:70.8px;top:157.5px;width:5px;height:1.3px;background:#19e35a;"></div>
<div style="left:69.7px;top:7px;width:0.9px;height:253px;background:#4a4a4a;"></div>
<div style="left:64px;top:32.3px;width:12.3px;height:1.6px;background:#858585;"></div>
<div style="left:57.5px;top:7.8px;width:3.5px;height:1px;background:#6a6a6a;"></div>
<div class="t" style="left:80.6px;top:8.2px;font-size:10.4px;color:#ababab;font-weight:normal;font-family:'Liberation Sans', sans-serif;line-height:1;white-space:nowrap;">6</div>
<div style="left:57.5px;top:32.5px;width:3.5px;height:1px;background:#6a6a6a;"></div>
<div class="t" style="left:80.6px;top:29.2px;font-size:10.4px;color:#ababab;font-weight:normal;font-family:'Liberation Sans', sans-serif;line-height:1;white-space:nowrap;">0</div>
<div style="left:57.5px;top:56.9px;width:3.5px;height:1px;background:#6a6a6a;"></div>
<div class="t" style="left:80.6px;top:53.6px;font-size:10.4px;color:#ababab;font-weight:normal;font-family:'Liberation Sans', sans-serif;line-height:1;white-space:nowrap;">6</div>
<div style="left:57.5px;top:81.5px;width:3.5px;height:1px;background:#6a6a6a;"></div>
<div class="t" style="left:80.6px;top:78.2px;font-size:10.4px;color:#ababab;font-weight:normal;font-family:'Liberation Sans', sans-serif;line-height:1;white-space:nowrap;">12</div>
<div style="left:57.5px;top:106.5px;width:3.5px;height:1px;background:#6a6a6a;"></div>
<div class="t" style="left:80.6px;top:103.2px;font-size:10.4px;color:#ababab;font-weight:normal;font-family:'Liberation Sans', sans-serif;line-height:1;white-space:nowrap;">18</div>
<div style="left:57.5px;top:131.5px;width:3.5px;height:1px;background:#6a6a6a;"></div>
<div class="t" style="left:80.6px;top:128.2px;font-size:10.4px;color:#ababab;font-weight:normal;font-family:'Liberation Sans', sans-serif;line-height:1;white-space:nowrap;">24</div>
<div style="left:57.5px;top:157.9px;width:3.5px;height:1px;background:#6a6a6a;"></div>
<div class="t" style="left:80.6px;top:154.6px;font-size:10.4px;color:#ababab;font-weight:normal;font-family:'Liberation Sans', sans-serif;line-height:1;white-space:nowrap;">30</div>
<div style="left:57.5px;top:179.9px;width:3.5px;height:1px;background:#6a6a6a;"></div>
<div class="t" style="left:80.6px;top:176.6px;font-size:10.4px;color:#ababab;font-weight:normal;font-family:'Liberation Sans', sans-serif;line-height:1;white-space:nowrap;">36</div>
<div style="left:57.5px;top:199.2px;width:3.5px;height:1px;background:#6a6a6a;"></div>
<div class="t" style="left:80.6px;top:195.9px;font-size:10.4px;color:#ababab;font-weight:normal;font-family:'Liberation Sans', sans-serif;line-height:1;white-space:nowrap;">42</div>
<div style="left:57.5px;top:215.5px;width:3.5px;height:1px;background:#6a6a6a;"></div>
<div class="t" style="left:80.6px;top:212.2px;font-size:10.4px;color:#ababab;font-weight:normal;font-family:'Liberation Sans', sans-serif;line-height:1;white-space:nowrap;">48</div>
<div style="left:57.5px;top:231.1px;width:3.5px;height:1px;background:#6a6a6a;"></div>
<div class="t" style="left:80.6px;top:227.8px;font-size:10.4px;color:#ababab;font-weight:normal;font-family:'Liberation Sans', sans-serif;line-height:1;white-space:nowrap;">54</div>
<div style="left:57.5px;top:245.1px;width:3.5px;height:1px;background:#6a6a6a;"></div>
<div class="t" style="left:80.6px;top:241.8px;font-size:10.4px;color:#ababab;font-weight:normal;font-family:'Liberation Sans', sans-serif;line-height:1;white-space:nowrap;">60</div>
<div style="left:57.5px;top:256px;width:3.5px;height:1px;background:#6a6a6a;"></div>
<svg style="left:11px;top:161.7px;" width="32" height="36" viewBox="0 0 32 36"><path d="M11.8 1.3 H20 L15.9 5.3 Z" fill="#141414"/><path d="M8.5 32.8 A13.5 13.5 0 0 1 13.66 8.3 M18.34 8.3 A13.5 13.5 0 0 1 23.5 32.8" fill="none" stroke="#141414" stroke-width="2.3"/><path d="M16 7.5 V22" stroke="#141414" stroke-width="2"/></svg>
<div style="left:14.4px;top:199.7px;width:24px;height:23.3px;background:#f9a658;border-radius:1px;"></div>
<div class="t" style="left:14.4px;top:205.2px;font-size:14px;color:#111;font-weight:bold;font-family:'Liberation Sans', sans-serif;line-height:1;white-space:nowrap;width:24px;text-align:center;">16</div>
<div style="left:14.4px;top:228.2px;width:24px;height:13.7px;background:#1f1f1f;border-radius:1px;"></div>
<div class="t" style="left:14.4px;top:230px;font-size:11.5px;color:#d2d2d2;font-weight:normal;font-family:'Liberation Sans', sans-serif;line-height:1;white-space:nowrap;width:24px;text-align:center;">S</div>
<div style="left:14.4px;top:247px;width:24px;height:13.3px;background:#1f1f1f;border-radius:1px;"></div>
<svg style="left:21.4px;top:248.6px;" width="10" height="10" viewBox="0 0 10 10"><circle cx="5" cy="5" r="3.6" fill="#7a7a7a"/></svg>
</div>
<div style="left:938px;top:625.8px;width:101px;height:18.3px;background:#ff93a4;"></div>
<div class="t" style="left:941.5px;top:629.8px;font-size:11px;color:rgba(0,0,0,0.78);font-weight:bold;font-family:'Liberation Sans', sans-serif;line-height:1;white-space:nowrap;">Drone</div>
<div style="left:938px;top:644px;width:101px;height:1.5px;background:#262626;"></div>
<div style="left:938px;top:914px;width:101px;height:6.5px;background:#ff93a4;border-radius:0;"></div>
<div style="left:938px;top:645px;width:101px;height:268px;overflow:hidden;">
<div style="left:7.6px;top:7px;width:37.4px;height:13.6px;background:#252525;border-radius:7px;border:1px solid #1a1a1a;"></div>
<div class="t" style="left:7.6px;top:9px;font-size:11.5px;color:#d8d8d8;font-weight:normal;font-family:'Liberation Sans', sans-serif;line-height:1;white-space:nowrap;width:37.4px;text-align:center;">-25.0</div>
<div style="left:7.6px;top:26.3px;width:37.4px;height:13.5px;background:#252525;border-radius:1px;border:1px solid #1a1a1a;"></div>
<div class="t" style="left:7.6px;top:28.1px;font-size:11.5px;color:#d8d8d8;font-weight:normal;font-family:'Liberation Sans', sans-serif;line-height:1;white-space:nowrap;width:37.4px;text-align:center;">-15.6</div>
<svg style="left:49.8px;top:91px;" width="12.5" height="14" viewBox="0 0 12.5 14"><path d="M0 0 L12.2 7 L0 14 Z" fill="#b4b4b4"/></svg>
<div style="left:63.5px;top:6.5px;width:13.3px;height:254px;background:#1c1c1c;border-radius:2px;"></div>
<div style="left:64.5px;top:149px;width:5px;height:34.7px;background:#13a844;"></div>
<div style="left:64.5px;top:183.7px;width:5px;height:76.3px;background:#19ec5c;"></div>
<div style="left:70.8px;top:155.3px;width:5px;height:20.5px;background:#13a844;"></div>
<div style="left:70.8px;top:175.8px;width:5px;height:84.2px;background:#19ec5c;"></div>
<div style="left:70.8px;top:137.8px;width:5px;height:1.3px;background:#19e35a;"></div>
<div style="left:69.7px;top:7px;width:0.9px;height:253px;background:#4a4a4a;"></div>
<div style="left:64px;top:32.3px;width:12.3px;height:1.6px;background:#858585;"></div>
<div style="left:57.5px;top:7.8px;width:3.5px;height:1px;background:#6a6a6a;"></div>
<div class="t" style="left:80.6px;top:8.2px;font-size:10.4px;color:#ababab;font-weight:normal;font-family:'Liberation Sans', sans-serif;line-height:1;white-space:nowrap;">6</div>
<div style="left:57.5px;top:32.5px;width:3.5px;height:1px;background:#6a6a6a;"></div>
<div class="t" style="left:80.6px;top:29.2px;font-size:10.4px;color:#ababab;font-weight:normal;font-family:'Liberation Sans', sans-serif;line-height:1;white-space:nowrap;">0</div>
<div style="left:57.5px;top:56.9px;width:3.5px;height:1px;background:#6a6a6a;"></div>
<div class="t" style="left:80.6px;top:53.6px;font-size:10.4px;color:#ababab;font-weight:normal;font-family:'Liberation Sans', sans-serif;line-height:1;white-space:nowrap;">6</div>
<div style="left:57.5px;top:81.5px;width:3.5px;height:1px;background:#6a6a6a;"></div>
<div class="t" style="left:80.6px;top:78.2px;font-size:10.4px;color:#ababab;font-weight:normal;font-family:'Liberation Sans', sans-serif;line-height:1;white-space:nowrap;">12</div>
<div style="left:57.5px;top:106.5px;width:3.5px;height:1px;background:#6a6a6a;"></div>
<div class="t" style="left:80.6px;top:103.2px;font-size:10.4px;color:#ababab;font-weight:normal;font-family:'Liberation Sans', sans-serif;line-height:1;white-space:nowrap;">18</div>
<div style="left:57.5px;top:131.5px;width:3.5px;height:1px;background:#6a6a6a;"></div>
<div class="t" style="left:80.6px;top:128.2px;font-size:10.4px;color:#ababab;font-weight:normal;font-family:'Liberation Sans', sans-serif;line-height:1;white-space:nowrap;">24</div>
<div style="left:57.5px;top:157.9px;width:3.5px;height:1px;background:#6a6a6a;"></div>
<div class="t" style="left:80.6px;top:154.6px;font-size:10.4px;color:#ababab;font-weight:normal;font-family:'Liberation Sans', sans-serif;line-height:1;white-space:nowrap;">30</div>
<div style="left:57.5px;top:179.9px;width:3.5px;height:1px;background:#6a6a6a;"></div>
<div class="t" style="left:80.6px;top:176.6px;font-size:10.4px;color:#ababab;font-weight:normal;font-family:'Liberation Sans', sans-serif;line-height:1;white-space:nowrap;">36</div>
<div style="left:57.5px;top:199.2px;width:3.5px;height:1px;background:#6a6a6a;"></div>
<div class="t" style="left:80.6px;top:195.9px;font-size:10.4px;color:#ababab;font-weight:normal;font-family:'Liberation Sans', sans-serif;line-height:1;white-space:nowrap;">42</div>
<div style="left:57.5px;top:215.5px;width:3.5px;height:1px;background:#6a6a6a;"></div>
<div class="t" style="left:80.6px;top:212.2px;font-size:10.4px;color:#ababab;font-weight:normal;font-family:'Liberation Sans', sans-serif;line-height:1;white-space:nowrap;">48</div>
<div style="left:57.5px;top:231.1px;width:3.5px;height:1px;background:#6a6a6a;"></div>
<div class="t" style="left:80.6px;top:227.8px;font-size:10.4px;color:#ababab;font-weight:normal;font-family:'Liberation Sans', sans-serif;line-height:1;white-space:nowrap;">54</div>
<div style="left:57.5px;top:245.1px;width:3.5px;height:1px;background:#6a6a6a;"></div>
<div class="t" style="left:80.6px;top:241.8px;font-size:10.4px;color:#ababab;font-weight:normal;font-family:'Liberation Sans', sans-serif;line-height:1;white-space:nowrap;">60</div>
<div style="left:57.5px;top:256px;width:3.5px;height:1px;background:#6a6a6a;"></div>
<svg style="left:11px;top:161.7px;" width="32" height="36" viewBox="0 0 32 36"><path d="M11.8 1.3 H20 L15.9 5.3 Z" fill="#141414"/><path d="M8.5 32.8 A13.5 13.5 0 0 1 13.66 8.3 M18.34 8.3 A13.5 13.5 0 0 1 23.5 32.8" fill="none" stroke="#141414" stroke-width="2.3"/><path d="M16 7.5 V22" stroke="#141414" stroke-width="2"/></svg>
<div style="left:14.4px;top:199.7px;width:24px;height:23.3px;background:#f9a658;border-radius:1px;"></div>
<div class="t" style="left:14.4px;top:205.2px;font-size:14px;color:#111;font-weight:bold;font-family:'Liberation Sans', sans-serif;line-height:1;white-space:nowrap;width:24px;text-align:center;">17</div>
<div style="left:14.4px;top:228.2px;width:24px;height:13.7px;background:#1f1f1f;border-radius:1px;"></div>
<div class="t" style="left:14.4px;top:230px;font-size:11.5px;color:#d2d2d2;font-weight:normal;font-family:'Liberation Sans', sans-serif;line-height:1;white-space:nowrap;width:24px;text-align:center;">S</div>
<div style="left:14.4px;top:247px;width:24px;height:13.3px;background:#1f1f1f;border-radius:1px;"></div>
<svg style="left:21.4px;top:248.6px;" width="10" height="10" viewBox="0 0 10 10"><circle cx="5" cy="5" r="3.6" fill="#7a7a7a"/></svg>
</div>
<div style="left:1041px;top:625.8px;width:101px;height:18.3px;background:#d86ce4;"></div>
<div class="t" style="left:1044.5px;top:629.8px;font-size:11px;color:rgba(0,0,0,0.78);font-weight:bold;font-family:'Liberation Sans', sans-serif;line-height:1;white-space:nowrap;">FX</div>
<div style="left:1041px;top:644px;width:101px;height:1.5px;background:#262626;"></div>
<div style="left:1041px;top:914px;width:101px;height:6.5px;background:#d86ce4;border-radius:0;"></div>
<div style="left:1041px;top:645px;width:101px;height:268px;overflow:hidden;">
<div style="left:7.6px;top:7px;width:37.4px;height:13.6px;background:#252525;border-radius:7px;border:1px solid #1a1a1a;"></div>
<div class="t" style="left:7.6px;top:9px;font-size:11.5px;color:#d8d8d8;font-weight:normal;font-family:'Liberation Sans', sans-serif;line-height:1;white-space:nowrap;width:37.4px;text-align:center;">-19.6</div>
<div style="left:7.6px;top:26.3px;width:37.4px;height:13.5px;background:#252525;border-radius:1px;border:1px solid #1a1a1a;"></div>
<div class="t" style="left:7.6px;top:28.1px;font-size:11.5px;color:#d8d8d8;font-weight:normal;font-family:'Liberation Sans', sans-serif;line-height:1;white-space:nowrap;width:37.4px;text-align:center;">-4.1</div>
<svg style="left:49.8px;top:43px;" width="12.5" height="14" viewBox="0 0 12.5 14"><path d="M0 0 L12.2 7 L0 14 Z" fill="#b4b4b4"/></svg>
<div style="left:63.5px;top:6.5px;width:13.3px;height:254px;background:#1c1c1c;border-radius:2px;"></div>
<div style="left:64.5px;top:127px;width:5px;height:29px;background:#13a844;"></div>
<div style="left:64.5px;top:156px;width:5px;height:104px;background:#19ec5c;"></div>
<div style="left:70.8px;top:120.8px;width:5px;height:26.2px;background:#13a844;"></div>
<div style="left:70.8px;top:147px;width:5px;height:113px;background:#19ec5c;"></div>
<div style="left:64.5px;top:120px;width:5px;height:1.3px;background:#19e35a;"></div>
<div style="left:70.8px;top:115px;width:5px;height:1.3px;background:#19e35a;"></div>
<div style="left:69.7px;top:7px;width:0.9px;height:253px;background:#4a4a4a;"></div>
<div style="left:64px;top:32.3px;width:12.3px;height:1.6px;background:#858585;"></div>
<div style="left:57.5px;top:7.8px;width:3.5px;height:1px;background:#6a6a6a;"></div>
<div class="t" style="left:80.6px;top:8.2px;font-size:10.4px;color:#ababab;font-weight:normal;font-family:'Liberation Sans', sans-serif;line-height:1;white-space:nowrap;">6</div>
<div style="left:57.5px;top:32.5px;width:3.5px;height:1px;background:#6a6a6a;"></div>
<div class="t" style="left:80.6px;top:29.2px;font-size:10.4px;color:#ababab;font-weight:normal;font-family:'Liberation Sans', sans-serif;line-height:1;white-space:nowrap;">0</div>
<div style="left:57.5px;top:56.9px;width:3.5px;height:1px;background:#6a6a6a;"></div>
<div class="t" style="left:80.6px;top:53.6px;font-size:10.4px;color:#ababab;font-weight:normal;font-family:'Liberation Sans', sans-serif;line-height:1;white-space:nowrap;">6</div>
<div style="left:57.5px;top:81.5px;width:3.5px;height:1px;background:#6a6a6a;"></div>
<div class="t" style="left:80.6px;top:78.2px;font-size:10.4px;color:#ababab;font-weight:normal;font-family:'Liberation Sans', sans-serif;line-height:1;white-space:nowrap;">12</div>
<div style="left:57.5px;top:106.5px;width:3.5px;height:1px;background:#6a6a6a;"></div>
<div class="t" style="left:80.6px;top:103.2px;font-size:10.4px;color:#ababab;font-weight:normal;font-family:'Liberation Sans', sans-serif;line-height:1;white-space:nowrap;">18</div>
<div style="left:57.5px;top:131.5px;width:3.5px;height:1px;background:#6a6a6a;"></div>
<div class="t" style="left:80.6px;top:128.2px;font-size:10.4px;color:#ababab;font-weight:normal;font-family:'Liberation Sans', sans-serif;line-height:1;white-space:nowrap;">24</div>
<div style="left:57.5px;top:157.9px;width:3.5px;height:1px;background:#6a6a6a;"></div>
<div class="t" style="left:80.6px;top:154.6px;font-size:10.4px;color:#ababab;font-weight:normal;font-family:'Liberation Sans', sans-serif;line-height:1;white-space:nowrap;">30</div>
<div style="left:57.5px;top:179.9px;width:3.5px;height:1px;background:#6a6a6a;"></div>
<div class="t" style="left:80.6px;top:176.6px;font-size:10.4px;color:#ababab;font-weight:normal;font-family:'Liberation Sans', sans-serif;line-height:1;white-space:nowrap;">36</div>
<div style="left:57.5px;top:199.2px;width:3.5px;height:1px;background:#6a6a6a;"></div>
<div class="t" style="left:80.6px;top:195.9px;font-size:10.4px;color:#ababab;font-weight:normal;font-family:'Liberation Sans', sans-serif;line-height:1;white-space:nowrap;">42</div>
<div style="left:57.5px;top:215.5px;width:3.5px;height:1px;background:#6a6a6a;"></div>
<div class="t" style="left:80.6px;top:212.2px;font-size:10.4px;color:#ababab;font-weight:normal;font-family:'Liberation Sans', sans-serif;line-height:1;white-space:nowrap;">48</div>
<div style="left:57.5px;top:231.1px;width:3.5px;height:1px;background:#6a6a6a;"></div>
<div class="t" style="left:80.6px;top:227.8px;font-size:10.4px;color:#ababab;font-weight:normal;font-family:'Liberation Sans', sans-serif;line-height:1;white-space:nowrap;">54</div>
<div style="left:57.5px;top:245.1px;width:3.5px;height:1px;background:#6a6a6a;"></div>
<div class="t" style="left:80.6px;top:241.8px;font-size:10.4px;color:#ababab;font-weight:normal;font-family:'Liberation Sans', sans-serif;line-height:1;white-space:nowrap;">60</div>
<div style="left:57.5px;top:256px;width:3.5px;height:1px;background:#6a6a6a;"></div>
<svg style="left:11px;top:161.7px;" width="32" height="36" viewBox="0 0 32 36"><path d="M11.8 1.3 H20 L15.9 5.3 Z" fill="#141414"/><path d="M8.5 32.8 A13.5 13.5 0 0 1 13.66 8.3 M18.34 8.3 A13.5 13.5 0 0 1 23.5 32.8" fill="none" stroke="#141414" stroke-width="2.3"/><path d="M16 7.5 V22" stroke="#141414" stroke-width="2"/></svg>
<div style="left:14.4px;top:199.7px;width:24px;height:23.3px;background:#f9a658;border-radius:1px;"></div>
<div class="t" style="left:14.4px;top:205.2px;font-size:14px;color:#111;font-weight:bold;font-family:'Liberation Sans', sans-serif;line-height:1;white-space:nowrap;width:24px;text-align:center;">18</div>
<div style="left:14.4px;top:228.2px;width:24px;height:13.7px;background:#1f1f1f;border-radius:1px;"></div>
<div class="t" style="left:14.4px;top:230px;font-size:11.5px;color:#d2d2d2;font-weight:normal;font-family:'Liberation Sans', sans-serif;line-height:1;white-space:nowrap;width:24px;text-align:center;">S</div>
<div style="left:14.4px;top:247px;width:24px;height:13.3px;background:#1f1f1f;border-radius:1px;"></div>
<svg style="left:21.4px;top:248.6px;" width="10" height="10" viewBox="0 0 10 10"><circle cx="5" cy="5" r="3.6" fill="#7a7a7a"/></svg>
</div>
<div style="left:1144.5px;top:625.8px;width:92.5px;height:18.3px;background:#d86ce4;"></div>
<div class="t" style="left:1148px;top:629.8px;font-size:11px;color:rgba(0,0,0,0.78);font-weight:bold;font-family:'Liberation Sans', sans-serif;line-height:1;white-space:nowrap;">Zap</div>
<div style="left:1144.5px;top:644px;width:92.5px;height:1.5px;background:#262626;"></div>
<div style="left:1144.5px;top:914px;width:92.5px;height:6.5px;background:#d86ce4;border-radius:0;"></div>
<div style="left:1156px;top:645px;width:81px;height:268px;overflow:hidden;">
<div style="left:7.6px;top:7px;width:37.4px;height:13.6px;background:#252525;border-radius:7px;border:1px solid #1a1a1a;"></div>
<div class="t" style="left:7.6px;top:9px;font-size:11.5px;color:#d8d8d8;font-weight:normal;font-family:'Liberation Sans', sans-serif;line-height:1;white-space:nowrap;width:37.4px;text-align:center;">-24.6</div>
<div style="left:7.6px;top:26.3px;width:37.4px;height:13.5px;background:#252525;border-radius:1px;border:1px solid #1a1a1a;"></div>
<div class="t" style="left:7.6px;top:28.1px;font-size:11.5px;color:#d8d8d8;font-weight:normal;font-family:'Liberation Sans', sans-serif;line-height:1;white-space:nowrap;width:37.4px;text-align:center;">-19.4</div>
<svg style="left:49.8px;top:108px;" width="12.5" height="14" viewBox="0 0 12.5 14"><path d="M0 0 L12.2 7 L0 14 Z" fill="#b4b4b4"/></svg>
<div style="left:63.5px;top:6.5px;width:13.3px;height:254px;background:#1c1c1c;border-radius:2px;"></div>
<div style="left:64.5px;top:152.5px;width:5px;height:31.5px;background:#13a844;"></div>
<div style="left:64.5px;top:184px;width:5px;height:76px;background:#19ec5c;"></div>
<div style="left:70.8px;top:147.4px;width:5px;height:35.6px;background:#13a844;"></div>
<div style="left:70.8px;top:183px;width:5px;height:77px;background:#19ec5c;"></div>
<div style="left:64.5px;top:136.5px;width:5px;height:1.3px;background:#19e35a;"></div>
<div style="left:70.8px;top:139px;width:5px;height:1.3px;background:#19e35a;"></div>
<div style="left:69.7px;top:7px;width:0.9px;height:253px;background:#4a4a4a;"></div>
<div style="left:64px;top:32.3px;width:12.3px;height:1.6px;background:#858585;"></div>
<div style="left:57.5px;top:7.8px;width:3.5px;height:1px;background:#6a6a6a;"></div>
<div class="t" style="left:80.6px;top:8.2px;font-size:10.4px;color:#ababab;font-weight:normal;font-family:'Liberation Sans', sans-serif;line-height:1;white-space:nowrap;">6</div>
<div style="left:57.5px;top:32.5px;width:3.5px;height:1px;background:#6a6a6a;"></div>
<div class="t" style="left:80.6px;top:29.2px;font-size:10.4px;color:#ababab;font-weight:normal;font-family:'Liberation Sans', sans-serif;line-height:1;white-space:nowrap;">0</div>
<div style="left:57.5px;top:56.9px;width:3.5px;height:1px;background:#6a6a6a;"></div>
<div class="t" style="left:80.6px;top:53.6px;font-size:10.4px;color:#ababab;font-weight:normal;font-family:'Liberation Sans', sans-serif;line-height:1;white-space:nowrap;">6</div>
<div style="left:57.5px;top:81.5px;width:3.5px;height:1px;background:#6a6a6a;"></div>
<div class="t" style="left:80.6px;top:78.2px;font-size:10.4px;color:#ababab;font-weight:normal;font-family:'Liberation Sans', sans-serif;line-height:1;white-space:nowrap;">12</div>
<div style="left:57.5px;top:106.5px;width:3.5px;height:1px;background:#6a6a6a;"></div>
<div class="t" style="left:80.6px;top:103.2px;font-size:10.4px;color:#ababab;font-weight:normal;font-family:'Liberation Sans', sans-serif;line-height:1;white-space:nowrap;">18</div>
<div style="left:57.5px;top:131.5px;width:3.5px;height:1px;background:#6a6a6a;"></div>
<div class="t" style="left:80.6px;top:128.2px;font-size:10.4px;color:#ababab;font-weight:normal;font-family:'Liberation Sans', sans-serif;line-height:1;white-space:nowrap;">24</div>
<div style="left:57.5px;top:157.9px;width:3.5px;height:1px;background:#6a6a6a;"></div>
<div class="t" style="left:80.6px;top:154.6px;font-size:10.4px;color:#ababab;font-weight:normal;font-family:'Liberation Sans', sans-serif;line-height:1;white-space:nowrap;">30</div>
<div style="left:57.5px;top:179.9px;width:3.5px;height:1px;background:#6a6a6a;"></div>
<div class="t" style="left:80.6px;top:176.6px;font-size:10.4px;color:#ababab;font-weight:normal;font-family:'Liberation Sans', sans-serif;line-height:1;white-space:nowrap;">36</div>
<div style="left:57.5px;top:199.2px;width:3.5px;height:1px;background:#6a6a6a;"></div>
<div class="t" style="left:80.6px;top:195.9px;font-size:10.4px;color:#ababab;font-weight:normal;font-family:'Liberation Sans', sans-serif;line-height:1;white-space:nowrap;">42</div>
<div style="left:57.5px;top:215.5px;width:3.5px;height:1px;background:#6a6a6a;"></div>
<div class="t" style="left:80.6px;top:212.2px;font-size:10.4px;color:#ababab;font-weight:normal;font-family:'Liberation Sans', sans-serif;line-height:1;white-space:nowrap;">48</div>
<div style="left:57.5px;top:231.1px;width:3.5px;height:1px;background:#6a6a6a;"></div>
<div class="t" style="left:80.6px;top:227.8px;font-size:10.4px;color:#ababab;font-weight:normal;font-family:'Liberation Sans', sans-serif;line-height:1;white-space:nowrap;">54</div>
<div style="left:57.5px;top:245.1px;width:3.5px;height:1px;background:#6a6a6a;"></div>
<div class="t" style="left:80.6px;top:241.8px;font-size:10.4px;color:#ababab;font-weight:normal;font-family:'Liberation Sans', sans-serif;line-height:1;white-space:nowrap;">60</div>
<div style="left:57.5px;top:256px;width:3.5px;height:1px;background:#6a6a6a;"></div>
<svg style="left:11px;top:161.7px;" width="32" height="36" viewBox="0 0 32 36"><path d="M11.8 1.3 H20 L15.9 5.3 Z" fill="#141414"/><path d="M8.5 32.8 A13.5 13.5 0 0 1 13.66 8.3 M18.34 8.3 A13.5 13.5 0 0 1 23.5 32.8" fill="none" stroke="#141414" stroke-width="2.3"/><path d="M16 7.5 V22" stroke="#141414" stroke-width="2"/></svg>
<div style="left:14.4px;top:199.7px;width:24px;height:23.3px;background:#f9a658;border-radius:1px;"></div>
<div class="t" style="left:14.4px;top:205.2px;font-size:14px;color:#111;font-weight:bold;font-family:'Liberation Sans', sans-serif;line-height:1;white-space:nowrap;width:24px;text-align:center;">19</div>
<div style="left:14.4px;top:228.2px;width:24px;height:13.7px;background:#1f1f1f;border-radius:1px;"></div>
<div class="t" style="left:14.4px;top:230px;font-size:11.5px;color:#d2d2d2;font-weight:normal;font-family:'Liberation Sans', sans-serif;line-height:1;white-space:nowrap;width:24px;text-align:center;">S</div>
<div style="left:14.4px;top:247px;width:24px;height:13.3px;background:#1f1f1f;border-radius:1px;"></div>
<svg style="left:21.4px;top:248.6px;" width="10" height="10" viewBox="0 0 10 10"><circle cx="5" cy="5" r="4.4" fill="#d2d2d2"/><path d="M6 1.6 V5.6 Q6 7.2 4.4 7.2 H3.2" stroke="#1f1f1f" stroke-width="1.3" fill="none"/></svg>
</div>
<div style="left:1240.4px;top:625.8px;width:100.6px;height:18.3px;background:#cfcfcf;"></div>
<div class="t" style="left:1243.9px;top:629.8px;font-size:11px;color:rgba(0,0,0,0.78);font-weight:bold;font-family:'Liberation Sans', sans-serif;line-height:1;white-space:nowrap;">A Reverb</div>
<div style="left:1240.4px;top:644px;width:100.6px;height:1.5px;background:#262626;"></div>
<div style="left:1240.4px;top:914px;width:100.6px;height:6.5px;background:#cfcfcf;border-radius:0;"></div>
<div style="left:1240.4px;top:645px;width:100.6px;height:268px;overflow:hidden;">
<div style="left:7.6px;top:7px;width:37.4px;height:13.6px;background:#252525;border-radius:7px;border:1px solid #1a1a1a;"></div>
<div class="t" style="left:7.6px;top:9px;font-size:11.5px;color:#d8d8d8;font-weight:normal;font-family:'Liberation Sans', sans-serif;line-height:1;white-space:nowrap;width:37.4px;text-align:center;">-50.9</div>
<div style="left:7.6px;top:26.3px;width:37.4px;height:13.5px;background:#252525;border-radius:1px;border:1px solid #1a1a1a;"></div>
<div class="t" style="left:7.6px;top:28.1px;font-size:11.5px;color:#d8d8d8;font-weight:normal;font-family:'Liberation Sans', sans-serif;line-height:1;white-space:nowrap;width:37.4px;text-align:center;">0</div>
<svg style="left:49.8px;top:26px;" width="12.5" height="14" viewBox="0 0 12.5 14"><path d="M0 0 L12.2 7 L0 14 Z" fill="#b4b4b4"/></svg>
<div style="left:63.5px;top:6.5px;width:13.3px;height:254px;background:#1c1c1c;border-radius:2px;"></div>
<div style="left:64.5px;top:232px;width:5px;height:16px;background:#13a844;"></div>
<div style="left:64.5px;top:248px;width:5px;height:12px;background:#19ec5c;"></div>
<div style="left:70.8px;top:231px;width:5px;height:19px;background:#13a844;"></div>
<div style="left:70.8px;top:250px;width:5px;height:10px;background:#19ec5c;"></div>
<div style="left:64.5px;top:223px;width:5px;height:1.3px;background:#19e35a;"></div>
<div style="left:70.8px;top:229.5px;width:5px;height:1.3px;background:#19e35a;"></div>
<div style="left:69.7px;top:7px;width:0.9px;height:253px;background:#4a4a4a;"></div>
<div style="left:64px;top:32.3px;width:12.3px;height:1.6px;background:#858585;"></div>
<div style="left:57.5px;top:7.8px;width:3.5px;height:1px;background:#6a6a6a;"></div>
<div class="t" style="left:80.6px;top:8.2px;font-size:10.4px;color:#ababab;font-weight:normal;font-family:'Liberation Sans', sans-serif;line-height:1;white-space:nowrap;">6</div>
<div style="left:57.5px;top:32.5px;width:3.5px;height:1px;background:#6a6a6a;"></div>
<div class="t" style="left:80.6px;top:29.2px;font-size:10.4px;color:#ababab;font-weight:normal;font-family:'Liberation Sans', sans-serif;line-height:1;white-space:nowrap;">0</div>
<div style="left:57.5px;top:56.9px;width:3.5px;height:1px;background:#6a6a6a;"></div>
<div class="t" style="left:80.6px;top:53.6px;font-size:10.4px;color:#ababab;font-weight:normal;font-family:'Liberation Sans', sans-serif;line-height:1;white-space:nowrap;">6</div>
<div style="left:57.5px;top:81.5px;width:3.5px;height:1px;background:#6a6a6a;"></div>
<div class="t" style="left:80.6px;top:78.2px;font-size:10.4px;color:#ababab;font-weight:normal;font-family:'Liberation Sans', sans-serif;line-height:1;white-space:nowrap;">12</div>
<div style="left:57.5px;top:106.5px;width:3.5px;height:1px;background:#6a6a6a;"></div>
<div class="t" style="left:80.6px;top:103.2px;font-size:10.4px;color:#ababab;font-weight:normal;font-family:'Liberation Sans', sans-serif;line-height:1;white-space:nowrap;">18</div>
<div style="left:57.5px;top:131.5px;width:3.5px;height:1px;background:#6a6a6a;"></div>
<div class="t" style="left:80.6px;top:128.2px;font-size:10.4px;color:#ababab;font-weight:normal;font-family:'Liberation Sans', sans-serif;line-height:1;white-space:nowrap;">24</div>
<div style="left:57.5px;top:157.9px;width:3.5px;height:1px;background:#6a6a6a;"></div>
<div class="t" style="left:80.6px;top:154.6px;font-size:10.4px;color:#ababab;font-weight:normal;font-family:'Liberation Sans', sans-serif;line-height:1;white-space:nowrap;">30</div>
<div style="left:57.5px;top:179.9px;width:3.5px;height:1px;background:#6a6a6a;"></div>
<div class="t" style="left:80.6px;top:176.6px;font-size:10.4px;color:#ababab;font-weight:normal;font-family:'Liberation Sans', sans-serif;line-height:1;white-space:nowrap;">36</div>
<div style="left:57.5px;top:199.2px;width:3.5px;height:1px;background:#6a6a6a;"></div>
<div class="t" style="left:80.6px;top:195.9px;font-size:10.4px;color:#ababab;font-weight:normal;font-family:'Liberation Sans', sans-serif;line-height:1;white-space:nowrap;">42</div>
<div style="left:57.5px;top:215.5px;width:3.5px;height:1px;background:#6a6a6a;"></div>
<div class="t" style="left:80.6px;top:212.2px;font-size:10.4px;color:#ababab;font-weight:normal;font-family:'Liberation Sans', sans-serif;line-height:1;white-space:nowrap;">48</div>
<div style="left:57.5px;top:231.1px;width:3.5px;height:1px;background:#6a6a6a;"></div>
<div class="t" style="left:80.6px;top:227.8px;font-size:10.4px;color:#ababab;font-weight:normal;font-family:'Liberation Sans', sans-serif;line-height:1;white-space:nowrap;">54</div>
<div style="left:57.5px;top:245.1px;width:3.5px;height:1px;background:#6a6a6a;"></div>
<div class="t" style="left:80.6px;top:241.8px;font-size:10.4px;color:#ababab;font-weight:normal;font-family:'Liberation Sans', sans-serif;line-height:1;white-space:nowrap;">60</div>
<div style="left:57.5px;top:256px;width:3.5px;height:1px;background:#6a6a6a;"></div>
<svg style="left:11px;top:161.7px;" width="32" height="36" viewBox="0 0 32 36"><path d="M11.8 1.3 H20 L15.9 5.3 Z" fill="#141414"/><path d="M8.5 32.8 A13.5 13.5 0 0 1 13.66 8.3 M18.34 8.3 A13.5 13.5 0 0 1 23.5 32.8" fill="none" stroke="#141414" stroke-width="2.3"/><path d="M16 7.5 V22" stroke="#141414" stroke-width="2"/></svg>
<div style="left:14.4px;top:199.7px;width:24px;height:23.3px;background:#f9a658;border-radius:1px;"></div>
<div class="t" style="left:14.4px;top:205.2px;font-size:14px;color:#111;font-weight:bold;font-family:'Liberation Sans', sans-serif;line-height:1;white-space:nowrap;width:24px;text-align:center;">A</div>
<div style="left:14.4px;top:228.2px;width:24px;height:13.7px;background:#1f1f1f;border-radius:1px;"></div>
<div class="t" style="left:14.4px;top:230px;font-size:11.5px;color:#d2d2d2;font-weight:normal;font-family:'Liberation Sans', sans-serif;line-height:1;white-space:nowrap;width:24px;text-align:center;">S</div>
</div>
<div style="left:1343.7px;top:625.8px;width:100.9px;height:18.3px;background:#cfcfcf;"></div>
<div class="t" style="left:1347.2px;top:629.8px;font-size:11px;color:rgba(0,0,0,0.78);font-weight:bold;font-family:'Liberation Sans', sans-serif;line-height:1;white-space:nowrap;">B Delay</div>
<div style="left:1343.7px;top:644px;width:100.9px;height:1.5px;background:#262626;"></div>
<div style="left:1343.7px;top:914px;width:100.9px;height:6.5px;background:#cfcfcf;border-radius:0;"></div>
<div style="left:1343.7px;top:645px;width:100.9px;height:268px;overflow:hidden;">
<div style="left:7.6px;top:7px;width:37.4px;height:13.6px;background:#252525;border-radius:7px;border:1px solid #1a1a1a;"></div>
<div class="t" style="left:7.6px;top:9px;font-size:11.5px;color:#d8d8d8;font-weight:normal;font-family:'Liberation Sans', sans-serif;line-height:1;white-space:nowrap;width:37.4px;text-align:center;">-55.2</div>
<div style="left:7.6px;top:26.3px;width:37.4px;height:13.5px;background:#252525;border-radius:1px;border:1px solid #1a1a1a;"></div>
<div class="t" style="left:7.6px;top:28.1px;font-size:11.5px;color:#d8d8d8;font-weight:normal;font-family:'Liberation Sans', sans-serif;line-height:1;white-space:nowrap;width:37.4px;text-align:center;">0</div>
<svg style="left:49.8px;top:26px;" width="12.5" height="14" viewBox="0 0 12.5 14"><path d="M0 0 L12.2 7 L0 14 Z" fill="#b4b4b4"/></svg>
<div style="left:63.5px;top:6.5px;width:13.3px;height:254px;background:#1c1c1c;border-radius:2px;"></div>
<div style="left:64.5px;top:254px;width:5px;height:6px;background:#19ec5c;"></div>
<div style="left:70.8px;top:244px;width:5px;height:16px;background:#19ec5c;"></div>
<div style="left:64.5px;top:237px;width:5px;height:1.3px;background:#19e35a;"></div>
<div style="left:70.8px;top:234.5px;width:5px;height:1.3px;background:#19e35a;"></div>
<div style="left:69.7px;top:7px;width:0.9px;height:253px;background:#4a4a4a;"></div>
<div style="left:64px;top:32.3px;width:12.3px;height:1.6px;background:#858585;"></div>
<div style="left:57.5px;top:7.8px;width:3.5px;height:1px;background:#6a6a6a;"></div>
<div class="t" style="left:80.6px;top:8.2px;font-size:10.4px;color:#ababab;font-weight:normal;font-family:'Liberation Sans', sans-serif;line-height:1;white-space:nowrap;">6</div>
<div style="left:57.5px;top:32.5px;width:3.5px;height:1px;background:#6a6a6a;"></div>
<div class="t" style="left:80.6px;top:29.2px;font-size:10.4px;color:#ababab;font-weight:normal;font-family:'Liberation Sans', sans-serif;line-height:1;white-space:nowrap;">0</div>
<div style="left:57.5px;top:56.9px;width:3.5px;height:1px;background:#6a6a6a;"></div>
<div class="t" style="left:80.6px;top:53.6px;font-size:10.4px;color:#ababab;font-weight:normal;font-family:'Liberation Sans', sans-serif;line-height:1;white-space:nowrap;">6</div>
<div style="left:57.5px;top:81.5px;width:3.5px;height:1px;background:#6a6a6a;"></div>
<div class="t" style="left:80.6px;top:78.2px;font-size:10.4px;color:#ababab;font-weight:normal;font-family:'Liberation Sans', sans-serif;line-height:1;white-space:nowrap;">12</div>
<div style="left:57.5px;top:106.5px;width:3.5px;height:1px;background:#6a6a6a;"></div>
<div class="t" style="left:80.6px;top:103.2px;font-size:10.4px;color:#ababab;font-weight:normal;font-family:'Liberation Sans', sans-serif;line-height:1;white-space:nowrap;">18</div>
<div style="left:57.5px;top:131.5px;width:3.5px;height:1px;background:#6a6a6a;"></div>
<div class="t" style="left:80.6px;top:128.2px;font-size:10.4px;color:#ababab;font-weight:normal;font-family:'Liberation Sans', sans-serif;line-height:1;white-space:nowrap;">24</div>
<div style="left:57.5px;top:157.9px;width:3.5px;height:1px;background:#6a6a6a;"></div>
<div class="t" style="left:80.6px;top:154.6px;font-size:10.4px;color:#ababab;font-weight:normal;font-family:'Liberation Sans', sans-serif;line-height:1;white-space:nowrap;">30</div>
<div style="left:57.5px;top:179.9px;width:3.5px;height:1px;background:#6a6a6a;"></div>
<div class="t" style="left:80.6px;top:176.6px;font-size:10.4px;color:#ababab;font-weight:normal;font-family:'Liberation Sans', sans-serif;line-height:1;white-space:nowrap;">36</div>
<div style="left:57.5px;top:199.2px;width:3.5px;height:1px;background:#6a6a6a;"></div>
<div class="t" style="left:80.6px;top:195.9px;font-size:10.4px;color:#ababab;font-weight:normal;font-family:'Liberation Sans', sans-serif;line-height:1;white-space:nowrap;">42</div>
<div style="left:57.5px;top:215.5px;width:3.5px;height:1px;background:#6a6a6a;"></div>
<div class="t" style="left:80.6px;top:212.2px;font-size:10.4px;color:#ababab;font-weight:normal;font-family:'Liberation Sans', sans-serif;line-height:1;white-space:nowrap;">48</div>
<div style="left:57.5px;top:231.1px;width:3.5px;height:1px;background:#6a6a6a;"></div>
<div class="t" style="left:80.6px;top:227.8px;font-size:10.4px;color:#ababab;font-weight:normal;font-family:'Liberation Sans', sans-serif;line-height:1;white-space:nowrap;">54</div>
<div style="left:57.5px;top:245.1px;width:3.5px;height:1px;background:#6a6a6a;"></div>
<div class="t" style="left:80.6px;top:241.8px;font-size:10.4px;color:#ababab;font-weight:normal;font-family:'Liberation Sans', sans-serif;line-height:1;white-space:nowrap;">60</div>
<div style="left:57.5px;top:256px;width:3.5px;height:1px;background:#6a6a6a;"></div>
<svg style="left:11px;top:161.7px;" width="32" height="36" viewBox="0 0 32 36"><path d="M11.8 1.3 H20 L15.9 5.3 Z" fill="#141414"/><path d="M8.5 32.8 A13.5 13.5 0 0 1 13.66 8.3 M18.34 8.3 A13.5 13.5 0 0 1 23.5 32.8" fill="none" stroke="#141414" stroke-width="2.3"/><path d="M16 7.5 V22" stroke="#141414" stroke-width="2"/></svg>
<div style="left:14.4px;top:199.7px;width:24px;height:23.3px;background:#f9a658;border-radius:1px;"></div>
<div class="t" style="left:14.4px;top:205.2px;font-size:14px;color:#111;font-weight:bold;font-family:'Liberation Sans', sans-serif;line-height:1;white-space:nowrap;width:24px;text-align:center;">B</div>
<div style="left:14.4px;top:228.2px;width:24px;height:13.7px;background:#1f1f1f;border-radius:1px;"></div>
<div class="t" style="left:14.4px;top:230px;font-size:11.5px;color:#d2d2d2;font-weight:normal;font-family:'Liberation Sans', sans-serif;line-height:1;white-space:nowrap;width:24px;text-align:center;">S</div>
</div>
<div style="left:1446.7px;top:625.8px;width:107.3px;height:18.3px;background:#ffffff;"></div>
<div class="t" style="left:1450.2px;top:629.8px;font-size:11px;color:rgba(0,0,0,0.78);font-weight:bold;font-family:'Liberation Sans', sans-serif;line-height:1;white-space:nowrap;">Main</div>
<div style="left:1446.7px;top:644px;width:107.3px;height:1.5px;background:#262626;"></div>
<div style="left:1446.7px;top:914px;width:107.3px;height:6.5px;background:#ffffff;border-radius:0 0 5px 0;"></div>
<div style="left:1450px;top:645px;width:104px;height:268px;overflow:hidden;">
<div style="left:7.6px;top:7px;width:37.4px;height:13.6px;background:#252525;border-radius:7px;border:1px solid #1a1a1a;"></div>
<div class="t" style="left:7.6px;top:9px;font-size:11.5px;color:#d8d8d8;font-weight:normal;font-family:'Liberation Sans', sans-serif;line-height:1;white-space:nowrap;width:37.4px;text-align:center;">-0.30</div>
<div style="left:7.6px;top:26.3px;width:37.4px;height:13.5px;background:#252525;border-radius:1px;border:1px solid #1a1a1a;"></div>
<div class="t" style="left:7.6px;top:28.1px;font-size:11.5px;color:#d8d8d8;font-weight:normal;font-family:'Liberation Sans', sans-serif;line-height:1;white-space:nowrap;width:37.4px;text-align:center;">0</div>
<svg style="left:49.8px;top:26px;" width="12.5" height="14" viewBox="0 0 12.5 14"><path d="M0 0 L12.2 7 L0 14 Z" fill="#b4b4b4"/></svg>
<div style="left:63.5px;top:6.5px;width:13.3px;height:254px;background:#1c1c1c;border-radius:2px;"></div>
<div style="left:64.5px;top:95px;width:5px;height:10px;background:#9ee020;"></div>
<div style="left:64.5px;top:105px;width:5px;height:155px;background:#19ec5c;"></div>
<div style="left:70.8px;top:95px;width:5px;height:10px;background:#9ee020;"></div>
<div style="left:70.8px;top:105px;width:5px;height:155px;background:#19ec5c;"></div>
<div style="left:64.5px;top:34px;width:5px;height:1.3px;background:#d03020;"></div>
<div style="left:70.8px;top:34px;width:5px;height:1.3px;background:#d03020;"></div>
<div style="left:69.7px;top:7px;width:0.9px;height:253px;background:#4a4a4a;"></div>
<div style="left:64px;top:32.3px;width:12.3px;height:1.6px;background:#858585;"></div>
<div style="left:57.5px;top:7.8px;width:3.5px;height:1px;background:#6a6a6a;"></div>
<div class="t" style="left:80.6px;top:8.2px;font-size:10.4px;color:#ababab;font-weight:normal;font-family:'Liberation Sans', sans-serif;line-height:1;white-space:nowrap;">6</div>
<div style="left:57.5px;top:32.5px;width:3.5px;height:1px;background:#6a6a6a;"></div>
<div class="t" style="left:80.6px;top:29.2px;font-size:10.4px;color:#ababab;font-weight:normal;font-family:'Liberation Sans', sans-serif;line-height:1;white-space:nowrap;">0</div>
<div style="left:57.5px;top:56.9px;width:3.5px;height:1px;background:#6a6a6a;"></div>
<div class="t" style="left:80.6px;top:53.6px;font-size:10.4px;color:#ababab;font-weight:normal;font-family:'Liberation Sans', sans-serif;line-height:1;white-space:nowrap;">6</div>
<div style="left:57.5px;top:81.5px;width:3.5px;height:1px;background:#6a6a6a;"></div>
<div class="t" style="left:80.6px;top:78.2px;font-size:10.4px;color:#ababab;font-weight:normal;font-family:'Liberation Sans', sans-serif;line-height:1;white-space:nowrap;">12</div>
<div style="left:57.5px;top:106.5px;width:3.5px;height:1px;background:#6a6a6a;"></div>
<div class="t" style="left:80.6px;top:103.2px;font-size:10.4px;color:#ababab;font-weight:normal;font-family:'Liberation Sans', sans-serif;line-height:1;white-space:nowrap;">18</div>
<div style="left:57.5px;top:131.5px;width:3.5px;height:1px;background:#6a6a6a;"></div>
<div class="t" style="left:80.6px;top:128.2px;font-size:10.4px;color:#ababab;font-weight:normal;font-family:'Liberation Sans', sans-serif;line-height:1;white-space:nowrap;">24</div>
<div style="left:57.5px;top:157.9px;width:3.5px;height:1px;background:#6a6a6a;"></div>
<div class="t" style="left:80.6px;top:154.6px;font-size:10.4px;color:#ababab;font-weight:normal;font-family:'Liberation Sans', sans-serif;line-height:1;white-space:nowrap;">30</div>
<div style="left:57.5px;top:179.9px;width:3.5px;height:1px;background:#6a6a6a;"></div>
<div class="t" style="left:80.6px;top:176.6px;font-size:10.4px;color:#ababab;font-weight:normal;font-family:'Liberation Sans', sans-serif;line-height:1;white-space:nowrap;">36</div>
<div style="left:57.5px;top:199.2px;width:3.5px;height:1px;background:#6a6a6a;"></div>
<div class="t" style="left:80.6px;top:195.9px;font-size:10.4px;color:#ababab;font-weight:normal;font-family:'Liberation Sans', sans-serif;line-height:1;white-space:nowrap;">42</div>
<div style="left:57.5px;top:215.5px;width:3.5px;height:1px;background:#6a6a6a;"></div>
<div class="t" style="left:80.6px;top:212.2px;font-size:10.4px;color:#ababab;font-weight:normal;font-family:'Liberation Sans', sans-serif;line-height:1;white-space:nowrap;">48</div>
<div style="left:57.5px;top:231.1px;width:3.5px;height:1px;background:#6a6a6a;"></div>
<div class="t" style="left:80.6px;top:227.8px;font-size:10.4px;color:#ababab;font-weight:normal;font-family:'Liberation Sans', sans-serif;line-height:1;white-space:nowrap;">54</div>
<div style="left:57.5px;top:245.1px;width:3.5px;height:1px;background:#6a6a6a;"></div>
<div class="t" style="left:80.6px;top:241.8px;font-size:10.4px;color:#ababab;font-weight:normal;font-family:'Liberation Sans', sans-serif;line-height:1;white-space:nowrap;">60</div>
<div style="left:57.5px;top:256px;width:3.5px;height:1px;background:#6a6a6a;"></div>
<svg style="left:11px;top:161.7px;" width="32" height="36" viewBox="0 0 32 36"><path d="M11.8 1.3 H20 L15.9 5.3 Z" fill="#141414"/><path d="M8.5 32.8 A13.5 13.5 0 0 1 13.66 8.3 M18.34 8.3 A13.5 13.5 0 0 1 23.5 32.8" fill="none" stroke="#141414" stroke-width="2.3"/><path d="M16 7.5 V22" stroke="#141414" stroke-width="2"/></svg>
<div style="left:13px;top:210px;width:27px;height:13.3px;background:#6e6e6e;border:1px solid #262626;"></div>
<div class="t" style="left:13px;top:211.8px;font-size:11.5px;color:#2a2a2a;font-weight:normal;font-family:'Liberation Sans', sans-serif;line-height:1;white-space:nowrap;width:27px;text-align:center;">Solo</div>
<svg style="left:10.4px;top:227.4px;" width="32" height="33" viewBox="0 0 32 33"><path d="M6.45 25.55 A13.5 13.5 0 1 1 25.55 25.55" fill="none" stroke="#3a72d0" stroke-width="2.3"/><path d="M16 16 L27 19.8" stroke="#141414" stroke-width="2.2"/><path d="M12.3 31 V28.3 Q12.3 24.6 16 24.6 Q19.7 24.6 19.7 28.3 V31" fill="none" stroke="#bdbdbd" stroke-width="1.5"/><rect x="11.3" y="28" width="2.4" height="3.6" rx="1" fill="#bdbdbd"/><rect x="18.3" y="28" width="2.4" height="3.6" rx="1" fill="#bdbdbd"/></svg>
</div>
<div style="left:0px;top:921px;width:1564px;height:39px;background:#292929;"></div>
<svg style="left:12px;top:933px;" width="17" height="17" viewBox="0 0 17 17"><circle cx="8.5" cy="8.5" r="8" fill="#474747"/><rect x="7.5" y="7" width="2" height="6.5" fill="#292929"/><rect x="7.5" y="3.8" width="2" height="2" fill="#292929"/></svg>
<div style="left:46px;top:931px;width:977.5px;height:20px;background:#333333;border-radius:3px;"></div>
<div style="left:1034px;top:931px;width:238px;height:20px;background:#333333;border-radius:3px;"></div>
<div style="left:1054px;top:931px;width:1px;height:20px;background:#262626;"></div>
<svg style="left:1040px;top:936.5px;" width="9" height="10" viewBox="0 0 9 10"><path d="M0.5 0.5 L8 5 L0.5 9.5 Z" fill="#c8c8c8"/></svg>
<svg style="left:1055px;top:931px;" width="217" height="20" viewBox="0 0 217 20"><g fill="#1e1e1e"><rect x="2" y="4" width="6" height="1.2"/><rect x="8" y="15" width="6" height="1.2"/><rect x="22" y="15" width="8" height="1.2"/><rect x="35" y="13" width="6" height="1.2"/><rect x="45" y="4" width="4" height="1.2"/><rect x="55" y="15" width="6" height="1.2"/><rect x="75" y="15" width="8" height="1.2"/><rect x="88" y="13" width="6" height="1.2"/><rect x="100" y="4" width="4" height="1.2"/><rect x="110" y="15" width="6" height="1.2"/><rect x="128" y="15" width="8" height="1.2"/><rect x="140" y="13" width="6" height="1.2"/><rect x="152" y="4" width="4" height="1.2"/><rect x="160" y="15" width="6" height="1.2"/><rect x="177" y="15" width="8" height="1.2"/><rect x="190" y="13" width="6" height="1.2"/><rect x="203" y="4" width="4" height="1.2"/><rect x="208" y="15" width="6" height="1.2"/></g></svg>
<div style="left:1225px;top:931px;width:1.5px;height:20px;background:#e8e8e8;"></div>
<div style="left:1283px;top:931px;width:58px;height:20px;background:#333333;border-radius:3px;"></div>
<div style="left:1304px;top:931px;width:1px;height:20px;background:#262626;"></div>
<svg style="left:1289.5px;top:936.5px;" width="9" height="10" viewBox="0 0 9 10"><path d="M0.5 0.5 L8 5 L0.5 9.5 Z" fill="#c8c8c8"/></svg>
<div class="t" style="left:1311px;top:935.5px;font-size:11.5px;color:#c8c8c8;font-weight:bold;font-family:'Liberation Sans', sans-serif;line-height:1;white-space:nowrap;">Bass</div>
<div style="left:1342.6px;top:931px;width:159.4px;height:20px;background:#2e2e2e;"></div>
<div style="left:1342.6px;top:931.5px;width:13.9px;height:19px;background:#1e1e1e;"></div>
<div style="left:1357px;top:931.5px;width:13px;height:19px;background:#2f2f2f;"></div>
<div style="left:1370.5px;top:931.5px;width:44.5px;height:19px;background:#1c1c1c;"></div>
<div style="left:1415.5px;top:931.5px;width:29.5px;height:19px;background:#303030;"></div>
<div style="left:1445.5px;top:931.5px;width:29px;height:19px;background:#2c2c2c;"></div>
<div style="left:1476px;top:931.5px;width:26px;height:19px;background:#2a2a2a;"></div>
<div style="left:1343.5px;top:933px;width:12px;height:1.5px;background:#16a8c0;"></div>
<div style="left:1343.5px;top:942px;width:12px;height:1.5px;background:#e09040;"></div>
<div style="left:1371.5px;top:937px;width:42px;height:1px;background:#16a0b8;"></div>
<div style="left:1372px;top:946px;width:40px;height:1px;background:#16a0b8;"></div>
<div style="left:1446px;top:945px;width:13px;height:5px;background:#1a1a1a;"></div>
<div style="left:1460px;top:945px;width:13px;height:4px;background:#138a9a;"></div>
<div style="left:1477px;top:932.5px;width:3px;height:16px;background:#2a6a70;"></div>
<div style="left:1491px;top:933px;width:9px;height:1.5px;background:#e09040;"></div>
<div style="left:1491px;top:938px;width:9px;height:1.5px;background:#e09040;"></div>
<div style="left:1416px;top:937px;width:4px;height:1.5px;background:#e09040;"></div>
<div style="left:1416px;top:932.5px;width:5px;height:1.5px;background:#e09040;"></div>
<div style="left:1481px;top:933px;width:9px;height:16px;background:#1a1a1a;"></div>
<div style="left:1438.44px;top:946.57px;width:2px;height:1px;background:#555;"></div>
<div style="left:1365.04px;top:940.09px;width:1px;height:1px;background:#666;"></div>
<div style="left:1423.54px;top:933.54px;width:3px;height:1px;background:#444;"></div>
<div style="left:1471.04px;top:948.4px;width:3px;height:1px;background:#444;"></div>
<div style="left:1445.89px;top:940.98px;width:1px;height:1px;background:#1aa8c0;"></div>
<div style="left:1363px;top:945.23px;width:2px;height:1px;background:#e09040;"></div>
<div style="left:1451.57px;top:937px;width:3px;height:1px;background:#1aa8c0;"></div>
<div style="left:1432.85px;top:938.92px;width:1px;height:2px;background:#666;"></div>
<div style="left:1401.96px;top:940.72px;width:1px;height:1px;background:#1aa8c0;"></div>
<div style="left:1418.36px;top:936.95px;width:1px;height:1px;background:#1aa8c0;"></div>
<div style="left:1359.1px;top:947.47px;width:2px;height:2px;background:#555;"></div>
<div style="left:1417.44px;top:942.7px;width:2px;height:2px;background:#444;"></div>
<div style="left:1345.99px;top:932.26px;width:1px;height:1px;background:#555;"></div>
<div style="left:1364.07px;top:932.19px;width:2px;height:1px;background:#555;"></div>
<div style="left:1488.86px;top:939.61px;width:3px;height:1px;background:#1aa8c0;"></div>
<div style="left:1432.56px;top:933.98px;width:1px;height:1px;background:#555;"></div>
<div style="left:1406.37px;top:948.57px;width:2px;height:1px;background:#666;"></div>
<div style="left:1358.87px;top:948.93px;width:3px;height:1px;background:#666;"></div>
<div style="left:1353.38px;top:935.63px;width:1px;height:2px;background:#e09040;"></div>
<div style="left:1386.53px;top:933.26px;width:3px;height:1px;background:#1aa8c0;"></div>
<div style="left:1349.15px;top:938.32px;width:1px;height:2px;background:#555;"></div>
<div style="left:1449.03px;top:938.56px;width:1px;height:2px;background:#444;"></div>
<div style="left:1365.18px;top:936.24px;width:1px;height:1px;background:#1aa8c0;"></div>
<div style="left:1497.85px;top:947px;width:1px;height:2px;background:#666;"></div>
<div style="left:1343.73px;top:932.66px;width:1px;height:2px;background:#e09040;"></div>
<div style="left:1387.96px;top:947.38px;width:2px;height:1px;background:#555;"></div>
<div style="left:1498.48px;top:934.15px;width:3px;height:1px;background:#555;"></div>
<div style="left:1379.31px;top:947.55px;width:1px;height:1px;background:#444;"></div>
<div style="left:1387.57px;top:936.23px;width:1px;height:2px;background:#1aa8c0;"></div>
<div style="left:1392.54px;top:948.54px;width:2px;height:1px;background:#1aa8c0;"></div>
<div style="left:1441.48px;top:943.17px;width:3px;height:1px;background:#444;"></div>
<div style="left:1446.41px;top:932.3px;width:3px;height:2px;background:#e09040;"></div>
<div style="left:1342.83px;top:942.82px;width:1px;height:2px;background:#555;"></div>
<div style="left:1376.17px;top:933.23px;width:3px;height:2px;background:#555;"></div>
<div style="left:1477.02px;top:947.92px;width:3px;height:1px;background:#444;"></div>
<div style="left:1385.1px;top:943.65px;width:2px;height:1px;background:#1aa8c0;"></div>
<div style="left:1430.68px;top:942.62px;width:2px;height:1px;background:#555;"></div>
<div style="left:1447.38px;top:933.54px;width:2px;height:2px;background:#1aa8c0;"></div>
<div style="left:1483.59px;top:947.88px;width:3px;height:2px;background:#444;"></div>
<div style="left:1427.76px;top:941.2px;width:3px;height:1px;background:#666;"></div>
<div style="left:1395.45px;top:940.18px;width:3px;height:1px;background:#1aa8c0;"></div>
<div style="left:1436.17px;top:943.22px;width:2px;height:1px;background:#555;"></div>
<div style="left:1382.99px;top:943.53px;width:3px;height:1px;background:#1aa8c0;"></div>
<div style="left:1397.89px;top:939.51px;width:2px;height:2px;background:#1aa8c0;"></div>
<div style="left:1481.76px;top:942.78px;width:1px;height:2px;background:#1aa8c0;"></div>
<div style="left:1362.83px;top:937.38px;width:1px;height:2px;background:#1aa8c0;"></div>
<div style="left:1405.24px;top:946.43px;width:1px;height:2px;background:#444;"></div>
<div style="left:1358.13px;top:940.01px;width:2px;height:2px;background:#1aa8c0;"></div>
<div style="left:1487.96px;top:943.43px;width:3px;height:2px;background:#444;"></div>
<div style="left:1373.6px;top:932.54px;width:1px;height:2px;background:#666;"></div>
<div style="left:1454.71px;top:943.04px;width:1px;height:1px;background:#666;"></div>
<div style="left:1427.55px;top:932.42px;width:1px;height:1px;background:#e09040;"></div>
<div style="left:1353.33px;top:933.96px;width:3px;height:2px;background:#1aa8c0;"></div>
<div style="left:1350.06px;top:935.39px;width:2px;height:1px;background:#555;"></div>
<div style="left:1476.25px;top:940.03px;width:1px;height:1px;background:#444;"></div>
<div style="left:1359.72px;top:937.88px;width:3px;height:1px;background:#444;"></div>
<div style="left:1437.99px;top:943.9px;width:1px;height:2px;background:#1aa8c0;"></div>
<div style="left:1484.92px;top:939.66px;width:3px;height:1px;background:#1aa8c0;"></div>
<div style="left:1430.08px;top:943.1px;width:2px;height:2px;background:#666;"></div>
<div style="left:1397.53px;top:935.48px;width:3px;height:1px;background:#444;"></div>
<svg style="left:1520px;top:932px;" width="17" height="17" viewBox="0 0 17 17"><g fill="#f9a658"><rect x="1" y="6" width="2.5" height="9.8"/><rect x="5.3" y="2" width="2.5" height="13.8"/><rect x="9.3" y="7.2" width="2.5" height="8.6"/><rect x="13.3" y="4" width="2.5" height="11.8"/></g></svg>
<svg style="left:1543.5px;top:938px;" width="8" height="6" viewBox="0 0 8 6"><path d="M0 0 H7.5 L3.75 5.3 Z" fill="#4a4a4a"/></svg>
</div></body></html>
